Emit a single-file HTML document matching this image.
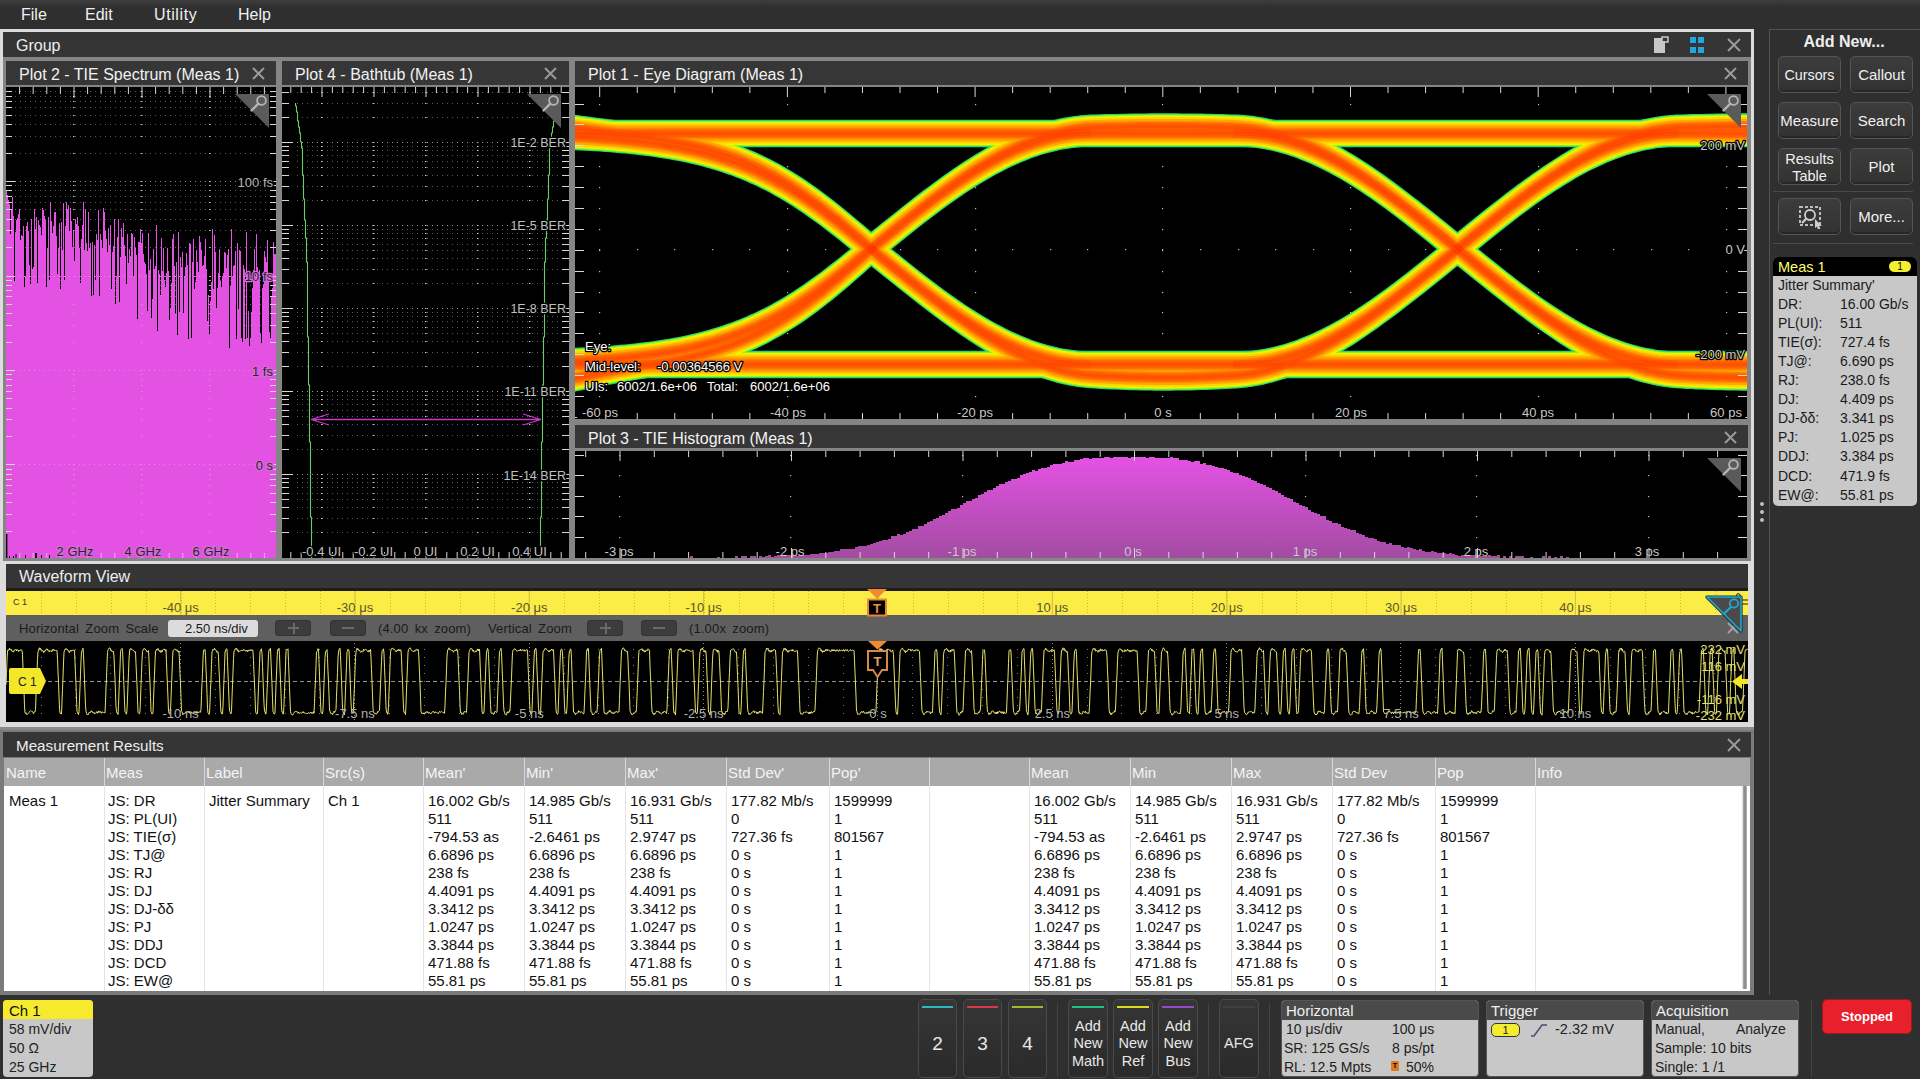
<!DOCTYPE html><html><head><meta charset="utf-8"><style>*{margin:0;padding:0}html,body{width:1920px;height:1079px;overflow:hidden;background:#2f2f2f;font-family:"Liberation Sans", sans-serif;position:relative}</style></head><body>
<div style="position:absolute;left:0px;top:0px;width:1920px;height:29px;background:linear-gradient(#3e3e3e 0px,#333 5px,#2f2f2f 8px,#2f2f2f 29px)"></div>
<div style="position:absolute;left:21px;top:7px;font-size:16px;color:#f0f0f0;font-weight:400;white-space:pre;line-height:1;">File</div>
<div style="position:absolute;left:85px;top:7px;font-size:16px;color:#f0f0f0;font-weight:400;white-space:pre;line-height:1;">Edit</div>
<div style="position:absolute;left:154px;top:7px;font-size:16px;color:#f0f0f0;font-weight:400;white-space:pre;line-height:1;letter-spacing:0.6px">Utility</div>
<div style="position:absolute;left:238px;top:7px;font-size:16px;color:#f0f0f0;font-weight:400;white-space:pre;line-height:1;">Help</div>
<div style="position:absolute;left:0px;top:29px;width:1754px;height:535px;background:#dcdcdc"></div>
<div style="position:absolute;left:3px;top:32px;width:1748px;height:25px;background:#353535"></div>
<div style="position:absolute;left:16px;top:38px;font-size:16px;color:#eeeeee;font-weight:400;white-space:pre;line-height:1;">Group</div>
<div style="position:absolute;left:3px;top:57px;width:1748px;height:504px;background:#858585"></div>
<div style="position:absolute;left:6px;top:61px;width:270px;height:24px;background:#363636"></div>
<div style="position:absolute;left:282px;top:61px;width:287px;height:24px;background:#363636"></div>
<div style="position:absolute;left:575px;top:61px;width:1173px;height:24px;background:#363636"></div>
<div style="position:absolute;left:575px;top:425px;width:1173px;height:23px;background:#363636"></div>
<div style="position:absolute;left:19px;top:66.5px;font-size:16px;color:#f2f2f2;font-weight:400;white-space:pre;line-height:1;">Plot 2 - TIE Spectrum (Meas 1)</div>
<div style="position:absolute;left:295px;top:66.5px;font-size:16px;color:#f2f2f2;font-weight:400;white-space:pre;line-height:1;">Plot 4 - Bathtub (Meas 1)</div>
<div style="position:absolute;left:588px;top:66.5px;font-size:16px;color:#f2f2f2;font-weight:400;white-space:pre;line-height:1;">Plot 1 - Eye Diagram (Meas 1)</div>
<div style="position:absolute;left:588px;top:430.5px;font-size:16px;color:#f2f2f2;font-weight:400;white-space:pre;line-height:1;">Plot 3 - TIE Histogram (Meas 1)</div>
<svg style="position:absolute;left:252px;top:67px" width="13" height="13"><path d="M1 1L12 12M12 1L1 12" stroke="#9a9a9a" stroke-width="2"/></svg>
<svg style="position:absolute;left:544px;top:67px" width="13" height="13"><path d="M1 1L12 12M12 1L1 12" stroke="#9a9a9a" stroke-width="2"/></svg>
<svg style="position:absolute;left:1724px;top:67px" width="13" height="13"><path d="M1 1L12 12M12 1L1 12" stroke="#9a9a9a" stroke-width="2"/></svg>
<svg style="position:absolute;left:1724px;top:431px" width="13" height="13"><path d="M1 1L12 12M12 1L1 12" stroke="#9a9a9a" stroke-width="2"/></svg>
<svg style="position:absolute;left:1652px;top:36px" width="18" height="20"><path d="M2 2H10V5H13V17H2Z" fill="#c8c8c8"/><rect x="10" y="1" width="6" height="5" fill="none" stroke="#c8c8c8" stroke-width="1.5"/></svg>
<svg style="position:absolute;left:1689px;top:36px" width="16" height="20"><rect x="1" y="1" width="6" height="6" fill="#1ea8dc"/><rect x="9" y="1" width="6" height="6" fill="#1ea8dc"/><rect x="1" y="11" width="6" height="6" fill="#1ea8dc"/><rect x="9" y="11" width="6" height="6" fill="#1ea8dc"/></svg>
<svg style="position:absolute;left:1727px;top:38px" width="14" height="14"><path d="M1 1L13 13M13 1L1 13" stroke="#9a9a9a" stroke-width="2"/></svg>
<div style="position:absolute;left:6px;top:87px;width:270px;height:471px;background:#000"><!--PLOT2--></div>
<div style="position:absolute;left:282px;top:87px;width:287px;height:471px;background:#000"><!--PLOT4--></div>
<div style="position:absolute;left:575px;top:87px;width:1172px;height:332px;background:#000"><!--PLOT1--></div>
<div style="position:absolute;left:575px;top:451px;width:1172px;height:107px;background:#000"><!--PLOT3--></div>
<div style="position:absolute;left:0px;top:561px;width:1754px;height:3px;background:#dcdcdc"></div>
<div style="position:absolute;left:0px;top:564px;width:1754px;height:166px;background:#dcdcdc"></div>
<div style="position:absolute;left:6px;top:564px;width:1742px;height:24px;background:#353535"></div>
<div style="position:absolute;left:19px;top:569px;font-size:16px;color:#eeeeee;font-weight:400;white-space:pre;line-height:1;">Waveform View</div>
<div style="position:absolute;left:6px;top:588px;width:1742px;height:3px;background:#1e1e1e"></div>
<div style="position:absolute;left:6px;top:591px;width:1742px;height:24px;background:#fbec46"><!--RULER--></div>
<div style="position:absolute;left:6px;top:615px;width:1742px;height:26px;background:#5f5f5f"><!--ZOOMBAR--></div>
<div style="position:absolute;left:6px;top:641px;width:1742px;height:81px;background:#000"><!--WAVE--></div>
<div style="position:absolute;left:0px;top:727px;width:1754px;height:3px;background:#8a8a8a"></div>
<div style="position:absolute;left:0px;top:730px;width:1754px;height:265px;background:#7a7a7a"></div>
<div style="position:absolute;left:3px;top:732px;width:1748px;height:25px;background:#353535"></div>
<div style="position:absolute;left:16px;top:738px;font-size:15.2px;color:#eeeeee;font-weight:400;white-space:pre;line-height:1;">Measurement Results</div>
<svg style="position:absolute;left:1727px;top:738px" width="14" height="14"><path d="M1 1L13 13M13 1L1 13" stroke="#9a9a9a" stroke-width="2"/></svg>
<div style="position:absolute;left:4px;top:758px;width:1746px;height:28px;background:#a9a9a9"><!--THEAD--></div>
<div style="position:absolute;left:4px;top:786px;width:1746px;height:205px;background:#ffffff"><!--TBODY--></div>
<div style="position:absolute;left:1769px;top:29px;width:151px;height:1px;background:#505050"></div>
<div style="position:absolute;left:1769px;top:29px;width:1px;height:966px;background:#505050"></div>
<div style="position:absolute;left:6px;top:765px;font-size:15px;color:#f4f4f4;font-weight:400;white-space:pre;line-height:1;">Name</div>
<div style="position:absolute;left:104px;top:758px;width:1px;height:233px;background:#e4e4e4"></div>
<div style="position:absolute;left:104px;top:758px;width:1px;height:28px;background:#d8d8d8"></div>
<div style="position:absolute;left:106px;top:765px;font-size:15px;color:#f4f4f4;font-weight:400;white-space:pre;line-height:1;">Meas</div>
<div style="position:absolute;left:204px;top:758px;width:1px;height:233px;background:#e4e4e4"></div>
<div style="position:absolute;left:204px;top:758px;width:1px;height:28px;background:#d8d8d8"></div>
<div style="position:absolute;left:206px;top:765px;font-size:15px;color:#f4f4f4;font-weight:400;white-space:pre;line-height:1;">Label</div>
<div style="position:absolute;left:323px;top:758px;width:1px;height:233px;background:#e4e4e4"></div>
<div style="position:absolute;left:323px;top:758px;width:1px;height:28px;background:#d8d8d8"></div>
<div style="position:absolute;left:325px;top:765px;font-size:15px;color:#f4f4f4;font-weight:400;white-space:pre;line-height:1;">Src(s)</div>
<div style="position:absolute;left:423px;top:758px;width:1px;height:233px;background:#e4e4e4"></div>
<div style="position:absolute;left:423px;top:758px;width:1px;height:28px;background:#d8d8d8"></div>
<div style="position:absolute;left:425px;top:765px;font-size:15px;color:#f4f4f4;font-weight:400;white-space:pre;line-height:1;">Mean'</div>
<div style="position:absolute;left:524px;top:758px;width:1px;height:233px;background:#e4e4e4"></div>
<div style="position:absolute;left:524px;top:758px;width:1px;height:28px;background:#d8d8d8"></div>
<div style="position:absolute;left:526px;top:765px;font-size:15px;color:#f4f4f4;font-weight:400;white-space:pre;line-height:1;">Min'</div>
<div style="position:absolute;left:625px;top:758px;width:1px;height:233px;background:#e4e4e4"></div>
<div style="position:absolute;left:625px;top:758px;width:1px;height:28px;background:#d8d8d8"></div>
<div style="position:absolute;left:627px;top:765px;font-size:15px;color:#f4f4f4;font-weight:400;white-space:pre;line-height:1;">Max'</div>
<div style="position:absolute;left:726px;top:758px;width:1px;height:233px;background:#e4e4e4"></div>
<div style="position:absolute;left:726px;top:758px;width:1px;height:28px;background:#d8d8d8"></div>
<div style="position:absolute;left:728px;top:765px;font-size:15px;color:#f4f4f4;font-weight:400;white-space:pre;line-height:1;">Std Dev'</div>
<div style="position:absolute;left:829px;top:758px;width:1px;height:233px;background:#e4e4e4"></div>
<div style="position:absolute;left:829px;top:758px;width:1px;height:28px;background:#d8d8d8"></div>
<div style="position:absolute;left:831px;top:765px;font-size:15px;color:#f4f4f4;font-weight:400;white-space:pre;line-height:1;">Pop'</div>
<div style="position:absolute;left:929px;top:758px;width:1px;height:233px;background:#e4e4e4"></div>
<div style="position:absolute;left:929px;top:758px;width:1px;height:28px;background:#d8d8d8"></div>
<div style="position:absolute;left:931px;top:765px;font-size:15px;color:#f4f4f4;font-weight:400;white-space:pre;line-height:1;"></div>
<div style="position:absolute;left:1029px;top:758px;width:1px;height:233px;background:#e4e4e4"></div>
<div style="position:absolute;left:1029px;top:758px;width:1px;height:28px;background:#d8d8d8"></div>
<div style="position:absolute;left:1031px;top:765px;font-size:15px;color:#f4f4f4;font-weight:400;white-space:pre;line-height:1;">Mean</div>
<div style="position:absolute;left:1130px;top:758px;width:1px;height:233px;background:#e4e4e4"></div>
<div style="position:absolute;left:1130px;top:758px;width:1px;height:28px;background:#d8d8d8"></div>
<div style="position:absolute;left:1132px;top:765px;font-size:15px;color:#f4f4f4;font-weight:400;white-space:pre;line-height:1;">Min</div>
<div style="position:absolute;left:1231px;top:758px;width:1px;height:233px;background:#e4e4e4"></div>
<div style="position:absolute;left:1231px;top:758px;width:1px;height:28px;background:#d8d8d8"></div>
<div style="position:absolute;left:1233px;top:765px;font-size:15px;color:#f4f4f4;font-weight:400;white-space:pre;line-height:1;">Max</div>
<div style="position:absolute;left:1332px;top:758px;width:1px;height:233px;background:#e4e4e4"></div>
<div style="position:absolute;left:1332px;top:758px;width:1px;height:28px;background:#d8d8d8"></div>
<div style="position:absolute;left:1334px;top:765px;font-size:15px;color:#f4f4f4;font-weight:400;white-space:pre;line-height:1;">Std Dev</div>
<div style="position:absolute;left:1435px;top:758px;width:1px;height:233px;background:#e4e4e4"></div>
<div style="position:absolute;left:1435px;top:758px;width:1px;height:28px;background:#d8d8d8"></div>
<div style="position:absolute;left:1437px;top:765px;font-size:15px;color:#f4f4f4;font-weight:400;white-space:pre;line-height:1;">Pop</div>
<div style="position:absolute;left:1535px;top:758px;width:1px;height:233px;background:#e4e4e4"></div>
<div style="position:absolute;left:1535px;top:758px;width:1px;height:28px;background:#d8d8d8"></div>
<div style="position:absolute;left:1537px;top:765px;font-size:15px;color:#f4f4f4;font-weight:400;white-space:pre;line-height:1;">Info</div>
<div style="position:absolute;left:9px;top:793px;font-size:15px;color:#111;font-weight:400;white-space:pre;line-height:1;">Meas 1</div>
<div style="position:absolute;left:209px;top:793px;font-size:15px;color:#111;font-weight:400;white-space:pre;line-height:1;">Jitter Summary</div>
<div style="position:absolute;left:328px;top:793px;font-size:15px;color:#111;font-weight:400;white-space:pre;line-height:1;">Ch 1</div>
<div style="position:absolute;left:108px;top:793px;font-size:15px;color:#111;font-weight:400;white-space:pre;line-height:1;">JS: DR</div>
<div style="position:absolute;left:428px;top:793px;font-size:15px;color:#111;font-weight:400;white-space:pre;line-height:1;">16.002 Gb/s</div>
<div style="position:absolute;left:529px;top:793px;font-size:15px;color:#111;font-weight:400;white-space:pre;line-height:1;">14.985 Gb/s</div>
<div style="position:absolute;left:630px;top:793px;font-size:15px;color:#111;font-weight:400;white-space:pre;line-height:1;">16.931 Gb/s</div>
<div style="position:absolute;left:731px;top:793px;font-size:15px;color:#111;font-weight:400;white-space:pre;line-height:1;">177.82 Mb/s</div>
<div style="position:absolute;left:834px;top:793px;font-size:15px;color:#111;font-weight:400;white-space:pre;line-height:1;">1599999</div>
<div style="position:absolute;left:1034px;top:793px;font-size:15px;color:#111;font-weight:400;white-space:pre;line-height:1;">16.002 Gb/s</div>
<div style="position:absolute;left:1135px;top:793px;font-size:15px;color:#111;font-weight:400;white-space:pre;line-height:1;">14.985 Gb/s</div>
<div style="position:absolute;left:1236px;top:793px;font-size:15px;color:#111;font-weight:400;white-space:pre;line-height:1;">16.931 Gb/s</div>
<div style="position:absolute;left:1337px;top:793px;font-size:15px;color:#111;font-weight:400;white-space:pre;line-height:1;">177.82 Mb/s</div>
<div style="position:absolute;left:1440px;top:793px;font-size:15px;color:#111;font-weight:400;white-space:pre;line-height:1;">1599999</div>
<div style="position:absolute;left:108px;top:811px;font-size:15px;color:#111;font-weight:400;white-space:pre;line-height:1;">JS: PL(UI)</div>
<div style="position:absolute;left:428px;top:811px;font-size:15px;color:#111;font-weight:400;white-space:pre;line-height:1;">511</div>
<div style="position:absolute;left:529px;top:811px;font-size:15px;color:#111;font-weight:400;white-space:pre;line-height:1;">511</div>
<div style="position:absolute;left:630px;top:811px;font-size:15px;color:#111;font-weight:400;white-space:pre;line-height:1;">511</div>
<div style="position:absolute;left:731px;top:811px;font-size:15px;color:#111;font-weight:400;white-space:pre;line-height:1;">0</div>
<div style="position:absolute;left:834px;top:811px;font-size:15px;color:#111;font-weight:400;white-space:pre;line-height:1;">1</div>
<div style="position:absolute;left:1034px;top:811px;font-size:15px;color:#111;font-weight:400;white-space:pre;line-height:1;">511</div>
<div style="position:absolute;left:1135px;top:811px;font-size:15px;color:#111;font-weight:400;white-space:pre;line-height:1;">511</div>
<div style="position:absolute;left:1236px;top:811px;font-size:15px;color:#111;font-weight:400;white-space:pre;line-height:1;">511</div>
<div style="position:absolute;left:1337px;top:811px;font-size:15px;color:#111;font-weight:400;white-space:pre;line-height:1;">0</div>
<div style="position:absolute;left:1440px;top:811px;font-size:15px;color:#111;font-weight:400;white-space:pre;line-height:1;">1</div>
<div style="position:absolute;left:108px;top:829px;font-size:15px;color:#111;font-weight:400;white-space:pre;line-height:1;">JS: TIE(σ)</div>
<div style="position:absolute;left:428px;top:829px;font-size:15px;color:#111;font-weight:400;white-space:pre;line-height:1;">-794.53 as</div>
<div style="position:absolute;left:529px;top:829px;font-size:15px;color:#111;font-weight:400;white-space:pre;line-height:1;">-2.6461 ps</div>
<div style="position:absolute;left:630px;top:829px;font-size:15px;color:#111;font-weight:400;white-space:pre;line-height:1;">2.9747 ps</div>
<div style="position:absolute;left:731px;top:829px;font-size:15px;color:#111;font-weight:400;white-space:pre;line-height:1;">727.36 fs</div>
<div style="position:absolute;left:834px;top:829px;font-size:15px;color:#111;font-weight:400;white-space:pre;line-height:1;">801567</div>
<div style="position:absolute;left:1034px;top:829px;font-size:15px;color:#111;font-weight:400;white-space:pre;line-height:1;">-794.53 as</div>
<div style="position:absolute;left:1135px;top:829px;font-size:15px;color:#111;font-weight:400;white-space:pre;line-height:1;">-2.6461 ps</div>
<div style="position:absolute;left:1236px;top:829px;font-size:15px;color:#111;font-weight:400;white-space:pre;line-height:1;">2.9747 ps</div>
<div style="position:absolute;left:1337px;top:829px;font-size:15px;color:#111;font-weight:400;white-space:pre;line-height:1;">727.36 fs</div>
<div style="position:absolute;left:1440px;top:829px;font-size:15px;color:#111;font-weight:400;white-space:pre;line-height:1;">801567</div>
<div style="position:absolute;left:108px;top:847px;font-size:15px;color:#111;font-weight:400;white-space:pre;line-height:1;">JS: TJ@</div>
<div style="position:absolute;left:428px;top:847px;font-size:15px;color:#111;font-weight:400;white-space:pre;line-height:1;">6.6896 ps</div>
<div style="position:absolute;left:529px;top:847px;font-size:15px;color:#111;font-weight:400;white-space:pre;line-height:1;">6.6896 ps</div>
<div style="position:absolute;left:630px;top:847px;font-size:15px;color:#111;font-weight:400;white-space:pre;line-height:1;">6.6896 ps</div>
<div style="position:absolute;left:731px;top:847px;font-size:15px;color:#111;font-weight:400;white-space:pre;line-height:1;">0 s</div>
<div style="position:absolute;left:834px;top:847px;font-size:15px;color:#111;font-weight:400;white-space:pre;line-height:1;">1</div>
<div style="position:absolute;left:1034px;top:847px;font-size:15px;color:#111;font-weight:400;white-space:pre;line-height:1;">6.6896 ps</div>
<div style="position:absolute;left:1135px;top:847px;font-size:15px;color:#111;font-weight:400;white-space:pre;line-height:1;">6.6896 ps</div>
<div style="position:absolute;left:1236px;top:847px;font-size:15px;color:#111;font-weight:400;white-space:pre;line-height:1;">6.6896 ps</div>
<div style="position:absolute;left:1337px;top:847px;font-size:15px;color:#111;font-weight:400;white-space:pre;line-height:1;">0 s</div>
<div style="position:absolute;left:1440px;top:847px;font-size:15px;color:#111;font-weight:400;white-space:pre;line-height:1;">1</div>
<div style="position:absolute;left:108px;top:865px;font-size:15px;color:#111;font-weight:400;white-space:pre;line-height:1;">JS: RJ</div>
<div style="position:absolute;left:428px;top:865px;font-size:15px;color:#111;font-weight:400;white-space:pre;line-height:1;">238 fs</div>
<div style="position:absolute;left:529px;top:865px;font-size:15px;color:#111;font-weight:400;white-space:pre;line-height:1;">238 fs</div>
<div style="position:absolute;left:630px;top:865px;font-size:15px;color:#111;font-weight:400;white-space:pre;line-height:1;">238 fs</div>
<div style="position:absolute;left:731px;top:865px;font-size:15px;color:#111;font-weight:400;white-space:pre;line-height:1;">0 s</div>
<div style="position:absolute;left:834px;top:865px;font-size:15px;color:#111;font-weight:400;white-space:pre;line-height:1;">1</div>
<div style="position:absolute;left:1034px;top:865px;font-size:15px;color:#111;font-weight:400;white-space:pre;line-height:1;">238 fs</div>
<div style="position:absolute;left:1135px;top:865px;font-size:15px;color:#111;font-weight:400;white-space:pre;line-height:1;">238 fs</div>
<div style="position:absolute;left:1236px;top:865px;font-size:15px;color:#111;font-weight:400;white-space:pre;line-height:1;">238 fs</div>
<div style="position:absolute;left:1337px;top:865px;font-size:15px;color:#111;font-weight:400;white-space:pre;line-height:1;">0 s</div>
<div style="position:absolute;left:1440px;top:865px;font-size:15px;color:#111;font-weight:400;white-space:pre;line-height:1;">1</div>
<div style="position:absolute;left:108px;top:883px;font-size:15px;color:#111;font-weight:400;white-space:pre;line-height:1;">JS: DJ</div>
<div style="position:absolute;left:428px;top:883px;font-size:15px;color:#111;font-weight:400;white-space:pre;line-height:1;">4.4091 ps</div>
<div style="position:absolute;left:529px;top:883px;font-size:15px;color:#111;font-weight:400;white-space:pre;line-height:1;">4.4091 ps</div>
<div style="position:absolute;left:630px;top:883px;font-size:15px;color:#111;font-weight:400;white-space:pre;line-height:1;">4.4091 ps</div>
<div style="position:absolute;left:731px;top:883px;font-size:15px;color:#111;font-weight:400;white-space:pre;line-height:1;">0 s</div>
<div style="position:absolute;left:834px;top:883px;font-size:15px;color:#111;font-weight:400;white-space:pre;line-height:1;">1</div>
<div style="position:absolute;left:1034px;top:883px;font-size:15px;color:#111;font-weight:400;white-space:pre;line-height:1;">4.4091 ps</div>
<div style="position:absolute;left:1135px;top:883px;font-size:15px;color:#111;font-weight:400;white-space:pre;line-height:1;">4.4091 ps</div>
<div style="position:absolute;left:1236px;top:883px;font-size:15px;color:#111;font-weight:400;white-space:pre;line-height:1;">4.4091 ps</div>
<div style="position:absolute;left:1337px;top:883px;font-size:15px;color:#111;font-weight:400;white-space:pre;line-height:1;">0 s</div>
<div style="position:absolute;left:1440px;top:883px;font-size:15px;color:#111;font-weight:400;white-space:pre;line-height:1;">1</div>
<div style="position:absolute;left:108px;top:901px;font-size:15px;color:#111;font-weight:400;white-space:pre;line-height:1;">JS: DJ-δδ</div>
<div style="position:absolute;left:428px;top:901px;font-size:15px;color:#111;font-weight:400;white-space:pre;line-height:1;">3.3412 ps</div>
<div style="position:absolute;left:529px;top:901px;font-size:15px;color:#111;font-weight:400;white-space:pre;line-height:1;">3.3412 ps</div>
<div style="position:absolute;left:630px;top:901px;font-size:15px;color:#111;font-weight:400;white-space:pre;line-height:1;">3.3412 ps</div>
<div style="position:absolute;left:731px;top:901px;font-size:15px;color:#111;font-weight:400;white-space:pre;line-height:1;">0 s</div>
<div style="position:absolute;left:834px;top:901px;font-size:15px;color:#111;font-weight:400;white-space:pre;line-height:1;">1</div>
<div style="position:absolute;left:1034px;top:901px;font-size:15px;color:#111;font-weight:400;white-space:pre;line-height:1;">3.3412 ps</div>
<div style="position:absolute;left:1135px;top:901px;font-size:15px;color:#111;font-weight:400;white-space:pre;line-height:1;">3.3412 ps</div>
<div style="position:absolute;left:1236px;top:901px;font-size:15px;color:#111;font-weight:400;white-space:pre;line-height:1;">3.3412 ps</div>
<div style="position:absolute;left:1337px;top:901px;font-size:15px;color:#111;font-weight:400;white-space:pre;line-height:1;">0 s</div>
<div style="position:absolute;left:1440px;top:901px;font-size:15px;color:#111;font-weight:400;white-space:pre;line-height:1;">1</div>
<div style="position:absolute;left:108px;top:919px;font-size:15px;color:#111;font-weight:400;white-space:pre;line-height:1;">JS: PJ</div>
<div style="position:absolute;left:428px;top:919px;font-size:15px;color:#111;font-weight:400;white-space:pre;line-height:1;">1.0247 ps</div>
<div style="position:absolute;left:529px;top:919px;font-size:15px;color:#111;font-weight:400;white-space:pre;line-height:1;">1.0247 ps</div>
<div style="position:absolute;left:630px;top:919px;font-size:15px;color:#111;font-weight:400;white-space:pre;line-height:1;">1.0247 ps</div>
<div style="position:absolute;left:731px;top:919px;font-size:15px;color:#111;font-weight:400;white-space:pre;line-height:1;">0 s</div>
<div style="position:absolute;left:834px;top:919px;font-size:15px;color:#111;font-weight:400;white-space:pre;line-height:1;">1</div>
<div style="position:absolute;left:1034px;top:919px;font-size:15px;color:#111;font-weight:400;white-space:pre;line-height:1;">1.0247 ps</div>
<div style="position:absolute;left:1135px;top:919px;font-size:15px;color:#111;font-weight:400;white-space:pre;line-height:1;">1.0247 ps</div>
<div style="position:absolute;left:1236px;top:919px;font-size:15px;color:#111;font-weight:400;white-space:pre;line-height:1;">1.0247 ps</div>
<div style="position:absolute;left:1337px;top:919px;font-size:15px;color:#111;font-weight:400;white-space:pre;line-height:1;">0 s</div>
<div style="position:absolute;left:1440px;top:919px;font-size:15px;color:#111;font-weight:400;white-space:pre;line-height:1;">1</div>
<div style="position:absolute;left:108px;top:937px;font-size:15px;color:#111;font-weight:400;white-space:pre;line-height:1;">JS: DDJ</div>
<div style="position:absolute;left:428px;top:937px;font-size:15px;color:#111;font-weight:400;white-space:pre;line-height:1;">3.3844 ps</div>
<div style="position:absolute;left:529px;top:937px;font-size:15px;color:#111;font-weight:400;white-space:pre;line-height:1;">3.3844 ps</div>
<div style="position:absolute;left:630px;top:937px;font-size:15px;color:#111;font-weight:400;white-space:pre;line-height:1;">3.3844 ps</div>
<div style="position:absolute;left:731px;top:937px;font-size:15px;color:#111;font-weight:400;white-space:pre;line-height:1;">0 s</div>
<div style="position:absolute;left:834px;top:937px;font-size:15px;color:#111;font-weight:400;white-space:pre;line-height:1;">1</div>
<div style="position:absolute;left:1034px;top:937px;font-size:15px;color:#111;font-weight:400;white-space:pre;line-height:1;">3.3844 ps</div>
<div style="position:absolute;left:1135px;top:937px;font-size:15px;color:#111;font-weight:400;white-space:pre;line-height:1;">3.3844 ps</div>
<div style="position:absolute;left:1236px;top:937px;font-size:15px;color:#111;font-weight:400;white-space:pre;line-height:1;">3.3844 ps</div>
<div style="position:absolute;left:1337px;top:937px;font-size:15px;color:#111;font-weight:400;white-space:pre;line-height:1;">0 s</div>
<div style="position:absolute;left:1440px;top:937px;font-size:15px;color:#111;font-weight:400;white-space:pre;line-height:1;">1</div>
<div style="position:absolute;left:108px;top:955px;font-size:15px;color:#111;font-weight:400;white-space:pre;line-height:1;">JS: DCD</div>
<div style="position:absolute;left:428px;top:955px;font-size:15px;color:#111;font-weight:400;white-space:pre;line-height:1;">471.88 fs</div>
<div style="position:absolute;left:529px;top:955px;font-size:15px;color:#111;font-weight:400;white-space:pre;line-height:1;">471.88 fs</div>
<div style="position:absolute;left:630px;top:955px;font-size:15px;color:#111;font-weight:400;white-space:pre;line-height:1;">471.88 fs</div>
<div style="position:absolute;left:731px;top:955px;font-size:15px;color:#111;font-weight:400;white-space:pre;line-height:1;">0 s</div>
<div style="position:absolute;left:834px;top:955px;font-size:15px;color:#111;font-weight:400;white-space:pre;line-height:1;">1</div>
<div style="position:absolute;left:1034px;top:955px;font-size:15px;color:#111;font-weight:400;white-space:pre;line-height:1;">471.88 fs</div>
<div style="position:absolute;left:1135px;top:955px;font-size:15px;color:#111;font-weight:400;white-space:pre;line-height:1;">471.88 fs</div>
<div style="position:absolute;left:1236px;top:955px;font-size:15px;color:#111;font-weight:400;white-space:pre;line-height:1;">471.88 fs</div>
<div style="position:absolute;left:1337px;top:955px;font-size:15px;color:#111;font-weight:400;white-space:pre;line-height:1;">0 s</div>
<div style="position:absolute;left:1440px;top:955px;font-size:15px;color:#111;font-weight:400;white-space:pre;line-height:1;">1</div>
<div style="position:absolute;left:108px;top:973px;font-size:15px;color:#111;font-weight:400;white-space:pre;line-height:1;">JS: EW@</div>
<div style="position:absolute;left:428px;top:973px;font-size:15px;color:#111;font-weight:400;white-space:pre;line-height:1;">55.81 ps</div>
<div style="position:absolute;left:529px;top:973px;font-size:15px;color:#111;font-weight:400;white-space:pre;line-height:1;">55.81 ps</div>
<div style="position:absolute;left:630px;top:973px;font-size:15px;color:#111;font-weight:400;white-space:pre;line-height:1;">55.81 ps</div>
<div style="position:absolute;left:731px;top:973px;font-size:15px;color:#111;font-weight:400;white-space:pre;line-height:1;">0 s</div>
<div style="position:absolute;left:834px;top:973px;font-size:15px;color:#111;font-weight:400;white-space:pre;line-height:1;">1</div>
<div style="position:absolute;left:1034px;top:973px;font-size:15px;color:#111;font-weight:400;white-space:pre;line-height:1;">55.81 ps</div>
<div style="position:absolute;left:1135px;top:973px;font-size:15px;color:#111;font-weight:400;white-space:pre;line-height:1;">55.81 ps</div>
<div style="position:absolute;left:1236px;top:973px;font-size:15px;color:#111;font-weight:400;white-space:pre;line-height:1;">55.81 ps</div>
<div style="position:absolute;left:1337px;top:973px;font-size:15px;color:#111;font-weight:400;white-space:pre;line-height:1;">0 s</div>
<div style="position:absolute;left:1440px;top:973px;font-size:15px;color:#111;font-weight:400;white-space:pre;line-height:1;">1</div>
<div style="position:absolute;left:1741px;top:786px;width:6px;height:203px;background:linear-gradient(90deg,#ffffff,#e0e0e0 30%,#8e8e8e 45%,#8e8e8e 85%,#d0d0d0)"></div>
<svg style="position:absolute;left:6px;top:87px;overflow:hidden" width="270" height="471" viewBox="6 87 270 471" ><line x1="15" y1="181.5" x2="270" y2="181.5" stroke="#8a8a8a" stroke-width="1" stroke-dasharray="1 4" stroke-dashoffset="0"/><line x1="15" y1="276.5" x2="270" y2="276.5" stroke="#8a8a8a" stroke-width="1" stroke-dasharray="1 4" stroke-dashoffset="0"/><line x1="15" y1="370.5" x2="270" y2="370.5" stroke="#8a8a8a" stroke-width="1" stroke-dasharray="1 4" stroke-dashoffset="0"/><line x1="15" y1="464.5" x2="270" y2="464.5" stroke="#8a8a8a" stroke-width="1" stroke-dasharray="1 4" stroke-dashoffset="0"/><line x1="15" y1="153.5" x2="270" y2="153.5" stroke="#5a5a5a" stroke-width="1" stroke-dasharray="1 4" stroke-dashoffset="0"/><line x1="15" y1="136.5" x2="270" y2="136.5" stroke="#5a5a5a" stroke-width="1" stroke-dasharray="1 4" stroke-dashoffset="0"/><line x1="15" y1="124.5" x2="270" y2="124.5" stroke="#5a5a5a" stroke-width="1" stroke-dasharray="1 4" stroke-dashoffset="0"/><line x1="15" y1="115.5" x2="270" y2="115.5" stroke="#5a5a5a" stroke-width="1" stroke-dasharray="1 4" stroke-dashoffset="0"/><line x1="15" y1="107.5" x2="270" y2="107.5" stroke="#5a5a5a" stroke-width="1" stroke-dasharray="1 4" stroke-dashoffset="0"/><line x1="15" y1="101.5" x2="270" y2="101.5" stroke="#5a5a5a" stroke-width="1" stroke-dasharray="1 4" stroke-dashoffset="0"/><line x1="15" y1="96.5" x2="270" y2="96.5" stroke="#5a5a5a" stroke-width="1" stroke-dasharray="1 4" stroke-dashoffset="0"/><line x1="15" y1="91.5" x2="270" y2="91.5" stroke="#5a5a5a" stroke-width="1" stroke-dasharray="1 4" stroke-dashoffset="0"/><line x1="15" y1="247.5" x2="270" y2="247.5" stroke="#5a5a5a" stroke-width="1" stroke-dasharray="1 4" stroke-dashoffset="0"/><line x1="15" y1="230.5" x2="270" y2="230.5" stroke="#5a5a5a" stroke-width="1" stroke-dasharray="1 4" stroke-dashoffset="0"/><line x1="15" y1="219.5" x2="270" y2="219.5" stroke="#5a5a5a" stroke-width="1" stroke-dasharray="1 4" stroke-dashoffset="0"/><line x1="15" y1="209.5" x2="270" y2="209.5" stroke="#5a5a5a" stroke-width="1" stroke-dasharray="1 4" stroke-dashoffset="0"/><line x1="15" y1="202.5" x2="270" y2="202.5" stroke="#5a5a5a" stroke-width="1" stroke-dasharray="1 4" stroke-dashoffset="0"/><line x1="15" y1="196.5" x2="270" y2="196.5" stroke="#5a5a5a" stroke-width="1" stroke-dasharray="1 4" stroke-dashoffset="0"/><line x1="15" y1="190.5" x2="270" y2="190.5" stroke="#5a5a5a" stroke-width="1" stroke-dasharray="1 4" stroke-dashoffset="0"/><line x1="15" y1="185.5" x2="270" y2="185.5" stroke="#5a5a5a" stroke-width="1" stroke-dasharray="1 4" stroke-dashoffset="0"/><line x1="15" y1="342.5" x2="270" y2="342.5" stroke="#5a5a5a" stroke-width="1" stroke-dasharray="1 4" stroke-dashoffset="0"/><line x1="15" y1="325.5" x2="270" y2="325.5" stroke="#5a5a5a" stroke-width="1" stroke-dasharray="1 4" stroke-dashoffset="0"/><line x1="15" y1="313.5" x2="270" y2="313.5" stroke="#5a5a5a" stroke-width="1" stroke-dasharray="1 4" stroke-dashoffset="0"/><line x1="15" y1="304.5" x2="270" y2="304.5" stroke="#5a5a5a" stroke-width="1" stroke-dasharray="1 4" stroke-dashoffset="0"/><line x1="15" y1="296.5" x2="270" y2="296.5" stroke="#5a5a5a" stroke-width="1" stroke-dasharray="1 4" stroke-dashoffset="0"/><line x1="15" y1="290.5" x2="270" y2="290.5" stroke="#5a5a5a" stroke-width="1" stroke-dasharray="1 4" stroke-dashoffset="0"/><line x1="15" y1="285.5" x2="270" y2="285.5" stroke="#5a5a5a" stroke-width="1" stroke-dasharray="1 4" stroke-dashoffset="0"/><line x1="15" y1="280.5" x2="270" y2="280.5" stroke="#5a5a5a" stroke-width="1" stroke-dasharray="1 4" stroke-dashoffset="0"/><line x1="15" y1="436.5" x2="270" y2="436.5" stroke="#5a5a5a" stroke-width="1" stroke-dasharray="1 4" stroke-dashoffset="0"/><line x1="15" y1="419.5" x2="270" y2="419.5" stroke="#5a5a5a" stroke-width="1" stroke-dasharray="1 4" stroke-dashoffset="0"/><line x1="15" y1="408.5" x2="270" y2="408.5" stroke="#5a5a5a" stroke-width="1" stroke-dasharray="1 4" stroke-dashoffset="0"/><line x1="15" y1="398.5" x2="270" y2="398.5" stroke="#5a5a5a" stroke-width="1" stroke-dasharray="1 4" stroke-dashoffset="0"/><line x1="15" y1="391.5" x2="270" y2="391.5" stroke="#5a5a5a" stroke-width="1" stroke-dasharray="1 4" stroke-dashoffset="0"/><line x1="15" y1="385.5" x2="270" y2="385.5" stroke="#5a5a5a" stroke-width="1" stroke-dasharray="1 4" stroke-dashoffset="0"/><line x1="15" y1="379.5" x2="270" y2="379.5" stroke="#5a5a5a" stroke-width="1" stroke-dasharray="1 4" stroke-dashoffset="0"/><line x1="15" y1="374.5" x2="270" y2="374.5" stroke="#5a5a5a" stroke-width="1" stroke-dasharray="1 4" stroke-dashoffset="0"/><line x1="15" y1="531.5" x2="270" y2="531.5" stroke="#5a5a5a" stroke-width="1" stroke-dasharray="1 4" stroke-dashoffset="0"/><line x1="15" y1="514.5" x2="270" y2="514.5" stroke="#5a5a5a" stroke-width="1" stroke-dasharray="1 4" stroke-dashoffset="0"/><line x1="15" y1="502.5" x2="270" y2="502.5" stroke="#5a5a5a" stroke-width="1" stroke-dasharray="1 4" stroke-dashoffset="0"/><line x1="15" y1="493.5" x2="270" y2="493.5" stroke="#5a5a5a" stroke-width="1" stroke-dasharray="1 4" stroke-dashoffset="0"/><line x1="15" y1="485.5" x2="270" y2="485.5" stroke="#5a5a5a" stroke-width="1" stroke-dasharray="1 4" stroke-dashoffset="0"/><line x1="15" y1="479.5" x2="270" y2="479.5" stroke="#5a5a5a" stroke-width="1" stroke-dasharray="1 4" stroke-dashoffset="0"/><line x1="15" y1="474.5" x2="270" y2="474.5" stroke="#5a5a5a" stroke-width="1" stroke-dasharray="1 4" stroke-dashoffset="0"/><line x1="15" y1="469.5" x2="270" y2="469.5" stroke="#5a5a5a" stroke-width="1" stroke-dasharray="1 4" stroke-dashoffset="0"/><rect x="73" y="153" width="1.5" height="1" fill="#c0c0c0"/><rect x="73" y="136" width="1.5" height="1" fill="#c0c0c0"/><rect x="73" y="124" width="1.5" height="1" fill="#c0c0c0"/><rect x="73" y="115" width="1.5" height="1" fill="#c0c0c0"/><rect x="73" y="107" width="1.5" height="1" fill="#c0c0c0"/><rect x="73" y="101" width="1.5" height="1" fill="#c0c0c0"/><rect x="73" y="96" width="1.5" height="1" fill="#c0c0c0"/><rect x="73" y="91" width="1.5" height="1" fill="#c0c0c0"/><rect x="73" y="247" width="1.5" height="1" fill="#c0c0c0"/><rect x="73" y="230" width="1.5" height="1" fill="#c0c0c0"/><rect x="73" y="219" width="1.5" height="1" fill="#c0c0c0"/><rect x="73" y="209" width="1.5" height="1" fill="#c0c0c0"/><rect x="73" y="202" width="1.5" height="1" fill="#c0c0c0"/><rect x="73" y="196" width="1.5" height="1" fill="#c0c0c0"/><rect x="73" y="190" width="1.5" height="1" fill="#c0c0c0"/><rect x="73" y="185" width="1.5" height="1" fill="#c0c0c0"/><rect x="73" y="342" width="1.5" height="1" fill="#c0c0c0"/><rect x="73" y="325" width="1.5" height="1" fill="#c0c0c0"/><rect x="73" y="313" width="1.5" height="1" fill="#c0c0c0"/><rect x="73" y="304" width="1.5" height="1" fill="#c0c0c0"/><rect x="73" y="296" width="1.5" height="1" fill="#c0c0c0"/><rect x="73" y="290" width="1.5" height="1" fill="#c0c0c0"/><rect x="73" y="285" width="1.5" height="1" fill="#c0c0c0"/><rect x="73" y="280" width="1.5" height="1" fill="#c0c0c0"/><rect x="73" y="436" width="1.5" height="1" fill="#c0c0c0"/><rect x="73" y="419" width="1.5" height="1" fill="#c0c0c0"/><rect x="73" y="408" width="1.5" height="1" fill="#c0c0c0"/><rect x="73" y="398" width="1.5" height="1" fill="#c0c0c0"/><rect x="73" y="391" width="1.5" height="1" fill="#c0c0c0"/><rect x="73" y="385" width="1.5" height="1" fill="#c0c0c0"/><rect x="73" y="379" width="1.5" height="1" fill="#c0c0c0"/><rect x="73" y="374" width="1.5" height="1" fill="#c0c0c0"/><rect x="73" y="531" width="1.5" height="1" fill="#c0c0c0"/><rect x="73" y="514" width="1.5" height="1" fill="#c0c0c0"/><rect x="73" y="502" width="1.5" height="1" fill="#c0c0c0"/><rect x="73" y="493" width="1.5" height="1" fill="#c0c0c0"/><rect x="73" y="485" width="1.5" height="1" fill="#c0c0c0"/><rect x="73" y="479" width="1.5" height="1" fill="#c0c0c0"/><rect x="73" y="474" width="1.5" height="1" fill="#c0c0c0"/><rect x="73" y="469" width="1.5" height="1" fill="#c0c0c0"/><rect x="73" y="181" width="1.5" height="1" fill="#c0c0c0"/><rect x="73" y="276" width="1.5" height="1" fill="#c0c0c0"/><rect x="73" y="370" width="1.5" height="1" fill="#c0c0c0"/><rect x="73" y="464" width="1.5" height="1" fill="#c0c0c0"/><rect x="141" y="153" width="1.5" height="1" fill="#c0c0c0"/><rect x="141" y="136" width="1.5" height="1" fill="#c0c0c0"/><rect x="141" y="124" width="1.5" height="1" fill="#c0c0c0"/><rect x="141" y="115" width="1.5" height="1" fill="#c0c0c0"/><rect x="141" y="107" width="1.5" height="1" fill="#c0c0c0"/><rect x="141" y="101" width="1.5" height="1" fill="#c0c0c0"/><rect x="141" y="96" width="1.5" height="1" fill="#c0c0c0"/><rect x="141" y="91" width="1.5" height="1" fill="#c0c0c0"/><rect x="141" y="247" width="1.5" height="1" fill="#c0c0c0"/><rect x="141" y="230" width="1.5" height="1" fill="#c0c0c0"/><rect x="141" y="219" width="1.5" height="1" fill="#c0c0c0"/><rect x="141" y="209" width="1.5" height="1" fill="#c0c0c0"/><rect x="141" y="202" width="1.5" height="1" fill="#c0c0c0"/><rect x="141" y="196" width="1.5" height="1" fill="#c0c0c0"/><rect x="141" y="190" width="1.5" height="1" fill="#c0c0c0"/><rect x="141" y="185" width="1.5" height="1" fill="#c0c0c0"/><rect x="141" y="342" width="1.5" height="1" fill="#c0c0c0"/><rect x="141" y="325" width="1.5" height="1" fill="#c0c0c0"/><rect x="141" y="313" width="1.5" height="1" fill="#c0c0c0"/><rect x="141" y="304" width="1.5" height="1" fill="#c0c0c0"/><rect x="141" y="296" width="1.5" height="1" fill="#c0c0c0"/><rect x="141" y="290" width="1.5" height="1" fill="#c0c0c0"/><rect x="141" y="285" width="1.5" height="1" fill="#c0c0c0"/><rect x="141" y="280" width="1.5" height="1" fill="#c0c0c0"/><rect x="141" y="436" width="1.5" height="1" fill="#c0c0c0"/><rect x="141" y="419" width="1.5" height="1" fill="#c0c0c0"/><rect x="141" y="408" width="1.5" height="1" fill="#c0c0c0"/><rect x="141" y="398" width="1.5" height="1" fill="#c0c0c0"/><rect x="141" y="391" width="1.5" height="1" fill="#c0c0c0"/><rect x="141" y="385" width="1.5" height="1" fill="#c0c0c0"/><rect x="141" y="379" width="1.5" height="1" fill="#c0c0c0"/><rect x="141" y="374" width="1.5" height="1" fill="#c0c0c0"/><rect x="141" y="531" width="1.5" height="1" fill="#c0c0c0"/><rect x="141" y="514" width="1.5" height="1" fill="#c0c0c0"/><rect x="141" y="502" width="1.5" height="1" fill="#c0c0c0"/><rect x="141" y="493" width="1.5" height="1" fill="#c0c0c0"/><rect x="141" y="485" width="1.5" height="1" fill="#c0c0c0"/><rect x="141" y="479" width="1.5" height="1" fill="#c0c0c0"/><rect x="141" y="474" width="1.5" height="1" fill="#c0c0c0"/><rect x="141" y="469" width="1.5" height="1" fill="#c0c0c0"/><rect x="141" y="181" width="1.5" height="1" fill="#c0c0c0"/><rect x="141" y="276" width="1.5" height="1" fill="#c0c0c0"/><rect x="141" y="370" width="1.5" height="1" fill="#c0c0c0"/><rect x="141" y="464" width="1.5" height="1" fill="#c0c0c0"/><rect x="209" y="153" width="1.5" height="1" fill="#c0c0c0"/><rect x="209" y="136" width="1.5" height="1" fill="#c0c0c0"/><rect x="209" y="124" width="1.5" height="1" fill="#c0c0c0"/><rect x="209" y="115" width="1.5" height="1" fill="#c0c0c0"/><rect x="209" y="107" width="1.5" height="1" fill="#c0c0c0"/><rect x="209" y="101" width="1.5" height="1" fill="#c0c0c0"/><rect x="209" y="96" width="1.5" height="1" fill="#c0c0c0"/><rect x="209" y="91" width="1.5" height="1" fill="#c0c0c0"/><rect x="209" y="247" width="1.5" height="1" fill="#c0c0c0"/><rect x="209" y="230" width="1.5" height="1" fill="#c0c0c0"/><rect x="209" y="219" width="1.5" height="1" fill="#c0c0c0"/><rect x="209" y="209" width="1.5" height="1" fill="#c0c0c0"/><rect x="209" y="202" width="1.5" height="1" fill="#c0c0c0"/><rect x="209" y="196" width="1.5" height="1" fill="#c0c0c0"/><rect x="209" y="190" width="1.5" height="1" fill="#c0c0c0"/><rect x="209" y="185" width="1.5" height="1" fill="#c0c0c0"/><rect x="209" y="342" width="1.5" height="1" fill="#c0c0c0"/><rect x="209" y="325" width="1.5" height="1" fill="#c0c0c0"/><rect x="209" y="313" width="1.5" height="1" fill="#c0c0c0"/><rect x="209" y="304" width="1.5" height="1" fill="#c0c0c0"/><rect x="209" y="296" width="1.5" height="1" fill="#c0c0c0"/><rect x="209" y="290" width="1.5" height="1" fill="#c0c0c0"/><rect x="209" y="285" width="1.5" height="1" fill="#c0c0c0"/><rect x="209" y="280" width="1.5" height="1" fill="#c0c0c0"/><rect x="209" y="436" width="1.5" height="1" fill="#c0c0c0"/><rect x="209" y="419" width="1.5" height="1" fill="#c0c0c0"/><rect x="209" y="408" width="1.5" height="1" fill="#c0c0c0"/><rect x="209" y="398" width="1.5" height="1" fill="#c0c0c0"/><rect x="209" y="391" width="1.5" height="1" fill="#c0c0c0"/><rect x="209" y="385" width="1.5" height="1" fill="#c0c0c0"/><rect x="209" y="379" width="1.5" height="1" fill="#c0c0c0"/><rect x="209" y="374" width="1.5" height="1" fill="#c0c0c0"/><rect x="209" y="531" width="1.5" height="1" fill="#c0c0c0"/><rect x="209" y="514" width="1.5" height="1" fill="#c0c0c0"/><rect x="209" y="502" width="1.5" height="1" fill="#c0c0c0"/><rect x="209" y="493" width="1.5" height="1" fill="#c0c0c0"/><rect x="209" y="485" width="1.5" height="1" fill="#c0c0c0"/><rect x="209" y="479" width="1.5" height="1" fill="#c0c0c0"/><rect x="209" y="474" width="1.5" height="1" fill="#c0c0c0"/><rect x="209" y="469" width="1.5" height="1" fill="#c0c0c0"/><rect x="209" y="181" width="1.5" height="1" fill="#c0c0c0"/><rect x="209" y="276" width="1.5" height="1" fill="#c0c0c0"/><rect x="209" y="370" width="1.5" height="1" fill="#c0c0c0"/><rect x="209" y="464" width="1.5" height="1" fill="#c0c0c0"/><path d="M6 558H6V190H7V195H8V200H9V204H10V234H11V210H12V197H13V216H14V281H15V232H16V220H17V218H18V214H19V209H20V240H21V235H22V236H23V226H24V287H25V276H26V226H27V222H28V231H29V265H30V284H31V219H32V269H33V267H34V209H35V229H36V217H37V283H38V220H39V225H40V227H41V235H42V208H43V210H44V216H45V220H46V287H47V248H48V217H49V280H50V202H51V221H52V233H53V226H54V212H55V212H56V236H57V274H58V248H59V223H60V289H61V222H62V250H63V203H64V280H65V226H66V202H67V209H68V205H69V231H70V208H71V221H72V247H73V231H74V261H75V219H76V224H77V217H78V226H79V248H80V283H81V239H82V225H83V202H84V250H85V209H86V243H87V251H88V212H89V248H90V243H91V296H92V242H93V295H94V245H95V280H96V234H97V240H98V210H99V296H100V234H101V240H102V248H103V208H104V212H105V231H106V239H107V252H108V228H109V245H110V225H111V289H112V252H113V246H114V219H115V304H116V276H117V237H118V219H119V302H120V257H121V228H122V237H123V223H124V245H125V256H126V284H127V234H128V263H129V249H130V256H131V233H132V234H133V276H134V237H135V248H136V255H137V319H138V242H139V242H140V229H141V243H142V233H143V254H144V262H145V264H146V274H147V311H148V233H149V270H150V259H151V318H152V299H153V249H154V269H155V266H156V225H157V331H158V270H159V274H160V295H161V238H162V271H163V248H164V280H165V287H166V273H167V248H168V271H169V320H170V308H171V283H172V239H173V234H174V266H175V314H176V262H177V335H178V232H179V312H180V257H181V267H182V252H183V313H184V277H185V267H186V253H187V265H188V339H189V243H190V244H191V338H192V262H193V239H194V289H195V282H196V250H197V262H198V272H199V236H200V242H201V250H202V266H203V265H204V256H205V239H206V269H207V321H208V295H209V334H210V301H211V282H212V229H213V289H214V235H215V252H216V308H217V288H218V273H219V249H220V281H221V287H222V276H223V273H224V252H225V253H226V268H227V255H228V249H229V348H230V286H231V229H232V276H233V266H234V265H235V251H236V339H237V243H238V309H239V250H240V251H241V338H242V342H243V265H244V269H245V339H246V232H247V338H248V311H249V346H250V338H251V312H252V288H253V270H254V249H255V276H256V234H257V267H258V276H259V270H260V333H261V343H262V288H263V284H264V251H265V257H266V262H267V240H268V278H269V332H270V338H271V296H272V288H273V242H274V254H275V254H276V265H277V558Z" fill="#e352e3"/><rect x="6" y="534" width="1.4" height="24" fill="#100010"/><rect x="9" y="556" width="1" height="2" fill="#100010"/><rect x="13" y="556" width="1" height="2" fill="#100010"/><rect x="15.5" y="554" width="1" height="4" fill="#100010"/><rect x="25" y="555" width="1" height="3" fill="#100010"/><rect x="35" y="553" width="2" height="5" fill="#100010"/><rect x="41" y="555" width="1" height="3" fill="#100010"/><rect x="49" y="555" width="1" height="3" fill="#100010"/><line x1="14" y1="276.5" x2="262" y2="276.5" stroke="#f878f8" stroke-width="1" stroke-dasharray="1 4" stroke-dashoffset="0"/><line x1="14" y1="370.5" x2="262" y2="370.5" stroke="#f878f8" stroke-width="1" stroke-dasharray="1 4" stroke-dashoffset="0"/><line x1="14" y1="464.5" x2="262" y2="464.5" stroke="#f878f8" stroke-width="1" stroke-dasharray="1 4" stroke-dashoffset="0"/><rect x="73" y="342" width="1.5" height="1" fill="#f878f8"/><rect x="73" y="325" width="1.5" height="1" fill="#f878f8"/><rect x="73" y="313" width="1.5" height="1" fill="#f878f8"/><rect x="73" y="304" width="1.5" height="1" fill="#f878f8"/><rect x="73" y="436" width="1.5" height="1" fill="#f878f8"/><rect x="73" y="419" width="1.5" height="1" fill="#f878f8"/><rect x="73" y="408" width="1.5" height="1" fill="#f878f8"/><rect x="73" y="398" width="1.5" height="1" fill="#f878f8"/><rect x="73" y="391" width="1.5" height="1" fill="#f878f8"/><rect x="73" y="385" width="1.5" height="1" fill="#f878f8"/><rect x="73" y="379" width="1.5" height="1" fill="#f878f8"/><rect x="73" y="374" width="1.5" height="1" fill="#f878f8"/><rect x="73" y="531" width="1.5" height="1" fill="#f878f8"/><rect x="73" y="514" width="1.5" height="1" fill="#f878f8"/><rect x="73" y="502" width="1.5" height="1" fill="#f878f8"/><rect x="73" y="493" width="1.5" height="1" fill="#f878f8"/><rect x="73" y="485" width="1.5" height="1" fill="#f878f8"/><rect x="73" y="479" width="1.5" height="1" fill="#f878f8"/><rect x="73" y="474" width="1.5" height="1" fill="#f878f8"/><rect x="73" y="469" width="1.5" height="1" fill="#f878f8"/><rect x="73" y="370" width="1.5" height="1" fill="#f878f8"/><rect x="73" y="464" width="1.5" height="1" fill="#f878f8"/><rect x="141" y="342" width="1.5" height="1" fill="#f878f8"/><rect x="141" y="325" width="1.5" height="1" fill="#f878f8"/><rect x="141" y="313" width="1.5" height="1" fill="#f878f8"/><rect x="141" y="304" width="1.5" height="1" fill="#f878f8"/><rect x="141" y="436" width="1.5" height="1" fill="#f878f8"/><rect x="141" y="419" width="1.5" height="1" fill="#f878f8"/><rect x="141" y="408" width="1.5" height="1" fill="#f878f8"/><rect x="141" y="398" width="1.5" height="1" fill="#f878f8"/><rect x="141" y="391" width="1.5" height="1" fill="#f878f8"/><rect x="141" y="385" width="1.5" height="1" fill="#f878f8"/><rect x="141" y="379" width="1.5" height="1" fill="#f878f8"/><rect x="141" y="374" width="1.5" height="1" fill="#f878f8"/><rect x="141" y="531" width="1.5" height="1" fill="#f878f8"/><rect x="141" y="514" width="1.5" height="1" fill="#f878f8"/><rect x="141" y="502" width="1.5" height="1" fill="#f878f8"/><rect x="141" y="493" width="1.5" height="1" fill="#f878f8"/><rect x="141" y="485" width="1.5" height="1" fill="#f878f8"/><rect x="141" y="479" width="1.5" height="1" fill="#f878f8"/><rect x="141" y="474" width="1.5" height="1" fill="#f878f8"/><rect x="141" y="469" width="1.5" height="1" fill="#f878f8"/><rect x="141" y="370" width="1.5" height="1" fill="#f878f8"/><rect x="141" y="464" width="1.5" height="1" fill="#f878f8"/><rect x="209" y="342" width="1.5" height="1" fill="#f878f8"/><rect x="209" y="325" width="1.5" height="1" fill="#f878f8"/><rect x="209" y="313" width="1.5" height="1" fill="#f878f8"/><rect x="209" y="304" width="1.5" height="1" fill="#f878f8"/><rect x="209" y="436" width="1.5" height="1" fill="#f878f8"/><rect x="209" y="419" width="1.5" height="1" fill="#f878f8"/><rect x="209" y="408" width="1.5" height="1" fill="#f878f8"/><rect x="209" y="398" width="1.5" height="1" fill="#f878f8"/><rect x="209" y="391" width="1.5" height="1" fill="#f878f8"/><rect x="209" y="385" width="1.5" height="1" fill="#f878f8"/><rect x="209" y="379" width="1.5" height="1" fill="#f878f8"/><rect x="209" y="374" width="1.5" height="1" fill="#f878f8"/><rect x="209" y="531" width="1.5" height="1" fill="#f878f8"/><rect x="209" y="514" width="1.5" height="1" fill="#f878f8"/><rect x="209" y="502" width="1.5" height="1" fill="#f878f8"/><rect x="209" y="493" width="1.5" height="1" fill="#f878f8"/><rect x="209" y="485" width="1.5" height="1" fill="#f878f8"/><rect x="209" y="479" width="1.5" height="1" fill="#f878f8"/><rect x="209" y="474" width="1.5" height="1" fill="#f878f8"/><rect x="209" y="469" width="1.5" height="1" fill="#f878f8"/><rect x="209" y="370" width="1.5" height="1" fill="#f878f8"/><rect x="209" y="464" width="1.5" height="1" fill="#f878f8"/><path d="M19.6 87V94M33.2 87V94M46.800000000000004 87V94M60.400000000000006 87V94M74.0 87V98M87.6 87V94M101.19999999999999 87V94M114.79999999999998 87V94M128.39999999999998 87V94M141.99999999999997 87V98M155.59999999999997 87V94M169.19999999999996 87V94M182.79999999999995 87V94M196.39999999999995 87V94M209.99999999999994 87V98M223.59999999999994 87V94M237.19999999999993 87V94M250.79999999999993 87V94M264.3999999999999 87V94" stroke="#d8d8d8" stroke-width="1"/><path d="M19.6 558V553M33.2 558V553M46.800000000000004 558V553M60.400000000000006 558V553M74.0 558V550M87.6 558V553M101.19999999999999 558V553M114.79999999999998 558V553M128.39999999999998 558V553M141.99999999999997 558V550M155.59999999999997 558V553M169.19999999999996 558V553M182.79999999999995 558V553M196.39999999999995 558V553M209.99999999999994 558V550M223.59999999999994 558V553M237.19999999999993 558V553M250.79999999999993 558V553M264.3999999999999 558V553" stroke="#f4b0f4" stroke-width="1"/><path d="M6 181.5H15M6 276.5H15M6 370.5H15M6 464.5H15" stroke="#d8d8d8" stroke-width="1"/><path d="M6 153.5H12M6 136.5H12M6 124.5H12M6 115.5H12M6 107.5H12M6 101.5H12M6 96.5H12M6 91.5H12M6 247.5H12M6 230.5H12M6 219.5H12M6 209.5H12M6 202.5H12M6 196.5H12M6 190.5H12M6 185.5H12M6 342.5H12M6 325.5H12M6 313.5H12M6 304.5H12M6 296.5H12M6 290.5H12M6 285.5H12M6 280.5H12M6 436.5H12M6 419.5H12M6 408.5H12M6 398.5H12M6 391.5H12M6 385.5H12M6 379.5H12M6 374.5H12M6 531.5H12M6 514.5H12M6 502.5H12M6 493.5H12M6 485.5H12M6 479.5H12M6 474.5H12M6 469.5H12" stroke="#d8d8d8" stroke-width="1"/><path d="M267 181.5H276M267 276.5H276M267 370.5H276M267 464.5H276" stroke="#d8d8d8" stroke-width="1"/><path d="M270 153.5H276M270 136.5H276M270 124.5H276M270 115.5H276M270 107.5H276M270 101.5H276M270 96.5H276M270 91.5H276M270 247.5H276M270 230.5H276M270 219.5H276M270 209.5H276M270 202.5H276M270 196.5H276M270 190.5H276M270 185.5H276M270 342.5H276M270 325.5H276M270 313.5H276M270 304.5H276M270 296.5H276M270 290.5H276M270 285.5H276M270 280.5H276M270 436.5H276M270 419.5H276M270 408.5H276M270 398.5H276M270 391.5H276M270 385.5H276M270 379.5H276M270 374.5H276M270 531.5H276M270 514.5H276M270 502.5H276M270 493.5H276M270 485.5H276M270 479.5H276M270 474.5H276M270 469.5H276" stroke="#d8d8d8" stroke-width="1"/><text x="273" y="187" font-size="13" fill="#b8b8b8" text-anchor="end" font-family="Liberation Sans, sans-serif" stroke="#000" stroke-width="2.5" paint-order="stroke" stroke-linejoin="round">100 fs</text><text x="273" y="281" font-size="13" fill="#3a1a40" text-anchor="end" font-family="Liberation Sans, sans-serif" stroke="#d070d0" stroke-width="2.5" paint-order="stroke" stroke-linejoin="round">10 fs</text><text x="273" y="376" font-size="13" fill="#3a1a40" text-anchor="end" font-family="Liberation Sans, sans-serif" stroke="#d070d0" stroke-width="2.5" paint-order="stroke" stroke-linejoin="round">1 fs</text><text x="273" y="470" font-size="13" fill="#3a1a40" text-anchor="end" font-family="Liberation Sans, sans-serif" stroke="#d070d0" stroke-width="2.5" paint-order="stroke" stroke-linejoin="round">0 s</text><text x="75" y="556" font-size="13" fill="#3a1a40" text-anchor="middle" font-family="Liberation Sans, sans-serif" stroke="#d070d0" stroke-width="2.5" paint-order="stroke" stroke-linejoin="round">2 GHz</text><text x="143" y="556" font-size="13" fill="#3a1a40" text-anchor="middle" font-family="Liberation Sans, sans-serif" stroke="#d070d0" stroke-width="2.5" paint-order="stroke" stroke-linejoin="round">4 GHz</text><text x="211" y="556" font-size="13" fill="#3a1a40" text-anchor="middle" font-family="Liberation Sans, sans-serif" stroke="#d070d0" stroke-width="2.5" paint-order="stroke" stroke-linejoin="round">6 GHz</text><path d="M235 94H269V128Z" fill="#5a5a5a"/><circle cx="261.5" cy="100.5" r="4.4" fill="none" stroke="#b4b4b4" stroke-width="1.8"/><path d="M258.3 103.7L251.5 110.5" stroke="#b4b4b4" stroke-width="2.4" stroke-linecap="round"/></svg><svg style="position:absolute;left:282px;top:87px;overflow:hidden" width="287" height="471" viewBox="282 87 287 471" ><line x1="297" y1="142.5" x2="566" y2="142.5" stroke="#9a9a9a" stroke-width="1" stroke-dasharray="1 4" stroke-dashoffset="0"/><line x1="297" y1="225.5" x2="566" y2="225.5" stroke="#9a9a9a" stroke-width="1" stroke-dasharray="1 4" stroke-dashoffset="0"/><line x1="297" y1="308.5" x2="566" y2="308.5" stroke="#9a9a9a" stroke-width="1" stroke-dasharray="1 4" stroke-dashoffset="0"/><line x1="297" y1="391.5" x2="566" y2="391.5" stroke="#9a9a9a" stroke-width="1" stroke-dasharray="1 4" stroke-dashoffset="0"/><line x1="297" y1="474.5" x2="566" y2="474.5" stroke="#9a9a9a" stroke-width="1" stroke-dasharray="1 4" stroke-dashoffset="0"/><line x1="297" y1="117.5" x2="566" y2="117.5" stroke="#5a5a5a" stroke-width="1" stroke-dasharray="1 4" stroke-dashoffset="0"/><line x1="297" y1="103.5" x2="566" y2="103.5" stroke="#5a5a5a" stroke-width="1" stroke-dasharray="1 4" stroke-dashoffset="0"/><line x1="297" y1="92.5" x2="566" y2="92.5" stroke="#5a5a5a" stroke-width="1" stroke-dasharray="1 4" stroke-dashoffset="0"/><line x1="297" y1="200.5" x2="566" y2="200.5" stroke="#5a5a5a" stroke-width="1" stroke-dasharray="1 4" stroke-dashoffset="0"/><line x1="297" y1="186.5" x2="566" y2="186.5" stroke="#5a5a5a" stroke-width="1" stroke-dasharray="1 4" stroke-dashoffset="0"/><line x1="297" y1="175.5" x2="566" y2="175.5" stroke="#5a5a5a" stroke-width="1" stroke-dasharray="1 4" stroke-dashoffset="0"/><line x1="297" y1="167.5" x2="566" y2="167.5" stroke="#5a5a5a" stroke-width="1" stroke-dasharray="1 4" stroke-dashoffset="0"/><line x1="297" y1="161.5" x2="566" y2="161.5" stroke="#5a5a5a" stroke-width="1" stroke-dasharray="1 4" stroke-dashoffset="0"/><line x1="297" y1="155.5" x2="566" y2="155.5" stroke="#5a5a5a" stroke-width="1" stroke-dasharray="1 4" stroke-dashoffset="0"/><line x1="297" y1="150.5" x2="566" y2="150.5" stroke="#5a5a5a" stroke-width="1" stroke-dasharray="1 4" stroke-dashoffset="0"/><line x1="297" y1="146.5" x2="566" y2="146.5" stroke="#5a5a5a" stroke-width="1" stroke-dasharray="1 4" stroke-dashoffset="0"/><line x1="297" y1="283.5" x2="566" y2="283.5" stroke="#5a5a5a" stroke-width="1" stroke-dasharray="1 4" stroke-dashoffset="0"/><line x1="297" y1="269.5" x2="566" y2="269.5" stroke="#5a5a5a" stroke-width="1" stroke-dasharray="1 4" stroke-dashoffset="0"/><line x1="297" y1="258.5" x2="566" y2="258.5" stroke="#5a5a5a" stroke-width="1" stroke-dasharray="1 4" stroke-dashoffset="0"/><line x1="297" y1="250.5" x2="566" y2="250.5" stroke="#5a5a5a" stroke-width="1" stroke-dasharray="1 4" stroke-dashoffset="0"/><line x1="297" y1="244.5" x2="566" y2="244.5" stroke="#5a5a5a" stroke-width="1" stroke-dasharray="1 4" stroke-dashoffset="0"/><line x1="297" y1="238.5" x2="566" y2="238.5" stroke="#5a5a5a" stroke-width="1" stroke-dasharray="1 4" stroke-dashoffset="0"/><line x1="297" y1="233.5" x2="566" y2="233.5" stroke="#5a5a5a" stroke-width="1" stroke-dasharray="1 4" stroke-dashoffset="0"/><line x1="297" y1="229.5" x2="566" y2="229.5" stroke="#5a5a5a" stroke-width="1" stroke-dasharray="1 4" stroke-dashoffset="0"/><line x1="297" y1="366.5" x2="566" y2="366.5" stroke="#5a5a5a" stroke-width="1" stroke-dasharray="1 4" stroke-dashoffset="0"/><line x1="297" y1="352.5" x2="566" y2="352.5" stroke="#5a5a5a" stroke-width="1" stroke-dasharray="1 4" stroke-dashoffset="0"/><line x1="297" y1="341.5" x2="566" y2="341.5" stroke="#5a5a5a" stroke-width="1" stroke-dasharray="1 4" stroke-dashoffset="0"/><line x1="297" y1="333.5" x2="566" y2="333.5" stroke="#5a5a5a" stroke-width="1" stroke-dasharray="1 4" stroke-dashoffset="0"/><line x1="297" y1="327.5" x2="566" y2="327.5" stroke="#5a5a5a" stroke-width="1" stroke-dasharray="1 4" stroke-dashoffset="0"/><line x1="297" y1="321.5" x2="566" y2="321.5" stroke="#5a5a5a" stroke-width="1" stroke-dasharray="1 4" stroke-dashoffset="0"/><line x1="297" y1="316.5" x2="566" y2="316.5" stroke="#5a5a5a" stroke-width="1" stroke-dasharray="1 4" stroke-dashoffset="0"/><line x1="297" y1="312.5" x2="566" y2="312.5" stroke="#5a5a5a" stroke-width="1" stroke-dasharray="1 4" stroke-dashoffset="0"/><line x1="297" y1="449.5" x2="566" y2="449.5" stroke="#5a5a5a" stroke-width="1" stroke-dasharray="1 4" stroke-dashoffset="0"/><line x1="297" y1="435.5" x2="566" y2="435.5" stroke="#5a5a5a" stroke-width="1" stroke-dasharray="1 4" stroke-dashoffset="0"/><line x1="297" y1="424.5" x2="566" y2="424.5" stroke="#5a5a5a" stroke-width="1" stroke-dasharray="1 4" stroke-dashoffset="0"/><line x1="297" y1="416.5" x2="566" y2="416.5" stroke="#5a5a5a" stroke-width="1" stroke-dasharray="1 4" stroke-dashoffset="0"/><line x1="297" y1="410.5" x2="566" y2="410.5" stroke="#5a5a5a" stroke-width="1" stroke-dasharray="1 4" stroke-dashoffset="0"/><line x1="297" y1="404.5" x2="566" y2="404.5" stroke="#5a5a5a" stroke-width="1" stroke-dasharray="1 4" stroke-dashoffset="0"/><line x1="297" y1="399.5" x2="566" y2="399.5" stroke="#5a5a5a" stroke-width="1" stroke-dasharray="1 4" stroke-dashoffset="0"/><line x1="297" y1="395.5" x2="566" y2="395.5" stroke="#5a5a5a" stroke-width="1" stroke-dasharray="1 4" stroke-dashoffset="0"/><line x1="297" y1="532.5" x2="566" y2="532.5" stroke="#5a5a5a" stroke-width="1" stroke-dasharray="1 4" stroke-dashoffset="0"/><line x1="297" y1="518.5" x2="566" y2="518.5" stroke="#5a5a5a" stroke-width="1" stroke-dasharray="1 4" stroke-dashoffset="0"/><line x1="297" y1="507.5" x2="566" y2="507.5" stroke="#5a5a5a" stroke-width="1" stroke-dasharray="1 4" stroke-dashoffset="0"/><line x1="297" y1="499.5" x2="566" y2="499.5" stroke="#5a5a5a" stroke-width="1" stroke-dasharray="1 4" stroke-dashoffset="0"/><line x1="297" y1="493.5" x2="566" y2="493.5" stroke="#5a5a5a" stroke-width="1" stroke-dasharray="1 4" stroke-dashoffset="0"/><line x1="297" y1="487.5" x2="566" y2="487.5" stroke="#5a5a5a" stroke-width="1" stroke-dasharray="1 4" stroke-dashoffset="0"/><line x1="297" y1="482.5" x2="566" y2="482.5" stroke="#5a5a5a" stroke-width="1" stroke-dasharray="1 4" stroke-dashoffset="0"/><line x1="297" y1="478.5" x2="566" y2="478.5" stroke="#5a5a5a" stroke-width="1" stroke-dasharray="1 4" stroke-dashoffset="0"/><rect x="321" y="142" width="1.5" height="1" fill="#c8c8c8"/><rect x="321" y="225" width="1.5" height="1" fill="#c8c8c8"/><rect x="321" y="308" width="1.5" height="1" fill="#c8c8c8"/><rect x="321" y="391" width="1.5" height="1" fill="#c8c8c8"/><rect x="321" y="474" width="1.5" height="1" fill="#c8c8c8"/><rect x="321" y="117" width="1.5" height="1" fill="#c8c8c8"/><rect x="321" y="103" width="1.5" height="1" fill="#c8c8c8"/><rect x="321" y="92" width="1.5" height="1" fill="#c8c8c8"/><rect x="321" y="200" width="1.5" height="1" fill="#c8c8c8"/><rect x="321" y="186" width="1.5" height="1" fill="#c8c8c8"/><rect x="321" y="175" width="1.5" height="1" fill="#c8c8c8"/><rect x="321" y="167" width="1.5" height="1" fill="#c8c8c8"/><rect x="321" y="161" width="1.5" height="1" fill="#c8c8c8"/><rect x="321" y="155" width="1.5" height="1" fill="#c8c8c8"/><rect x="321" y="150" width="1.5" height="1" fill="#c8c8c8"/><rect x="321" y="146" width="1.5" height="1" fill="#c8c8c8"/><rect x="321" y="283" width="1.5" height="1" fill="#c8c8c8"/><rect x="321" y="269" width="1.5" height="1" fill="#c8c8c8"/><rect x="321" y="258" width="1.5" height="1" fill="#c8c8c8"/><rect x="321" y="250" width="1.5" height="1" fill="#c8c8c8"/><rect x="321" y="244" width="1.5" height="1" fill="#c8c8c8"/><rect x="321" y="238" width="1.5" height="1" fill="#c8c8c8"/><rect x="321" y="233" width="1.5" height="1" fill="#c8c8c8"/><rect x="321" y="229" width="1.5" height="1" fill="#c8c8c8"/><rect x="321" y="366" width="1.5" height="1" fill="#c8c8c8"/><rect x="321" y="352" width="1.5" height="1" fill="#c8c8c8"/><rect x="321" y="341" width="1.5" height="1" fill="#c8c8c8"/><rect x="321" y="333" width="1.5" height="1" fill="#c8c8c8"/><rect x="321" y="327" width="1.5" height="1" fill="#c8c8c8"/><rect x="321" y="321" width="1.5" height="1" fill="#c8c8c8"/><rect x="321" y="316" width="1.5" height="1" fill="#c8c8c8"/><rect x="321" y="312" width="1.5" height="1" fill="#c8c8c8"/><rect x="321" y="449" width="1.5" height="1" fill="#c8c8c8"/><rect x="321" y="435" width="1.5" height="1" fill="#c8c8c8"/><rect x="321" y="424" width="1.5" height="1" fill="#c8c8c8"/><rect x="321" y="416" width="1.5" height="1" fill="#c8c8c8"/><rect x="321" y="410" width="1.5" height="1" fill="#c8c8c8"/><rect x="321" y="404" width="1.5" height="1" fill="#c8c8c8"/><rect x="321" y="399" width="1.5" height="1" fill="#c8c8c8"/><rect x="321" y="395" width="1.5" height="1" fill="#c8c8c8"/><rect x="321" y="532" width="1.5" height="1" fill="#c8c8c8"/><rect x="321" y="518" width="1.5" height="1" fill="#c8c8c8"/><rect x="321" y="507" width="1.5" height="1" fill="#c8c8c8"/><rect x="321" y="499" width="1.5" height="1" fill="#c8c8c8"/><rect x="321" y="493" width="1.5" height="1" fill="#c8c8c8"/><rect x="321" y="487" width="1.5" height="1" fill="#c8c8c8"/><rect x="321" y="482" width="1.5" height="1" fill="#c8c8c8"/><rect x="321" y="478" width="1.5" height="1" fill="#c8c8c8"/><rect x="373" y="142" width="1.5" height="1" fill="#c8c8c8"/><rect x="373" y="225" width="1.5" height="1" fill="#c8c8c8"/><rect x="373" y="308" width="1.5" height="1" fill="#c8c8c8"/><rect x="373" y="391" width="1.5" height="1" fill="#c8c8c8"/><rect x="373" y="474" width="1.5" height="1" fill="#c8c8c8"/><rect x="373" y="117" width="1.5" height="1" fill="#c8c8c8"/><rect x="373" y="103" width="1.5" height="1" fill="#c8c8c8"/><rect x="373" y="92" width="1.5" height="1" fill="#c8c8c8"/><rect x="373" y="200" width="1.5" height="1" fill="#c8c8c8"/><rect x="373" y="186" width="1.5" height="1" fill="#c8c8c8"/><rect x="373" y="175" width="1.5" height="1" fill="#c8c8c8"/><rect x="373" y="167" width="1.5" height="1" fill="#c8c8c8"/><rect x="373" y="161" width="1.5" height="1" fill="#c8c8c8"/><rect x="373" y="155" width="1.5" height="1" fill="#c8c8c8"/><rect x="373" y="150" width="1.5" height="1" fill="#c8c8c8"/><rect x="373" y="146" width="1.5" height="1" fill="#c8c8c8"/><rect x="373" y="283" width="1.5" height="1" fill="#c8c8c8"/><rect x="373" y="269" width="1.5" height="1" fill="#c8c8c8"/><rect x="373" y="258" width="1.5" height="1" fill="#c8c8c8"/><rect x="373" y="250" width="1.5" height="1" fill="#c8c8c8"/><rect x="373" y="244" width="1.5" height="1" fill="#c8c8c8"/><rect x="373" y="238" width="1.5" height="1" fill="#c8c8c8"/><rect x="373" y="233" width="1.5" height="1" fill="#c8c8c8"/><rect x="373" y="229" width="1.5" height="1" fill="#c8c8c8"/><rect x="373" y="366" width="1.5" height="1" fill="#c8c8c8"/><rect x="373" y="352" width="1.5" height="1" fill="#c8c8c8"/><rect x="373" y="341" width="1.5" height="1" fill="#c8c8c8"/><rect x="373" y="333" width="1.5" height="1" fill="#c8c8c8"/><rect x="373" y="327" width="1.5" height="1" fill="#c8c8c8"/><rect x="373" y="321" width="1.5" height="1" fill="#c8c8c8"/><rect x="373" y="316" width="1.5" height="1" fill="#c8c8c8"/><rect x="373" y="312" width="1.5" height="1" fill="#c8c8c8"/><rect x="373" y="449" width="1.5" height="1" fill="#c8c8c8"/><rect x="373" y="435" width="1.5" height="1" fill="#c8c8c8"/><rect x="373" y="424" width="1.5" height="1" fill="#c8c8c8"/><rect x="373" y="416" width="1.5" height="1" fill="#c8c8c8"/><rect x="373" y="410" width="1.5" height="1" fill="#c8c8c8"/><rect x="373" y="404" width="1.5" height="1" fill="#c8c8c8"/><rect x="373" y="399" width="1.5" height="1" fill="#c8c8c8"/><rect x="373" y="395" width="1.5" height="1" fill="#c8c8c8"/><rect x="373" y="532" width="1.5" height="1" fill="#c8c8c8"/><rect x="373" y="518" width="1.5" height="1" fill="#c8c8c8"/><rect x="373" y="507" width="1.5" height="1" fill="#c8c8c8"/><rect x="373" y="499" width="1.5" height="1" fill="#c8c8c8"/><rect x="373" y="493" width="1.5" height="1" fill="#c8c8c8"/><rect x="373" y="487" width="1.5" height="1" fill="#c8c8c8"/><rect x="373" y="482" width="1.5" height="1" fill="#c8c8c8"/><rect x="373" y="478" width="1.5" height="1" fill="#c8c8c8"/><rect x="425" y="142" width="1.5" height="1" fill="#c8c8c8"/><rect x="425" y="225" width="1.5" height="1" fill="#c8c8c8"/><rect x="425" y="308" width="1.5" height="1" fill="#c8c8c8"/><rect x="425" y="391" width="1.5" height="1" fill="#c8c8c8"/><rect x="425" y="474" width="1.5" height="1" fill="#c8c8c8"/><rect x="425" y="117" width="1.5" height="1" fill="#c8c8c8"/><rect x="425" y="103" width="1.5" height="1" fill="#c8c8c8"/><rect x="425" y="92" width="1.5" height="1" fill="#c8c8c8"/><rect x="425" y="200" width="1.5" height="1" fill="#c8c8c8"/><rect x="425" y="186" width="1.5" height="1" fill="#c8c8c8"/><rect x="425" y="175" width="1.5" height="1" fill="#c8c8c8"/><rect x="425" y="167" width="1.5" height="1" fill="#c8c8c8"/><rect x="425" y="161" width="1.5" height="1" fill="#c8c8c8"/><rect x="425" y="155" width="1.5" height="1" fill="#c8c8c8"/><rect x="425" y="150" width="1.5" height="1" fill="#c8c8c8"/><rect x="425" y="146" width="1.5" height="1" fill="#c8c8c8"/><rect x="425" y="283" width="1.5" height="1" fill="#c8c8c8"/><rect x="425" y="269" width="1.5" height="1" fill="#c8c8c8"/><rect x="425" y="258" width="1.5" height="1" fill="#c8c8c8"/><rect x="425" y="250" width="1.5" height="1" fill="#c8c8c8"/><rect x="425" y="244" width="1.5" height="1" fill="#c8c8c8"/><rect x="425" y="238" width="1.5" height="1" fill="#c8c8c8"/><rect x="425" y="233" width="1.5" height="1" fill="#c8c8c8"/><rect x="425" y="229" width="1.5" height="1" fill="#c8c8c8"/><rect x="425" y="366" width="1.5" height="1" fill="#c8c8c8"/><rect x="425" y="352" width="1.5" height="1" fill="#c8c8c8"/><rect x="425" y="341" width="1.5" height="1" fill="#c8c8c8"/><rect x="425" y="333" width="1.5" height="1" fill="#c8c8c8"/><rect x="425" y="327" width="1.5" height="1" fill="#c8c8c8"/><rect x="425" y="321" width="1.5" height="1" fill="#c8c8c8"/><rect x="425" y="316" width="1.5" height="1" fill="#c8c8c8"/><rect x="425" y="312" width="1.5" height="1" fill="#c8c8c8"/><rect x="425" y="449" width="1.5" height="1" fill="#c8c8c8"/><rect x="425" y="435" width="1.5" height="1" fill="#c8c8c8"/><rect x="425" y="424" width="1.5" height="1" fill="#c8c8c8"/><rect x="425" y="416" width="1.5" height="1" fill="#c8c8c8"/><rect x="425" y="410" width="1.5" height="1" fill="#c8c8c8"/><rect x="425" y="404" width="1.5" height="1" fill="#c8c8c8"/><rect x="425" y="399" width="1.5" height="1" fill="#c8c8c8"/><rect x="425" y="395" width="1.5" height="1" fill="#c8c8c8"/><rect x="425" y="532" width="1.5" height="1" fill="#c8c8c8"/><rect x="425" y="518" width="1.5" height="1" fill="#c8c8c8"/><rect x="425" y="507" width="1.5" height="1" fill="#c8c8c8"/><rect x="425" y="499" width="1.5" height="1" fill="#c8c8c8"/><rect x="425" y="493" width="1.5" height="1" fill="#c8c8c8"/><rect x="425" y="487" width="1.5" height="1" fill="#c8c8c8"/><rect x="425" y="482" width="1.5" height="1" fill="#c8c8c8"/><rect x="425" y="478" width="1.5" height="1" fill="#c8c8c8"/><rect x="477" y="142" width="1.5" height="1" fill="#c8c8c8"/><rect x="477" y="225" width="1.5" height="1" fill="#c8c8c8"/><rect x="477" y="308" width="1.5" height="1" fill="#c8c8c8"/><rect x="477" y="391" width="1.5" height="1" fill="#c8c8c8"/><rect x="477" y="474" width="1.5" height="1" fill="#c8c8c8"/><rect x="477" y="117" width="1.5" height="1" fill="#c8c8c8"/><rect x="477" y="103" width="1.5" height="1" fill="#c8c8c8"/><rect x="477" y="92" width="1.5" height="1" fill="#c8c8c8"/><rect x="477" y="200" width="1.5" height="1" fill="#c8c8c8"/><rect x="477" y="186" width="1.5" height="1" fill="#c8c8c8"/><rect x="477" y="175" width="1.5" height="1" fill="#c8c8c8"/><rect x="477" y="167" width="1.5" height="1" fill="#c8c8c8"/><rect x="477" y="161" width="1.5" height="1" fill="#c8c8c8"/><rect x="477" y="155" width="1.5" height="1" fill="#c8c8c8"/><rect x="477" y="150" width="1.5" height="1" fill="#c8c8c8"/><rect x="477" y="146" width="1.5" height="1" fill="#c8c8c8"/><rect x="477" y="283" width="1.5" height="1" fill="#c8c8c8"/><rect x="477" y="269" width="1.5" height="1" fill="#c8c8c8"/><rect x="477" y="258" width="1.5" height="1" fill="#c8c8c8"/><rect x="477" y="250" width="1.5" height="1" fill="#c8c8c8"/><rect x="477" y="244" width="1.5" height="1" fill="#c8c8c8"/><rect x="477" y="238" width="1.5" height="1" fill="#c8c8c8"/><rect x="477" y="233" width="1.5" height="1" fill="#c8c8c8"/><rect x="477" y="229" width="1.5" height="1" fill="#c8c8c8"/><rect x="477" y="366" width="1.5" height="1" fill="#c8c8c8"/><rect x="477" y="352" width="1.5" height="1" fill="#c8c8c8"/><rect x="477" y="341" width="1.5" height="1" fill="#c8c8c8"/><rect x="477" y="333" width="1.5" height="1" fill="#c8c8c8"/><rect x="477" y="327" width="1.5" height="1" fill="#c8c8c8"/><rect x="477" y="321" width="1.5" height="1" fill="#c8c8c8"/><rect x="477" y="316" width="1.5" height="1" fill="#c8c8c8"/><rect x="477" y="312" width="1.5" height="1" fill="#c8c8c8"/><rect x="477" y="449" width="1.5" height="1" fill="#c8c8c8"/><rect x="477" y="435" width="1.5" height="1" fill="#c8c8c8"/><rect x="477" y="424" width="1.5" height="1" fill="#c8c8c8"/><rect x="477" y="416" width="1.5" height="1" fill="#c8c8c8"/><rect x="477" y="410" width="1.5" height="1" fill="#c8c8c8"/><rect x="477" y="404" width="1.5" height="1" fill="#c8c8c8"/><rect x="477" y="399" width="1.5" height="1" fill="#c8c8c8"/><rect x="477" y="395" width="1.5" height="1" fill="#c8c8c8"/><rect x="477" y="532" width="1.5" height="1" fill="#c8c8c8"/><rect x="477" y="518" width="1.5" height="1" fill="#c8c8c8"/><rect x="477" y="507" width="1.5" height="1" fill="#c8c8c8"/><rect x="477" y="499" width="1.5" height="1" fill="#c8c8c8"/><rect x="477" y="493" width="1.5" height="1" fill="#c8c8c8"/><rect x="477" y="487" width="1.5" height="1" fill="#c8c8c8"/><rect x="477" y="482" width="1.5" height="1" fill="#c8c8c8"/><rect x="477" y="478" width="1.5" height="1" fill="#c8c8c8"/><rect x="529" y="142" width="1.5" height="1" fill="#c8c8c8"/><rect x="529" y="225" width="1.5" height="1" fill="#c8c8c8"/><rect x="529" y="308" width="1.5" height="1" fill="#c8c8c8"/><rect x="529" y="391" width="1.5" height="1" fill="#c8c8c8"/><rect x="529" y="474" width="1.5" height="1" fill="#c8c8c8"/><rect x="529" y="117" width="1.5" height="1" fill="#c8c8c8"/><rect x="529" y="103" width="1.5" height="1" fill="#c8c8c8"/><rect x="529" y="92" width="1.5" height="1" fill="#c8c8c8"/><rect x="529" y="200" width="1.5" height="1" fill="#c8c8c8"/><rect x="529" y="186" width="1.5" height="1" fill="#c8c8c8"/><rect x="529" y="175" width="1.5" height="1" fill="#c8c8c8"/><rect x="529" y="167" width="1.5" height="1" fill="#c8c8c8"/><rect x="529" y="161" width="1.5" height="1" fill="#c8c8c8"/><rect x="529" y="155" width="1.5" height="1" fill="#c8c8c8"/><rect x="529" y="150" width="1.5" height="1" fill="#c8c8c8"/><rect x="529" y="146" width="1.5" height="1" fill="#c8c8c8"/><rect x="529" y="283" width="1.5" height="1" fill="#c8c8c8"/><rect x="529" y="269" width="1.5" height="1" fill="#c8c8c8"/><rect x="529" y="258" width="1.5" height="1" fill="#c8c8c8"/><rect x="529" y="250" width="1.5" height="1" fill="#c8c8c8"/><rect x="529" y="244" width="1.5" height="1" fill="#c8c8c8"/><rect x="529" y="238" width="1.5" height="1" fill="#c8c8c8"/><rect x="529" y="233" width="1.5" height="1" fill="#c8c8c8"/><rect x="529" y="229" width="1.5" height="1" fill="#c8c8c8"/><rect x="529" y="366" width="1.5" height="1" fill="#c8c8c8"/><rect x="529" y="352" width="1.5" height="1" fill="#c8c8c8"/><rect x="529" y="341" width="1.5" height="1" fill="#c8c8c8"/><rect x="529" y="333" width="1.5" height="1" fill="#c8c8c8"/><rect x="529" y="327" width="1.5" height="1" fill="#c8c8c8"/><rect x="529" y="321" width="1.5" height="1" fill="#c8c8c8"/><rect x="529" y="316" width="1.5" height="1" fill="#c8c8c8"/><rect x="529" y="312" width="1.5" height="1" fill="#c8c8c8"/><rect x="529" y="449" width="1.5" height="1" fill="#c8c8c8"/><rect x="529" y="435" width="1.5" height="1" fill="#c8c8c8"/><rect x="529" y="424" width="1.5" height="1" fill="#c8c8c8"/><rect x="529" y="416" width="1.5" height="1" fill="#c8c8c8"/><rect x="529" y="410" width="1.5" height="1" fill="#c8c8c8"/><rect x="529" y="404" width="1.5" height="1" fill="#c8c8c8"/><rect x="529" y="399" width="1.5" height="1" fill="#c8c8c8"/><rect x="529" y="395" width="1.5" height="1" fill="#c8c8c8"/><rect x="529" y="532" width="1.5" height="1" fill="#c8c8c8"/><rect x="529" y="518" width="1.5" height="1" fill="#c8c8c8"/><rect x="529" y="507" width="1.5" height="1" fill="#c8c8c8"/><rect x="529" y="499" width="1.5" height="1" fill="#c8c8c8"/><rect x="529" y="493" width="1.5" height="1" fill="#c8c8c8"/><rect x="529" y="487" width="1.5" height="1" fill="#c8c8c8"/><rect x="529" y="482" width="1.5" height="1" fill="#c8c8c8"/><rect x="529" y="478" width="1.5" height="1" fill="#c8c8c8"/><path d="M290.79999999999995 87V93M301.19999999999993 87V93M311.5999999999999 87V93M321.9999999999999 87V97M332.39999999999986 87V93M342.79999999999984 87V93M353.1999999999998 87V93M363.5999999999998 87V93M373.9999999999998 87V97M384.39999999999975 87V93M394.7999999999997 87V93M405.1999999999997 87V93M415.5999999999997 87V93M425.99999999999966 87V97M436.39999999999964 87V93M446.7999999999996 87V93M457.1999999999996 87V93M467.59999999999957 87V93M477.99999999999955 87V97M488.3999999999995 87V93M498.7999999999995 87V93M509.1999999999995 87V93M519.5999999999995 87V93M529.9999999999994 87V97M540.3999999999994 87V93M550.7999999999994 87V93M561.1999999999994 87V93" stroke="#d8d8d8" stroke-width="1"/><path d="M290.79999999999995 558V552M301.19999999999993 558V552M311.5999999999999 558V552M321.9999999999999 558V548M332.39999999999986 558V552M342.79999999999984 558V552M353.1999999999998 558V552M363.5999999999998 558V552M373.9999999999998 558V548M384.39999999999975 558V552M394.7999999999997 558V552M405.1999999999997 558V552M415.5999999999997 558V552M425.99999999999966 558V548M436.39999999999964 558V552M446.7999999999996 558V552M457.1999999999996 558V552M467.59999999999957 558V552M477.99999999999955 558V548M488.3999999999995 558V552M498.7999999999995 558V552M509.1999999999995 558V552M519.5999999999995 558V552M529.9999999999994 558V548M540.3999999999994 558V552M550.7999999999994 558V552M561.1999999999994 558V552" stroke="#d8d8d8" stroke-width="1"/><path d="M282 142.5H293M282 225.5H293M282 308.5H293M282 391.5H293M282 474.5H293" stroke="#d8d8d8" stroke-width="1"/><path d="M282 117.5H289M282 103.5H289M282 92.5H289M282 200.5H289M282 186.5H289M282 175.5H289M282 167.5H289M282 161.5H289M282 155.5H289M282 150.5H289M282 146.5H289M282 283.5H289M282 269.5H289M282 258.5H289M282 250.5H289M282 244.5H289M282 238.5H289M282 233.5H289M282 229.5H289M282 366.5H289M282 352.5H289M282 341.5H289M282 333.5H289M282 327.5H289M282 321.5H289M282 316.5H289M282 312.5H289M282 449.5H289M282 435.5H289M282 424.5H289M282 416.5H289M282 410.5H289M282 404.5H289M282 399.5H289M282 395.5H289M282 532.5H289M282 518.5H289M282 507.5H289M282 499.5H289M282 493.5H289M282 487.5H289M282 482.5H289M282 478.5H289" stroke="#d8d8d8" stroke-width="1"/><path d="M558 142.5H569M558 225.5H569M558 308.5H569M558 391.5H569M558 474.5H569" stroke="#d8d8d8" stroke-width="1"/><path d="M562 117.5H569M562 103.5H569M562 92.5H569M562 200.5H569M562 186.5H569M562 175.5H569M562 167.5H569M562 161.5H569M562 155.5H569M562 150.5H569M562 146.5H569M562 283.5H569M562 269.5H569M562 258.5H569M562 250.5H569M562 244.5H569M562 238.5H569M562 233.5H569M562 229.5H569M562 366.5H569M562 352.5H569M562 341.5H569M562 333.5H569M562 327.5H569M562 321.5H569M562 316.5H569M562 312.5H569M562 449.5H569M562 435.5H569M562 424.5H569M562 416.5H569M562 410.5H569M562 404.5H569M562 399.5H569M562 395.5H569M562 532.5H569M562 518.5H569M562 507.5H569M562 499.5H569M562 493.5H569M562 487.5H569M562 482.5H569M562 478.5H569" stroke="#d8d8d8" stroke-width="1"/><path d="M295.5 103H295.5V106H296.5V109H296.5V112H297.5V115H297.5V118H297.5V121H298.5V124H298.5V127H299.5V130H299.5V133H300.5V136H300.5V139H300.5V142H301.5V145H301.5V148H302.5V151H302.5V154H302.5V157H302.5V160H302.5V163H302.5V166H302.5V169H302.5V172H302.5V175H303.5V178H303.5V181H303.5V184H303.5V187H303.5V190H303.5V193H303.5V196H303.5V199H304.5V202H304.5V205H304.5V208H304.5V211H304.5V214H304.5V217H304.5V220H305.5V223H305.5V226H305.5V229H305.5V232H305.5V235H305.5V238H306.5V241H306.5V244H306.5V247H306.5V250H306.5V253H306.5V256H306.5V259H306.5V262H307.5V265H307.5V268H307.5V271H307.5V274H307.5V277H307.5V280H307.5V283H307.5V286H307.5V289H307.5V292H307.5V295H307.5V298H307.5V301H307.5V304H307.5V307H307.5V310H307.5V313H307.5V316H307.5V319H307.5V322H307.5V325H307.5V328H307.5V331H307.5V334H307.5V337H308.5V340H308.5V343H308.5V346H308.5V349H308.5V352H308.5V355H308.5V358H308.5V361H308.5V364H308.5V367H308.5V370H308.5V373H308.5V376H308.5V379H308.5V382H308.5V385H309.5V388H309.5V391H309.5V394H309.5V397H309.5V400H309.5V403H309.5V406H309.5V409H309.5V412H309.5V415H309.5V418H309.5V421H309.5V424H309.5V427H309.5V430H309.5V433H309.5V436H309.5V439H309.5V442H310.5V445H310.5V448H310.5V451H310.5V454H310.5V457H310.5V460H310.5V463H310.5V466H310.5V469H310.5V472H310.5V475H310.5V478H310.5V481H310.5V484H310.5V487H310.5V490H310.5V493H310.5V496H310.5V499H310.5V502H310.5V505H310.5V508H310.5V511H310.5V514H310.5V517H311.5V520H311.5V523H311.5V526H311.5V529H311.5V532H311.5V535H311.5V538H311.5V541H311.5V544H311.5V547H311.5V550H311.5V553H311.5V556H311.5V558" fill="none" stroke="#66cc66" stroke-width="1.1"/><path d="M556.5 103H556.5V106H555.5V109H555.5V112H554.5V115H554.5V118H554.5V121H553.5V124H553.5V127H552.5V130H552.5V133H551.5V136H551.5V139H551.5V142H550.5V145H550.5V148H549.5V151H549.5V154H549.5V157H549.5V160H549.5V163H549.5V166H549.5V169H549.5V172H549.5V175H548.5V178H548.5V181H548.5V184H548.5V187H548.5V190H548.5V193H548.5V196H548.5V199H547.5V202H547.5V205H547.5V208H547.5V211H547.5V214H547.5V217H547.5V220H546.5V223H546.5V226H546.5V229H546.5V232H546.5V235H546.5V238H545.5V241H545.5V244H545.5V247H545.5V250H545.5V253H545.5V256H545.5V259H545.5V262H544.5V265H544.5V268H544.5V271H544.5V274H544.5V277H544.5V280H544.5V283H544.5V286H544.5V289H544.5V292H544.5V295H544.5V298H544.5V301H544.5V304H544.5V307H544.5V310H544.5V313H544.5V316H544.5V319H544.5V322H544.5V325H544.5V328H544.5V331H544.5V334H544.5V337H543.5V340H543.5V343H543.5V346H543.5V349H543.5V352H543.5V355H543.5V358H543.5V361H543.5V364H543.5V367H543.5V370H543.5V373H543.5V376H543.5V379H543.5V382H543.5V385H542.5V388H542.5V391H542.5V394H542.5V397H542.5V400H542.5V403H542.5V406H542.5V409H542.5V412H542.5V415H542.5V418H542.5V421H542.5V424H542.5V427H542.5V430H542.5V433H542.5V436H542.5V439H542.5V442H541.5V445H541.5V448H541.5V451H541.5V454H541.5V457H541.5V460H541.5V463H541.5V466H541.5V469H541.5V472H541.5V475H541.5V478H541.5V481H541.5V484H541.5V487H541.5V490H541.5V493H541.5V496H541.5V499H541.5V502H541.5V505H541.5V508H541.5V511H541.5V514H541.5V517H540.5V520H540.5V523H540.5V526H540.5V529H540.5V532H540.5V535H540.5V538H540.5V541H540.5V544H540.5V547H540.5V550H540.5V553H540.5V556H540.5V558" fill="none" stroke="#66cc66" stroke-width="1.1"/><path d="M311 419.5H541M311 419.5L329 414M311 419.5L329 425M541 419.5L523 414M541 419.5L523 425" stroke="#c838c8" stroke-width="1.3" fill="none"/><text x="566" y="147" font-size="12.5" fill="#c0c0c0" text-anchor="end" font-family="Liberation Sans, sans-serif" stroke="#000" stroke-width="2.5" paint-order="stroke" stroke-linejoin="round">1E-2 BER</text><text x="566" y="230" font-size="12.5" fill="#c0c0c0" text-anchor="end" font-family="Liberation Sans, sans-serif" stroke="#000" stroke-width="2.5" paint-order="stroke" stroke-linejoin="round">1E-5 BER</text><text x="566" y="313" font-size="12.5" fill="#c0c0c0" text-anchor="end" font-family="Liberation Sans, sans-serif" stroke="#000" stroke-width="2.5" paint-order="stroke" stroke-linejoin="round">1E-8 BER</text><text x="566" y="396" font-size="12.5" fill="#c0c0c0" text-anchor="end" font-family="Liberation Sans, sans-serif" stroke="#000" stroke-width="2.5" paint-order="stroke" stroke-linejoin="round">1E-11 BER</text><text x="566" y="480" font-size="12.5" fill="#c0c0c0" text-anchor="end" font-family="Liberation Sans, sans-serif" stroke="#000" stroke-width="2.5" paint-order="stroke" stroke-linejoin="round">1E-14 BER</text><text x="321.5" y="556" font-size="13" fill="#c0c0c0" text-anchor="middle" font-family="Liberation Sans, sans-serif" stroke="#000" stroke-width="2.5" paint-order="stroke" stroke-linejoin="round">-0.4 UI</text><text x="373.5" y="556" font-size="13" fill="#c0c0c0" text-anchor="middle" font-family="Liberation Sans, sans-serif" stroke="#000" stroke-width="2.5" paint-order="stroke" stroke-linejoin="round">-0.2 UI</text><text x="425.5" y="556" font-size="13" fill="#c0c0c0" text-anchor="middle" font-family="Liberation Sans, sans-serif" stroke="#000" stroke-width="2.5" paint-order="stroke" stroke-linejoin="round">0 UI</text><text x="477.5" y="556" font-size="13" fill="#c0c0c0" text-anchor="middle" font-family="Liberation Sans, sans-serif" stroke="#000" stroke-width="2.5" paint-order="stroke" stroke-linejoin="round">0.2 UI</text><text x="529.5" y="556" font-size="13" fill="#c0c0c0" text-anchor="middle" font-family="Liberation Sans, sans-serif" stroke="#000" stroke-width="2.5" paint-order="stroke" stroke-linejoin="round">0.4 UI</text><path d="M527 94H561V128Z" fill="#5a5a5a"/><circle cx="553.5" cy="100.5" r="4.4" fill="none" stroke="#b4b4b4" stroke-width="1.8"/><path d="M550.3 103.7L543.5 110.5" stroke="#b4b4b4" stroke-width="2.4" stroke-linecap="round"/></svg><svg style="position:absolute;left:575px;top:87px;overflow:hidden" width="1172" height="332" viewBox="575 87 1172 332" ><rect x="599" y="104" width="1.2" height="1.2" fill="#b8b8b8"/><rect x="599" y="124" width="1.2" height="1.2" fill="#b8b8b8"/><rect x="599" y="145" width="1.2" height="1.2" fill="#b8b8b8"/><rect x="599" y="166" width="1.2" height="1.2" fill="#b8b8b8"/><rect x="599" y="187" width="1.2" height="1.2" fill="#b8b8b8"/><rect x="599" y="208" width="1.2" height="1.2" fill="#b8b8b8"/><rect x="599" y="229" width="1.2" height="1.2" fill="#b8b8b8"/><rect x="599" y="250" width="1.2" height="1.2" fill="#b8b8b8"/><rect x="599" y="271" width="1.2" height="1.2" fill="#b8b8b8"/><rect x="599" y="292" width="1.2" height="1.2" fill="#b8b8b8"/><rect x="599" y="312" width="1.2" height="1.2" fill="#b8b8b8"/><rect x="599" y="333" width="1.2" height="1.2" fill="#b8b8b8"/><rect x="599" y="354" width="1.2" height="1.2" fill="#b8b8b8"/><rect x="599" y="375" width="1.2" height="1.2" fill="#b8b8b8"/><rect x="599" y="396" width="1.2" height="1.2" fill="#b8b8b8"/><rect x="599" y="417" width="1.2" height="1.2" fill="#b8b8b8"/><rect x="787" y="104" width="1.2" height="1.2" fill="#b8b8b8"/><rect x="787" y="124" width="1.2" height="1.2" fill="#b8b8b8"/><rect x="787" y="145" width="1.2" height="1.2" fill="#b8b8b8"/><rect x="787" y="166" width="1.2" height="1.2" fill="#b8b8b8"/><rect x="787" y="187" width="1.2" height="1.2" fill="#b8b8b8"/><rect x="787" y="208" width="1.2" height="1.2" fill="#b8b8b8"/><rect x="787" y="229" width="1.2" height="1.2" fill="#b8b8b8"/><rect x="787" y="250" width="1.2" height="1.2" fill="#b8b8b8"/><rect x="787" y="271" width="1.2" height="1.2" fill="#b8b8b8"/><rect x="787" y="292" width="1.2" height="1.2" fill="#b8b8b8"/><rect x="787" y="312" width="1.2" height="1.2" fill="#b8b8b8"/><rect x="787" y="333" width="1.2" height="1.2" fill="#b8b8b8"/><rect x="787" y="354" width="1.2" height="1.2" fill="#b8b8b8"/><rect x="787" y="375" width="1.2" height="1.2" fill="#b8b8b8"/><rect x="787" y="396" width="1.2" height="1.2" fill="#b8b8b8"/><rect x="787" y="417" width="1.2" height="1.2" fill="#b8b8b8"/><rect x="975" y="104" width="1.2" height="1.2" fill="#b8b8b8"/><rect x="975" y="124" width="1.2" height="1.2" fill="#b8b8b8"/><rect x="975" y="145" width="1.2" height="1.2" fill="#b8b8b8"/><rect x="975" y="166" width="1.2" height="1.2" fill="#b8b8b8"/><rect x="975" y="187" width="1.2" height="1.2" fill="#b8b8b8"/><rect x="975" y="208" width="1.2" height="1.2" fill="#b8b8b8"/><rect x="975" y="229" width="1.2" height="1.2" fill="#b8b8b8"/><rect x="975" y="250" width="1.2" height="1.2" fill="#b8b8b8"/><rect x="975" y="271" width="1.2" height="1.2" fill="#b8b8b8"/><rect x="975" y="292" width="1.2" height="1.2" fill="#b8b8b8"/><rect x="975" y="312" width="1.2" height="1.2" fill="#b8b8b8"/><rect x="975" y="333" width="1.2" height="1.2" fill="#b8b8b8"/><rect x="975" y="354" width="1.2" height="1.2" fill="#b8b8b8"/><rect x="975" y="375" width="1.2" height="1.2" fill="#b8b8b8"/><rect x="975" y="396" width="1.2" height="1.2" fill="#b8b8b8"/><rect x="975" y="417" width="1.2" height="1.2" fill="#b8b8b8"/><rect x="1162" y="104" width="1.2" height="1.2" fill="#b8b8b8"/><rect x="1162" y="124" width="1.2" height="1.2" fill="#b8b8b8"/><rect x="1162" y="145" width="1.2" height="1.2" fill="#b8b8b8"/><rect x="1162" y="166" width="1.2" height="1.2" fill="#b8b8b8"/><rect x="1162" y="187" width="1.2" height="1.2" fill="#b8b8b8"/><rect x="1162" y="208" width="1.2" height="1.2" fill="#b8b8b8"/><rect x="1162" y="229" width="1.2" height="1.2" fill="#b8b8b8"/><rect x="1162" y="250" width="1.2" height="1.2" fill="#b8b8b8"/><rect x="1162" y="271" width="1.2" height="1.2" fill="#b8b8b8"/><rect x="1162" y="292" width="1.2" height="1.2" fill="#b8b8b8"/><rect x="1162" y="312" width="1.2" height="1.2" fill="#b8b8b8"/><rect x="1162" y="333" width="1.2" height="1.2" fill="#b8b8b8"/><rect x="1162" y="354" width="1.2" height="1.2" fill="#b8b8b8"/><rect x="1162" y="375" width="1.2" height="1.2" fill="#b8b8b8"/><rect x="1162" y="396" width="1.2" height="1.2" fill="#b8b8b8"/><rect x="1162" y="417" width="1.2" height="1.2" fill="#b8b8b8"/><rect x="1350" y="104" width="1.2" height="1.2" fill="#b8b8b8"/><rect x="1350" y="124" width="1.2" height="1.2" fill="#b8b8b8"/><rect x="1350" y="145" width="1.2" height="1.2" fill="#b8b8b8"/><rect x="1350" y="166" width="1.2" height="1.2" fill="#b8b8b8"/><rect x="1350" y="187" width="1.2" height="1.2" fill="#b8b8b8"/><rect x="1350" y="208" width="1.2" height="1.2" fill="#b8b8b8"/><rect x="1350" y="229" width="1.2" height="1.2" fill="#b8b8b8"/><rect x="1350" y="250" width="1.2" height="1.2" fill="#b8b8b8"/><rect x="1350" y="271" width="1.2" height="1.2" fill="#b8b8b8"/><rect x="1350" y="292" width="1.2" height="1.2" fill="#b8b8b8"/><rect x="1350" y="312" width="1.2" height="1.2" fill="#b8b8b8"/><rect x="1350" y="333" width="1.2" height="1.2" fill="#b8b8b8"/><rect x="1350" y="354" width="1.2" height="1.2" fill="#b8b8b8"/><rect x="1350" y="375" width="1.2" height="1.2" fill="#b8b8b8"/><rect x="1350" y="396" width="1.2" height="1.2" fill="#b8b8b8"/><rect x="1350" y="417" width="1.2" height="1.2" fill="#b8b8b8"/><rect x="1538" y="104" width="1.2" height="1.2" fill="#b8b8b8"/><rect x="1538" y="124" width="1.2" height="1.2" fill="#b8b8b8"/><rect x="1538" y="145" width="1.2" height="1.2" fill="#b8b8b8"/><rect x="1538" y="166" width="1.2" height="1.2" fill="#b8b8b8"/><rect x="1538" y="187" width="1.2" height="1.2" fill="#b8b8b8"/><rect x="1538" y="208" width="1.2" height="1.2" fill="#b8b8b8"/><rect x="1538" y="229" width="1.2" height="1.2" fill="#b8b8b8"/><rect x="1538" y="250" width="1.2" height="1.2" fill="#b8b8b8"/><rect x="1538" y="271" width="1.2" height="1.2" fill="#b8b8b8"/><rect x="1538" y="292" width="1.2" height="1.2" fill="#b8b8b8"/><rect x="1538" y="312" width="1.2" height="1.2" fill="#b8b8b8"/><rect x="1538" y="333" width="1.2" height="1.2" fill="#b8b8b8"/><rect x="1538" y="354" width="1.2" height="1.2" fill="#b8b8b8"/><rect x="1538" y="375" width="1.2" height="1.2" fill="#b8b8b8"/><rect x="1538" y="396" width="1.2" height="1.2" fill="#b8b8b8"/><rect x="1538" y="417" width="1.2" height="1.2" fill="#b8b8b8"/><rect x="1726" y="104" width="1.2" height="1.2" fill="#b8b8b8"/><rect x="1726" y="124" width="1.2" height="1.2" fill="#b8b8b8"/><rect x="1726" y="145" width="1.2" height="1.2" fill="#b8b8b8"/><rect x="1726" y="166" width="1.2" height="1.2" fill="#b8b8b8"/><rect x="1726" y="187" width="1.2" height="1.2" fill="#b8b8b8"/><rect x="1726" y="208" width="1.2" height="1.2" fill="#b8b8b8"/><rect x="1726" y="229" width="1.2" height="1.2" fill="#b8b8b8"/><rect x="1726" y="250" width="1.2" height="1.2" fill="#b8b8b8"/><rect x="1726" y="271" width="1.2" height="1.2" fill="#b8b8b8"/><rect x="1726" y="292" width="1.2" height="1.2" fill="#b8b8b8"/><rect x="1726" y="312" width="1.2" height="1.2" fill="#b8b8b8"/><rect x="1726" y="333" width="1.2" height="1.2" fill="#b8b8b8"/><rect x="1726" y="354" width="1.2" height="1.2" fill="#b8b8b8"/><rect x="1726" y="375" width="1.2" height="1.2" fill="#b8b8b8"/><rect x="1726" y="396" width="1.2" height="1.2" fill="#b8b8b8"/><rect x="1726" y="417" width="1.2" height="1.2" fill="#b8b8b8"/><rect x="599" y="249" width="1.2" height="1.2" fill="#b8b8b8"/><rect x="637" y="249" width="1.2" height="1.2" fill="#b8b8b8"/><rect x="674" y="249" width="1.2" height="1.2" fill="#b8b8b8"/><rect x="712" y="249" width="1.2" height="1.2" fill="#b8b8b8"/><rect x="749" y="249" width="1.2" height="1.2" fill="#b8b8b8"/><rect x="787" y="249" width="1.2" height="1.2" fill="#b8b8b8"/><rect x="825" y="249" width="1.2" height="1.2" fill="#b8b8b8"/><rect x="862" y="249" width="1.2" height="1.2" fill="#b8b8b8"/><rect x="900" y="249" width="1.2" height="1.2" fill="#b8b8b8"/><rect x="937" y="249" width="1.2" height="1.2" fill="#b8b8b8"/><rect x="975" y="249" width="1.2" height="1.2" fill="#b8b8b8"/><rect x="1012" y="249" width="1.2" height="1.2" fill="#b8b8b8"/><rect x="1050" y="249" width="1.2" height="1.2" fill="#b8b8b8"/><rect x="1087" y="249" width="1.2" height="1.2" fill="#b8b8b8"/><rect x="1125" y="249" width="1.2" height="1.2" fill="#b8b8b8"/><rect x="1162" y="249" width="1.2" height="1.2" fill="#b8b8b8"/><rect x="1200" y="249" width="1.2" height="1.2" fill="#b8b8b8"/><rect x="1238" y="249" width="1.2" height="1.2" fill="#b8b8b8"/><rect x="1275" y="249" width="1.2" height="1.2" fill="#b8b8b8"/><rect x="1313" y="249" width="1.2" height="1.2" fill="#b8b8b8"/><rect x="1350" y="249" width="1.2" height="1.2" fill="#b8b8b8"/><rect x="1388" y="249" width="1.2" height="1.2" fill="#b8b8b8"/><rect x="1425" y="249" width="1.2" height="1.2" fill="#b8b8b8"/><rect x="1463" y="249" width="1.2" height="1.2" fill="#b8b8b8"/><rect x="1500" y="249" width="1.2" height="1.2" fill="#b8b8b8"/><rect x="1538" y="249" width="1.2" height="1.2" fill="#b8b8b8"/><rect x="1576" y="249" width="1.2" height="1.2" fill="#b8b8b8"/><rect x="1613" y="249" width="1.2" height="1.2" fill="#b8b8b8"/><rect x="1651" y="249" width="1.2" height="1.2" fill="#b8b8b8"/><rect x="1688" y="249" width="1.2" height="1.2" fill="#b8b8b8"/><rect x="1726" y="249" width="1.2" height="1.2" fill="#b8b8b8"/><path d="M560 133.5H1765M560 364.5H1765" fill="none" stroke="#22d878" stroke-width="27.5"/><path d="M571 136.7L576 137.0L581 137.2L586 137.5L591 137.8L596 138.1L601 138.4L606 138.8L611 139.1L616 139.5L621 140.0L626 140.4L631 140.9L636 141.5L641 142.0L646 142.6L651 143.3L656 143.9L661 144.7L666 145.5L671 146.3L676 147.2L681 148.1L686 149.1L691 150.2L696 151.3L701 152.5L706 153.8L711 155.1L716 156.6L721 158.1L726 159.7L731 161.4L736 163.2L741 165.1L746 167.0L751 169.1L756 171.3L761 173.6L766 176.0L771 178.5L776 181.1L781 183.9L786 186.7L791 189.7L796 192.8L801 195.9L806 199.2L811 202.6L816 206.1L821 209.7L826 213.3L831 217.1L836 220.9L841 224.8L846 228.7L851 232.7L856 236.8L861 240.8L866 244.9L871 249.0L876 253.1L881 257.2L886 261.2L891 265.3L896 269.3L901 273.3L906 277.3L911 281.3L916 285.2L921 289.0L926 292.8L931 296.6L936 300.3L941 303.9L946 307.5L951 310.9L956 314.4L961 317.7L966 320.9L971 324.1L976 327.1L981 330.1L986 332.9L991 335.7L996 338.3L1001 340.9L1006 343.3L1011 345.6L1016 347.8L1021 349.8L1026 351.8L1031 353.6L1036 355.2L1041 356.8L1046 358.2L1051 359.4L1056 360.6L1061 361.6L1066 362.4L1071 363.1L1076 363.7L1081 364.1L1086 364.4L1091 364.5M571 361.3L576 361.0L581 360.8L586 360.5L591 360.2L596 359.9L601 359.6L606 359.2L611 358.9L616 358.5L621 358.0L626 357.6L631 357.1L636 356.5L641 356.0L646 355.4L651 354.7L656 354.1L661 353.3L666 352.5L671 351.7L676 350.8L681 349.9L686 348.9L691 347.8L696 346.7L701 345.5L706 344.2L711 342.9L716 341.4L721 339.9L726 338.3L731 336.6L736 334.8L741 332.9L746 331.0L751 328.9L756 326.7L761 324.4L766 322.0L771 319.5L776 316.9L781 314.1L786 311.3L791 308.3L796 305.2L801 302.1L806 298.8L811 295.4L816 291.9L821 288.3L826 284.7L831 280.9L836 277.1L841 273.2L846 269.3L851 265.3L856 261.2L861 257.2L866 253.1L871 249.0L876 244.9L881 240.8L886 236.8L891 232.7L896 228.7L901 224.7L906 220.7L911 216.7L916 212.8L921 209.0L926 205.2L931 201.4L936 197.7L941 194.1L946 190.5L951 187.1L956 183.6L961 180.3L966 177.1L971 173.9L976 170.9L981 167.9L986 165.1L991 162.3L996 159.7L1001 157.1L1006 154.7L1011 152.4L1016 150.2L1021 148.2L1026 146.2L1031 144.4L1036 142.8L1041 141.2L1046 139.8L1051 138.6L1056 137.4L1061 136.4L1066 135.6L1071 134.9L1076 134.3L1081 133.9L1086 133.6L1091 133.5M1233 133.5L1238 133.5L1243 133.7L1248 134.0L1253 134.4L1258 135.0L1263 135.7L1268 136.5L1273 137.5L1278 138.7L1283 140.0L1288 141.4L1293 142.9L1298 144.6L1303 146.4L1308 148.4L1313 150.4L1318 152.6L1323 154.9L1328 157.4L1333 159.9L1338 162.6L1343 165.3L1348 168.2L1353 171.2L1358 174.2L1363 177.4L1368 180.6L1373 184.0L1378 187.4L1383 190.9L1388 194.5L1393 198.1L1398 201.8L1403 205.6L1408 209.4L1413 213.2L1418 217.1L1423 221.1L1428 225.1L1433 229.1L1438 233.1L1443 237.2L1448 241.2L1453 245.3L1458 249.4L1463 253.5L1468 257.6L1473 261.6L1478 265.7L1483 269.7L1488 273.7L1493 277.7L1498 281.6L1503 285.5L1508 289.4L1513 293.2L1518 296.9L1523 300.6L1528 304.3L1533 307.8L1538 311.3L1543 314.7L1548 318.0L1553 321.2L1558 324.4L1563 327.4L1568 330.4L1573 333.2L1578 336.0L1583 338.6L1588 341.1L1593 343.5L1598 345.8L1603 348.0L1608 350.0L1613 351.9L1618 353.7L1623 355.4L1628 356.9L1633 358.3L1638 359.6L1643 360.7L1648 361.6L1653 362.5L1658 363.2L1663 363.7L1668 364.1L1673 364.4L1678 364.5M1233 364.5L1238 364.5L1243 364.3L1248 364.0L1253 363.6L1258 363.0L1263 362.3L1268 361.5L1273 360.5L1278 359.3L1283 358.0L1288 356.6L1293 355.1L1298 353.4L1303 351.6L1308 349.6L1313 347.6L1318 345.4L1323 343.1L1328 340.6L1333 338.1L1338 335.4L1343 332.7L1348 329.8L1353 326.8L1358 323.8L1363 320.6L1368 317.4L1373 314.0L1378 310.6L1383 307.1L1388 303.5L1393 299.9L1398 296.2L1403 292.4L1408 288.6L1413 284.8L1418 280.9L1423 276.9L1428 272.9L1433 268.9L1438 264.9L1443 260.8L1448 256.8L1453 252.7L1458 248.6L1463 244.5L1468 240.4L1473 236.4L1478 232.3L1483 228.3L1488 224.3L1493 220.3L1498 216.4L1503 212.5L1508 208.6L1513 204.8L1518 201.1L1523 197.4L1528 193.7L1533 190.2L1538 186.7L1543 183.3L1548 180.0L1553 176.8L1558 173.6L1563 170.6L1568 167.6L1573 164.8L1578 162.0L1583 159.4L1588 156.9L1593 154.5L1598 152.2L1603 150.0L1608 148.0L1613 146.1L1618 144.3L1623 142.6L1628 141.1L1633 139.7L1638 138.4L1643 137.3L1648 136.4L1653 135.5L1658 134.8L1663 134.3L1668 133.9L1673 133.6L1678 133.5M1820 133.5L1825 133.5L1830 133.7L1835 134.0L1840 134.4L1845 135.0L1850 135.8L1855 136.6L1860 137.6L1865 138.8L1870 140.1L1875 141.5L1880 143.1L1885 144.8L1890 146.6L1895 148.6L1900 150.6L1905 152.9L1910 155.2L1915 157.6L1920 160.2L1925 162.8L1930 165.6L1935 168.5L1940 171.5L1945 174.5L1950 177.7L1955 181.0L1960 184.3L1965 187.7L1970 191.2L1975 194.8L1980 198.5L1985 202.2L1990 205.9L1995 209.8L2000 213.6L2005 217.5L2010 221.5L2015 225.5L2020 229.5L2025 233.5L2030 237.6L2035 241.6L2040 245.7L2045 249.8L2050 253.9L2055 258.0L2060 262.0L2065 266.1L2070 270.1L2075 274.1L2080 278.1L2085 282.0L2090 285.9L2095 289.8L2100 293.6L2105 297.3L2110 301.0L2115 304.6L2120 308.2L2125 311.6L2130 315.0L2135 318.3L2140 321.6L2145 324.7L2150 327.7L2155 330.7L2160 333.5L2165 336.2L2170 338.9L2175 341.4L2180 343.8L2185 346.0L2190 348.2L2195 350.2L2200 352.1L2205 353.9L2210 355.6L2215 357.1L2220 358.4L2225 359.7L2230 360.8L2235 361.7L2240 362.6L2245 363.2L2250 363.8L2255 364.2L2260 364.4L2265 364.5M1820 364.5L1825 364.5L1830 364.3L1835 364.0L1840 363.6L1845 363.0L1850 362.2L1855 361.4L1860 360.4L1865 359.2L1870 357.9L1875 356.5L1880 354.9L1885 353.2L1890 351.4L1895 349.4L1900 347.4L1905 345.1L1910 342.8L1915 340.4L1920 337.8L1925 335.2L1930 332.4L1935 329.5L1940 326.5L1945 323.5L1950 320.3L1955 317.0L1960 313.7L1965 310.3L1970 306.8L1975 303.2L1980 299.5L1985 295.8L1990 292.1L1995 288.2L2000 284.4L2005 280.5L2010 276.5L2015 272.5L2020 268.5L2025 264.5L2030 260.4L2035 256.4L2040 252.3L2045 248.2L2050 244.1L2055 240.0L2060 236.0L2065 231.9L2070 227.9L2075 223.9L2080 219.9L2085 216.0L2090 212.1L2095 208.2L2100 204.4L2105 200.7L2110 197.0L2115 193.4L2120 189.8L2125 186.4L2130 183.0L2135 179.7L2140 176.4L2145 173.3L2150 170.3L2155 167.3L2160 164.5L2165 161.8L2170 159.1L2175 156.6L2180 154.2L2185 152.0L2190 149.8L2195 147.8L2200 145.9L2205 144.1L2210 142.4L2215 140.9L2220 139.6L2225 138.3L2230 137.2L2235 136.3L2240 135.4L2245 134.8L2250 134.2L2255 133.8L2260 133.6L2265 133.5M555 125.5L560 126.2L565 126.8L570 127.5L575 128.1L580 128.8L585 129.4L590 130.0L595 130.7L600 131.3L605 132.0L610 132.6L615 133.3L620 133.9L625 134.6L630 135.2L635 135.9L640 136.6L645 137.3L650 138.0L655 138.7L660 139.4L665 140.2L670 141.0L675 141.8L680 142.8L685 143.7L690 144.8L695 145.9L700 147.1L705 148.4L710 149.8L715 151.3L720 152.8L725 154.5L730 156.2L735 158.0L740 160.0L745 162.0L750 164.2L755 166.5L760 168.9L765 171.4L770 174.0L775 176.7L780 179.6L785 182.6L790 185.7L795 188.9L800 192.2L805 195.7L810 199.3L815 202.9L820 206.7L825 210.5L830 214.5L835 218.5L840 222.6L845 226.8L850 231.0L855 235.2L860 239.5L865 243.9L870 248.2L875 252.5M555 382.8L560 381.6L565 380.5L570 379.3L575 378.2L580 377.2L585 376.1L590 375.1L595 374.1L600 373.1L605 372.1L610 371.2L615 370.3L620 369.4L625 368.5L630 367.6L635 366.8L640 365.9L645 365.1L650 364.3L655 363.5L660 362.7L665 361.9L670 361.1L675 360.2L680 359.3L685 358.2L690 357.1L695 356.0L700 354.7L705 353.4L710 351.9L715 350.4L720 348.8L725 347.1L730 345.3L735 343.4L740 341.4L745 339.2L750 337.0L755 334.6L760 332.2L765 329.6L770 326.8L775 324.0L780 321.0L785 317.9L790 314.7L795 311.4L800 307.9L805 304.3L810 300.6L815 296.8L820 292.9L825 288.9L830 284.8L835 280.6L840 276.4L845 272.1L850 267.7L855 263.3L860 258.8L865 254.3L870 249.8L875 245.3M871 249.0L876 244.9L881 240.8L886 236.8L891 232.7L896 228.7L901 224.7L906 220.7L911 216.7L916 212.8L921 208.9L926 205.1L931 201.2L936 197.5L941 193.8L946 190.1L951 186.5L956 183.0L961 179.5L966 176.1L971 172.8L976 169.6L981 166.5L986 163.5L991 160.5L996 157.7L1001 155.0L1006 152.4L1011 149.9L1016 147.5L1021 145.2L1026 143.1L1031 141.1L1036 139.2L1041 137.4L1046 135.8L1051 134.4L1056 133.0L1061 131.8L1066 130.8L1071 129.9L1076 129.1L1081 128.5L1086 128.1L1091 127.8L1096 127.6L1101 127.5L1106 127.3L1111 127.2L1116 127.1L1121 127.0L1126 126.9L1131 126.8L1136 126.7L1141 126.6L1146 126.6L1151 126.5L1156 126.5L1161 126.5L1166 126.5L1171 126.5L1176 126.5L1181 126.6L1186 126.6L1191 126.7L1196 126.8L1201 126.8L1206 126.9L1211 127.0L1216 127.2L1221 127.3L1226 127.4L1231 127.6L1236 127.7L1241 128.0L1246 128.4L1251 128.9L1256 129.7L1261 130.5L1266 131.5L1271 132.7L1276 133.9L1281 135.4L1286 136.9L1291 138.7L1296 140.5L1301 142.5L1306 144.6L1311 146.8L1316 149.1L1321 151.6L1326 154.2L1331 156.9L1336 159.7L1341 162.6L1346 165.6L1351 168.7L1356 171.9L1361 175.1L1366 178.5L1371 181.9L1376 185.4L1381 189.0L1386 192.7L1391 196.4L1396 200.1L1401 203.9L1406 207.8L1411 211.6L1416 215.6L1421 219.5L1426 223.5L1431 227.5L1436 231.5L1441 235.5L1446 239.6L1451 243.7L1456 247.8L1461 251.9M871 249.0L876 253.1L881 257.2L886 261.2L891 265.3L896 269.3L901 273.3L906 277.3L911 281.3L916 285.2L921 289.1L926 293.0L931 296.9L936 300.7L941 304.5L946 308.3L951 312.0L956 315.6L961 319.1L966 322.6L971 326.1L976 329.4L981 332.7L986 335.9L991 339.0L996 341.9L1001 344.8L1006 347.6L1011 350.3L1016 352.9L1021 355.3L1026 357.6L1031 359.8L1036 361.9L1041 363.8L1046 365.6L1051 367.2L1056 368.8L1061 370.1L1066 371.3L1071 372.4L1076 373.3L1081 374.1L1086 374.7L1091 375.1L1096 375.4L1101 375.7L1106 376.0L1111 376.2L1116 376.4L1121 376.6L1126 376.8L1131 377.0L1136 377.1L1141 377.2L1146 377.3L1151 377.4L1156 377.5L1161 377.5L1166 377.5L1171 377.5L1176 377.4L1181 377.4L1186 377.3L1191 377.2L1196 377.0L1201 376.9L1206 376.7L1211 376.5L1216 376.3L1221 376.0L1226 375.8L1231 375.5L1236 375.2L1241 374.8L1246 374.3L1251 373.6L1256 372.7L1261 371.7L1266 370.5L1271 369.2L1276 367.7L1281 366.1L1286 364.4L1291 362.5L1296 360.4L1301 358.3L1306 356.0L1311 353.6L1316 351.1L1321 348.4L1326 345.7L1331 342.8L1336 339.9L1341 336.8L1346 333.7L1351 330.4L1356 327.1L1361 323.7L1366 320.2L1371 316.7L1376 313.0L1381 309.4L1386 305.7L1391 301.9L1396 298.1L1401 294.2L1406 290.3L1411 286.4L1416 282.5L1421 278.5L1426 274.5L1431 270.5L1436 266.5L1441 262.5L1446 258.4L1451 254.3L1456 250.2L1461 246.1M1457 249.4L1462 245.3L1467 241.2L1472 237.2L1477 233.1L1482 229.1L1487 225.1L1492 221.1L1497 217.1L1502 213.2L1507 209.3L1512 205.4L1517 201.6L1522 197.9L1527 194.1L1532 190.5L1537 186.9L1542 183.3L1547 179.9L1552 176.5L1557 173.2L1562 170.0L1567 166.8L1572 163.8L1577 160.8L1582 158.0L1587 155.3L1592 152.6L1597 150.1L1602 147.7L1607 145.4L1612 143.3L1617 141.3L1622 139.4L1627 137.6L1632 136.0L1637 134.5L1642 133.2L1647 131.9L1652 130.9L1657 130.0L1662 129.2L1667 128.6L1672 128.1L1677 127.8L1682 127.6L1687 127.5L1692 127.3L1697 127.2L1702 127.1L1707 127.0L1712 126.9L1717 126.8L1722 126.7L1727 126.6L1732 126.6L1737 126.5L1742 126.5L1747 126.5L1752 126.5L1757 126.5L1762 126.5L1767 126.6L1772 126.6L1777 126.7L1782 126.7L1787 126.8L1792 126.9L1797 127.0L1802 127.1L1807 127.3L1812 127.4L1817 127.6L1822 127.7L1827 128.0L1832 128.3L1837 128.9L1842 129.6L1847 130.4L1852 131.4L1857 132.5L1862 133.8L1867 135.2L1872 136.8L1877 138.5L1882 140.3L1887 142.3L1892 144.4L1897 146.6L1902 148.9L1907 151.4L1912 153.9L1917 156.6L1922 159.4L1927 162.3L1932 165.3L1937 168.4L1942 171.6L1947 174.8L1952 178.2L1957 181.6L1962 185.1L1967 188.7L1972 192.3L1977 196.0L1982 199.7L1987 203.5L1992 207.4L1997 211.2L2002 215.2L2007 219.1L2012 223.1L2017 227.1L2022 231.1L2027 235.1L2032 239.2L2037 243.3L2042 247.4L2047 251.5M1457 248.6L1462 252.7L1467 256.8L1472 260.8L1477 264.9L1482 268.9L1487 272.9L1492 276.9L1497 280.9L1502 284.8L1507 288.8L1512 292.7L1517 296.5L1522 300.4L1527 304.2L1532 307.9L1537 311.6L1542 315.2L1547 318.8L1552 322.3L1557 325.7L1562 329.1L1567 332.4L1572 335.6L1577 338.7L1582 341.7L1587 344.6L1592 347.3L1597 350.0L1602 352.6L1607 355.1L1612 357.4L1617 359.6L1622 361.7L1627 363.6L1632 365.4L1637 367.1L1642 368.6L1647 370.0L1652 371.2L1657 372.3L1662 373.2L1667 374.0L1672 374.6L1677 375.1L1682 375.4L1687 375.7L1692 375.9L1697 376.2L1702 376.4L1707 376.6L1712 376.8L1717 377.0L1722 377.1L1727 377.2L1732 377.3L1737 377.4L1742 377.5L1747 377.5L1752 377.5L1757 377.5L1762 377.4L1767 377.4L1772 377.3L1777 377.2L1782 377.0L1787 376.9L1792 376.7L1797 376.5L1802 376.3L1807 376.1L1812 375.8L1817 375.5L1822 375.2L1827 374.9L1832 374.3L1837 373.6L1842 372.8L1847 371.8L1852 370.6L1857 369.3L1862 367.9L1867 366.3L1872 364.5L1877 362.7L1882 360.6L1887 358.5L1892 356.2L1897 353.8L1902 351.3L1907 348.7L1912 346.0L1917 343.1L1922 340.2L1927 337.1L1932 334.0L1937 330.7L1942 327.4L1947 324.0L1952 320.6L1957 317.0L1962 313.4L1967 309.7L1972 306.0L1977 302.3L1982 298.4L1987 294.6L1992 290.7L1997 286.8L2002 282.9L2007 278.9L2012 274.9L2017 270.9L2022 266.9L2027 262.9L2032 258.8L2037 254.7L2042 250.6L2047 246.5" fill="none" stroke="#22d878" stroke-width="26.40" stroke-linejoin="round"/><path d="M560 133.5H1765M560 364.5H1765" fill="none" stroke="#98f020" stroke-width="25.2"/><path d="M571 136.7L576 137.0L581 137.2L586 137.5L591 137.8L596 138.1L601 138.4L606 138.8L611 139.1L616 139.5L621 140.0L626 140.4L631 140.9L636 141.5L641 142.0L646 142.6L651 143.3L656 143.9L661 144.7L666 145.5L671 146.3L676 147.2L681 148.1L686 149.1L691 150.2L696 151.3L701 152.5L706 153.8L711 155.1L716 156.6L721 158.1L726 159.7L731 161.4L736 163.2L741 165.1L746 167.0L751 169.1L756 171.3L761 173.6L766 176.0L771 178.5L776 181.1L781 183.9L786 186.7L791 189.7L796 192.8L801 195.9L806 199.2L811 202.6L816 206.1L821 209.7L826 213.3L831 217.1L836 220.9L841 224.8L846 228.7L851 232.7L856 236.8L861 240.8L866 244.9L871 249.0L876 253.1L881 257.2L886 261.2L891 265.3L896 269.3L901 273.3L906 277.3L911 281.3L916 285.2L921 289.0L926 292.8L931 296.6L936 300.3L941 303.9L946 307.5L951 310.9L956 314.4L961 317.7L966 320.9L971 324.1L976 327.1L981 330.1L986 332.9L991 335.7L996 338.3L1001 340.9L1006 343.3L1011 345.6L1016 347.8L1021 349.8L1026 351.8L1031 353.6L1036 355.2L1041 356.8L1046 358.2L1051 359.4L1056 360.6L1061 361.6L1066 362.4L1071 363.1L1076 363.7L1081 364.1L1086 364.4L1091 364.5M571 361.3L576 361.0L581 360.8L586 360.5L591 360.2L596 359.9L601 359.6L606 359.2L611 358.9L616 358.5L621 358.0L626 357.6L631 357.1L636 356.5L641 356.0L646 355.4L651 354.7L656 354.1L661 353.3L666 352.5L671 351.7L676 350.8L681 349.9L686 348.9L691 347.8L696 346.7L701 345.5L706 344.2L711 342.9L716 341.4L721 339.9L726 338.3L731 336.6L736 334.8L741 332.9L746 331.0L751 328.9L756 326.7L761 324.4L766 322.0L771 319.5L776 316.9L781 314.1L786 311.3L791 308.3L796 305.2L801 302.1L806 298.8L811 295.4L816 291.9L821 288.3L826 284.7L831 280.9L836 277.1L841 273.2L846 269.3L851 265.3L856 261.2L861 257.2L866 253.1L871 249.0L876 244.9L881 240.8L886 236.8L891 232.7L896 228.7L901 224.7L906 220.7L911 216.7L916 212.8L921 209.0L926 205.2L931 201.4L936 197.7L941 194.1L946 190.5L951 187.1L956 183.6L961 180.3L966 177.1L971 173.9L976 170.9L981 167.9L986 165.1L991 162.3L996 159.7L1001 157.1L1006 154.7L1011 152.4L1016 150.2L1021 148.2L1026 146.2L1031 144.4L1036 142.8L1041 141.2L1046 139.8L1051 138.6L1056 137.4L1061 136.4L1066 135.6L1071 134.9L1076 134.3L1081 133.9L1086 133.6L1091 133.5M1233 133.5L1238 133.5L1243 133.7L1248 134.0L1253 134.4L1258 135.0L1263 135.7L1268 136.5L1273 137.5L1278 138.7L1283 140.0L1288 141.4L1293 142.9L1298 144.6L1303 146.4L1308 148.4L1313 150.4L1318 152.6L1323 154.9L1328 157.4L1333 159.9L1338 162.6L1343 165.3L1348 168.2L1353 171.2L1358 174.2L1363 177.4L1368 180.6L1373 184.0L1378 187.4L1383 190.9L1388 194.5L1393 198.1L1398 201.8L1403 205.6L1408 209.4L1413 213.2L1418 217.1L1423 221.1L1428 225.1L1433 229.1L1438 233.1L1443 237.2L1448 241.2L1453 245.3L1458 249.4L1463 253.5L1468 257.6L1473 261.6L1478 265.7L1483 269.7L1488 273.7L1493 277.7L1498 281.6L1503 285.5L1508 289.4L1513 293.2L1518 296.9L1523 300.6L1528 304.3L1533 307.8L1538 311.3L1543 314.7L1548 318.0L1553 321.2L1558 324.4L1563 327.4L1568 330.4L1573 333.2L1578 336.0L1583 338.6L1588 341.1L1593 343.5L1598 345.8L1603 348.0L1608 350.0L1613 351.9L1618 353.7L1623 355.4L1628 356.9L1633 358.3L1638 359.6L1643 360.7L1648 361.6L1653 362.5L1658 363.2L1663 363.7L1668 364.1L1673 364.4L1678 364.5M1233 364.5L1238 364.5L1243 364.3L1248 364.0L1253 363.6L1258 363.0L1263 362.3L1268 361.5L1273 360.5L1278 359.3L1283 358.0L1288 356.6L1293 355.1L1298 353.4L1303 351.6L1308 349.6L1313 347.6L1318 345.4L1323 343.1L1328 340.6L1333 338.1L1338 335.4L1343 332.7L1348 329.8L1353 326.8L1358 323.8L1363 320.6L1368 317.4L1373 314.0L1378 310.6L1383 307.1L1388 303.5L1393 299.9L1398 296.2L1403 292.4L1408 288.6L1413 284.8L1418 280.9L1423 276.9L1428 272.9L1433 268.9L1438 264.9L1443 260.8L1448 256.8L1453 252.7L1458 248.6L1463 244.5L1468 240.4L1473 236.4L1478 232.3L1483 228.3L1488 224.3L1493 220.3L1498 216.4L1503 212.5L1508 208.6L1513 204.8L1518 201.1L1523 197.4L1528 193.7L1533 190.2L1538 186.7L1543 183.3L1548 180.0L1553 176.8L1558 173.6L1563 170.6L1568 167.6L1573 164.8L1578 162.0L1583 159.4L1588 156.9L1593 154.5L1598 152.2L1603 150.0L1608 148.0L1613 146.1L1618 144.3L1623 142.6L1628 141.1L1633 139.7L1638 138.4L1643 137.3L1648 136.4L1653 135.5L1658 134.8L1663 134.3L1668 133.9L1673 133.6L1678 133.5M1820 133.5L1825 133.5L1830 133.7L1835 134.0L1840 134.4L1845 135.0L1850 135.8L1855 136.6L1860 137.6L1865 138.8L1870 140.1L1875 141.5L1880 143.1L1885 144.8L1890 146.6L1895 148.6L1900 150.6L1905 152.9L1910 155.2L1915 157.6L1920 160.2L1925 162.8L1930 165.6L1935 168.5L1940 171.5L1945 174.5L1950 177.7L1955 181.0L1960 184.3L1965 187.7L1970 191.2L1975 194.8L1980 198.5L1985 202.2L1990 205.9L1995 209.8L2000 213.6L2005 217.5L2010 221.5L2015 225.5L2020 229.5L2025 233.5L2030 237.6L2035 241.6L2040 245.7L2045 249.8L2050 253.9L2055 258.0L2060 262.0L2065 266.1L2070 270.1L2075 274.1L2080 278.1L2085 282.0L2090 285.9L2095 289.8L2100 293.6L2105 297.3L2110 301.0L2115 304.6L2120 308.2L2125 311.6L2130 315.0L2135 318.3L2140 321.6L2145 324.7L2150 327.7L2155 330.7L2160 333.5L2165 336.2L2170 338.9L2175 341.4L2180 343.8L2185 346.0L2190 348.2L2195 350.2L2200 352.1L2205 353.9L2210 355.6L2215 357.1L2220 358.4L2225 359.7L2230 360.8L2235 361.7L2240 362.6L2245 363.2L2250 363.8L2255 364.2L2260 364.4L2265 364.5M1820 364.5L1825 364.5L1830 364.3L1835 364.0L1840 363.6L1845 363.0L1850 362.2L1855 361.4L1860 360.4L1865 359.2L1870 357.9L1875 356.5L1880 354.9L1885 353.2L1890 351.4L1895 349.4L1900 347.4L1905 345.1L1910 342.8L1915 340.4L1920 337.8L1925 335.2L1930 332.4L1935 329.5L1940 326.5L1945 323.5L1950 320.3L1955 317.0L1960 313.7L1965 310.3L1970 306.8L1975 303.2L1980 299.5L1985 295.8L1990 292.1L1995 288.2L2000 284.4L2005 280.5L2010 276.5L2015 272.5L2020 268.5L2025 264.5L2030 260.4L2035 256.4L2040 252.3L2045 248.2L2050 244.1L2055 240.0L2060 236.0L2065 231.9L2070 227.9L2075 223.9L2080 219.9L2085 216.0L2090 212.1L2095 208.2L2100 204.4L2105 200.7L2110 197.0L2115 193.4L2120 189.8L2125 186.4L2130 183.0L2135 179.7L2140 176.4L2145 173.3L2150 170.3L2155 167.3L2160 164.5L2165 161.8L2170 159.1L2175 156.6L2180 154.2L2185 152.0L2190 149.8L2195 147.8L2200 145.9L2205 144.1L2210 142.4L2215 140.9L2220 139.6L2225 138.3L2230 137.2L2235 136.3L2240 135.4L2245 134.8L2250 134.2L2255 133.8L2260 133.6L2265 133.5M555 125.5L560 126.2L565 126.8L570 127.5L575 128.1L580 128.8L585 129.4L590 130.0L595 130.7L600 131.3L605 132.0L610 132.6L615 133.3L620 133.9L625 134.6L630 135.2L635 135.9L640 136.6L645 137.3L650 138.0L655 138.7L660 139.4L665 140.2L670 141.0L675 141.8L680 142.8L685 143.7L690 144.8L695 145.9L700 147.1L705 148.4L710 149.8L715 151.3L720 152.8L725 154.5L730 156.2L735 158.0L740 160.0L745 162.0L750 164.2L755 166.5L760 168.9L765 171.4L770 174.0L775 176.7L780 179.6L785 182.6L790 185.7L795 188.9L800 192.2L805 195.7L810 199.3L815 202.9L820 206.7L825 210.5L830 214.5L835 218.5L840 222.6L845 226.8L850 231.0L855 235.2L860 239.5L865 243.9L870 248.2L875 252.5M555 382.8L560 381.6L565 380.5L570 379.3L575 378.2L580 377.2L585 376.1L590 375.1L595 374.1L600 373.1L605 372.1L610 371.2L615 370.3L620 369.4L625 368.5L630 367.6L635 366.8L640 365.9L645 365.1L650 364.3L655 363.5L660 362.7L665 361.9L670 361.1L675 360.2L680 359.3L685 358.2L690 357.1L695 356.0L700 354.7L705 353.4L710 351.9L715 350.4L720 348.8L725 347.1L730 345.3L735 343.4L740 341.4L745 339.2L750 337.0L755 334.6L760 332.2L765 329.6L770 326.8L775 324.0L780 321.0L785 317.9L790 314.7L795 311.4L800 307.9L805 304.3L810 300.6L815 296.8L820 292.9L825 288.9L830 284.8L835 280.6L840 276.4L845 272.1L850 267.7L855 263.3L860 258.8L865 254.3L870 249.8L875 245.3M871 249.0L876 244.9L881 240.8L886 236.8L891 232.7L896 228.7L901 224.7L906 220.7L911 216.7L916 212.8L921 208.9L926 205.1L931 201.2L936 197.5L941 193.8L946 190.1L951 186.5L956 183.0L961 179.5L966 176.1L971 172.8L976 169.6L981 166.5L986 163.5L991 160.5L996 157.7L1001 155.0L1006 152.4L1011 149.9L1016 147.5L1021 145.2L1026 143.1L1031 141.1L1036 139.2L1041 137.4L1046 135.8L1051 134.4L1056 133.0L1061 131.8L1066 130.8L1071 129.9L1076 129.1L1081 128.5L1086 128.1L1091 127.8L1096 127.6L1101 127.5L1106 127.3L1111 127.2L1116 127.1L1121 127.0L1126 126.9L1131 126.8L1136 126.7L1141 126.6L1146 126.6L1151 126.5L1156 126.5L1161 126.5L1166 126.5L1171 126.5L1176 126.5L1181 126.6L1186 126.6L1191 126.7L1196 126.8L1201 126.8L1206 126.9L1211 127.0L1216 127.2L1221 127.3L1226 127.4L1231 127.6L1236 127.7L1241 128.0L1246 128.4L1251 128.9L1256 129.7L1261 130.5L1266 131.5L1271 132.7L1276 133.9L1281 135.4L1286 136.9L1291 138.7L1296 140.5L1301 142.5L1306 144.6L1311 146.8L1316 149.1L1321 151.6L1326 154.2L1331 156.9L1336 159.7L1341 162.6L1346 165.6L1351 168.7L1356 171.9L1361 175.1L1366 178.5L1371 181.9L1376 185.4L1381 189.0L1386 192.7L1391 196.4L1396 200.1L1401 203.9L1406 207.8L1411 211.6L1416 215.6L1421 219.5L1426 223.5L1431 227.5L1436 231.5L1441 235.5L1446 239.6L1451 243.7L1456 247.8L1461 251.9M871 249.0L876 253.1L881 257.2L886 261.2L891 265.3L896 269.3L901 273.3L906 277.3L911 281.3L916 285.2L921 289.1L926 293.0L931 296.9L936 300.7L941 304.5L946 308.3L951 312.0L956 315.6L961 319.1L966 322.6L971 326.1L976 329.4L981 332.7L986 335.9L991 339.0L996 341.9L1001 344.8L1006 347.6L1011 350.3L1016 352.9L1021 355.3L1026 357.6L1031 359.8L1036 361.9L1041 363.8L1046 365.6L1051 367.2L1056 368.8L1061 370.1L1066 371.3L1071 372.4L1076 373.3L1081 374.1L1086 374.7L1091 375.1L1096 375.4L1101 375.7L1106 376.0L1111 376.2L1116 376.4L1121 376.6L1126 376.8L1131 377.0L1136 377.1L1141 377.2L1146 377.3L1151 377.4L1156 377.5L1161 377.5L1166 377.5L1171 377.5L1176 377.4L1181 377.4L1186 377.3L1191 377.2L1196 377.0L1201 376.9L1206 376.7L1211 376.5L1216 376.3L1221 376.0L1226 375.8L1231 375.5L1236 375.2L1241 374.8L1246 374.3L1251 373.6L1256 372.7L1261 371.7L1266 370.5L1271 369.2L1276 367.7L1281 366.1L1286 364.4L1291 362.5L1296 360.4L1301 358.3L1306 356.0L1311 353.6L1316 351.1L1321 348.4L1326 345.7L1331 342.8L1336 339.9L1341 336.8L1346 333.7L1351 330.4L1356 327.1L1361 323.7L1366 320.2L1371 316.7L1376 313.0L1381 309.4L1386 305.7L1391 301.9L1396 298.1L1401 294.2L1406 290.3L1411 286.4L1416 282.5L1421 278.5L1426 274.5L1431 270.5L1436 266.5L1441 262.5L1446 258.4L1451 254.3L1456 250.2L1461 246.1M1457 249.4L1462 245.3L1467 241.2L1472 237.2L1477 233.1L1482 229.1L1487 225.1L1492 221.1L1497 217.1L1502 213.2L1507 209.3L1512 205.4L1517 201.6L1522 197.9L1527 194.1L1532 190.5L1537 186.9L1542 183.3L1547 179.9L1552 176.5L1557 173.2L1562 170.0L1567 166.8L1572 163.8L1577 160.8L1582 158.0L1587 155.3L1592 152.6L1597 150.1L1602 147.7L1607 145.4L1612 143.3L1617 141.3L1622 139.4L1627 137.6L1632 136.0L1637 134.5L1642 133.2L1647 131.9L1652 130.9L1657 130.0L1662 129.2L1667 128.6L1672 128.1L1677 127.8L1682 127.6L1687 127.5L1692 127.3L1697 127.2L1702 127.1L1707 127.0L1712 126.9L1717 126.8L1722 126.7L1727 126.6L1732 126.6L1737 126.5L1742 126.5L1747 126.5L1752 126.5L1757 126.5L1762 126.5L1767 126.6L1772 126.6L1777 126.7L1782 126.7L1787 126.8L1792 126.9L1797 127.0L1802 127.1L1807 127.3L1812 127.4L1817 127.6L1822 127.7L1827 128.0L1832 128.3L1837 128.9L1842 129.6L1847 130.4L1852 131.4L1857 132.5L1862 133.8L1867 135.2L1872 136.8L1877 138.5L1882 140.3L1887 142.3L1892 144.4L1897 146.6L1902 148.9L1907 151.4L1912 153.9L1917 156.6L1922 159.4L1927 162.3L1932 165.3L1937 168.4L1942 171.6L1947 174.8L1952 178.2L1957 181.6L1962 185.1L1967 188.7L1972 192.3L1977 196.0L1982 199.7L1987 203.5L1992 207.4L1997 211.2L2002 215.2L2007 219.1L2012 223.1L2017 227.1L2022 231.1L2027 235.1L2032 239.2L2037 243.3L2042 247.4L2047 251.5M1457 248.6L1462 252.7L1467 256.8L1472 260.8L1477 264.9L1482 268.9L1487 272.9L1492 276.9L1497 280.9L1502 284.8L1507 288.8L1512 292.7L1517 296.5L1522 300.4L1527 304.2L1532 307.9L1537 311.6L1542 315.2L1547 318.8L1552 322.3L1557 325.7L1562 329.1L1567 332.4L1572 335.6L1577 338.7L1582 341.7L1587 344.6L1592 347.3L1597 350.0L1602 352.6L1607 355.1L1612 357.4L1617 359.6L1622 361.7L1627 363.6L1632 365.4L1637 367.1L1642 368.6L1647 370.0L1652 371.2L1657 372.3L1662 373.2L1667 374.0L1672 374.6L1677 375.1L1682 375.4L1687 375.7L1692 375.9L1697 376.2L1702 376.4L1707 376.6L1712 376.8L1717 377.0L1722 377.1L1727 377.2L1732 377.3L1737 377.4L1742 377.5L1747 377.5L1752 377.5L1757 377.5L1762 377.4L1767 377.4L1772 377.3L1777 377.2L1782 377.0L1787 376.9L1792 376.7L1797 376.5L1802 376.3L1807 376.1L1812 375.8L1817 375.5L1822 375.2L1827 374.9L1832 374.3L1837 373.6L1842 372.8L1847 371.8L1852 370.6L1857 369.3L1862 367.9L1867 366.3L1872 364.5L1877 362.7L1882 360.6L1887 358.5L1892 356.2L1897 353.8L1902 351.3L1907 348.7L1912 346.0L1917 343.1L1922 340.2L1927 337.1L1932 334.0L1937 330.7L1942 327.4L1947 324.0L1952 320.6L1957 317.0L1962 313.4L1967 309.7L1972 306.0L1977 302.3L1982 298.4L1987 294.6L1992 290.7L1997 286.8L2002 282.9L2007 278.9L2012 274.9L2017 270.9L2022 266.9L2027 262.9L2032 258.8L2037 254.7L2042 250.6L2047 246.5" fill="none" stroke="#98f020" stroke-width="24.19" stroke-linejoin="round"/><path d="M560 133.5H1765M560 364.5H1765" fill="none" stroke="#e8f800" stroke-width="22.8"/><path d="M571 136.7L576 137.0L581 137.2L586 137.5L591 137.8L596 138.1L601 138.4L606 138.8L611 139.1L616 139.5L621 140.0L626 140.4L631 140.9L636 141.5L641 142.0L646 142.6L651 143.3L656 143.9L661 144.7L666 145.5L671 146.3L676 147.2L681 148.1L686 149.1L691 150.2L696 151.3L701 152.5L706 153.8L711 155.1L716 156.6L721 158.1L726 159.7L731 161.4L736 163.2L741 165.1L746 167.0L751 169.1L756 171.3L761 173.6L766 176.0L771 178.5L776 181.1L781 183.9L786 186.7L791 189.7L796 192.8L801 195.9L806 199.2L811 202.6L816 206.1L821 209.7L826 213.3L831 217.1L836 220.9L841 224.8L846 228.7L851 232.7L856 236.8L861 240.8L866 244.9L871 249.0L876 253.1L881 257.2L886 261.2L891 265.3L896 269.3L901 273.3L906 277.3L911 281.3L916 285.2L921 289.0L926 292.8L931 296.6L936 300.3L941 303.9L946 307.5L951 310.9L956 314.4L961 317.7L966 320.9L971 324.1L976 327.1L981 330.1L986 332.9L991 335.7L996 338.3L1001 340.9L1006 343.3L1011 345.6L1016 347.8L1021 349.8L1026 351.8L1031 353.6L1036 355.2L1041 356.8L1046 358.2L1051 359.4L1056 360.6L1061 361.6L1066 362.4L1071 363.1L1076 363.7L1081 364.1L1086 364.4L1091 364.5M571 361.3L576 361.0L581 360.8L586 360.5L591 360.2L596 359.9L601 359.6L606 359.2L611 358.9L616 358.5L621 358.0L626 357.6L631 357.1L636 356.5L641 356.0L646 355.4L651 354.7L656 354.1L661 353.3L666 352.5L671 351.7L676 350.8L681 349.9L686 348.9L691 347.8L696 346.7L701 345.5L706 344.2L711 342.9L716 341.4L721 339.9L726 338.3L731 336.6L736 334.8L741 332.9L746 331.0L751 328.9L756 326.7L761 324.4L766 322.0L771 319.5L776 316.9L781 314.1L786 311.3L791 308.3L796 305.2L801 302.1L806 298.8L811 295.4L816 291.9L821 288.3L826 284.7L831 280.9L836 277.1L841 273.2L846 269.3L851 265.3L856 261.2L861 257.2L866 253.1L871 249.0L876 244.9L881 240.8L886 236.8L891 232.7L896 228.7L901 224.7L906 220.7L911 216.7L916 212.8L921 209.0L926 205.2L931 201.4L936 197.7L941 194.1L946 190.5L951 187.1L956 183.6L961 180.3L966 177.1L971 173.9L976 170.9L981 167.9L986 165.1L991 162.3L996 159.7L1001 157.1L1006 154.7L1011 152.4L1016 150.2L1021 148.2L1026 146.2L1031 144.4L1036 142.8L1041 141.2L1046 139.8L1051 138.6L1056 137.4L1061 136.4L1066 135.6L1071 134.9L1076 134.3L1081 133.9L1086 133.6L1091 133.5M1233 133.5L1238 133.5L1243 133.7L1248 134.0L1253 134.4L1258 135.0L1263 135.7L1268 136.5L1273 137.5L1278 138.7L1283 140.0L1288 141.4L1293 142.9L1298 144.6L1303 146.4L1308 148.4L1313 150.4L1318 152.6L1323 154.9L1328 157.4L1333 159.9L1338 162.6L1343 165.3L1348 168.2L1353 171.2L1358 174.2L1363 177.4L1368 180.6L1373 184.0L1378 187.4L1383 190.9L1388 194.5L1393 198.1L1398 201.8L1403 205.6L1408 209.4L1413 213.2L1418 217.1L1423 221.1L1428 225.1L1433 229.1L1438 233.1L1443 237.2L1448 241.2L1453 245.3L1458 249.4L1463 253.5L1468 257.6L1473 261.6L1478 265.7L1483 269.7L1488 273.7L1493 277.7L1498 281.6L1503 285.5L1508 289.4L1513 293.2L1518 296.9L1523 300.6L1528 304.3L1533 307.8L1538 311.3L1543 314.7L1548 318.0L1553 321.2L1558 324.4L1563 327.4L1568 330.4L1573 333.2L1578 336.0L1583 338.6L1588 341.1L1593 343.5L1598 345.8L1603 348.0L1608 350.0L1613 351.9L1618 353.7L1623 355.4L1628 356.9L1633 358.3L1638 359.6L1643 360.7L1648 361.6L1653 362.5L1658 363.2L1663 363.7L1668 364.1L1673 364.4L1678 364.5M1233 364.5L1238 364.5L1243 364.3L1248 364.0L1253 363.6L1258 363.0L1263 362.3L1268 361.5L1273 360.5L1278 359.3L1283 358.0L1288 356.6L1293 355.1L1298 353.4L1303 351.6L1308 349.6L1313 347.6L1318 345.4L1323 343.1L1328 340.6L1333 338.1L1338 335.4L1343 332.7L1348 329.8L1353 326.8L1358 323.8L1363 320.6L1368 317.4L1373 314.0L1378 310.6L1383 307.1L1388 303.5L1393 299.9L1398 296.2L1403 292.4L1408 288.6L1413 284.8L1418 280.9L1423 276.9L1428 272.9L1433 268.9L1438 264.9L1443 260.8L1448 256.8L1453 252.7L1458 248.6L1463 244.5L1468 240.4L1473 236.4L1478 232.3L1483 228.3L1488 224.3L1493 220.3L1498 216.4L1503 212.5L1508 208.6L1513 204.8L1518 201.1L1523 197.4L1528 193.7L1533 190.2L1538 186.7L1543 183.3L1548 180.0L1553 176.8L1558 173.6L1563 170.6L1568 167.6L1573 164.8L1578 162.0L1583 159.4L1588 156.9L1593 154.5L1598 152.2L1603 150.0L1608 148.0L1613 146.1L1618 144.3L1623 142.6L1628 141.1L1633 139.7L1638 138.4L1643 137.3L1648 136.4L1653 135.5L1658 134.8L1663 134.3L1668 133.9L1673 133.6L1678 133.5M1820 133.5L1825 133.5L1830 133.7L1835 134.0L1840 134.4L1845 135.0L1850 135.8L1855 136.6L1860 137.6L1865 138.8L1870 140.1L1875 141.5L1880 143.1L1885 144.8L1890 146.6L1895 148.6L1900 150.6L1905 152.9L1910 155.2L1915 157.6L1920 160.2L1925 162.8L1930 165.6L1935 168.5L1940 171.5L1945 174.5L1950 177.7L1955 181.0L1960 184.3L1965 187.7L1970 191.2L1975 194.8L1980 198.5L1985 202.2L1990 205.9L1995 209.8L2000 213.6L2005 217.5L2010 221.5L2015 225.5L2020 229.5L2025 233.5L2030 237.6L2035 241.6L2040 245.7L2045 249.8L2050 253.9L2055 258.0L2060 262.0L2065 266.1L2070 270.1L2075 274.1L2080 278.1L2085 282.0L2090 285.9L2095 289.8L2100 293.6L2105 297.3L2110 301.0L2115 304.6L2120 308.2L2125 311.6L2130 315.0L2135 318.3L2140 321.6L2145 324.7L2150 327.7L2155 330.7L2160 333.5L2165 336.2L2170 338.9L2175 341.4L2180 343.8L2185 346.0L2190 348.2L2195 350.2L2200 352.1L2205 353.9L2210 355.6L2215 357.1L2220 358.4L2225 359.7L2230 360.8L2235 361.7L2240 362.6L2245 363.2L2250 363.8L2255 364.2L2260 364.4L2265 364.5M1820 364.5L1825 364.5L1830 364.3L1835 364.0L1840 363.6L1845 363.0L1850 362.2L1855 361.4L1860 360.4L1865 359.2L1870 357.9L1875 356.5L1880 354.9L1885 353.2L1890 351.4L1895 349.4L1900 347.4L1905 345.1L1910 342.8L1915 340.4L1920 337.8L1925 335.2L1930 332.4L1935 329.5L1940 326.5L1945 323.5L1950 320.3L1955 317.0L1960 313.7L1965 310.3L1970 306.8L1975 303.2L1980 299.5L1985 295.8L1990 292.1L1995 288.2L2000 284.4L2005 280.5L2010 276.5L2015 272.5L2020 268.5L2025 264.5L2030 260.4L2035 256.4L2040 252.3L2045 248.2L2050 244.1L2055 240.0L2060 236.0L2065 231.9L2070 227.9L2075 223.9L2080 219.9L2085 216.0L2090 212.1L2095 208.2L2100 204.4L2105 200.7L2110 197.0L2115 193.4L2120 189.8L2125 186.4L2130 183.0L2135 179.7L2140 176.4L2145 173.3L2150 170.3L2155 167.3L2160 164.5L2165 161.8L2170 159.1L2175 156.6L2180 154.2L2185 152.0L2190 149.8L2195 147.8L2200 145.9L2205 144.1L2210 142.4L2215 140.9L2220 139.6L2225 138.3L2230 137.2L2235 136.3L2240 135.4L2245 134.8L2250 134.2L2255 133.8L2260 133.6L2265 133.5M555 125.5L560 126.2L565 126.8L570 127.5L575 128.1L580 128.8L585 129.4L590 130.0L595 130.7L600 131.3L605 132.0L610 132.6L615 133.3L620 133.9L625 134.6L630 135.2L635 135.9L640 136.6L645 137.3L650 138.0L655 138.7L660 139.4L665 140.2L670 141.0L675 141.8L680 142.8L685 143.7L690 144.8L695 145.9L700 147.1L705 148.4L710 149.8L715 151.3L720 152.8L725 154.5L730 156.2L735 158.0L740 160.0L745 162.0L750 164.2L755 166.5L760 168.9L765 171.4L770 174.0L775 176.7L780 179.6L785 182.6L790 185.7L795 188.9L800 192.2L805 195.7L810 199.3L815 202.9L820 206.7L825 210.5L830 214.5L835 218.5L840 222.6L845 226.8L850 231.0L855 235.2L860 239.5L865 243.9L870 248.2L875 252.5M555 382.8L560 381.6L565 380.5L570 379.3L575 378.2L580 377.2L585 376.1L590 375.1L595 374.1L600 373.1L605 372.1L610 371.2L615 370.3L620 369.4L625 368.5L630 367.6L635 366.8L640 365.9L645 365.1L650 364.3L655 363.5L660 362.7L665 361.9L670 361.1L675 360.2L680 359.3L685 358.2L690 357.1L695 356.0L700 354.7L705 353.4L710 351.9L715 350.4L720 348.8L725 347.1L730 345.3L735 343.4L740 341.4L745 339.2L750 337.0L755 334.6L760 332.2L765 329.6L770 326.8L775 324.0L780 321.0L785 317.9L790 314.7L795 311.4L800 307.9L805 304.3L810 300.6L815 296.8L820 292.9L825 288.9L830 284.8L835 280.6L840 276.4L845 272.1L850 267.7L855 263.3L860 258.8L865 254.3L870 249.8L875 245.3M871 249.0L876 244.9L881 240.8L886 236.8L891 232.7L896 228.7L901 224.7L906 220.7L911 216.7L916 212.8L921 208.9L926 205.1L931 201.2L936 197.5L941 193.8L946 190.1L951 186.5L956 183.0L961 179.5L966 176.1L971 172.8L976 169.6L981 166.5L986 163.5L991 160.5L996 157.7L1001 155.0L1006 152.4L1011 149.9L1016 147.5L1021 145.2L1026 143.1L1031 141.1L1036 139.2L1041 137.4L1046 135.8L1051 134.4L1056 133.0L1061 131.8L1066 130.8L1071 129.9L1076 129.1L1081 128.5L1086 128.1L1091 127.8L1096 127.6L1101 127.5L1106 127.3L1111 127.2L1116 127.1L1121 127.0L1126 126.9L1131 126.8L1136 126.7L1141 126.6L1146 126.6L1151 126.5L1156 126.5L1161 126.5L1166 126.5L1171 126.5L1176 126.5L1181 126.6L1186 126.6L1191 126.7L1196 126.8L1201 126.8L1206 126.9L1211 127.0L1216 127.2L1221 127.3L1226 127.4L1231 127.6L1236 127.7L1241 128.0L1246 128.4L1251 128.9L1256 129.7L1261 130.5L1266 131.5L1271 132.7L1276 133.9L1281 135.4L1286 136.9L1291 138.7L1296 140.5L1301 142.5L1306 144.6L1311 146.8L1316 149.1L1321 151.6L1326 154.2L1331 156.9L1336 159.7L1341 162.6L1346 165.6L1351 168.7L1356 171.9L1361 175.1L1366 178.5L1371 181.9L1376 185.4L1381 189.0L1386 192.7L1391 196.4L1396 200.1L1401 203.9L1406 207.8L1411 211.6L1416 215.6L1421 219.5L1426 223.5L1431 227.5L1436 231.5L1441 235.5L1446 239.6L1451 243.7L1456 247.8L1461 251.9M871 249.0L876 253.1L881 257.2L886 261.2L891 265.3L896 269.3L901 273.3L906 277.3L911 281.3L916 285.2L921 289.1L926 293.0L931 296.9L936 300.7L941 304.5L946 308.3L951 312.0L956 315.6L961 319.1L966 322.6L971 326.1L976 329.4L981 332.7L986 335.9L991 339.0L996 341.9L1001 344.8L1006 347.6L1011 350.3L1016 352.9L1021 355.3L1026 357.6L1031 359.8L1036 361.9L1041 363.8L1046 365.6L1051 367.2L1056 368.8L1061 370.1L1066 371.3L1071 372.4L1076 373.3L1081 374.1L1086 374.7L1091 375.1L1096 375.4L1101 375.7L1106 376.0L1111 376.2L1116 376.4L1121 376.6L1126 376.8L1131 377.0L1136 377.1L1141 377.2L1146 377.3L1151 377.4L1156 377.5L1161 377.5L1166 377.5L1171 377.5L1176 377.4L1181 377.4L1186 377.3L1191 377.2L1196 377.0L1201 376.9L1206 376.7L1211 376.5L1216 376.3L1221 376.0L1226 375.8L1231 375.5L1236 375.2L1241 374.8L1246 374.3L1251 373.6L1256 372.7L1261 371.7L1266 370.5L1271 369.2L1276 367.7L1281 366.1L1286 364.4L1291 362.5L1296 360.4L1301 358.3L1306 356.0L1311 353.6L1316 351.1L1321 348.4L1326 345.7L1331 342.8L1336 339.9L1341 336.8L1346 333.7L1351 330.4L1356 327.1L1361 323.7L1366 320.2L1371 316.7L1376 313.0L1381 309.4L1386 305.7L1391 301.9L1396 298.1L1401 294.2L1406 290.3L1411 286.4L1416 282.5L1421 278.5L1426 274.5L1431 270.5L1436 266.5L1441 262.5L1446 258.4L1451 254.3L1456 250.2L1461 246.1M1457 249.4L1462 245.3L1467 241.2L1472 237.2L1477 233.1L1482 229.1L1487 225.1L1492 221.1L1497 217.1L1502 213.2L1507 209.3L1512 205.4L1517 201.6L1522 197.9L1527 194.1L1532 190.5L1537 186.9L1542 183.3L1547 179.9L1552 176.5L1557 173.2L1562 170.0L1567 166.8L1572 163.8L1577 160.8L1582 158.0L1587 155.3L1592 152.6L1597 150.1L1602 147.7L1607 145.4L1612 143.3L1617 141.3L1622 139.4L1627 137.6L1632 136.0L1637 134.5L1642 133.2L1647 131.9L1652 130.9L1657 130.0L1662 129.2L1667 128.6L1672 128.1L1677 127.8L1682 127.6L1687 127.5L1692 127.3L1697 127.2L1702 127.1L1707 127.0L1712 126.9L1717 126.8L1722 126.7L1727 126.6L1732 126.6L1737 126.5L1742 126.5L1747 126.5L1752 126.5L1757 126.5L1762 126.5L1767 126.6L1772 126.6L1777 126.7L1782 126.7L1787 126.8L1792 126.9L1797 127.0L1802 127.1L1807 127.3L1812 127.4L1817 127.6L1822 127.7L1827 128.0L1832 128.3L1837 128.9L1842 129.6L1847 130.4L1852 131.4L1857 132.5L1862 133.8L1867 135.2L1872 136.8L1877 138.5L1882 140.3L1887 142.3L1892 144.4L1897 146.6L1902 148.9L1907 151.4L1912 153.9L1917 156.6L1922 159.4L1927 162.3L1932 165.3L1937 168.4L1942 171.6L1947 174.8L1952 178.2L1957 181.6L1962 185.1L1967 188.7L1972 192.3L1977 196.0L1982 199.7L1987 203.5L1992 207.4L1997 211.2L2002 215.2L2007 219.1L2012 223.1L2017 227.1L2022 231.1L2027 235.1L2032 239.2L2037 243.3L2042 247.4L2047 251.5M1457 248.6L1462 252.7L1467 256.8L1472 260.8L1477 264.9L1482 268.9L1487 272.9L1492 276.9L1497 280.9L1502 284.8L1507 288.8L1512 292.7L1517 296.5L1522 300.4L1527 304.2L1532 307.9L1537 311.6L1542 315.2L1547 318.8L1552 322.3L1557 325.7L1562 329.1L1567 332.4L1572 335.6L1577 338.7L1582 341.7L1587 344.6L1592 347.3L1597 350.0L1602 352.6L1607 355.1L1612 357.4L1617 359.6L1622 361.7L1627 363.6L1632 365.4L1637 367.1L1642 368.6L1647 370.0L1652 371.2L1657 372.3L1662 373.2L1667 374.0L1672 374.6L1677 375.1L1682 375.4L1687 375.7L1692 375.9L1697 376.2L1702 376.4L1707 376.6L1712 376.8L1717 377.0L1722 377.1L1727 377.2L1732 377.3L1737 377.4L1742 377.5L1747 377.5L1752 377.5L1757 377.5L1762 377.4L1767 377.4L1772 377.3L1777 377.2L1782 377.0L1787 376.9L1792 376.7L1797 376.5L1802 376.3L1807 376.1L1812 375.8L1817 375.5L1822 375.2L1827 374.9L1832 374.3L1837 373.6L1842 372.8L1847 371.8L1852 370.6L1857 369.3L1862 367.9L1867 366.3L1872 364.5L1877 362.7L1882 360.6L1887 358.5L1892 356.2L1897 353.8L1902 351.3L1907 348.7L1912 346.0L1917 343.1L1922 340.2L1927 337.1L1932 334.0L1937 330.7L1942 327.4L1947 324.0L1952 320.6L1957 317.0L1962 313.4L1967 309.7L1972 306.0L1977 302.3L1982 298.4L1987 294.6L1992 290.7L1997 286.8L2002 282.9L2007 278.9L2012 274.9L2017 270.9L2022 266.9L2027 262.9L2032 258.8L2037 254.7L2042 250.6L2047 246.5" fill="none" stroke="#e8f800" stroke-width="21.89" stroke-linejoin="round"/><path d="M560 133.5H1765M560 364.5H1765" fill="none" stroke="#ffd400" stroke-width="19.8"/><path d="M571 136.7L576 137.0L581 137.2L586 137.5L591 137.8L596 138.1L601 138.4L606 138.8L611 139.1L616 139.5L621 140.0L626 140.4L631 140.9L636 141.5L641 142.0L646 142.6L651 143.3L656 143.9L661 144.7L666 145.5L671 146.3L676 147.2L681 148.1L686 149.1L691 150.2L696 151.3L701 152.5L706 153.8L711 155.1L716 156.6L721 158.1L726 159.7L731 161.4L736 163.2L741 165.1L746 167.0L751 169.1L756 171.3L761 173.6L766 176.0L771 178.5L776 181.1L781 183.9L786 186.7L791 189.7L796 192.8L801 195.9L806 199.2L811 202.6L816 206.1L821 209.7L826 213.3L831 217.1L836 220.9L841 224.8L846 228.7L851 232.7L856 236.8L861 240.8L866 244.9L871 249.0L876 253.1L881 257.2L886 261.2L891 265.3L896 269.3L901 273.3L906 277.3L911 281.3L916 285.2L921 289.0L926 292.8L931 296.6L936 300.3L941 303.9L946 307.5L951 310.9L956 314.4L961 317.7L966 320.9L971 324.1L976 327.1L981 330.1L986 332.9L991 335.7L996 338.3L1001 340.9L1006 343.3L1011 345.6L1016 347.8L1021 349.8L1026 351.8L1031 353.6L1036 355.2L1041 356.8L1046 358.2L1051 359.4L1056 360.6L1061 361.6L1066 362.4L1071 363.1L1076 363.7L1081 364.1L1086 364.4L1091 364.5M571 361.3L576 361.0L581 360.8L586 360.5L591 360.2L596 359.9L601 359.6L606 359.2L611 358.9L616 358.5L621 358.0L626 357.6L631 357.1L636 356.5L641 356.0L646 355.4L651 354.7L656 354.1L661 353.3L666 352.5L671 351.7L676 350.8L681 349.9L686 348.9L691 347.8L696 346.7L701 345.5L706 344.2L711 342.9L716 341.4L721 339.9L726 338.3L731 336.6L736 334.8L741 332.9L746 331.0L751 328.9L756 326.7L761 324.4L766 322.0L771 319.5L776 316.9L781 314.1L786 311.3L791 308.3L796 305.2L801 302.1L806 298.8L811 295.4L816 291.9L821 288.3L826 284.7L831 280.9L836 277.1L841 273.2L846 269.3L851 265.3L856 261.2L861 257.2L866 253.1L871 249.0L876 244.9L881 240.8L886 236.8L891 232.7L896 228.7L901 224.7L906 220.7L911 216.7L916 212.8L921 209.0L926 205.2L931 201.4L936 197.7L941 194.1L946 190.5L951 187.1L956 183.6L961 180.3L966 177.1L971 173.9L976 170.9L981 167.9L986 165.1L991 162.3L996 159.7L1001 157.1L1006 154.7L1011 152.4L1016 150.2L1021 148.2L1026 146.2L1031 144.4L1036 142.8L1041 141.2L1046 139.8L1051 138.6L1056 137.4L1061 136.4L1066 135.6L1071 134.9L1076 134.3L1081 133.9L1086 133.6L1091 133.5M1233 133.5L1238 133.5L1243 133.7L1248 134.0L1253 134.4L1258 135.0L1263 135.7L1268 136.5L1273 137.5L1278 138.7L1283 140.0L1288 141.4L1293 142.9L1298 144.6L1303 146.4L1308 148.4L1313 150.4L1318 152.6L1323 154.9L1328 157.4L1333 159.9L1338 162.6L1343 165.3L1348 168.2L1353 171.2L1358 174.2L1363 177.4L1368 180.6L1373 184.0L1378 187.4L1383 190.9L1388 194.5L1393 198.1L1398 201.8L1403 205.6L1408 209.4L1413 213.2L1418 217.1L1423 221.1L1428 225.1L1433 229.1L1438 233.1L1443 237.2L1448 241.2L1453 245.3L1458 249.4L1463 253.5L1468 257.6L1473 261.6L1478 265.7L1483 269.7L1488 273.7L1493 277.7L1498 281.6L1503 285.5L1508 289.4L1513 293.2L1518 296.9L1523 300.6L1528 304.3L1533 307.8L1538 311.3L1543 314.7L1548 318.0L1553 321.2L1558 324.4L1563 327.4L1568 330.4L1573 333.2L1578 336.0L1583 338.6L1588 341.1L1593 343.5L1598 345.8L1603 348.0L1608 350.0L1613 351.9L1618 353.7L1623 355.4L1628 356.9L1633 358.3L1638 359.6L1643 360.7L1648 361.6L1653 362.5L1658 363.2L1663 363.7L1668 364.1L1673 364.4L1678 364.5M1233 364.5L1238 364.5L1243 364.3L1248 364.0L1253 363.6L1258 363.0L1263 362.3L1268 361.5L1273 360.5L1278 359.3L1283 358.0L1288 356.6L1293 355.1L1298 353.4L1303 351.6L1308 349.6L1313 347.6L1318 345.4L1323 343.1L1328 340.6L1333 338.1L1338 335.4L1343 332.7L1348 329.8L1353 326.8L1358 323.8L1363 320.6L1368 317.4L1373 314.0L1378 310.6L1383 307.1L1388 303.5L1393 299.9L1398 296.2L1403 292.4L1408 288.6L1413 284.8L1418 280.9L1423 276.9L1428 272.9L1433 268.9L1438 264.9L1443 260.8L1448 256.8L1453 252.7L1458 248.6L1463 244.5L1468 240.4L1473 236.4L1478 232.3L1483 228.3L1488 224.3L1493 220.3L1498 216.4L1503 212.5L1508 208.6L1513 204.8L1518 201.1L1523 197.4L1528 193.7L1533 190.2L1538 186.7L1543 183.3L1548 180.0L1553 176.8L1558 173.6L1563 170.6L1568 167.6L1573 164.8L1578 162.0L1583 159.4L1588 156.9L1593 154.5L1598 152.2L1603 150.0L1608 148.0L1613 146.1L1618 144.3L1623 142.6L1628 141.1L1633 139.7L1638 138.4L1643 137.3L1648 136.4L1653 135.5L1658 134.8L1663 134.3L1668 133.9L1673 133.6L1678 133.5M1820 133.5L1825 133.5L1830 133.7L1835 134.0L1840 134.4L1845 135.0L1850 135.8L1855 136.6L1860 137.6L1865 138.8L1870 140.1L1875 141.5L1880 143.1L1885 144.8L1890 146.6L1895 148.6L1900 150.6L1905 152.9L1910 155.2L1915 157.6L1920 160.2L1925 162.8L1930 165.6L1935 168.5L1940 171.5L1945 174.5L1950 177.7L1955 181.0L1960 184.3L1965 187.7L1970 191.2L1975 194.8L1980 198.5L1985 202.2L1990 205.9L1995 209.8L2000 213.6L2005 217.5L2010 221.5L2015 225.5L2020 229.5L2025 233.5L2030 237.6L2035 241.6L2040 245.7L2045 249.8L2050 253.9L2055 258.0L2060 262.0L2065 266.1L2070 270.1L2075 274.1L2080 278.1L2085 282.0L2090 285.9L2095 289.8L2100 293.6L2105 297.3L2110 301.0L2115 304.6L2120 308.2L2125 311.6L2130 315.0L2135 318.3L2140 321.6L2145 324.7L2150 327.7L2155 330.7L2160 333.5L2165 336.2L2170 338.9L2175 341.4L2180 343.8L2185 346.0L2190 348.2L2195 350.2L2200 352.1L2205 353.9L2210 355.6L2215 357.1L2220 358.4L2225 359.7L2230 360.8L2235 361.7L2240 362.6L2245 363.2L2250 363.8L2255 364.2L2260 364.4L2265 364.5M1820 364.5L1825 364.5L1830 364.3L1835 364.0L1840 363.6L1845 363.0L1850 362.2L1855 361.4L1860 360.4L1865 359.2L1870 357.9L1875 356.5L1880 354.9L1885 353.2L1890 351.4L1895 349.4L1900 347.4L1905 345.1L1910 342.8L1915 340.4L1920 337.8L1925 335.2L1930 332.4L1935 329.5L1940 326.5L1945 323.5L1950 320.3L1955 317.0L1960 313.7L1965 310.3L1970 306.8L1975 303.2L1980 299.5L1985 295.8L1990 292.1L1995 288.2L2000 284.4L2005 280.5L2010 276.5L2015 272.5L2020 268.5L2025 264.5L2030 260.4L2035 256.4L2040 252.3L2045 248.2L2050 244.1L2055 240.0L2060 236.0L2065 231.9L2070 227.9L2075 223.9L2080 219.9L2085 216.0L2090 212.1L2095 208.2L2100 204.4L2105 200.7L2110 197.0L2115 193.4L2120 189.8L2125 186.4L2130 183.0L2135 179.7L2140 176.4L2145 173.3L2150 170.3L2155 167.3L2160 164.5L2165 161.8L2170 159.1L2175 156.6L2180 154.2L2185 152.0L2190 149.8L2195 147.8L2200 145.9L2205 144.1L2210 142.4L2215 140.9L2220 139.6L2225 138.3L2230 137.2L2235 136.3L2240 135.4L2245 134.8L2250 134.2L2255 133.8L2260 133.6L2265 133.5M555 125.5L560 126.2L565 126.8L570 127.5L575 128.1L580 128.8L585 129.4L590 130.0L595 130.7L600 131.3L605 132.0L610 132.6L615 133.3L620 133.9L625 134.6L630 135.2L635 135.9L640 136.6L645 137.3L650 138.0L655 138.7L660 139.4L665 140.2L670 141.0L675 141.8L680 142.8L685 143.7L690 144.8L695 145.9L700 147.1L705 148.4L710 149.8L715 151.3L720 152.8L725 154.5L730 156.2L735 158.0L740 160.0L745 162.0L750 164.2L755 166.5L760 168.9L765 171.4L770 174.0L775 176.7L780 179.6L785 182.6L790 185.7L795 188.9L800 192.2L805 195.7L810 199.3L815 202.9L820 206.7L825 210.5L830 214.5L835 218.5L840 222.6L845 226.8L850 231.0L855 235.2L860 239.5L865 243.9L870 248.2L875 252.5M555 382.8L560 381.6L565 380.5L570 379.3L575 378.2L580 377.2L585 376.1L590 375.1L595 374.1L600 373.1L605 372.1L610 371.2L615 370.3L620 369.4L625 368.5L630 367.6L635 366.8L640 365.9L645 365.1L650 364.3L655 363.5L660 362.7L665 361.9L670 361.1L675 360.2L680 359.3L685 358.2L690 357.1L695 356.0L700 354.7L705 353.4L710 351.9L715 350.4L720 348.8L725 347.1L730 345.3L735 343.4L740 341.4L745 339.2L750 337.0L755 334.6L760 332.2L765 329.6L770 326.8L775 324.0L780 321.0L785 317.9L790 314.7L795 311.4L800 307.9L805 304.3L810 300.6L815 296.8L820 292.9L825 288.9L830 284.8L835 280.6L840 276.4L845 272.1L850 267.7L855 263.3L860 258.8L865 254.3L870 249.8L875 245.3M871 249.0L876 244.9L881 240.8L886 236.8L891 232.7L896 228.7L901 224.7L906 220.7L911 216.7L916 212.8L921 208.9L926 205.1L931 201.2L936 197.5L941 193.8L946 190.1L951 186.5L956 183.0L961 179.5L966 176.1L971 172.8L976 169.6L981 166.5L986 163.5L991 160.5L996 157.7L1001 155.0L1006 152.4L1011 149.9L1016 147.5L1021 145.2L1026 143.1L1031 141.1L1036 139.2L1041 137.4L1046 135.8L1051 134.4L1056 133.0L1061 131.8L1066 130.8L1071 129.9L1076 129.1L1081 128.5L1086 128.1L1091 127.8L1096 127.6L1101 127.5L1106 127.3L1111 127.2L1116 127.1L1121 127.0L1126 126.9L1131 126.8L1136 126.7L1141 126.6L1146 126.6L1151 126.5L1156 126.5L1161 126.5L1166 126.5L1171 126.5L1176 126.5L1181 126.6L1186 126.6L1191 126.7L1196 126.8L1201 126.8L1206 126.9L1211 127.0L1216 127.2L1221 127.3L1226 127.4L1231 127.6L1236 127.7L1241 128.0L1246 128.4L1251 128.9L1256 129.7L1261 130.5L1266 131.5L1271 132.7L1276 133.9L1281 135.4L1286 136.9L1291 138.7L1296 140.5L1301 142.5L1306 144.6L1311 146.8L1316 149.1L1321 151.6L1326 154.2L1331 156.9L1336 159.7L1341 162.6L1346 165.6L1351 168.7L1356 171.9L1361 175.1L1366 178.5L1371 181.9L1376 185.4L1381 189.0L1386 192.7L1391 196.4L1396 200.1L1401 203.9L1406 207.8L1411 211.6L1416 215.6L1421 219.5L1426 223.5L1431 227.5L1436 231.5L1441 235.5L1446 239.6L1451 243.7L1456 247.8L1461 251.9M871 249.0L876 253.1L881 257.2L886 261.2L891 265.3L896 269.3L901 273.3L906 277.3L911 281.3L916 285.2L921 289.1L926 293.0L931 296.9L936 300.7L941 304.5L946 308.3L951 312.0L956 315.6L961 319.1L966 322.6L971 326.1L976 329.4L981 332.7L986 335.9L991 339.0L996 341.9L1001 344.8L1006 347.6L1011 350.3L1016 352.9L1021 355.3L1026 357.6L1031 359.8L1036 361.9L1041 363.8L1046 365.6L1051 367.2L1056 368.8L1061 370.1L1066 371.3L1071 372.4L1076 373.3L1081 374.1L1086 374.7L1091 375.1L1096 375.4L1101 375.7L1106 376.0L1111 376.2L1116 376.4L1121 376.6L1126 376.8L1131 377.0L1136 377.1L1141 377.2L1146 377.3L1151 377.4L1156 377.5L1161 377.5L1166 377.5L1171 377.5L1176 377.4L1181 377.4L1186 377.3L1191 377.2L1196 377.0L1201 376.9L1206 376.7L1211 376.5L1216 376.3L1221 376.0L1226 375.8L1231 375.5L1236 375.2L1241 374.8L1246 374.3L1251 373.6L1256 372.7L1261 371.7L1266 370.5L1271 369.2L1276 367.7L1281 366.1L1286 364.4L1291 362.5L1296 360.4L1301 358.3L1306 356.0L1311 353.6L1316 351.1L1321 348.4L1326 345.7L1331 342.8L1336 339.9L1341 336.8L1346 333.7L1351 330.4L1356 327.1L1361 323.7L1366 320.2L1371 316.7L1376 313.0L1381 309.4L1386 305.7L1391 301.9L1396 298.1L1401 294.2L1406 290.3L1411 286.4L1416 282.5L1421 278.5L1426 274.5L1431 270.5L1436 266.5L1441 262.5L1446 258.4L1451 254.3L1456 250.2L1461 246.1M1457 249.4L1462 245.3L1467 241.2L1472 237.2L1477 233.1L1482 229.1L1487 225.1L1492 221.1L1497 217.1L1502 213.2L1507 209.3L1512 205.4L1517 201.6L1522 197.9L1527 194.1L1532 190.5L1537 186.9L1542 183.3L1547 179.9L1552 176.5L1557 173.2L1562 170.0L1567 166.8L1572 163.8L1577 160.8L1582 158.0L1587 155.3L1592 152.6L1597 150.1L1602 147.7L1607 145.4L1612 143.3L1617 141.3L1622 139.4L1627 137.6L1632 136.0L1637 134.5L1642 133.2L1647 131.9L1652 130.9L1657 130.0L1662 129.2L1667 128.6L1672 128.1L1677 127.8L1682 127.6L1687 127.5L1692 127.3L1697 127.2L1702 127.1L1707 127.0L1712 126.9L1717 126.8L1722 126.7L1727 126.6L1732 126.6L1737 126.5L1742 126.5L1747 126.5L1752 126.5L1757 126.5L1762 126.5L1767 126.6L1772 126.6L1777 126.7L1782 126.7L1787 126.8L1792 126.9L1797 127.0L1802 127.1L1807 127.3L1812 127.4L1817 127.6L1822 127.7L1827 128.0L1832 128.3L1837 128.9L1842 129.6L1847 130.4L1852 131.4L1857 132.5L1862 133.8L1867 135.2L1872 136.8L1877 138.5L1882 140.3L1887 142.3L1892 144.4L1897 146.6L1902 148.9L1907 151.4L1912 153.9L1917 156.6L1922 159.4L1927 162.3L1932 165.3L1937 168.4L1942 171.6L1947 174.8L1952 178.2L1957 181.6L1962 185.1L1967 188.7L1972 192.3L1977 196.0L1982 199.7L1987 203.5L1992 207.4L1997 211.2L2002 215.2L2007 219.1L2012 223.1L2017 227.1L2022 231.1L2027 235.1L2032 239.2L2037 243.3L2042 247.4L2047 251.5M1457 248.6L1462 252.7L1467 256.8L1472 260.8L1477 264.9L1482 268.9L1487 272.9L1492 276.9L1497 280.9L1502 284.8L1507 288.8L1512 292.7L1517 296.5L1522 300.4L1527 304.2L1532 307.9L1537 311.6L1542 315.2L1547 318.8L1552 322.3L1557 325.7L1562 329.1L1567 332.4L1572 335.6L1577 338.7L1582 341.7L1587 344.6L1592 347.3L1597 350.0L1602 352.6L1607 355.1L1612 357.4L1617 359.6L1622 361.7L1627 363.6L1632 365.4L1637 367.1L1642 368.6L1647 370.0L1652 371.2L1657 372.3L1662 373.2L1667 374.0L1672 374.6L1677 375.1L1682 375.4L1687 375.7L1692 375.9L1697 376.2L1702 376.4L1707 376.6L1712 376.8L1717 377.0L1722 377.1L1727 377.2L1732 377.3L1737 377.4L1742 377.5L1747 377.5L1752 377.5L1757 377.5L1762 377.4L1767 377.4L1772 377.3L1777 377.2L1782 377.0L1787 376.9L1792 376.7L1797 376.5L1802 376.3L1807 376.1L1812 375.8L1817 375.5L1822 375.2L1827 374.9L1832 374.3L1837 373.6L1842 372.8L1847 371.8L1852 370.6L1857 369.3L1862 367.9L1867 366.3L1872 364.5L1877 362.7L1882 360.6L1887 358.5L1892 356.2L1897 353.8L1902 351.3L1907 348.7L1912 346.0L1917 343.1L1922 340.2L1927 337.1L1932 334.0L1937 330.7L1942 327.4L1947 324.0L1952 320.6L1957 317.0L1962 313.4L1967 309.7L1972 306.0L1977 302.3L1982 298.4L1987 294.6L1992 290.7L1997 286.8L2002 282.9L2007 278.9L2012 274.9L2017 270.9L2022 266.9L2027 262.9L2032 258.8L2037 254.7L2042 250.6L2047 246.5" fill="none" stroke="#ffd400" stroke-width="19.01" stroke-linejoin="round"/><path d="M560 133.5H1765M560 364.5H1765" fill="none" stroke="#ffa600" stroke-width="15.8"/><path d="M571 136.7L576 137.0L581 137.2L586 137.5L591 137.8L596 138.1L601 138.4L606 138.8L611 139.1L616 139.5L621 140.0L626 140.4L631 140.9L636 141.5L641 142.0L646 142.6L651 143.3L656 143.9L661 144.7L666 145.5L671 146.3L676 147.2L681 148.1L686 149.1L691 150.2L696 151.3L701 152.5L706 153.8L711 155.1L716 156.6L721 158.1L726 159.7L731 161.4L736 163.2L741 165.1L746 167.0L751 169.1L756 171.3L761 173.6L766 176.0L771 178.5L776 181.1L781 183.9L786 186.7L791 189.7L796 192.8L801 195.9L806 199.2L811 202.6L816 206.1L821 209.7L826 213.3L831 217.1L836 220.9L841 224.8L846 228.7L851 232.7L856 236.8L861 240.8L866 244.9L871 249.0L876 253.1L881 257.2L886 261.2L891 265.3L896 269.3L901 273.3L906 277.3L911 281.3L916 285.2L921 289.0L926 292.8L931 296.6L936 300.3L941 303.9L946 307.5L951 310.9L956 314.4L961 317.7L966 320.9L971 324.1L976 327.1L981 330.1L986 332.9L991 335.7L996 338.3L1001 340.9L1006 343.3L1011 345.6L1016 347.8L1021 349.8L1026 351.8L1031 353.6L1036 355.2L1041 356.8L1046 358.2L1051 359.4L1056 360.6L1061 361.6L1066 362.4L1071 363.1L1076 363.7L1081 364.1L1086 364.4L1091 364.5M571 361.3L576 361.0L581 360.8L586 360.5L591 360.2L596 359.9L601 359.6L606 359.2L611 358.9L616 358.5L621 358.0L626 357.6L631 357.1L636 356.5L641 356.0L646 355.4L651 354.7L656 354.1L661 353.3L666 352.5L671 351.7L676 350.8L681 349.9L686 348.9L691 347.8L696 346.7L701 345.5L706 344.2L711 342.9L716 341.4L721 339.9L726 338.3L731 336.6L736 334.8L741 332.9L746 331.0L751 328.9L756 326.7L761 324.4L766 322.0L771 319.5L776 316.9L781 314.1L786 311.3L791 308.3L796 305.2L801 302.1L806 298.8L811 295.4L816 291.9L821 288.3L826 284.7L831 280.9L836 277.1L841 273.2L846 269.3L851 265.3L856 261.2L861 257.2L866 253.1L871 249.0L876 244.9L881 240.8L886 236.8L891 232.7L896 228.7L901 224.7L906 220.7L911 216.7L916 212.8L921 209.0L926 205.2L931 201.4L936 197.7L941 194.1L946 190.5L951 187.1L956 183.6L961 180.3L966 177.1L971 173.9L976 170.9L981 167.9L986 165.1L991 162.3L996 159.7L1001 157.1L1006 154.7L1011 152.4L1016 150.2L1021 148.2L1026 146.2L1031 144.4L1036 142.8L1041 141.2L1046 139.8L1051 138.6L1056 137.4L1061 136.4L1066 135.6L1071 134.9L1076 134.3L1081 133.9L1086 133.6L1091 133.5M1233 133.5L1238 133.5L1243 133.7L1248 134.0L1253 134.4L1258 135.0L1263 135.7L1268 136.5L1273 137.5L1278 138.7L1283 140.0L1288 141.4L1293 142.9L1298 144.6L1303 146.4L1308 148.4L1313 150.4L1318 152.6L1323 154.9L1328 157.4L1333 159.9L1338 162.6L1343 165.3L1348 168.2L1353 171.2L1358 174.2L1363 177.4L1368 180.6L1373 184.0L1378 187.4L1383 190.9L1388 194.5L1393 198.1L1398 201.8L1403 205.6L1408 209.4L1413 213.2L1418 217.1L1423 221.1L1428 225.1L1433 229.1L1438 233.1L1443 237.2L1448 241.2L1453 245.3L1458 249.4L1463 253.5L1468 257.6L1473 261.6L1478 265.7L1483 269.7L1488 273.7L1493 277.7L1498 281.6L1503 285.5L1508 289.4L1513 293.2L1518 296.9L1523 300.6L1528 304.3L1533 307.8L1538 311.3L1543 314.7L1548 318.0L1553 321.2L1558 324.4L1563 327.4L1568 330.4L1573 333.2L1578 336.0L1583 338.6L1588 341.1L1593 343.5L1598 345.8L1603 348.0L1608 350.0L1613 351.9L1618 353.7L1623 355.4L1628 356.9L1633 358.3L1638 359.6L1643 360.7L1648 361.6L1653 362.5L1658 363.2L1663 363.7L1668 364.1L1673 364.4L1678 364.5M1233 364.5L1238 364.5L1243 364.3L1248 364.0L1253 363.6L1258 363.0L1263 362.3L1268 361.5L1273 360.5L1278 359.3L1283 358.0L1288 356.6L1293 355.1L1298 353.4L1303 351.6L1308 349.6L1313 347.6L1318 345.4L1323 343.1L1328 340.6L1333 338.1L1338 335.4L1343 332.7L1348 329.8L1353 326.8L1358 323.8L1363 320.6L1368 317.4L1373 314.0L1378 310.6L1383 307.1L1388 303.5L1393 299.9L1398 296.2L1403 292.4L1408 288.6L1413 284.8L1418 280.9L1423 276.9L1428 272.9L1433 268.9L1438 264.9L1443 260.8L1448 256.8L1453 252.7L1458 248.6L1463 244.5L1468 240.4L1473 236.4L1478 232.3L1483 228.3L1488 224.3L1493 220.3L1498 216.4L1503 212.5L1508 208.6L1513 204.8L1518 201.1L1523 197.4L1528 193.7L1533 190.2L1538 186.7L1543 183.3L1548 180.0L1553 176.8L1558 173.6L1563 170.6L1568 167.6L1573 164.8L1578 162.0L1583 159.4L1588 156.9L1593 154.5L1598 152.2L1603 150.0L1608 148.0L1613 146.1L1618 144.3L1623 142.6L1628 141.1L1633 139.7L1638 138.4L1643 137.3L1648 136.4L1653 135.5L1658 134.8L1663 134.3L1668 133.9L1673 133.6L1678 133.5M1820 133.5L1825 133.5L1830 133.7L1835 134.0L1840 134.4L1845 135.0L1850 135.8L1855 136.6L1860 137.6L1865 138.8L1870 140.1L1875 141.5L1880 143.1L1885 144.8L1890 146.6L1895 148.6L1900 150.6L1905 152.9L1910 155.2L1915 157.6L1920 160.2L1925 162.8L1930 165.6L1935 168.5L1940 171.5L1945 174.5L1950 177.7L1955 181.0L1960 184.3L1965 187.7L1970 191.2L1975 194.8L1980 198.5L1985 202.2L1990 205.9L1995 209.8L2000 213.6L2005 217.5L2010 221.5L2015 225.5L2020 229.5L2025 233.5L2030 237.6L2035 241.6L2040 245.7L2045 249.8L2050 253.9L2055 258.0L2060 262.0L2065 266.1L2070 270.1L2075 274.1L2080 278.1L2085 282.0L2090 285.9L2095 289.8L2100 293.6L2105 297.3L2110 301.0L2115 304.6L2120 308.2L2125 311.6L2130 315.0L2135 318.3L2140 321.6L2145 324.7L2150 327.7L2155 330.7L2160 333.5L2165 336.2L2170 338.9L2175 341.4L2180 343.8L2185 346.0L2190 348.2L2195 350.2L2200 352.1L2205 353.9L2210 355.6L2215 357.1L2220 358.4L2225 359.7L2230 360.8L2235 361.7L2240 362.6L2245 363.2L2250 363.8L2255 364.2L2260 364.4L2265 364.5M1820 364.5L1825 364.5L1830 364.3L1835 364.0L1840 363.6L1845 363.0L1850 362.2L1855 361.4L1860 360.4L1865 359.2L1870 357.9L1875 356.5L1880 354.9L1885 353.2L1890 351.4L1895 349.4L1900 347.4L1905 345.1L1910 342.8L1915 340.4L1920 337.8L1925 335.2L1930 332.4L1935 329.5L1940 326.5L1945 323.5L1950 320.3L1955 317.0L1960 313.7L1965 310.3L1970 306.8L1975 303.2L1980 299.5L1985 295.8L1990 292.1L1995 288.2L2000 284.4L2005 280.5L2010 276.5L2015 272.5L2020 268.5L2025 264.5L2030 260.4L2035 256.4L2040 252.3L2045 248.2L2050 244.1L2055 240.0L2060 236.0L2065 231.9L2070 227.9L2075 223.9L2080 219.9L2085 216.0L2090 212.1L2095 208.2L2100 204.4L2105 200.7L2110 197.0L2115 193.4L2120 189.8L2125 186.4L2130 183.0L2135 179.7L2140 176.4L2145 173.3L2150 170.3L2155 167.3L2160 164.5L2165 161.8L2170 159.1L2175 156.6L2180 154.2L2185 152.0L2190 149.8L2195 147.8L2200 145.9L2205 144.1L2210 142.4L2215 140.9L2220 139.6L2225 138.3L2230 137.2L2235 136.3L2240 135.4L2245 134.8L2250 134.2L2255 133.8L2260 133.6L2265 133.5M555 125.5L560 126.2L565 126.8L570 127.5L575 128.1L580 128.8L585 129.4L590 130.0L595 130.7L600 131.3L605 132.0L610 132.6L615 133.3L620 133.9L625 134.6L630 135.2L635 135.9L640 136.6L645 137.3L650 138.0L655 138.7L660 139.4L665 140.2L670 141.0L675 141.8L680 142.8L685 143.7L690 144.8L695 145.9L700 147.1L705 148.4L710 149.8L715 151.3L720 152.8L725 154.5L730 156.2L735 158.0L740 160.0L745 162.0L750 164.2L755 166.5L760 168.9L765 171.4L770 174.0L775 176.7L780 179.6L785 182.6L790 185.7L795 188.9L800 192.2L805 195.7L810 199.3L815 202.9L820 206.7L825 210.5L830 214.5L835 218.5L840 222.6L845 226.8L850 231.0L855 235.2L860 239.5L865 243.9L870 248.2L875 252.5M555 382.8L560 381.6L565 380.5L570 379.3L575 378.2L580 377.2L585 376.1L590 375.1L595 374.1L600 373.1L605 372.1L610 371.2L615 370.3L620 369.4L625 368.5L630 367.6L635 366.8L640 365.9L645 365.1L650 364.3L655 363.5L660 362.7L665 361.9L670 361.1L675 360.2L680 359.3L685 358.2L690 357.1L695 356.0L700 354.7L705 353.4L710 351.9L715 350.4L720 348.8L725 347.1L730 345.3L735 343.4L740 341.4L745 339.2L750 337.0L755 334.6L760 332.2L765 329.6L770 326.8L775 324.0L780 321.0L785 317.9L790 314.7L795 311.4L800 307.9L805 304.3L810 300.6L815 296.8L820 292.9L825 288.9L830 284.8L835 280.6L840 276.4L845 272.1L850 267.7L855 263.3L860 258.8L865 254.3L870 249.8L875 245.3M871 249.0L876 244.9L881 240.8L886 236.8L891 232.7L896 228.7L901 224.7L906 220.7L911 216.7L916 212.8L921 208.9L926 205.1L931 201.2L936 197.5L941 193.8L946 190.1L951 186.5L956 183.0L961 179.5L966 176.1L971 172.8L976 169.6L981 166.5L986 163.5L991 160.5L996 157.7L1001 155.0L1006 152.4L1011 149.9L1016 147.5L1021 145.2L1026 143.1L1031 141.1L1036 139.2L1041 137.4L1046 135.8L1051 134.4L1056 133.0L1061 131.8L1066 130.8L1071 129.9L1076 129.1L1081 128.5L1086 128.1L1091 127.8L1096 127.6L1101 127.5L1106 127.3L1111 127.2L1116 127.1L1121 127.0L1126 126.9L1131 126.8L1136 126.7L1141 126.6L1146 126.6L1151 126.5L1156 126.5L1161 126.5L1166 126.5L1171 126.5L1176 126.5L1181 126.6L1186 126.6L1191 126.7L1196 126.8L1201 126.8L1206 126.9L1211 127.0L1216 127.2L1221 127.3L1226 127.4L1231 127.6L1236 127.7L1241 128.0L1246 128.4L1251 128.9L1256 129.7L1261 130.5L1266 131.5L1271 132.7L1276 133.9L1281 135.4L1286 136.9L1291 138.7L1296 140.5L1301 142.5L1306 144.6L1311 146.8L1316 149.1L1321 151.6L1326 154.2L1331 156.9L1336 159.7L1341 162.6L1346 165.6L1351 168.7L1356 171.9L1361 175.1L1366 178.5L1371 181.9L1376 185.4L1381 189.0L1386 192.7L1391 196.4L1396 200.1L1401 203.9L1406 207.8L1411 211.6L1416 215.6L1421 219.5L1426 223.5L1431 227.5L1436 231.5L1441 235.5L1446 239.6L1451 243.7L1456 247.8L1461 251.9M871 249.0L876 253.1L881 257.2L886 261.2L891 265.3L896 269.3L901 273.3L906 277.3L911 281.3L916 285.2L921 289.1L926 293.0L931 296.9L936 300.7L941 304.5L946 308.3L951 312.0L956 315.6L961 319.1L966 322.6L971 326.1L976 329.4L981 332.7L986 335.9L991 339.0L996 341.9L1001 344.8L1006 347.6L1011 350.3L1016 352.9L1021 355.3L1026 357.6L1031 359.8L1036 361.9L1041 363.8L1046 365.6L1051 367.2L1056 368.8L1061 370.1L1066 371.3L1071 372.4L1076 373.3L1081 374.1L1086 374.7L1091 375.1L1096 375.4L1101 375.7L1106 376.0L1111 376.2L1116 376.4L1121 376.6L1126 376.8L1131 377.0L1136 377.1L1141 377.2L1146 377.3L1151 377.4L1156 377.5L1161 377.5L1166 377.5L1171 377.5L1176 377.4L1181 377.4L1186 377.3L1191 377.2L1196 377.0L1201 376.9L1206 376.7L1211 376.5L1216 376.3L1221 376.0L1226 375.8L1231 375.5L1236 375.2L1241 374.8L1246 374.3L1251 373.6L1256 372.7L1261 371.7L1266 370.5L1271 369.2L1276 367.7L1281 366.1L1286 364.4L1291 362.5L1296 360.4L1301 358.3L1306 356.0L1311 353.6L1316 351.1L1321 348.4L1326 345.7L1331 342.8L1336 339.9L1341 336.8L1346 333.7L1351 330.4L1356 327.1L1361 323.7L1366 320.2L1371 316.7L1376 313.0L1381 309.4L1386 305.7L1391 301.9L1396 298.1L1401 294.2L1406 290.3L1411 286.4L1416 282.5L1421 278.5L1426 274.5L1431 270.5L1436 266.5L1441 262.5L1446 258.4L1451 254.3L1456 250.2L1461 246.1M1457 249.4L1462 245.3L1467 241.2L1472 237.2L1477 233.1L1482 229.1L1487 225.1L1492 221.1L1497 217.1L1502 213.2L1507 209.3L1512 205.4L1517 201.6L1522 197.9L1527 194.1L1532 190.5L1537 186.9L1542 183.3L1547 179.9L1552 176.5L1557 173.2L1562 170.0L1567 166.8L1572 163.8L1577 160.8L1582 158.0L1587 155.3L1592 152.6L1597 150.1L1602 147.7L1607 145.4L1612 143.3L1617 141.3L1622 139.4L1627 137.6L1632 136.0L1637 134.5L1642 133.2L1647 131.9L1652 130.9L1657 130.0L1662 129.2L1667 128.6L1672 128.1L1677 127.8L1682 127.6L1687 127.5L1692 127.3L1697 127.2L1702 127.1L1707 127.0L1712 126.9L1717 126.8L1722 126.7L1727 126.6L1732 126.6L1737 126.5L1742 126.5L1747 126.5L1752 126.5L1757 126.5L1762 126.5L1767 126.6L1772 126.6L1777 126.7L1782 126.7L1787 126.8L1792 126.9L1797 127.0L1802 127.1L1807 127.3L1812 127.4L1817 127.6L1822 127.7L1827 128.0L1832 128.3L1837 128.9L1842 129.6L1847 130.4L1852 131.4L1857 132.5L1862 133.8L1867 135.2L1872 136.8L1877 138.5L1882 140.3L1887 142.3L1892 144.4L1897 146.6L1902 148.9L1907 151.4L1912 153.9L1917 156.6L1922 159.4L1927 162.3L1932 165.3L1937 168.4L1942 171.6L1947 174.8L1952 178.2L1957 181.6L1962 185.1L1967 188.7L1972 192.3L1977 196.0L1982 199.7L1987 203.5L1992 207.4L1997 211.2L2002 215.2L2007 219.1L2012 223.1L2017 227.1L2022 231.1L2027 235.1L2032 239.2L2037 243.3L2042 247.4L2047 251.5M1457 248.6L1462 252.7L1467 256.8L1472 260.8L1477 264.9L1482 268.9L1487 272.9L1492 276.9L1497 280.9L1502 284.8L1507 288.8L1512 292.7L1517 296.5L1522 300.4L1527 304.2L1532 307.9L1537 311.6L1542 315.2L1547 318.8L1552 322.3L1557 325.7L1562 329.1L1567 332.4L1572 335.6L1577 338.7L1582 341.7L1587 344.6L1592 347.3L1597 350.0L1602 352.6L1607 355.1L1612 357.4L1617 359.6L1622 361.7L1627 363.6L1632 365.4L1637 367.1L1642 368.6L1647 370.0L1652 371.2L1657 372.3L1662 373.2L1667 374.0L1672 374.6L1677 375.1L1682 375.4L1687 375.7L1692 375.9L1697 376.2L1702 376.4L1707 376.6L1712 376.8L1717 377.0L1722 377.1L1727 377.2L1732 377.3L1737 377.4L1742 377.5L1747 377.5L1752 377.5L1757 377.5L1762 377.4L1767 377.4L1772 377.3L1777 377.2L1782 377.0L1787 376.9L1792 376.7L1797 376.5L1802 376.3L1807 376.1L1812 375.8L1817 375.5L1822 375.2L1827 374.9L1832 374.3L1837 373.6L1842 372.8L1847 371.8L1852 370.6L1857 369.3L1862 367.9L1867 366.3L1872 364.5L1877 362.7L1882 360.6L1887 358.5L1892 356.2L1897 353.8L1902 351.3L1907 348.7L1912 346.0L1917 343.1L1922 340.2L1927 337.1L1932 334.0L1937 330.7L1942 327.4L1947 324.0L1952 320.6L1957 317.0L1962 313.4L1967 309.7L1972 306.0L1977 302.3L1982 298.4L1987 294.6L1992 290.7L1997 286.8L2002 282.9L2007 278.9L2012 274.9L2017 270.9L2022 266.9L2027 262.9L2032 258.8L2037 254.7L2042 250.6L2047 246.5" fill="none" stroke="#ffa600" stroke-width="15.17" stroke-linejoin="round"/><path d="M560 133.5H1765M560 364.5H1765" fill="none" stroke="#ff8400" stroke-width="11.5"/><path d="M571 136.7L576 137.0L581 137.2L586 137.5L591 137.8L596 138.1L601 138.4L606 138.8L611 139.1L616 139.5L621 140.0L626 140.4L631 140.9L636 141.5L641 142.0L646 142.6L651 143.3L656 143.9L661 144.7L666 145.5L671 146.3L676 147.2L681 148.1L686 149.1L691 150.2L696 151.3L701 152.5L706 153.8L711 155.1L716 156.6L721 158.1L726 159.7L731 161.4L736 163.2L741 165.1L746 167.0L751 169.1L756 171.3L761 173.6L766 176.0L771 178.5L776 181.1L781 183.9L786 186.7L791 189.7L796 192.8L801 195.9L806 199.2L811 202.6L816 206.1L821 209.7L826 213.3L831 217.1L836 220.9L841 224.8L846 228.7L851 232.7L856 236.8L861 240.8L866 244.9L871 249.0L876 253.1L881 257.2L886 261.2L891 265.3L896 269.3L901 273.3L906 277.3L911 281.3L916 285.2L921 289.0L926 292.8L931 296.6L936 300.3L941 303.9L946 307.5L951 310.9L956 314.4L961 317.7L966 320.9L971 324.1L976 327.1L981 330.1L986 332.9L991 335.7L996 338.3L1001 340.9L1006 343.3L1011 345.6L1016 347.8L1021 349.8L1026 351.8L1031 353.6L1036 355.2L1041 356.8L1046 358.2L1051 359.4L1056 360.6L1061 361.6L1066 362.4L1071 363.1L1076 363.7L1081 364.1L1086 364.4L1091 364.5M571 361.3L576 361.0L581 360.8L586 360.5L591 360.2L596 359.9L601 359.6L606 359.2L611 358.9L616 358.5L621 358.0L626 357.6L631 357.1L636 356.5L641 356.0L646 355.4L651 354.7L656 354.1L661 353.3L666 352.5L671 351.7L676 350.8L681 349.9L686 348.9L691 347.8L696 346.7L701 345.5L706 344.2L711 342.9L716 341.4L721 339.9L726 338.3L731 336.6L736 334.8L741 332.9L746 331.0L751 328.9L756 326.7L761 324.4L766 322.0L771 319.5L776 316.9L781 314.1L786 311.3L791 308.3L796 305.2L801 302.1L806 298.8L811 295.4L816 291.9L821 288.3L826 284.7L831 280.9L836 277.1L841 273.2L846 269.3L851 265.3L856 261.2L861 257.2L866 253.1L871 249.0L876 244.9L881 240.8L886 236.8L891 232.7L896 228.7L901 224.7L906 220.7L911 216.7L916 212.8L921 209.0L926 205.2L931 201.4L936 197.7L941 194.1L946 190.5L951 187.1L956 183.6L961 180.3L966 177.1L971 173.9L976 170.9L981 167.9L986 165.1L991 162.3L996 159.7L1001 157.1L1006 154.7L1011 152.4L1016 150.2L1021 148.2L1026 146.2L1031 144.4L1036 142.8L1041 141.2L1046 139.8L1051 138.6L1056 137.4L1061 136.4L1066 135.6L1071 134.9L1076 134.3L1081 133.9L1086 133.6L1091 133.5M1233 133.5L1238 133.5L1243 133.7L1248 134.0L1253 134.4L1258 135.0L1263 135.7L1268 136.5L1273 137.5L1278 138.7L1283 140.0L1288 141.4L1293 142.9L1298 144.6L1303 146.4L1308 148.4L1313 150.4L1318 152.6L1323 154.9L1328 157.4L1333 159.9L1338 162.6L1343 165.3L1348 168.2L1353 171.2L1358 174.2L1363 177.4L1368 180.6L1373 184.0L1378 187.4L1383 190.9L1388 194.5L1393 198.1L1398 201.8L1403 205.6L1408 209.4L1413 213.2L1418 217.1L1423 221.1L1428 225.1L1433 229.1L1438 233.1L1443 237.2L1448 241.2L1453 245.3L1458 249.4L1463 253.5L1468 257.6L1473 261.6L1478 265.7L1483 269.7L1488 273.7L1493 277.7L1498 281.6L1503 285.5L1508 289.4L1513 293.2L1518 296.9L1523 300.6L1528 304.3L1533 307.8L1538 311.3L1543 314.7L1548 318.0L1553 321.2L1558 324.4L1563 327.4L1568 330.4L1573 333.2L1578 336.0L1583 338.6L1588 341.1L1593 343.5L1598 345.8L1603 348.0L1608 350.0L1613 351.9L1618 353.7L1623 355.4L1628 356.9L1633 358.3L1638 359.6L1643 360.7L1648 361.6L1653 362.5L1658 363.2L1663 363.7L1668 364.1L1673 364.4L1678 364.5M1233 364.5L1238 364.5L1243 364.3L1248 364.0L1253 363.6L1258 363.0L1263 362.3L1268 361.5L1273 360.5L1278 359.3L1283 358.0L1288 356.6L1293 355.1L1298 353.4L1303 351.6L1308 349.6L1313 347.6L1318 345.4L1323 343.1L1328 340.6L1333 338.1L1338 335.4L1343 332.7L1348 329.8L1353 326.8L1358 323.8L1363 320.6L1368 317.4L1373 314.0L1378 310.6L1383 307.1L1388 303.5L1393 299.9L1398 296.2L1403 292.4L1408 288.6L1413 284.8L1418 280.9L1423 276.9L1428 272.9L1433 268.9L1438 264.9L1443 260.8L1448 256.8L1453 252.7L1458 248.6L1463 244.5L1468 240.4L1473 236.4L1478 232.3L1483 228.3L1488 224.3L1493 220.3L1498 216.4L1503 212.5L1508 208.6L1513 204.8L1518 201.1L1523 197.4L1528 193.7L1533 190.2L1538 186.7L1543 183.3L1548 180.0L1553 176.8L1558 173.6L1563 170.6L1568 167.6L1573 164.8L1578 162.0L1583 159.4L1588 156.9L1593 154.5L1598 152.2L1603 150.0L1608 148.0L1613 146.1L1618 144.3L1623 142.6L1628 141.1L1633 139.7L1638 138.4L1643 137.3L1648 136.4L1653 135.5L1658 134.8L1663 134.3L1668 133.9L1673 133.6L1678 133.5M1820 133.5L1825 133.5L1830 133.7L1835 134.0L1840 134.4L1845 135.0L1850 135.8L1855 136.6L1860 137.6L1865 138.8L1870 140.1L1875 141.5L1880 143.1L1885 144.8L1890 146.6L1895 148.6L1900 150.6L1905 152.9L1910 155.2L1915 157.6L1920 160.2L1925 162.8L1930 165.6L1935 168.5L1940 171.5L1945 174.5L1950 177.7L1955 181.0L1960 184.3L1965 187.7L1970 191.2L1975 194.8L1980 198.5L1985 202.2L1990 205.9L1995 209.8L2000 213.6L2005 217.5L2010 221.5L2015 225.5L2020 229.5L2025 233.5L2030 237.6L2035 241.6L2040 245.7L2045 249.8L2050 253.9L2055 258.0L2060 262.0L2065 266.1L2070 270.1L2075 274.1L2080 278.1L2085 282.0L2090 285.9L2095 289.8L2100 293.6L2105 297.3L2110 301.0L2115 304.6L2120 308.2L2125 311.6L2130 315.0L2135 318.3L2140 321.6L2145 324.7L2150 327.7L2155 330.7L2160 333.5L2165 336.2L2170 338.9L2175 341.4L2180 343.8L2185 346.0L2190 348.2L2195 350.2L2200 352.1L2205 353.9L2210 355.6L2215 357.1L2220 358.4L2225 359.7L2230 360.8L2235 361.7L2240 362.6L2245 363.2L2250 363.8L2255 364.2L2260 364.4L2265 364.5M1820 364.5L1825 364.5L1830 364.3L1835 364.0L1840 363.6L1845 363.0L1850 362.2L1855 361.4L1860 360.4L1865 359.2L1870 357.9L1875 356.5L1880 354.9L1885 353.2L1890 351.4L1895 349.4L1900 347.4L1905 345.1L1910 342.8L1915 340.4L1920 337.8L1925 335.2L1930 332.4L1935 329.5L1940 326.5L1945 323.5L1950 320.3L1955 317.0L1960 313.7L1965 310.3L1970 306.8L1975 303.2L1980 299.5L1985 295.8L1990 292.1L1995 288.2L2000 284.4L2005 280.5L2010 276.5L2015 272.5L2020 268.5L2025 264.5L2030 260.4L2035 256.4L2040 252.3L2045 248.2L2050 244.1L2055 240.0L2060 236.0L2065 231.9L2070 227.9L2075 223.9L2080 219.9L2085 216.0L2090 212.1L2095 208.2L2100 204.4L2105 200.7L2110 197.0L2115 193.4L2120 189.8L2125 186.4L2130 183.0L2135 179.7L2140 176.4L2145 173.3L2150 170.3L2155 167.3L2160 164.5L2165 161.8L2170 159.1L2175 156.6L2180 154.2L2185 152.0L2190 149.8L2195 147.8L2200 145.9L2205 144.1L2210 142.4L2215 140.9L2220 139.6L2225 138.3L2230 137.2L2235 136.3L2240 135.4L2245 134.8L2250 134.2L2255 133.8L2260 133.6L2265 133.5M555 125.5L560 126.2L565 126.8L570 127.5L575 128.1L580 128.8L585 129.4L590 130.0L595 130.7L600 131.3L605 132.0L610 132.6L615 133.3L620 133.9L625 134.6L630 135.2L635 135.9L640 136.6L645 137.3L650 138.0L655 138.7L660 139.4L665 140.2L670 141.0L675 141.8L680 142.8L685 143.7L690 144.8L695 145.9L700 147.1L705 148.4L710 149.8L715 151.3L720 152.8L725 154.5L730 156.2L735 158.0L740 160.0L745 162.0L750 164.2L755 166.5L760 168.9L765 171.4L770 174.0L775 176.7L780 179.6L785 182.6L790 185.7L795 188.9L800 192.2L805 195.7L810 199.3L815 202.9L820 206.7L825 210.5L830 214.5L835 218.5L840 222.6L845 226.8L850 231.0L855 235.2L860 239.5L865 243.9L870 248.2L875 252.5M555 382.8L560 381.6L565 380.5L570 379.3L575 378.2L580 377.2L585 376.1L590 375.1L595 374.1L600 373.1L605 372.1L610 371.2L615 370.3L620 369.4L625 368.5L630 367.6L635 366.8L640 365.9L645 365.1L650 364.3L655 363.5L660 362.7L665 361.9L670 361.1L675 360.2L680 359.3L685 358.2L690 357.1L695 356.0L700 354.7L705 353.4L710 351.9L715 350.4L720 348.8L725 347.1L730 345.3L735 343.4L740 341.4L745 339.2L750 337.0L755 334.6L760 332.2L765 329.6L770 326.8L775 324.0L780 321.0L785 317.9L790 314.7L795 311.4L800 307.9L805 304.3L810 300.6L815 296.8L820 292.9L825 288.9L830 284.8L835 280.6L840 276.4L845 272.1L850 267.7L855 263.3L860 258.8L865 254.3L870 249.8L875 245.3M871 249.0L876 244.9L881 240.8L886 236.8L891 232.7L896 228.7L901 224.7L906 220.7L911 216.7L916 212.8L921 208.9L926 205.1L931 201.2L936 197.5L941 193.8L946 190.1L951 186.5L956 183.0L961 179.5L966 176.1L971 172.8L976 169.6L981 166.5L986 163.5L991 160.5L996 157.7L1001 155.0L1006 152.4L1011 149.9L1016 147.5L1021 145.2L1026 143.1L1031 141.1L1036 139.2L1041 137.4L1046 135.8L1051 134.4L1056 133.0L1061 131.8L1066 130.8L1071 129.9L1076 129.1L1081 128.5L1086 128.1L1091 127.8L1096 127.6L1101 127.5L1106 127.3L1111 127.2L1116 127.1L1121 127.0L1126 126.9L1131 126.8L1136 126.7L1141 126.6L1146 126.6L1151 126.5L1156 126.5L1161 126.5L1166 126.5L1171 126.5L1176 126.5L1181 126.6L1186 126.6L1191 126.7L1196 126.8L1201 126.8L1206 126.9L1211 127.0L1216 127.2L1221 127.3L1226 127.4L1231 127.6L1236 127.7L1241 128.0L1246 128.4L1251 128.9L1256 129.7L1261 130.5L1266 131.5L1271 132.7L1276 133.9L1281 135.4L1286 136.9L1291 138.7L1296 140.5L1301 142.5L1306 144.6L1311 146.8L1316 149.1L1321 151.6L1326 154.2L1331 156.9L1336 159.7L1341 162.6L1346 165.6L1351 168.7L1356 171.9L1361 175.1L1366 178.5L1371 181.9L1376 185.4L1381 189.0L1386 192.7L1391 196.4L1396 200.1L1401 203.9L1406 207.8L1411 211.6L1416 215.6L1421 219.5L1426 223.5L1431 227.5L1436 231.5L1441 235.5L1446 239.6L1451 243.7L1456 247.8L1461 251.9M871 249.0L876 253.1L881 257.2L886 261.2L891 265.3L896 269.3L901 273.3L906 277.3L911 281.3L916 285.2L921 289.1L926 293.0L931 296.9L936 300.7L941 304.5L946 308.3L951 312.0L956 315.6L961 319.1L966 322.6L971 326.1L976 329.4L981 332.7L986 335.9L991 339.0L996 341.9L1001 344.8L1006 347.6L1011 350.3L1016 352.9L1021 355.3L1026 357.6L1031 359.8L1036 361.9L1041 363.8L1046 365.6L1051 367.2L1056 368.8L1061 370.1L1066 371.3L1071 372.4L1076 373.3L1081 374.1L1086 374.7L1091 375.1L1096 375.4L1101 375.7L1106 376.0L1111 376.2L1116 376.4L1121 376.6L1126 376.8L1131 377.0L1136 377.1L1141 377.2L1146 377.3L1151 377.4L1156 377.5L1161 377.5L1166 377.5L1171 377.5L1176 377.4L1181 377.4L1186 377.3L1191 377.2L1196 377.0L1201 376.9L1206 376.7L1211 376.5L1216 376.3L1221 376.0L1226 375.8L1231 375.5L1236 375.2L1241 374.8L1246 374.3L1251 373.6L1256 372.7L1261 371.7L1266 370.5L1271 369.2L1276 367.7L1281 366.1L1286 364.4L1291 362.5L1296 360.4L1301 358.3L1306 356.0L1311 353.6L1316 351.1L1321 348.4L1326 345.7L1331 342.8L1336 339.9L1341 336.8L1346 333.7L1351 330.4L1356 327.1L1361 323.7L1366 320.2L1371 316.7L1376 313.0L1381 309.4L1386 305.7L1391 301.9L1396 298.1L1401 294.2L1406 290.3L1411 286.4L1416 282.5L1421 278.5L1426 274.5L1431 270.5L1436 266.5L1441 262.5L1446 258.4L1451 254.3L1456 250.2L1461 246.1M1457 249.4L1462 245.3L1467 241.2L1472 237.2L1477 233.1L1482 229.1L1487 225.1L1492 221.1L1497 217.1L1502 213.2L1507 209.3L1512 205.4L1517 201.6L1522 197.9L1527 194.1L1532 190.5L1537 186.9L1542 183.3L1547 179.9L1552 176.5L1557 173.2L1562 170.0L1567 166.8L1572 163.8L1577 160.8L1582 158.0L1587 155.3L1592 152.6L1597 150.1L1602 147.7L1607 145.4L1612 143.3L1617 141.3L1622 139.4L1627 137.6L1632 136.0L1637 134.5L1642 133.2L1647 131.9L1652 130.9L1657 130.0L1662 129.2L1667 128.6L1672 128.1L1677 127.8L1682 127.6L1687 127.5L1692 127.3L1697 127.2L1702 127.1L1707 127.0L1712 126.9L1717 126.8L1722 126.7L1727 126.6L1732 126.6L1737 126.5L1742 126.5L1747 126.5L1752 126.5L1757 126.5L1762 126.5L1767 126.6L1772 126.6L1777 126.7L1782 126.7L1787 126.8L1792 126.9L1797 127.0L1802 127.1L1807 127.3L1812 127.4L1817 127.6L1822 127.7L1827 128.0L1832 128.3L1837 128.9L1842 129.6L1847 130.4L1852 131.4L1857 132.5L1862 133.8L1867 135.2L1872 136.8L1877 138.5L1882 140.3L1887 142.3L1892 144.4L1897 146.6L1902 148.9L1907 151.4L1912 153.9L1917 156.6L1922 159.4L1927 162.3L1932 165.3L1937 168.4L1942 171.6L1947 174.8L1952 178.2L1957 181.6L1962 185.1L1967 188.7L1972 192.3L1977 196.0L1982 199.7L1987 203.5L1992 207.4L1997 211.2L2002 215.2L2007 219.1L2012 223.1L2017 227.1L2022 231.1L2027 235.1L2032 239.2L2037 243.3L2042 247.4L2047 251.5M1457 248.6L1462 252.7L1467 256.8L1472 260.8L1477 264.9L1482 268.9L1487 272.9L1492 276.9L1497 280.9L1502 284.8L1507 288.8L1512 292.7L1517 296.5L1522 300.4L1527 304.2L1532 307.9L1537 311.6L1542 315.2L1547 318.8L1552 322.3L1557 325.7L1562 329.1L1567 332.4L1572 335.6L1577 338.7L1582 341.7L1587 344.6L1592 347.3L1597 350.0L1602 352.6L1607 355.1L1612 357.4L1617 359.6L1622 361.7L1627 363.6L1632 365.4L1637 367.1L1642 368.6L1647 370.0L1652 371.2L1657 372.3L1662 373.2L1667 374.0L1672 374.6L1677 375.1L1682 375.4L1687 375.7L1692 375.9L1697 376.2L1702 376.4L1707 376.6L1712 376.8L1717 377.0L1722 377.1L1727 377.2L1732 377.3L1737 377.4L1742 377.5L1747 377.5L1752 377.5L1757 377.5L1762 377.4L1767 377.4L1772 377.3L1777 377.2L1782 377.0L1787 376.9L1792 376.7L1797 376.5L1802 376.3L1807 376.1L1812 375.8L1817 375.5L1822 375.2L1827 374.9L1832 374.3L1837 373.6L1842 372.8L1847 371.8L1852 370.6L1857 369.3L1862 367.9L1867 366.3L1872 364.5L1877 362.7L1882 360.6L1887 358.5L1892 356.2L1897 353.8L1902 351.3L1907 348.7L1912 346.0L1917 343.1L1922 340.2L1927 337.1L1932 334.0L1937 330.7L1942 327.4L1947 324.0L1952 320.6L1957 317.0L1962 313.4L1967 309.7L1972 306.0L1977 302.3L1982 298.4L1987 294.6L1992 290.7L1997 286.8L2002 282.9L2007 278.9L2012 274.9L2017 270.9L2022 266.9L2027 262.9L2032 258.8L2037 254.7L2042 250.6L2047 246.5" fill="none" stroke="#ff8400" stroke-width="11.04" stroke-linejoin="round"/><path d="M560 133.5H1765M560 364.5H1765" fill="none" stroke="#ff6c00" stroke-width="7.5"/><path d="M571 136.7L576 137.0L581 137.2L586 137.5L591 137.8L596 138.1L601 138.4L606 138.8L611 139.1L616 139.5L621 140.0L626 140.4L631 140.9L636 141.5L641 142.0L646 142.6L651 143.3L656 143.9L661 144.7L666 145.5L671 146.3L676 147.2L681 148.1L686 149.1L691 150.2L696 151.3L701 152.5L706 153.8L711 155.1L716 156.6L721 158.1L726 159.7L731 161.4L736 163.2L741 165.1L746 167.0L751 169.1L756 171.3L761 173.6L766 176.0L771 178.5L776 181.1L781 183.9L786 186.7L791 189.7L796 192.8L801 195.9L806 199.2L811 202.6L816 206.1L821 209.7L826 213.3L831 217.1L836 220.9L841 224.8L846 228.7L851 232.7L856 236.8L861 240.8L866 244.9L871 249.0L876 253.1L881 257.2L886 261.2L891 265.3L896 269.3L901 273.3L906 277.3L911 281.3L916 285.2L921 289.0L926 292.8L931 296.6L936 300.3L941 303.9L946 307.5L951 310.9L956 314.4L961 317.7L966 320.9L971 324.1L976 327.1L981 330.1L986 332.9L991 335.7L996 338.3L1001 340.9L1006 343.3L1011 345.6L1016 347.8L1021 349.8L1026 351.8L1031 353.6L1036 355.2L1041 356.8L1046 358.2L1051 359.4L1056 360.6L1061 361.6L1066 362.4L1071 363.1L1076 363.7L1081 364.1L1086 364.4L1091 364.5M571 361.3L576 361.0L581 360.8L586 360.5L591 360.2L596 359.9L601 359.6L606 359.2L611 358.9L616 358.5L621 358.0L626 357.6L631 357.1L636 356.5L641 356.0L646 355.4L651 354.7L656 354.1L661 353.3L666 352.5L671 351.7L676 350.8L681 349.9L686 348.9L691 347.8L696 346.7L701 345.5L706 344.2L711 342.9L716 341.4L721 339.9L726 338.3L731 336.6L736 334.8L741 332.9L746 331.0L751 328.9L756 326.7L761 324.4L766 322.0L771 319.5L776 316.9L781 314.1L786 311.3L791 308.3L796 305.2L801 302.1L806 298.8L811 295.4L816 291.9L821 288.3L826 284.7L831 280.9L836 277.1L841 273.2L846 269.3L851 265.3L856 261.2L861 257.2L866 253.1L871 249.0L876 244.9L881 240.8L886 236.8L891 232.7L896 228.7L901 224.7L906 220.7L911 216.7L916 212.8L921 209.0L926 205.2L931 201.4L936 197.7L941 194.1L946 190.5L951 187.1L956 183.6L961 180.3L966 177.1L971 173.9L976 170.9L981 167.9L986 165.1L991 162.3L996 159.7L1001 157.1L1006 154.7L1011 152.4L1016 150.2L1021 148.2L1026 146.2L1031 144.4L1036 142.8L1041 141.2L1046 139.8L1051 138.6L1056 137.4L1061 136.4L1066 135.6L1071 134.9L1076 134.3L1081 133.9L1086 133.6L1091 133.5M1233 133.5L1238 133.5L1243 133.7L1248 134.0L1253 134.4L1258 135.0L1263 135.7L1268 136.5L1273 137.5L1278 138.7L1283 140.0L1288 141.4L1293 142.9L1298 144.6L1303 146.4L1308 148.4L1313 150.4L1318 152.6L1323 154.9L1328 157.4L1333 159.9L1338 162.6L1343 165.3L1348 168.2L1353 171.2L1358 174.2L1363 177.4L1368 180.6L1373 184.0L1378 187.4L1383 190.9L1388 194.5L1393 198.1L1398 201.8L1403 205.6L1408 209.4L1413 213.2L1418 217.1L1423 221.1L1428 225.1L1433 229.1L1438 233.1L1443 237.2L1448 241.2L1453 245.3L1458 249.4L1463 253.5L1468 257.6L1473 261.6L1478 265.7L1483 269.7L1488 273.7L1493 277.7L1498 281.6L1503 285.5L1508 289.4L1513 293.2L1518 296.9L1523 300.6L1528 304.3L1533 307.8L1538 311.3L1543 314.7L1548 318.0L1553 321.2L1558 324.4L1563 327.4L1568 330.4L1573 333.2L1578 336.0L1583 338.6L1588 341.1L1593 343.5L1598 345.8L1603 348.0L1608 350.0L1613 351.9L1618 353.7L1623 355.4L1628 356.9L1633 358.3L1638 359.6L1643 360.7L1648 361.6L1653 362.5L1658 363.2L1663 363.7L1668 364.1L1673 364.4L1678 364.5M1233 364.5L1238 364.5L1243 364.3L1248 364.0L1253 363.6L1258 363.0L1263 362.3L1268 361.5L1273 360.5L1278 359.3L1283 358.0L1288 356.6L1293 355.1L1298 353.4L1303 351.6L1308 349.6L1313 347.6L1318 345.4L1323 343.1L1328 340.6L1333 338.1L1338 335.4L1343 332.7L1348 329.8L1353 326.8L1358 323.8L1363 320.6L1368 317.4L1373 314.0L1378 310.6L1383 307.1L1388 303.5L1393 299.9L1398 296.2L1403 292.4L1408 288.6L1413 284.8L1418 280.9L1423 276.9L1428 272.9L1433 268.9L1438 264.9L1443 260.8L1448 256.8L1453 252.7L1458 248.6L1463 244.5L1468 240.4L1473 236.4L1478 232.3L1483 228.3L1488 224.3L1493 220.3L1498 216.4L1503 212.5L1508 208.6L1513 204.8L1518 201.1L1523 197.4L1528 193.7L1533 190.2L1538 186.7L1543 183.3L1548 180.0L1553 176.8L1558 173.6L1563 170.6L1568 167.6L1573 164.8L1578 162.0L1583 159.4L1588 156.9L1593 154.5L1598 152.2L1603 150.0L1608 148.0L1613 146.1L1618 144.3L1623 142.6L1628 141.1L1633 139.7L1638 138.4L1643 137.3L1648 136.4L1653 135.5L1658 134.8L1663 134.3L1668 133.9L1673 133.6L1678 133.5M1820 133.5L1825 133.5L1830 133.7L1835 134.0L1840 134.4L1845 135.0L1850 135.8L1855 136.6L1860 137.6L1865 138.8L1870 140.1L1875 141.5L1880 143.1L1885 144.8L1890 146.6L1895 148.6L1900 150.6L1905 152.9L1910 155.2L1915 157.6L1920 160.2L1925 162.8L1930 165.6L1935 168.5L1940 171.5L1945 174.5L1950 177.7L1955 181.0L1960 184.3L1965 187.7L1970 191.2L1975 194.8L1980 198.5L1985 202.2L1990 205.9L1995 209.8L2000 213.6L2005 217.5L2010 221.5L2015 225.5L2020 229.5L2025 233.5L2030 237.6L2035 241.6L2040 245.7L2045 249.8L2050 253.9L2055 258.0L2060 262.0L2065 266.1L2070 270.1L2075 274.1L2080 278.1L2085 282.0L2090 285.9L2095 289.8L2100 293.6L2105 297.3L2110 301.0L2115 304.6L2120 308.2L2125 311.6L2130 315.0L2135 318.3L2140 321.6L2145 324.7L2150 327.7L2155 330.7L2160 333.5L2165 336.2L2170 338.9L2175 341.4L2180 343.8L2185 346.0L2190 348.2L2195 350.2L2200 352.1L2205 353.9L2210 355.6L2215 357.1L2220 358.4L2225 359.7L2230 360.8L2235 361.7L2240 362.6L2245 363.2L2250 363.8L2255 364.2L2260 364.4L2265 364.5M1820 364.5L1825 364.5L1830 364.3L1835 364.0L1840 363.6L1845 363.0L1850 362.2L1855 361.4L1860 360.4L1865 359.2L1870 357.9L1875 356.5L1880 354.9L1885 353.2L1890 351.4L1895 349.4L1900 347.4L1905 345.1L1910 342.8L1915 340.4L1920 337.8L1925 335.2L1930 332.4L1935 329.5L1940 326.5L1945 323.5L1950 320.3L1955 317.0L1960 313.7L1965 310.3L1970 306.8L1975 303.2L1980 299.5L1985 295.8L1990 292.1L1995 288.2L2000 284.4L2005 280.5L2010 276.5L2015 272.5L2020 268.5L2025 264.5L2030 260.4L2035 256.4L2040 252.3L2045 248.2L2050 244.1L2055 240.0L2060 236.0L2065 231.9L2070 227.9L2075 223.9L2080 219.9L2085 216.0L2090 212.1L2095 208.2L2100 204.4L2105 200.7L2110 197.0L2115 193.4L2120 189.8L2125 186.4L2130 183.0L2135 179.7L2140 176.4L2145 173.3L2150 170.3L2155 167.3L2160 164.5L2165 161.8L2170 159.1L2175 156.6L2180 154.2L2185 152.0L2190 149.8L2195 147.8L2200 145.9L2205 144.1L2210 142.4L2215 140.9L2220 139.6L2225 138.3L2230 137.2L2235 136.3L2240 135.4L2245 134.8L2250 134.2L2255 133.8L2260 133.6L2265 133.5M555 125.5L560 126.2L565 126.8L570 127.5L575 128.1L580 128.8L585 129.4L590 130.0L595 130.7L600 131.3L605 132.0L610 132.6L615 133.3L620 133.9L625 134.6L630 135.2L635 135.9L640 136.6L645 137.3L650 138.0L655 138.7L660 139.4L665 140.2L670 141.0L675 141.8L680 142.8L685 143.7L690 144.8L695 145.9L700 147.1L705 148.4L710 149.8L715 151.3L720 152.8L725 154.5L730 156.2L735 158.0L740 160.0L745 162.0L750 164.2L755 166.5L760 168.9L765 171.4L770 174.0L775 176.7L780 179.6L785 182.6L790 185.7L795 188.9L800 192.2L805 195.7L810 199.3L815 202.9L820 206.7L825 210.5L830 214.5L835 218.5L840 222.6L845 226.8L850 231.0L855 235.2L860 239.5L865 243.9L870 248.2L875 252.5M555 382.8L560 381.6L565 380.5L570 379.3L575 378.2L580 377.2L585 376.1L590 375.1L595 374.1L600 373.1L605 372.1L610 371.2L615 370.3L620 369.4L625 368.5L630 367.6L635 366.8L640 365.9L645 365.1L650 364.3L655 363.5L660 362.7L665 361.9L670 361.1L675 360.2L680 359.3L685 358.2L690 357.1L695 356.0L700 354.7L705 353.4L710 351.9L715 350.4L720 348.8L725 347.1L730 345.3L735 343.4L740 341.4L745 339.2L750 337.0L755 334.6L760 332.2L765 329.6L770 326.8L775 324.0L780 321.0L785 317.9L790 314.7L795 311.4L800 307.9L805 304.3L810 300.6L815 296.8L820 292.9L825 288.9L830 284.8L835 280.6L840 276.4L845 272.1L850 267.7L855 263.3L860 258.8L865 254.3L870 249.8L875 245.3M871 249.0L876 244.9L881 240.8L886 236.8L891 232.7L896 228.7L901 224.7L906 220.7L911 216.7L916 212.8L921 208.9L926 205.1L931 201.2L936 197.5L941 193.8L946 190.1L951 186.5L956 183.0L961 179.5L966 176.1L971 172.8L976 169.6L981 166.5L986 163.5L991 160.5L996 157.7L1001 155.0L1006 152.4L1011 149.9L1016 147.5L1021 145.2L1026 143.1L1031 141.1L1036 139.2L1041 137.4L1046 135.8L1051 134.4L1056 133.0L1061 131.8L1066 130.8L1071 129.9L1076 129.1L1081 128.5L1086 128.1L1091 127.8L1096 127.6L1101 127.5L1106 127.3L1111 127.2L1116 127.1L1121 127.0L1126 126.9L1131 126.8L1136 126.7L1141 126.6L1146 126.6L1151 126.5L1156 126.5L1161 126.5L1166 126.5L1171 126.5L1176 126.5L1181 126.6L1186 126.6L1191 126.7L1196 126.8L1201 126.8L1206 126.9L1211 127.0L1216 127.2L1221 127.3L1226 127.4L1231 127.6L1236 127.7L1241 128.0L1246 128.4L1251 128.9L1256 129.7L1261 130.5L1266 131.5L1271 132.7L1276 133.9L1281 135.4L1286 136.9L1291 138.7L1296 140.5L1301 142.5L1306 144.6L1311 146.8L1316 149.1L1321 151.6L1326 154.2L1331 156.9L1336 159.7L1341 162.6L1346 165.6L1351 168.7L1356 171.9L1361 175.1L1366 178.5L1371 181.9L1376 185.4L1381 189.0L1386 192.7L1391 196.4L1396 200.1L1401 203.9L1406 207.8L1411 211.6L1416 215.6L1421 219.5L1426 223.5L1431 227.5L1436 231.5L1441 235.5L1446 239.6L1451 243.7L1456 247.8L1461 251.9M871 249.0L876 253.1L881 257.2L886 261.2L891 265.3L896 269.3L901 273.3L906 277.3L911 281.3L916 285.2L921 289.1L926 293.0L931 296.9L936 300.7L941 304.5L946 308.3L951 312.0L956 315.6L961 319.1L966 322.6L971 326.1L976 329.4L981 332.7L986 335.9L991 339.0L996 341.9L1001 344.8L1006 347.6L1011 350.3L1016 352.9L1021 355.3L1026 357.6L1031 359.8L1036 361.9L1041 363.8L1046 365.6L1051 367.2L1056 368.8L1061 370.1L1066 371.3L1071 372.4L1076 373.3L1081 374.1L1086 374.7L1091 375.1L1096 375.4L1101 375.7L1106 376.0L1111 376.2L1116 376.4L1121 376.6L1126 376.8L1131 377.0L1136 377.1L1141 377.2L1146 377.3L1151 377.4L1156 377.5L1161 377.5L1166 377.5L1171 377.5L1176 377.4L1181 377.4L1186 377.3L1191 377.2L1196 377.0L1201 376.9L1206 376.7L1211 376.5L1216 376.3L1221 376.0L1226 375.8L1231 375.5L1236 375.2L1241 374.8L1246 374.3L1251 373.6L1256 372.7L1261 371.7L1266 370.5L1271 369.2L1276 367.7L1281 366.1L1286 364.4L1291 362.5L1296 360.4L1301 358.3L1306 356.0L1311 353.6L1316 351.1L1321 348.4L1326 345.7L1331 342.8L1336 339.9L1341 336.8L1346 333.7L1351 330.4L1356 327.1L1361 323.7L1366 320.2L1371 316.7L1376 313.0L1381 309.4L1386 305.7L1391 301.9L1396 298.1L1401 294.2L1406 290.3L1411 286.4L1416 282.5L1421 278.5L1426 274.5L1431 270.5L1436 266.5L1441 262.5L1446 258.4L1451 254.3L1456 250.2L1461 246.1M1457 249.4L1462 245.3L1467 241.2L1472 237.2L1477 233.1L1482 229.1L1487 225.1L1492 221.1L1497 217.1L1502 213.2L1507 209.3L1512 205.4L1517 201.6L1522 197.9L1527 194.1L1532 190.5L1537 186.9L1542 183.3L1547 179.9L1552 176.5L1557 173.2L1562 170.0L1567 166.8L1572 163.8L1577 160.8L1582 158.0L1587 155.3L1592 152.6L1597 150.1L1602 147.7L1607 145.4L1612 143.3L1617 141.3L1622 139.4L1627 137.6L1632 136.0L1637 134.5L1642 133.2L1647 131.9L1652 130.9L1657 130.0L1662 129.2L1667 128.6L1672 128.1L1677 127.8L1682 127.6L1687 127.5L1692 127.3L1697 127.2L1702 127.1L1707 127.0L1712 126.9L1717 126.8L1722 126.7L1727 126.6L1732 126.6L1737 126.5L1742 126.5L1747 126.5L1752 126.5L1757 126.5L1762 126.5L1767 126.6L1772 126.6L1777 126.7L1782 126.7L1787 126.8L1792 126.9L1797 127.0L1802 127.1L1807 127.3L1812 127.4L1817 127.6L1822 127.7L1827 128.0L1832 128.3L1837 128.9L1842 129.6L1847 130.4L1852 131.4L1857 132.5L1862 133.8L1867 135.2L1872 136.8L1877 138.5L1882 140.3L1887 142.3L1892 144.4L1897 146.6L1902 148.9L1907 151.4L1912 153.9L1917 156.6L1922 159.4L1927 162.3L1932 165.3L1937 168.4L1942 171.6L1947 174.8L1952 178.2L1957 181.6L1962 185.1L1967 188.7L1972 192.3L1977 196.0L1982 199.7L1987 203.5L1992 207.4L1997 211.2L2002 215.2L2007 219.1L2012 223.1L2017 227.1L2022 231.1L2027 235.1L2032 239.2L2037 243.3L2042 247.4L2047 251.5M1457 248.6L1462 252.7L1467 256.8L1472 260.8L1477 264.9L1482 268.9L1487 272.9L1492 276.9L1497 280.9L1502 284.8L1507 288.8L1512 292.7L1517 296.5L1522 300.4L1527 304.2L1532 307.9L1537 311.6L1542 315.2L1547 318.8L1552 322.3L1557 325.7L1562 329.1L1567 332.4L1572 335.6L1577 338.7L1582 341.7L1587 344.6L1592 347.3L1597 350.0L1602 352.6L1607 355.1L1612 357.4L1617 359.6L1622 361.7L1627 363.6L1632 365.4L1637 367.1L1642 368.6L1647 370.0L1652 371.2L1657 372.3L1662 373.2L1667 374.0L1672 374.6L1677 375.1L1682 375.4L1687 375.7L1692 375.9L1697 376.2L1702 376.4L1707 376.6L1712 376.8L1717 377.0L1722 377.1L1727 377.2L1732 377.3L1737 377.4L1742 377.5L1747 377.5L1752 377.5L1757 377.5L1762 377.4L1767 377.4L1772 377.3L1777 377.2L1782 377.0L1787 376.9L1792 376.7L1797 376.5L1802 376.3L1807 376.1L1812 375.8L1817 375.5L1822 375.2L1827 374.9L1832 374.3L1837 373.6L1842 372.8L1847 371.8L1852 370.6L1857 369.3L1862 367.9L1867 366.3L1872 364.5L1877 362.7L1882 360.6L1887 358.5L1892 356.2L1897 353.8L1902 351.3L1907 348.7L1912 346.0L1917 343.1L1922 340.2L1927 337.1L1932 334.0L1937 330.7L1942 327.4L1947 324.0L1952 320.6L1957 317.0L1962 313.4L1967 309.7L1972 306.0L1977 302.3L1982 298.4L1987 294.6L1992 290.7L1997 286.8L2002 282.9L2007 278.9L2012 274.9L2017 270.9L2022 266.9L2027 262.9L2032 258.8L2037 254.7L2042 250.6L2047 246.5" fill="none" stroke="#ff6c00" stroke-width="7.20" stroke-linejoin="round"/><path d="M560 133.5H1765M560 364.5H1765" fill="none" stroke="#ff5a00" stroke-width="3.5"/><path d="M571 136.7L576 137.0L581 137.2L586 137.5L591 137.8L596 138.1L601 138.4L606 138.8L611 139.1L616 139.5L621 140.0L626 140.4L631 140.9L636 141.5L641 142.0L646 142.6L651 143.3L656 143.9L661 144.7L666 145.5L671 146.3L676 147.2L681 148.1L686 149.1L691 150.2L696 151.3L701 152.5L706 153.8L711 155.1L716 156.6L721 158.1L726 159.7L731 161.4L736 163.2L741 165.1L746 167.0L751 169.1L756 171.3L761 173.6L766 176.0L771 178.5L776 181.1L781 183.9L786 186.7L791 189.7L796 192.8L801 195.9L806 199.2L811 202.6L816 206.1L821 209.7L826 213.3L831 217.1L836 220.9L841 224.8L846 228.7L851 232.7L856 236.8L861 240.8L866 244.9L871 249.0L876 253.1L881 257.2L886 261.2L891 265.3L896 269.3L901 273.3L906 277.3L911 281.3L916 285.2L921 289.0L926 292.8L931 296.6L936 300.3L941 303.9L946 307.5L951 310.9L956 314.4L961 317.7L966 320.9L971 324.1L976 327.1L981 330.1L986 332.9L991 335.7L996 338.3L1001 340.9L1006 343.3L1011 345.6L1016 347.8L1021 349.8L1026 351.8L1031 353.6L1036 355.2L1041 356.8L1046 358.2L1051 359.4L1056 360.6L1061 361.6L1066 362.4L1071 363.1L1076 363.7L1081 364.1L1086 364.4L1091 364.5M571 361.3L576 361.0L581 360.8L586 360.5L591 360.2L596 359.9L601 359.6L606 359.2L611 358.9L616 358.5L621 358.0L626 357.6L631 357.1L636 356.5L641 356.0L646 355.4L651 354.7L656 354.1L661 353.3L666 352.5L671 351.7L676 350.8L681 349.9L686 348.9L691 347.8L696 346.7L701 345.5L706 344.2L711 342.9L716 341.4L721 339.9L726 338.3L731 336.6L736 334.8L741 332.9L746 331.0L751 328.9L756 326.7L761 324.4L766 322.0L771 319.5L776 316.9L781 314.1L786 311.3L791 308.3L796 305.2L801 302.1L806 298.8L811 295.4L816 291.9L821 288.3L826 284.7L831 280.9L836 277.1L841 273.2L846 269.3L851 265.3L856 261.2L861 257.2L866 253.1L871 249.0L876 244.9L881 240.8L886 236.8L891 232.7L896 228.7L901 224.7L906 220.7L911 216.7L916 212.8L921 209.0L926 205.2L931 201.4L936 197.7L941 194.1L946 190.5L951 187.1L956 183.6L961 180.3L966 177.1L971 173.9L976 170.9L981 167.9L986 165.1L991 162.3L996 159.7L1001 157.1L1006 154.7L1011 152.4L1016 150.2L1021 148.2L1026 146.2L1031 144.4L1036 142.8L1041 141.2L1046 139.8L1051 138.6L1056 137.4L1061 136.4L1066 135.6L1071 134.9L1076 134.3L1081 133.9L1086 133.6L1091 133.5M1233 133.5L1238 133.5L1243 133.7L1248 134.0L1253 134.4L1258 135.0L1263 135.7L1268 136.5L1273 137.5L1278 138.7L1283 140.0L1288 141.4L1293 142.9L1298 144.6L1303 146.4L1308 148.4L1313 150.4L1318 152.6L1323 154.9L1328 157.4L1333 159.9L1338 162.6L1343 165.3L1348 168.2L1353 171.2L1358 174.2L1363 177.4L1368 180.6L1373 184.0L1378 187.4L1383 190.9L1388 194.5L1393 198.1L1398 201.8L1403 205.6L1408 209.4L1413 213.2L1418 217.1L1423 221.1L1428 225.1L1433 229.1L1438 233.1L1443 237.2L1448 241.2L1453 245.3L1458 249.4L1463 253.5L1468 257.6L1473 261.6L1478 265.7L1483 269.7L1488 273.7L1493 277.7L1498 281.6L1503 285.5L1508 289.4L1513 293.2L1518 296.9L1523 300.6L1528 304.3L1533 307.8L1538 311.3L1543 314.7L1548 318.0L1553 321.2L1558 324.4L1563 327.4L1568 330.4L1573 333.2L1578 336.0L1583 338.6L1588 341.1L1593 343.5L1598 345.8L1603 348.0L1608 350.0L1613 351.9L1618 353.7L1623 355.4L1628 356.9L1633 358.3L1638 359.6L1643 360.7L1648 361.6L1653 362.5L1658 363.2L1663 363.7L1668 364.1L1673 364.4L1678 364.5M1233 364.5L1238 364.5L1243 364.3L1248 364.0L1253 363.6L1258 363.0L1263 362.3L1268 361.5L1273 360.5L1278 359.3L1283 358.0L1288 356.6L1293 355.1L1298 353.4L1303 351.6L1308 349.6L1313 347.6L1318 345.4L1323 343.1L1328 340.6L1333 338.1L1338 335.4L1343 332.7L1348 329.8L1353 326.8L1358 323.8L1363 320.6L1368 317.4L1373 314.0L1378 310.6L1383 307.1L1388 303.5L1393 299.9L1398 296.2L1403 292.4L1408 288.6L1413 284.8L1418 280.9L1423 276.9L1428 272.9L1433 268.9L1438 264.9L1443 260.8L1448 256.8L1453 252.7L1458 248.6L1463 244.5L1468 240.4L1473 236.4L1478 232.3L1483 228.3L1488 224.3L1493 220.3L1498 216.4L1503 212.5L1508 208.6L1513 204.8L1518 201.1L1523 197.4L1528 193.7L1533 190.2L1538 186.7L1543 183.3L1548 180.0L1553 176.8L1558 173.6L1563 170.6L1568 167.6L1573 164.8L1578 162.0L1583 159.4L1588 156.9L1593 154.5L1598 152.2L1603 150.0L1608 148.0L1613 146.1L1618 144.3L1623 142.6L1628 141.1L1633 139.7L1638 138.4L1643 137.3L1648 136.4L1653 135.5L1658 134.8L1663 134.3L1668 133.9L1673 133.6L1678 133.5M1820 133.5L1825 133.5L1830 133.7L1835 134.0L1840 134.4L1845 135.0L1850 135.8L1855 136.6L1860 137.6L1865 138.8L1870 140.1L1875 141.5L1880 143.1L1885 144.8L1890 146.6L1895 148.6L1900 150.6L1905 152.9L1910 155.2L1915 157.6L1920 160.2L1925 162.8L1930 165.6L1935 168.5L1940 171.5L1945 174.5L1950 177.7L1955 181.0L1960 184.3L1965 187.7L1970 191.2L1975 194.8L1980 198.5L1985 202.2L1990 205.9L1995 209.8L2000 213.6L2005 217.5L2010 221.5L2015 225.5L2020 229.5L2025 233.5L2030 237.6L2035 241.6L2040 245.7L2045 249.8L2050 253.9L2055 258.0L2060 262.0L2065 266.1L2070 270.1L2075 274.1L2080 278.1L2085 282.0L2090 285.9L2095 289.8L2100 293.6L2105 297.3L2110 301.0L2115 304.6L2120 308.2L2125 311.6L2130 315.0L2135 318.3L2140 321.6L2145 324.7L2150 327.7L2155 330.7L2160 333.5L2165 336.2L2170 338.9L2175 341.4L2180 343.8L2185 346.0L2190 348.2L2195 350.2L2200 352.1L2205 353.9L2210 355.6L2215 357.1L2220 358.4L2225 359.7L2230 360.8L2235 361.7L2240 362.6L2245 363.2L2250 363.8L2255 364.2L2260 364.4L2265 364.5M1820 364.5L1825 364.5L1830 364.3L1835 364.0L1840 363.6L1845 363.0L1850 362.2L1855 361.4L1860 360.4L1865 359.2L1870 357.9L1875 356.5L1880 354.9L1885 353.2L1890 351.4L1895 349.4L1900 347.4L1905 345.1L1910 342.8L1915 340.4L1920 337.8L1925 335.2L1930 332.4L1935 329.5L1940 326.5L1945 323.5L1950 320.3L1955 317.0L1960 313.7L1965 310.3L1970 306.8L1975 303.2L1980 299.5L1985 295.8L1990 292.1L1995 288.2L2000 284.4L2005 280.5L2010 276.5L2015 272.5L2020 268.5L2025 264.5L2030 260.4L2035 256.4L2040 252.3L2045 248.2L2050 244.1L2055 240.0L2060 236.0L2065 231.9L2070 227.9L2075 223.9L2080 219.9L2085 216.0L2090 212.1L2095 208.2L2100 204.4L2105 200.7L2110 197.0L2115 193.4L2120 189.8L2125 186.4L2130 183.0L2135 179.7L2140 176.4L2145 173.3L2150 170.3L2155 167.3L2160 164.5L2165 161.8L2170 159.1L2175 156.6L2180 154.2L2185 152.0L2190 149.8L2195 147.8L2200 145.9L2205 144.1L2210 142.4L2215 140.9L2220 139.6L2225 138.3L2230 137.2L2235 136.3L2240 135.4L2245 134.8L2250 134.2L2255 133.8L2260 133.6L2265 133.5M555 125.5L560 126.2L565 126.8L570 127.5L575 128.1L580 128.8L585 129.4L590 130.0L595 130.7L600 131.3L605 132.0L610 132.6L615 133.3L620 133.9L625 134.6L630 135.2L635 135.9L640 136.6L645 137.3L650 138.0L655 138.7L660 139.4L665 140.2L670 141.0L675 141.8L680 142.8L685 143.7L690 144.8L695 145.9L700 147.1L705 148.4L710 149.8L715 151.3L720 152.8L725 154.5L730 156.2L735 158.0L740 160.0L745 162.0L750 164.2L755 166.5L760 168.9L765 171.4L770 174.0L775 176.7L780 179.6L785 182.6L790 185.7L795 188.9L800 192.2L805 195.7L810 199.3L815 202.9L820 206.7L825 210.5L830 214.5L835 218.5L840 222.6L845 226.8L850 231.0L855 235.2L860 239.5L865 243.9L870 248.2L875 252.5M555 382.8L560 381.6L565 380.5L570 379.3L575 378.2L580 377.2L585 376.1L590 375.1L595 374.1L600 373.1L605 372.1L610 371.2L615 370.3L620 369.4L625 368.5L630 367.6L635 366.8L640 365.9L645 365.1L650 364.3L655 363.5L660 362.7L665 361.9L670 361.1L675 360.2L680 359.3L685 358.2L690 357.1L695 356.0L700 354.7L705 353.4L710 351.9L715 350.4L720 348.8L725 347.1L730 345.3L735 343.4L740 341.4L745 339.2L750 337.0L755 334.6L760 332.2L765 329.6L770 326.8L775 324.0L780 321.0L785 317.9L790 314.7L795 311.4L800 307.9L805 304.3L810 300.6L815 296.8L820 292.9L825 288.9L830 284.8L835 280.6L840 276.4L845 272.1L850 267.7L855 263.3L860 258.8L865 254.3L870 249.8L875 245.3M871 249.0L876 244.9L881 240.8L886 236.8L891 232.7L896 228.7L901 224.7L906 220.7L911 216.7L916 212.8L921 208.9L926 205.1L931 201.2L936 197.5L941 193.8L946 190.1L951 186.5L956 183.0L961 179.5L966 176.1L971 172.8L976 169.6L981 166.5L986 163.5L991 160.5L996 157.7L1001 155.0L1006 152.4L1011 149.9L1016 147.5L1021 145.2L1026 143.1L1031 141.1L1036 139.2L1041 137.4L1046 135.8L1051 134.4L1056 133.0L1061 131.8L1066 130.8L1071 129.9L1076 129.1L1081 128.5L1086 128.1L1091 127.8L1096 127.6L1101 127.5L1106 127.3L1111 127.2L1116 127.1L1121 127.0L1126 126.9L1131 126.8L1136 126.7L1141 126.6L1146 126.6L1151 126.5L1156 126.5L1161 126.5L1166 126.5L1171 126.5L1176 126.5L1181 126.6L1186 126.6L1191 126.7L1196 126.8L1201 126.8L1206 126.9L1211 127.0L1216 127.2L1221 127.3L1226 127.4L1231 127.6L1236 127.7L1241 128.0L1246 128.4L1251 128.9L1256 129.7L1261 130.5L1266 131.5L1271 132.7L1276 133.9L1281 135.4L1286 136.9L1291 138.7L1296 140.5L1301 142.5L1306 144.6L1311 146.8L1316 149.1L1321 151.6L1326 154.2L1331 156.9L1336 159.7L1341 162.6L1346 165.6L1351 168.7L1356 171.9L1361 175.1L1366 178.5L1371 181.9L1376 185.4L1381 189.0L1386 192.7L1391 196.4L1396 200.1L1401 203.9L1406 207.8L1411 211.6L1416 215.6L1421 219.5L1426 223.5L1431 227.5L1436 231.5L1441 235.5L1446 239.6L1451 243.7L1456 247.8L1461 251.9M871 249.0L876 253.1L881 257.2L886 261.2L891 265.3L896 269.3L901 273.3L906 277.3L911 281.3L916 285.2L921 289.1L926 293.0L931 296.9L936 300.7L941 304.5L946 308.3L951 312.0L956 315.6L961 319.1L966 322.6L971 326.1L976 329.4L981 332.7L986 335.9L991 339.0L996 341.9L1001 344.8L1006 347.6L1011 350.3L1016 352.9L1021 355.3L1026 357.6L1031 359.8L1036 361.9L1041 363.8L1046 365.6L1051 367.2L1056 368.8L1061 370.1L1066 371.3L1071 372.4L1076 373.3L1081 374.1L1086 374.7L1091 375.1L1096 375.4L1101 375.7L1106 376.0L1111 376.2L1116 376.4L1121 376.6L1126 376.8L1131 377.0L1136 377.1L1141 377.2L1146 377.3L1151 377.4L1156 377.5L1161 377.5L1166 377.5L1171 377.5L1176 377.4L1181 377.4L1186 377.3L1191 377.2L1196 377.0L1201 376.9L1206 376.7L1211 376.5L1216 376.3L1221 376.0L1226 375.8L1231 375.5L1236 375.2L1241 374.8L1246 374.3L1251 373.6L1256 372.7L1261 371.7L1266 370.5L1271 369.2L1276 367.7L1281 366.1L1286 364.4L1291 362.5L1296 360.4L1301 358.3L1306 356.0L1311 353.6L1316 351.1L1321 348.4L1326 345.7L1331 342.8L1336 339.9L1341 336.8L1346 333.7L1351 330.4L1356 327.1L1361 323.7L1366 320.2L1371 316.7L1376 313.0L1381 309.4L1386 305.7L1391 301.9L1396 298.1L1401 294.2L1406 290.3L1411 286.4L1416 282.5L1421 278.5L1426 274.5L1431 270.5L1436 266.5L1441 262.5L1446 258.4L1451 254.3L1456 250.2L1461 246.1M1457 249.4L1462 245.3L1467 241.2L1472 237.2L1477 233.1L1482 229.1L1487 225.1L1492 221.1L1497 217.1L1502 213.2L1507 209.3L1512 205.4L1517 201.6L1522 197.9L1527 194.1L1532 190.5L1537 186.9L1542 183.3L1547 179.9L1552 176.5L1557 173.2L1562 170.0L1567 166.8L1572 163.8L1577 160.8L1582 158.0L1587 155.3L1592 152.6L1597 150.1L1602 147.7L1607 145.4L1612 143.3L1617 141.3L1622 139.4L1627 137.6L1632 136.0L1637 134.5L1642 133.2L1647 131.9L1652 130.9L1657 130.0L1662 129.2L1667 128.6L1672 128.1L1677 127.8L1682 127.6L1687 127.5L1692 127.3L1697 127.2L1702 127.1L1707 127.0L1712 126.9L1717 126.8L1722 126.7L1727 126.6L1732 126.6L1737 126.5L1742 126.5L1747 126.5L1752 126.5L1757 126.5L1762 126.5L1767 126.6L1772 126.6L1777 126.7L1782 126.7L1787 126.8L1792 126.9L1797 127.0L1802 127.1L1807 127.3L1812 127.4L1817 127.6L1822 127.7L1827 128.0L1832 128.3L1837 128.9L1842 129.6L1847 130.4L1852 131.4L1857 132.5L1862 133.8L1867 135.2L1872 136.8L1877 138.5L1882 140.3L1887 142.3L1892 144.4L1897 146.6L1902 148.9L1907 151.4L1912 153.9L1917 156.6L1922 159.4L1927 162.3L1932 165.3L1937 168.4L1942 171.6L1947 174.8L1952 178.2L1957 181.6L1962 185.1L1967 188.7L1972 192.3L1977 196.0L1982 199.7L1987 203.5L1992 207.4L1997 211.2L2002 215.2L2007 219.1L2012 223.1L2017 227.1L2022 231.1L2027 235.1L2032 239.2L2037 243.3L2042 247.4L2047 251.5M1457 248.6L1462 252.7L1467 256.8L1472 260.8L1477 264.9L1482 268.9L1487 272.9L1492 276.9L1497 280.9L1502 284.8L1507 288.8L1512 292.7L1517 296.5L1522 300.4L1527 304.2L1532 307.9L1537 311.6L1542 315.2L1547 318.8L1552 322.3L1557 325.7L1562 329.1L1567 332.4L1572 335.6L1577 338.7L1582 341.7L1587 344.6L1592 347.3L1597 350.0L1602 352.6L1607 355.1L1612 357.4L1617 359.6L1622 361.7L1627 363.6L1632 365.4L1637 367.1L1642 368.6L1647 370.0L1652 371.2L1657 372.3L1662 373.2L1667 374.0L1672 374.6L1677 375.1L1682 375.4L1687 375.7L1692 375.9L1697 376.2L1702 376.4L1707 376.6L1712 376.8L1717 377.0L1722 377.1L1727 377.2L1732 377.3L1737 377.4L1742 377.5L1747 377.5L1752 377.5L1757 377.5L1762 377.4L1767 377.4L1772 377.3L1777 377.2L1782 377.0L1787 376.9L1792 376.7L1797 376.5L1802 376.3L1807 376.1L1812 375.8L1817 375.5L1822 375.2L1827 374.9L1832 374.3L1837 373.6L1842 372.8L1847 371.8L1852 370.6L1857 369.3L1862 367.9L1867 366.3L1872 364.5L1877 362.7L1882 360.6L1887 358.5L1892 356.2L1897 353.8L1902 351.3L1907 348.7L1912 346.0L1917 343.1L1922 340.2L1927 337.1L1932 334.0L1937 330.7L1942 327.4L1947 324.0L1952 320.6L1957 317.0L1962 313.4L1967 309.7L1972 306.0L1977 302.3L1982 298.4L1987 294.6L1992 290.7L1997 286.8L2002 282.9L2007 278.9L2012 274.9L2017 270.9L2022 266.9L2027 262.9L2032 258.8L2037 254.7L2042 250.6L2047 246.5" fill="none" stroke="#ff5a00" stroke-width="3.36" stroke-linejoin="round"/><path d="M560 133.5H1765" fill="none" stroke="#ff1800" stroke-opacity="0.12" stroke-width="9"/><path d="M560 364.5H1765" fill="none" stroke="#ff1800" stroke-opacity="0.12" stroke-width="9"/><path d="M571 136.7L576 137.0L581 137.2L586 137.5L591 137.8L596 138.1L601 138.4L606 138.8L611 139.1L616 139.5L621 140.0L626 140.4L631 140.9L636 141.5L641 142.0L646 142.6L651 143.3L656 143.9L661 144.7L666 145.5L671 146.3L676 147.2L681 148.1L686 149.1L691 150.2L696 151.3L701 152.5L706 153.8L711 155.1L716 156.6L721 158.1L726 159.7L731 161.4L736 163.2L741 165.1L746 167.0L751 169.1L756 171.3L761 173.6L766 176.0L771 178.5L776 181.1L781 183.9L786 186.7L791 189.7L796 192.8L801 195.9L806 199.2L811 202.6L816 206.1L821 209.7L826 213.3L831 217.1L836 220.9L841 224.8L846 228.7L851 232.7L856 236.8L861 240.8L866 244.9L871 249.0L876 253.1L881 257.2L886 261.2L891 265.3L896 269.3L901 273.3L906 277.3L911 281.3L916 285.2L921 289.0L926 292.8L931 296.6L936 300.3L941 303.9L946 307.5L951 310.9L956 314.4L961 317.7L966 320.9L971 324.1L976 327.1L981 330.1L986 332.9L991 335.7L996 338.3L1001 340.9L1006 343.3L1011 345.6L1016 347.8L1021 349.8L1026 351.8L1031 353.6L1036 355.2L1041 356.8L1046 358.2L1051 359.4L1056 360.6L1061 361.6L1066 362.4L1071 363.1L1076 363.7L1081 364.1L1086 364.4L1091 364.5" fill="none" stroke="#ff1800" stroke-opacity="0.12" stroke-width="9"/><path d="M571 361.3L576 361.0L581 360.8L586 360.5L591 360.2L596 359.9L601 359.6L606 359.2L611 358.9L616 358.5L621 358.0L626 357.6L631 357.1L636 356.5L641 356.0L646 355.4L651 354.7L656 354.1L661 353.3L666 352.5L671 351.7L676 350.8L681 349.9L686 348.9L691 347.8L696 346.7L701 345.5L706 344.2L711 342.9L716 341.4L721 339.9L726 338.3L731 336.6L736 334.8L741 332.9L746 331.0L751 328.9L756 326.7L761 324.4L766 322.0L771 319.5L776 316.9L781 314.1L786 311.3L791 308.3L796 305.2L801 302.1L806 298.8L811 295.4L816 291.9L821 288.3L826 284.7L831 280.9L836 277.1L841 273.2L846 269.3L851 265.3L856 261.2L861 257.2L866 253.1L871 249.0L876 244.9L881 240.8L886 236.8L891 232.7L896 228.7L901 224.7L906 220.7L911 216.7L916 212.8L921 209.0L926 205.2L931 201.4L936 197.7L941 194.1L946 190.5L951 187.1L956 183.6L961 180.3L966 177.1L971 173.9L976 170.9L981 167.9L986 165.1L991 162.3L996 159.7L1001 157.1L1006 154.7L1011 152.4L1016 150.2L1021 148.2L1026 146.2L1031 144.4L1036 142.8L1041 141.2L1046 139.8L1051 138.6L1056 137.4L1061 136.4L1066 135.6L1071 134.9L1076 134.3L1081 133.9L1086 133.6L1091 133.5" fill="none" stroke="#ff1800" stroke-opacity="0.12" stroke-width="9"/><path d="M1233 133.5L1238 133.5L1243 133.7L1248 134.0L1253 134.4L1258 135.0L1263 135.7L1268 136.5L1273 137.5L1278 138.7L1283 140.0L1288 141.4L1293 142.9L1298 144.6L1303 146.4L1308 148.4L1313 150.4L1318 152.6L1323 154.9L1328 157.4L1333 159.9L1338 162.6L1343 165.3L1348 168.2L1353 171.2L1358 174.2L1363 177.4L1368 180.6L1373 184.0L1378 187.4L1383 190.9L1388 194.5L1393 198.1L1398 201.8L1403 205.6L1408 209.4L1413 213.2L1418 217.1L1423 221.1L1428 225.1L1433 229.1L1438 233.1L1443 237.2L1448 241.2L1453 245.3L1458 249.4L1463 253.5L1468 257.6L1473 261.6L1478 265.7L1483 269.7L1488 273.7L1493 277.7L1498 281.6L1503 285.5L1508 289.4L1513 293.2L1518 296.9L1523 300.6L1528 304.3L1533 307.8L1538 311.3L1543 314.7L1548 318.0L1553 321.2L1558 324.4L1563 327.4L1568 330.4L1573 333.2L1578 336.0L1583 338.6L1588 341.1L1593 343.5L1598 345.8L1603 348.0L1608 350.0L1613 351.9L1618 353.7L1623 355.4L1628 356.9L1633 358.3L1638 359.6L1643 360.7L1648 361.6L1653 362.5L1658 363.2L1663 363.7L1668 364.1L1673 364.4L1678 364.5" fill="none" stroke="#ff1800" stroke-opacity="0.12" stroke-width="9"/><path d="M1233 364.5L1238 364.5L1243 364.3L1248 364.0L1253 363.6L1258 363.0L1263 362.3L1268 361.5L1273 360.5L1278 359.3L1283 358.0L1288 356.6L1293 355.1L1298 353.4L1303 351.6L1308 349.6L1313 347.6L1318 345.4L1323 343.1L1328 340.6L1333 338.1L1338 335.4L1343 332.7L1348 329.8L1353 326.8L1358 323.8L1363 320.6L1368 317.4L1373 314.0L1378 310.6L1383 307.1L1388 303.5L1393 299.9L1398 296.2L1403 292.4L1408 288.6L1413 284.8L1418 280.9L1423 276.9L1428 272.9L1433 268.9L1438 264.9L1443 260.8L1448 256.8L1453 252.7L1458 248.6L1463 244.5L1468 240.4L1473 236.4L1478 232.3L1483 228.3L1488 224.3L1493 220.3L1498 216.4L1503 212.5L1508 208.6L1513 204.8L1518 201.1L1523 197.4L1528 193.7L1533 190.2L1538 186.7L1543 183.3L1548 180.0L1553 176.8L1558 173.6L1563 170.6L1568 167.6L1573 164.8L1578 162.0L1583 159.4L1588 156.9L1593 154.5L1598 152.2L1603 150.0L1608 148.0L1613 146.1L1618 144.3L1623 142.6L1628 141.1L1633 139.7L1638 138.4L1643 137.3L1648 136.4L1653 135.5L1658 134.8L1663 134.3L1668 133.9L1673 133.6L1678 133.5" fill="none" stroke="#ff1800" stroke-opacity="0.12" stroke-width="9"/><path d="M1820 133.5L1825 133.5L1830 133.7L1835 134.0L1840 134.4L1845 135.0L1850 135.8L1855 136.6L1860 137.6L1865 138.8L1870 140.1L1875 141.5L1880 143.1L1885 144.8L1890 146.6L1895 148.6L1900 150.6L1905 152.9L1910 155.2L1915 157.6L1920 160.2L1925 162.8L1930 165.6L1935 168.5L1940 171.5L1945 174.5L1950 177.7L1955 181.0L1960 184.3L1965 187.7L1970 191.2L1975 194.8L1980 198.5L1985 202.2L1990 205.9L1995 209.8L2000 213.6L2005 217.5L2010 221.5L2015 225.5L2020 229.5L2025 233.5L2030 237.6L2035 241.6L2040 245.7L2045 249.8L2050 253.9L2055 258.0L2060 262.0L2065 266.1L2070 270.1L2075 274.1L2080 278.1L2085 282.0L2090 285.9L2095 289.8L2100 293.6L2105 297.3L2110 301.0L2115 304.6L2120 308.2L2125 311.6L2130 315.0L2135 318.3L2140 321.6L2145 324.7L2150 327.7L2155 330.7L2160 333.5L2165 336.2L2170 338.9L2175 341.4L2180 343.8L2185 346.0L2190 348.2L2195 350.2L2200 352.1L2205 353.9L2210 355.6L2215 357.1L2220 358.4L2225 359.7L2230 360.8L2235 361.7L2240 362.6L2245 363.2L2250 363.8L2255 364.2L2260 364.4L2265 364.5" fill="none" stroke="#ff1800" stroke-opacity="0.12" stroke-width="9"/><path d="M1820 364.5L1825 364.5L1830 364.3L1835 364.0L1840 363.6L1845 363.0L1850 362.2L1855 361.4L1860 360.4L1865 359.2L1870 357.9L1875 356.5L1880 354.9L1885 353.2L1890 351.4L1895 349.4L1900 347.4L1905 345.1L1910 342.8L1915 340.4L1920 337.8L1925 335.2L1930 332.4L1935 329.5L1940 326.5L1945 323.5L1950 320.3L1955 317.0L1960 313.7L1965 310.3L1970 306.8L1975 303.2L1980 299.5L1985 295.8L1990 292.1L1995 288.2L2000 284.4L2005 280.5L2010 276.5L2015 272.5L2020 268.5L2025 264.5L2030 260.4L2035 256.4L2040 252.3L2045 248.2L2050 244.1L2055 240.0L2060 236.0L2065 231.9L2070 227.9L2075 223.9L2080 219.9L2085 216.0L2090 212.1L2095 208.2L2100 204.4L2105 200.7L2110 197.0L2115 193.4L2120 189.8L2125 186.4L2130 183.0L2135 179.7L2140 176.4L2145 173.3L2150 170.3L2155 167.3L2160 164.5L2165 161.8L2170 159.1L2175 156.6L2180 154.2L2185 152.0L2190 149.8L2195 147.8L2200 145.9L2205 144.1L2210 142.4L2215 140.9L2220 139.6L2225 138.3L2230 137.2L2235 136.3L2240 135.4L2245 134.8L2250 134.2L2255 133.8L2260 133.6L2265 133.5" fill="none" stroke="#ff1800" stroke-opacity="0.12" stroke-width="9"/><path d="M555 125.5L560 126.2L565 126.8L570 127.5L575 128.1L580 128.8L585 129.4L590 130.0L595 130.7L600 131.3L605 132.0L610 132.6L615 133.3L620 133.9L625 134.6L630 135.2L635 135.9L640 136.6L645 137.3L650 138.0L655 138.7L660 139.4L665 140.2L670 141.0L675 141.8L680 142.8L685 143.7L690 144.8L695 145.9L700 147.1L705 148.4L710 149.8L715 151.3L720 152.8L725 154.5L730 156.2L735 158.0L740 160.0L745 162.0L750 164.2L755 166.5L760 168.9L765 171.4L770 174.0L775 176.7L780 179.6L785 182.6L790 185.7L795 188.9L800 192.2L805 195.7L810 199.3L815 202.9L820 206.7L825 210.5L830 214.5L835 218.5L840 222.6L845 226.8L850 231.0L855 235.2L860 239.5L865 243.9L870 248.2L875 252.5" fill="none" stroke="#ff1800" stroke-opacity="0.12" stroke-width="9"/><path d="M555 382.8L560 381.6L565 380.5L570 379.3L575 378.2L580 377.2L585 376.1L590 375.1L595 374.1L600 373.1L605 372.1L610 371.2L615 370.3L620 369.4L625 368.5L630 367.6L635 366.8L640 365.9L645 365.1L650 364.3L655 363.5L660 362.7L665 361.9L670 361.1L675 360.2L680 359.3L685 358.2L690 357.1L695 356.0L700 354.7L705 353.4L710 351.9L715 350.4L720 348.8L725 347.1L730 345.3L735 343.4L740 341.4L745 339.2L750 337.0L755 334.6L760 332.2L765 329.6L770 326.8L775 324.0L780 321.0L785 317.9L790 314.7L795 311.4L800 307.9L805 304.3L810 300.6L815 296.8L820 292.9L825 288.9L830 284.8L835 280.6L840 276.4L845 272.1L850 267.7L855 263.3L860 258.8L865 254.3L870 249.8L875 245.3" fill="none" stroke="#ff1800" stroke-opacity="0.12" stroke-width="9"/><path d="M871 249.0L876 244.9L881 240.8L886 236.8L891 232.7L896 228.7L901 224.7L906 220.7L911 216.7L916 212.8L921 208.9L926 205.1L931 201.2L936 197.5L941 193.8L946 190.1L951 186.5L956 183.0L961 179.5L966 176.1L971 172.8L976 169.6L981 166.5L986 163.5L991 160.5L996 157.7L1001 155.0L1006 152.4L1011 149.9L1016 147.5L1021 145.2L1026 143.1L1031 141.1L1036 139.2L1041 137.4L1046 135.8L1051 134.4L1056 133.0L1061 131.8L1066 130.8L1071 129.9L1076 129.1L1081 128.5L1086 128.1L1091 127.8L1096 127.6L1101 127.5L1106 127.3L1111 127.2L1116 127.1L1121 127.0L1126 126.9L1131 126.8L1136 126.7L1141 126.6L1146 126.6L1151 126.5L1156 126.5L1161 126.5L1166 126.5L1171 126.5L1176 126.5L1181 126.6L1186 126.6L1191 126.7L1196 126.8L1201 126.8L1206 126.9L1211 127.0L1216 127.2L1221 127.3L1226 127.4L1231 127.6L1236 127.7L1241 128.0L1246 128.4L1251 128.9L1256 129.7L1261 130.5L1266 131.5L1271 132.7L1276 133.9L1281 135.4L1286 136.9L1291 138.7L1296 140.5L1301 142.5L1306 144.6L1311 146.8L1316 149.1L1321 151.6L1326 154.2L1331 156.9L1336 159.7L1341 162.6L1346 165.6L1351 168.7L1356 171.9L1361 175.1L1366 178.5L1371 181.9L1376 185.4L1381 189.0L1386 192.7L1391 196.4L1396 200.1L1401 203.9L1406 207.8L1411 211.6L1416 215.6L1421 219.5L1426 223.5L1431 227.5L1436 231.5L1441 235.5L1446 239.6L1451 243.7L1456 247.8L1461 251.9" fill="none" stroke="#ff1800" stroke-opacity="0.12" stroke-width="9"/><path d="M871 249.0L876 253.1L881 257.2L886 261.2L891 265.3L896 269.3L901 273.3L906 277.3L911 281.3L916 285.2L921 289.1L926 293.0L931 296.9L936 300.7L941 304.5L946 308.3L951 312.0L956 315.6L961 319.1L966 322.6L971 326.1L976 329.4L981 332.7L986 335.9L991 339.0L996 341.9L1001 344.8L1006 347.6L1011 350.3L1016 352.9L1021 355.3L1026 357.6L1031 359.8L1036 361.9L1041 363.8L1046 365.6L1051 367.2L1056 368.8L1061 370.1L1066 371.3L1071 372.4L1076 373.3L1081 374.1L1086 374.7L1091 375.1L1096 375.4L1101 375.7L1106 376.0L1111 376.2L1116 376.4L1121 376.6L1126 376.8L1131 377.0L1136 377.1L1141 377.2L1146 377.3L1151 377.4L1156 377.5L1161 377.5L1166 377.5L1171 377.5L1176 377.4L1181 377.4L1186 377.3L1191 377.2L1196 377.0L1201 376.9L1206 376.7L1211 376.5L1216 376.3L1221 376.0L1226 375.8L1231 375.5L1236 375.2L1241 374.8L1246 374.3L1251 373.6L1256 372.7L1261 371.7L1266 370.5L1271 369.2L1276 367.7L1281 366.1L1286 364.4L1291 362.5L1296 360.4L1301 358.3L1306 356.0L1311 353.6L1316 351.1L1321 348.4L1326 345.7L1331 342.8L1336 339.9L1341 336.8L1346 333.7L1351 330.4L1356 327.1L1361 323.7L1366 320.2L1371 316.7L1376 313.0L1381 309.4L1386 305.7L1391 301.9L1396 298.1L1401 294.2L1406 290.3L1411 286.4L1416 282.5L1421 278.5L1426 274.5L1431 270.5L1436 266.5L1441 262.5L1446 258.4L1451 254.3L1456 250.2L1461 246.1" fill="none" stroke="#ff1800" stroke-opacity="0.12" stroke-width="9"/><path d="M1457 249.4L1462 245.3L1467 241.2L1472 237.2L1477 233.1L1482 229.1L1487 225.1L1492 221.1L1497 217.1L1502 213.2L1507 209.3L1512 205.4L1517 201.6L1522 197.9L1527 194.1L1532 190.5L1537 186.9L1542 183.3L1547 179.9L1552 176.5L1557 173.2L1562 170.0L1567 166.8L1572 163.8L1577 160.8L1582 158.0L1587 155.3L1592 152.6L1597 150.1L1602 147.7L1607 145.4L1612 143.3L1617 141.3L1622 139.4L1627 137.6L1632 136.0L1637 134.5L1642 133.2L1647 131.9L1652 130.9L1657 130.0L1662 129.2L1667 128.6L1672 128.1L1677 127.8L1682 127.6L1687 127.5L1692 127.3L1697 127.2L1702 127.1L1707 127.0L1712 126.9L1717 126.8L1722 126.7L1727 126.6L1732 126.6L1737 126.5L1742 126.5L1747 126.5L1752 126.5L1757 126.5L1762 126.5L1767 126.6L1772 126.6L1777 126.7L1782 126.7L1787 126.8L1792 126.9L1797 127.0L1802 127.1L1807 127.3L1812 127.4L1817 127.6L1822 127.7L1827 128.0L1832 128.3L1837 128.9L1842 129.6L1847 130.4L1852 131.4L1857 132.5L1862 133.8L1867 135.2L1872 136.8L1877 138.5L1882 140.3L1887 142.3L1892 144.4L1897 146.6L1902 148.9L1907 151.4L1912 153.9L1917 156.6L1922 159.4L1927 162.3L1932 165.3L1937 168.4L1942 171.6L1947 174.8L1952 178.2L1957 181.6L1962 185.1L1967 188.7L1972 192.3L1977 196.0L1982 199.7L1987 203.5L1992 207.4L1997 211.2L2002 215.2L2007 219.1L2012 223.1L2017 227.1L2022 231.1L2027 235.1L2032 239.2L2037 243.3L2042 247.4L2047 251.5" fill="none" stroke="#ff1800" stroke-opacity="0.12" stroke-width="9"/><path d="M1457 248.6L1462 252.7L1467 256.8L1472 260.8L1477 264.9L1482 268.9L1487 272.9L1492 276.9L1497 280.9L1502 284.8L1507 288.8L1512 292.7L1517 296.5L1522 300.4L1527 304.2L1532 307.9L1537 311.6L1542 315.2L1547 318.8L1552 322.3L1557 325.7L1562 329.1L1567 332.4L1572 335.6L1577 338.7L1582 341.7L1587 344.6L1592 347.3L1597 350.0L1602 352.6L1607 355.1L1612 357.4L1617 359.6L1622 361.7L1627 363.6L1632 365.4L1637 367.1L1642 368.6L1647 370.0L1652 371.2L1657 372.3L1662 373.2L1667 374.0L1672 374.6L1677 375.1L1682 375.4L1687 375.7L1692 375.9L1697 376.2L1702 376.4L1707 376.6L1712 376.8L1717 377.0L1722 377.1L1727 377.2L1732 377.3L1737 377.4L1742 377.5L1747 377.5L1752 377.5L1757 377.5L1762 377.4L1767 377.4L1772 377.3L1777 377.2L1782 377.0L1787 376.9L1792 376.7L1797 376.5L1802 376.3L1807 376.1L1812 375.8L1817 375.5L1822 375.2L1827 374.9L1832 374.3L1837 373.6L1842 372.8L1847 371.8L1852 370.6L1857 369.3L1862 367.9L1867 366.3L1872 364.5L1877 362.7L1882 360.6L1887 358.5L1892 356.2L1897 353.8L1902 351.3L1907 348.7L1912 346.0L1917 343.1L1922 340.2L1927 337.1L1932 334.0L1937 330.7L1942 327.4L1947 324.0L1952 320.6L1957 317.0L1962 313.4L1967 309.7L1972 306.0L1977 302.3L1982 298.4L1987 294.6L1992 290.7L1997 286.8L2002 282.9L2007 278.9L2012 274.9L2017 270.9L2022 266.9L2027 262.9L2032 258.8L2037 254.7L2042 250.6L2047 246.5" fill="none" stroke="#ff1800" stroke-opacity="0.12" stroke-width="9"/><path d="M599.7 87V97M637.24 87V93M674.78 87V93M712.3199999999999 87V93M749.8599999999999 87V93M787.3999999999999 87V97M824.9399999999998 87V93M862.4799999999998 87V93M900.0199999999998 87V93M937.5599999999997 87V93M975.0999999999997 87V97M1012.6399999999996 87V93M1050.1799999999996 87V93M1087.7199999999996 87V93M1125.2599999999995 87V93M1162.7999999999995 87V97M1200.3399999999995 87V93M1237.8799999999994 87V93M1275.4199999999994 87V93M1312.9599999999994 87V93M1350.4999999999993 87V97M1388.0399999999993 87V93M1425.5799999999992 87V93M1463.1199999999992 87V93M1500.6599999999992 87V93M1538.1999999999991 87V97M1575.739999999999 87V93M1613.279999999999 87V93M1650.819999999999 87V93M1688.359999999999 87V93M1725.899999999999 87V97" stroke="#d8d8d8" stroke-width="1"/><path d="M599.7 419V409M637.24 419V413M674.78 419V413M712.3199999999999 419V413M749.8599999999999 419V413M787.3999999999999 419V409M824.9399999999998 419V413M862.4799999999998 419V413M900.0199999999998 419V413M937.5599999999997 419V413M975.0999999999997 419V409M1012.6399999999996 419V413M1050.1799999999996 419V413M1087.7199999999996 419V413M1125.2599999999995 419V413M1162.7999999999995 419V409M1200.3399999999995 419V413M1237.8799999999994 419V413M1275.4199999999994 419V413M1312.9599999999994 419V413M1350.4999999999993 419V409M1388.0399999999993 419V413M1425.5799999999992 419V413M1463.1199999999992 419V413M1500.6599999999992 419V413M1538.1999999999991 419V409M1575.739999999999 419V413M1613.279999999999 419V413M1650.819999999999 419V413M1688.359999999999 419V413M1725.899999999999 419V409" stroke="#d8d8d8" stroke-width="1"/><path d="M575 83.5H584M575 104.5H584M575 124.5H584M575 145.5H584M575 166.5H584M575 187.5H584M575 208.5H584M575 229.5H584M575 250.5H584M575 271.5H584M575 292.5H584M575 312.5H584M575 333.5H584M575 354.5H584M575 375.5H584M575 396.5H584M575 417.5H584" stroke="#d8d8d8" stroke-width="1"/><path d="M1738 83.5H1747M1738 104.5H1747M1738 124.5H1747M1738 145.5H1747M1738 166.5H1747M1738 187.5H1747M1738 208.5H1747M1738 229.5H1747M1738 250.5H1747M1738 271.5H1747M1738 292.5H1747M1738 312.5H1747M1738 333.5H1747M1738 354.5H1747M1738 375.5H1747M1738 396.5H1747M1738 417.5H1747" stroke="#d8d8d8" stroke-width="1"/><rect x="577.2" y="406.1" width="45.7" height="12.3" fill="#000"/><text x="600" y="416.5" font-size="13" fill="#c8c8c8" text-anchor="middle" font-family="Liberation Sans, sans-serif">-60 ps</text><rect x="765.2" y="406.1" width="45.7" height="12.3" fill="#000"/><text x="788" y="416.5" font-size="13" fill="#c8c8c8" text-anchor="middle" font-family="Liberation Sans, sans-serif">-40 ps</text><rect x="952.2" y="406.1" width="45.7" height="12.3" fill="#000"/><text x="975" y="416.5" font-size="13" fill="#c8c8c8" text-anchor="middle" font-family="Liberation Sans, sans-serif">-20 ps</text><rect x="1151.1" y="406.1" width="23.8" height="12.3" fill="#000"/><text x="1163" y="416.5" font-size="13" fill="#c8c8c8" text-anchor="middle" font-family="Liberation Sans, sans-serif">0 s</text><rect x="1331.8" y="406.1" width="38.4" height="12.3" fill="#000"/><text x="1351" y="416.5" font-size="13" fill="#c8c8c8" text-anchor="middle" font-family="Liberation Sans, sans-serif">20 ps</text><rect x="1518.8" y="406.1" width="38.4" height="12.3" fill="#000"/><text x="1538" y="416.5" font-size="13" fill="#c8c8c8" text-anchor="middle" font-family="Liberation Sans, sans-serif">40 ps</text><rect x="1706.8" y="406.1" width="38.4" height="12.3" fill="#000"/><text x="1726" y="416.5" font-size="13" fill="#c8c8c8" text-anchor="middle" font-family="Liberation Sans, sans-serif">60 ps</text><text x="1745" y="150" font-size="13" fill="#c8c8c8" text-anchor="end" font-family="Liberation Sans, sans-serif" stroke="#000" stroke-width="2.5" paint-order="stroke" stroke-linejoin="round">200 mV</text><text x="1745" y="254" font-size="13" fill="#c8c8c8" text-anchor="end" font-family="Liberation Sans, sans-serif" stroke="#000" stroke-width="2.5" paint-order="stroke" stroke-linejoin="round">0 V</text><text x="1745" y="359" font-size="13" fill="#c8c8c8" text-anchor="end" font-family="Liberation Sans, sans-serif" stroke="#000" stroke-width="2.5" paint-order="stroke" stroke-linejoin="round">-200 mV</text><text x="585" y="351" font-size="13" fill="#ffffff" text-anchor="start" font-family="Liberation Sans, sans-serif" stroke="#000" stroke-width="2.5" paint-order="stroke" stroke-linejoin="round">Eye:</text><text x="585" y="371" font-size="13" fill="#ffffff" text-anchor="start" font-family="Liberation Sans, sans-serif" stroke="#000" stroke-width="2.5" paint-order="stroke" stroke-linejoin="round">Mid-level:</text><text x="657" y="371" font-size="13" fill="#ffffff" text-anchor="start" font-family="Liberation Sans, sans-serif" stroke="#000" stroke-width="2.5" paint-order="stroke" stroke-linejoin="round">-0.00364566 V</text><text x="585" y="391" font-size="13" fill="#ffffff" text-anchor="start" font-family="Liberation Sans, sans-serif" stroke="#000" stroke-width="2.5" paint-order="stroke" stroke-linejoin="round">UIs:</text><text x="617" y="391" font-size="13" fill="#ffffff" text-anchor="start" font-family="Liberation Sans, sans-serif" stroke="#000" stroke-width="2.5" paint-order="stroke" stroke-linejoin="round">6002/1.6e+06</text><text x="707" y="391" font-size="13" fill="#ffffff" text-anchor="start" font-family="Liberation Sans, sans-serif" stroke="#000" stroke-width="2.5" paint-order="stroke" stroke-linejoin="round">Total:</text><text x="750" y="391" font-size="13" fill="#ffffff" text-anchor="start" font-family="Liberation Sans, sans-serif" stroke="#000" stroke-width="2.5" paint-order="stroke" stroke-linejoin="round">6002/1.6e+06</text><path d="M1707 94H1741V128Z" fill="#5a5a5a"/><circle cx="1733.5" cy="100.5" r="4.4" fill="none" stroke="#b4b4b4" stroke-width="1.8"/><path d="M1730.3 103.7L1723.5 110.5" stroke="#b4b4b4" stroke-width="2.4" stroke-linecap="round"/></svg><svg style="position:absolute;left:575px;top:451px;overflow:hidden" width="1172" height="107" viewBox="575 451 1172 107" ><defs><linearGradient id="hg" x1="0" y1="0" x2="0" y2="1"><stop offset="0" stop-color="#e452e4"/><stop offset="1" stop-color="#a24ca2"/></linearGradient></defs><rect x="619" y="455" width="1.2" height="1.2" fill="#b8b8b8"/><rect x="619" y="475" width="1.2" height="1.2" fill="#b8b8b8"/><rect x="619" y="496" width="1.2" height="1.2" fill="#b8b8b8"/><rect x="619" y="516" width="1.2" height="1.2" fill="#b8b8b8"/><rect x="619" y="537" width="1.2" height="1.2" fill="#b8b8b8"/><rect x="790" y="455" width="1.2" height="1.2" fill="#b8b8b8"/><rect x="790" y="475" width="1.2" height="1.2" fill="#b8b8b8"/><rect x="790" y="496" width="1.2" height="1.2" fill="#b8b8b8"/><rect x="790" y="516" width="1.2" height="1.2" fill="#b8b8b8"/><rect x="790" y="537" width="1.2" height="1.2" fill="#b8b8b8"/><rect x="962" y="455" width="1.2" height="1.2" fill="#b8b8b8"/><rect x="962" y="475" width="1.2" height="1.2" fill="#b8b8b8"/><rect x="962" y="496" width="1.2" height="1.2" fill="#b8b8b8"/><rect x="962" y="516" width="1.2" height="1.2" fill="#b8b8b8"/><rect x="962" y="537" width="1.2" height="1.2" fill="#b8b8b8"/><rect x="1134" y="455" width="1.2" height="1.2" fill="#b8b8b8"/><rect x="1134" y="475" width="1.2" height="1.2" fill="#b8b8b8"/><rect x="1134" y="496" width="1.2" height="1.2" fill="#b8b8b8"/><rect x="1134" y="516" width="1.2" height="1.2" fill="#b8b8b8"/><rect x="1134" y="537" width="1.2" height="1.2" fill="#b8b8b8"/><rect x="1305" y="455" width="1.2" height="1.2" fill="#b8b8b8"/><rect x="1305" y="475" width="1.2" height="1.2" fill="#b8b8b8"/><rect x="1305" y="496" width="1.2" height="1.2" fill="#b8b8b8"/><rect x="1305" y="516" width="1.2" height="1.2" fill="#b8b8b8"/><rect x="1305" y="537" width="1.2" height="1.2" fill="#b8b8b8"/><rect x="1476" y="455" width="1.2" height="1.2" fill="#b8b8b8"/><rect x="1476" y="475" width="1.2" height="1.2" fill="#b8b8b8"/><rect x="1476" y="496" width="1.2" height="1.2" fill="#b8b8b8"/><rect x="1476" y="516" width="1.2" height="1.2" fill="#b8b8b8"/><rect x="1476" y="537" width="1.2" height="1.2" fill="#b8b8b8"/><rect x="1648" y="455" width="1.2" height="1.2" fill="#b8b8b8"/><rect x="1648" y="475" width="1.2" height="1.2" fill="#b8b8b8"/><rect x="1648" y="496" width="1.2" height="1.2" fill="#b8b8b8"/><rect x="1648" y="516" width="1.2" height="1.2" fill="#b8b8b8"/><rect x="1648" y="537" width="1.2" height="1.2" fill="#b8b8b8"/><path d="M700 558H690V556H693V558H696V558H699V558H702V558H705V558H708V558H711V558H714V558H717V557H720V558H723V558H726V558H729V558H732V558H735V556H738V558H741V556H744V556H747V558H750V556H753V556H756V558H759V556H762V557H765V556H768V555H771V557H774V556H777V555H780V555H783V556H786V555H789V555H792V555H795V556H798V555H801V555H804V555H807V555H810V554H813V554H816V554H819V553H822V553H825V553H828V552H831V552H834V551H837V551H840V549H843V549H846V549H849V549H852V549H855V547H858V546H861V546H864V546H867V545H870V544H873V543H876V542H879V541H882V540H885V540H888V539H891V536H894V536H897V534H900V535H903V534H906V532H909V531H912V529H915V529H918V526H921V526H924V524H927V522H930V521H933V519H936V518H939V516H942V515H945V513H948V511H951V509H954V509H957V508H960V505H963V503H966V501H969V501H972V499H975V498H978V495H981V494H984V492H987V490H990V490H993V488H996V486H999V484H1002V484H1005V482H1008V481H1011V479H1014V479H1017V478H1020V475H1023V474H1026V473H1029V472H1032V470H1035V471H1038V469H1041V468H1044V468H1047V467H1050V465H1053V464H1056V464H1059V464H1062V463H1065V461H1068V462H1071V462H1074V460H1077V460H1080V459H1083V458H1086V458H1089V459H1092V458H1095V458H1098V458H1101V458H1104V457H1107V457H1110V458H1113V457H1116V457H1119V457H1122V457H1125V457H1128V458H1131V457H1134V457H1137V457H1140V457H1143V457H1146V458H1149V457H1152V457H1155V458H1158V458H1161V458H1164V458H1167V458H1170V457H1173V458H1176V458H1179V460H1182V460H1185V460H1188V461H1191V462H1194V461H1197V461H1200V464H1203V463H1206V465H1209V465H1212V466H1215V467H1218V468H1221V468H1224V469H1227V470H1230V472H1233V473H1236V473H1239V475H1242V476H1245V477H1248V478H1251V480H1254V481H1257V483H1260V484H1263V485H1266V487H1269V488H1272V490H1275V491H1278V493H1281V495H1284V497H1287V498H1290V499H1293V502H1296V503H1299V505H1302V506H1305V507H1308V510H1311V512H1314V513H1317V514H1320V516H1323V516H1326V520H1329V521H1332V523H1335V523H1338V524H1341V527H1344V528H1347V529H1350V530H1353V530H1356V533H1359V534H1362V535H1365V537H1368V538H1371V538H1374V539H1377V541H1380V542H1383V542H1386V544H1389V543H1392V545H1395V545H1398V545H1401V547H1404V548H1407V547H1410V548H1413V549H1416V550H1419V549H1422V551H1425V552H1428V552H1431V551H1434V552H1437V553H1440V553H1443V553H1446V554H1449V553H1452V554H1455V555H1458V556H1461V555H1464V555H1467V555H1470V555H1473V555H1476V556H1479V556H1482V556H1485V556H1488V555H1491V556H1494V556H1497V555H1500V558H1503V556H1506V558H1509V556H1512V558H1515V556H1518V556H1521V556H1524V558H1527V558H1530V557H1533V558H1536V558H1539V558H1542V556H1545V558H1548V556H1551V558H1554V557H1557V558H1560V556H1563V558H1566V557H1569V558H1560V558Z" fill="url(#hg)"/><path d="M585.6999999999999 451V457M619.9999999999999 451V461M654.2999999999998 451V457M688.5999999999998 451V457M722.8999999999997 451V457M757.1999999999997 451V457M791.4999999999997 451V461M825.7999999999996 451V457M860.0999999999996 451V457M894.3999999999995 451V457M928.6999999999995 451V457M962.9999999999994 451V461M997.2999999999994 451V457M1031.5999999999995 451V457M1065.8999999999994 451V457M1100.1999999999994 451V457M1134.4999999999993 451V461M1168.7999999999993 451V457M1203.0999999999992 451V457M1237.3999999999992 451V457M1271.6999999999991 451V457M1305.999999999999 451V461M1340.299999999999 451V457M1374.599999999999 451V457M1408.899999999999 451V457M1443.199999999999 451V457M1477.4999999999989 451V461M1511.7999999999988 451V457M1546.0999999999988 451V457M1580.3999999999987 451V457M1614.6999999999987 451V457M1648.9999999999986 451V461M1683.2999999999986 451V457M1717.5999999999985 451V457" stroke="#d8d8d8" stroke-width="1"/><path d="M585.6999999999999 558V552M619.9999999999999 558V548M654.2999999999998 558V552M688.5999999999998 558V552M722.8999999999997 558V552M757.1999999999997 558V552M791.4999999999997 558V548M825.7999999999996 558V552M860.0999999999996 558V552M894.3999999999995 558V552M928.6999999999995 558V552M962.9999999999994 558V548M997.2999999999994 558V552M1031.5999999999995 558V552M1065.8999999999994 558V552M1100.1999999999994 558V552M1134.4999999999993 558V548M1168.7999999999993 558V552M1203.0999999999992 558V552M1237.3999999999992 558V552M1271.6999999999991 558V552M1305.999999999999 558V548M1340.299999999999 558V552M1374.599999999999 558V552M1408.899999999999 558V552M1443.199999999999 558V552M1477.4999999999989 558V548M1511.7999999999988 558V552M1546.0999999999988 558V552M1580.3999999999987 558V552M1614.6999999999987 558V552M1648.9999999999986 558V548M1683.2999999999986 558V552M1717.5999999999985 558V552" stroke="#d8d8d8" stroke-width="1"/><path d="M575 455.5H584M575 475.5H584M575 496.5H584M575 516.5H584M575 537.5H584" stroke="#d8d8d8" stroke-width="1"/><path d="M1738 455.5H1747M1738 475.5H1747M1738 496.5H1747M1738 516.5H1747M1738 537.5H1747" stroke="#d8d8d8" stroke-width="1"/><text x="619" y="556" font-size="13" fill="#c8c8c8" text-anchor="middle" font-family="Liberation Sans, sans-serif">-3 ps</text><text x="790" y="556" font-size="13" fill="#c8c8c8" text-anchor="middle" font-family="Liberation Sans, sans-serif">-2 ps</text><text x="962" y="556" font-size="13" fill="#c8c8c8" text-anchor="middle" font-family="Liberation Sans, sans-serif">-1 ps</text><text x="1133" y="556" font-size="13" fill="#c8c8c8" text-anchor="middle" font-family="Liberation Sans, sans-serif">0 s</text><text x="1305" y="556" font-size="13" fill="#c8c8c8" text-anchor="middle" font-family="Liberation Sans, sans-serif">1 ps</text><text x="1476" y="556" font-size="13" fill="#c8c8c8" text-anchor="middle" font-family="Liberation Sans, sans-serif">2 ps</text><text x="1647" y="556" font-size="13" fill="#c8c8c8" text-anchor="middle" font-family="Liberation Sans, sans-serif">3 ps</text><path d="M1707 458H1741V492Z" fill="#5a5a5a"/><circle cx="1733.5" cy="464.5" r="4.4" fill="none" stroke="#b4b4b4" stroke-width="1.8"/><path d="M1730.3 467.7L1723.5 474.5" stroke="#b4b4b4" stroke-width="2.4" stroke-linecap="round"/></svg><svg style="position:absolute;left:6px;top:591px;overflow:hidden" width="1742" height="24" viewBox="6 591 1742 24" ><line x1="41.5" y1="591" x2="41.5" y2="615" stroke="#c8b830" stroke-width="1" stroke-dasharray="1 2" stroke-dashoffset="0"/><line x1="76.5" y1="591" x2="76.5" y2="615" stroke="#c8b830" stroke-width="1" stroke-dasharray="1 2" stroke-dashoffset="0"/><line x1="111.5" y1="591" x2="111.5" y2="615" stroke="#c8b830" stroke-width="1" stroke-dasharray="1 2" stroke-dashoffset="0"/><line x1="146.5" y1="591" x2="146.5" y2="615" stroke="#c8b830" stroke-width="1" stroke-dasharray="1 2" stroke-dashoffset="0"/><line x1="181.5" y1="591" x2="181.5" y2="615" stroke="#c8b830" stroke-width="1" stroke-dasharray="1 2" stroke-dashoffset="0"/><line x1="215.5" y1="591" x2="215.5" y2="615" stroke="#c8b830" stroke-width="1" stroke-dasharray="1 2" stroke-dashoffset="0"/><line x1="250.5" y1="591" x2="250.5" y2="615" stroke="#c8b830" stroke-width="1" stroke-dasharray="1 2" stroke-dashoffset="0"/><line x1="285.5" y1="591" x2="285.5" y2="615" stroke="#c8b830" stroke-width="1" stroke-dasharray="1 2" stroke-dashoffset="0"/><line x1="320.5" y1="591" x2="320.5" y2="615" stroke="#c8b830" stroke-width="1" stroke-dasharray="1 2" stroke-dashoffset="0"/><line x1="355.5" y1="591" x2="355.5" y2="615" stroke="#c8b830" stroke-width="1" stroke-dasharray="1 2" stroke-dashoffset="0"/><line x1="390.5" y1="591" x2="390.5" y2="615" stroke="#c8b830" stroke-width="1" stroke-dasharray="1 2" stroke-dashoffset="0"/><line x1="425.5" y1="591" x2="425.5" y2="615" stroke="#c8b830" stroke-width="1" stroke-dasharray="1 2" stroke-dashoffset="0"/><line x1="460.5" y1="591" x2="460.5" y2="615" stroke="#c8b830" stroke-width="1" stroke-dasharray="1 2" stroke-dashoffset="0"/><line x1="494.5" y1="591" x2="494.5" y2="615" stroke="#c8b830" stroke-width="1" stroke-dasharray="1 2" stroke-dashoffset="0"/><line x1="529.5" y1="591" x2="529.5" y2="615" stroke="#c8b830" stroke-width="1" stroke-dasharray="1 2" stroke-dashoffset="0"/><line x1="564.5" y1="591" x2="564.5" y2="615" stroke="#c8b830" stroke-width="1" stroke-dasharray="1 2" stroke-dashoffset="0"/><line x1="599.5" y1="591" x2="599.5" y2="615" stroke="#c8b830" stroke-width="1" stroke-dasharray="1 2" stroke-dashoffset="0"/><line x1="634.5" y1="591" x2="634.5" y2="615" stroke="#c8b830" stroke-width="1" stroke-dasharray="1 2" stroke-dashoffset="0"/><line x1="669.5" y1="591" x2="669.5" y2="615" stroke="#c8b830" stroke-width="1" stroke-dasharray="1 2" stroke-dashoffset="0"/><line x1="704.5" y1="591" x2="704.5" y2="615" stroke="#c8b830" stroke-width="1" stroke-dasharray="1 2" stroke-dashoffset="0"/><line x1="739.5" y1="591" x2="739.5" y2="615" stroke="#c8b830" stroke-width="1" stroke-dasharray="1 2" stroke-dashoffset="0"/><line x1="773.5" y1="591" x2="773.5" y2="615" stroke="#c8b830" stroke-width="1" stroke-dasharray="1 2" stroke-dashoffset="0"/><line x1="808.5" y1="591" x2="808.5" y2="615" stroke="#c8b830" stroke-width="1" stroke-dasharray="1 2" stroke-dashoffset="0"/><line x1="843.5" y1="591" x2="843.5" y2="615" stroke="#c8b830" stroke-width="1" stroke-dasharray="1 2" stroke-dashoffset="0"/><line x1="878.5" y1="591" x2="878.5" y2="615" stroke="#c8b830" stroke-width="1" stroke-dasharray="1 2" stroke-dashoffset="0"/><line x1="913.5" y1="591" x2="913.5" y2="615" stroke="#c8b830" stroke-width="1" stroke-dasharray="1 2" stroke-dashoffset="0"/><line x1="948.5" y1="591" x2="948.5" y2="615" stroke="#c8b830" stroke-width="1" stroke-dasharray="1 2" stroke-dashoffset="0"/><line x1="983.5" y1="591" x2="983.5" y2="615" stroke="#c8b830" stroke-width="1" stroke-dasharray="1 2" stroke-dashoffset="0"/><line x1="1017.5" y1="591" x2="1017.5" y2="615" stroke="#c8b830" stroke-width="1" stroke-dasharray="1 2" stroke-dashoffset="0"/><line x1="1052.5" y1="591" x2="1052.5" y2="615" stroke="#c8b830" stroke-width="1" stroke-dasharray="1 2" stroke-dashoffset="0"/><line x1="1087.5" y1="591" x2="1087.5" y2="615" stroke="#c8b830" stroke-width="1" stroke-dasharray="1 2" stroke-dashoffset="0"/><line x1="1122.5" y1="591" x2="1122.5" y2="615" stroke="#c8b830" stroke-width="1" stroke-dasharray="1 2" stroke-dashoffset="0"/><line x1="1157.5" y1="591" x2="1157.5" y2="615" stroke="#c8b830" stroke-width="1" stroke-dasharray="1 2" stroke-dashoffset="0"/><line x1="1192.5" y1="591" x2="1192.5" y2="615" stroke="#c8b830" stroke-width="1" stroke-dasharray="1 2" stroke-dashoffset="0"/><line x1="1227.5" y1="591" x2="1227.5" y2="615" stroke="#c8b830" stroke-width="1" stroke-dasharray="1 2" stroke-dashoffset="0"/><line x1="1262.5" y1="591" x2="1262.5" y2="615" stroke="#c8b830" stroke-width="1" stroke-dasharray="1 2" stroke-dashoffset="0"/><line x1="1296.5" y1="591" x2="1296.5" y2="615" stroke="#c8b830" stroke-width="1" stroke-dasharray="1 2" stroke-dashoffset="0"/><line x1="1331.5" y1="591" x2="1331.5" y2="615" stroke="#c8b830" stroke-width="1" stroke-dasharray="1 2" stroke-dashoffset="0"/><line x1="1366.5" y1="591" x2="1366.5" y2="615" stroke="#c8b830" stroke-width="1" stroke-dasharray="1 2" stroke-dashoffset="0"/><line x1="1401.5" y1="591" x2="1401.5" y2="615" stroke="#c8b830" stroke-width="1" stroke-dasharray="1 2" stroke-dashoffset="0"/><line x1="1436.5" y1="591" x2="1436.5" y2="615" stroke="#c8b830" stroke-width="1" stroke-dasharray="1 2" stroke-dashoffset="0"/><line x1="1471.5" y1="591" x2="1471.5" y2="615" stroke="#c8b830" stroke-width="1" stroke-dasharray="1 2" stroke-dashoffset="0"/><line x1="1506.5" y1="591" x2="1506.5" y2="615" stroke="#c8b830" stroke-width="1" stroke-dasharray="1 2" stroke-dashoffset="0"/><line x1="1541.5" y1="591" x2="1541.5" y2="615" stroke="#c8b830" stroke-width="1" stroke-dasharray="1 2" stroke-dashoffset="0"/><line x1="1575.5" y1="591" x2="1575.5" y2="615" stroke="#c8b830" stroke-width="1" stroke-dasharray="1 2" stroke-dashoffset="0"/><line x1="1610.5" y1="591" x2="1610.5" y2="615" stroke="#c8b830" stroke-width="1" stroke-dasharray="1 2" stroke-dashoffset="0"/><line x1="1645.5" y1="591" x2="1645.5" y2="615" stroke="#c8b830" stroke-width="1" stroke-dasharray="1 2" stroke-dashoffset="0"/><line x1="1680.5" y1="591" x2="1680.5" y2="615" stroke="#c8b830" stroke-width="1" stroke-dasharray="1 2" stroke-dashoffset="0"/><line x1="1715.5" y1="591" x2="1715.5" y2="615" stroke="#c8b830" stroke-width="1" stroke-dasharray="1 2" stroke-dashoffset="0"/><line x1="180.6" y1="591" x2="180.6" y2="615" stroke="#d0c040" stroke-width="1"/><line x1="355.0" y1="591" x2="355.0" y2="615" stroke="#d0c040" stroke-width="1"/><line x1="529.3" y1="591" x2="529.3" y2="615" stroke="#d0c040" stroke-width="1"/><line x1="703.6" y1="591" x2="703.6" y2="615" stroke="#d0c040" stroke-width="1"/><line x1="878.0" y1="591" x2="878.0" y2="615" stroke="#d0c040" stroke-width="1"/><line x1="1052.3" y1="591" x2="1052.3" y2="615" stroke="#d0c040" stroke-width="1"/><line x1="1226.7" y1="591" x2="1226.7" y2="615" stroke="#d0c040" stroke-width="1"/><line x1="1401.0" y1="591" x2="1401.0" y2="615" stroke="#d0c040" stroke-width="1"/><line x1="1575.4" y1="591" x2="1575.4" y2="615" stroke="#d0c040" stroke-width="1"/><text x="180.60000000000002" y="611.5" font-size="13" fill="#5a5530" text-anchor="middle" font-family="Liberation Sans, sans-serif">-40 μs</text><text x="354.95000000000005" y="611.5" font-size="13" fill="#5a5530" text-anchor="middle" font-family="Liberation Sans, sans-serif">-30 μs</text><text x="529.3" y="611.5" font-size="13" fill="#5a5530" text-anchor="middle" font-family="Liberation Sans, sans-serif">-20 μs</text><text x="703.65" y="611.5" font-size="13" fill="#5a5530" text-anchor="middle" font-family="Liberation Sans, sans-serif">-10 μs</text><text x="1052.35" y="611.5" font-size="13" fill="#5a5530" text-anchor="middle" font-family="Liberation Sans, sans-serif">10 μs</text><text x="1226.7" y="611.5" font-size="13" fill="#5a5530" text-anchor="middle" font-family="Liberation Sans, sans-serif">20 μs</text><text x="1401.05" y="611.5" font-size="13" fill="#5a5530" text-anchor="middle" font-family="Liberation Sans, sans-serif">30 μs</text><text x="1575.4" y="611.5" font-size="13" fill="#5a5530" text-anchor="middle" font-family="Liberation Sans, sans-serif">40 μs</text><text x="13" y="605" font-size="9" fill="#333" text-anchor="start" font-family="Liberation Sans, sans-serif">C 1</text></svg><svg style="position:absolute;left:860px;top:586px" width="36" height="32" viewBox="860 586 36 32"><path d="M867 589H887L877 598.5Z" fill="#f08a30"/><rect x="868" y="599.5" width="18" height="16" fill="#000" stroke="#e8873a" stroke-width="2"/><text x="877" y="613" font-size="13" font-weight="700" fill="#e8903a" text-anchor="middle" font-family="Liberation Sans">T</text></svg><svg style="position:absolute;left:6px;top:641px;overflow:hidden" width="1742" height="81" viewBox="6 641 1742 81" ><line x1="41.5" y1="649" x2="41.5" y2="720" stroke="#7a7a7a" stroke-width="1" stroke-dasharray="1 7" stroke-dashoffset="0"/><line x1="75.5" y1="649" x2="75.5" y2="720" stroke="#7a7a7a" stroke-width="1" stroke-dasharray="1 7" stroke-dashoffset="0"/><line x1="110.5" y1="649" x2="110.5" y2="720" stroke="#7a7a7a" stroke-width="1" stroke-dasharray="1 7" stroke-dashoffset="0"/><line x1="145.5" y1="649" x2="145.5" y2="720" stroke="#7a7a7a" stroke-width="1" stroke-dasharray="1 7" stroke-dashoffset="0"/><line x1="180.5" y1="643" x2="180.5" y2="720" stroke="#8a8a8a" stroke-width="1" stroke-dasharray="1 3" stroke-dashoffset="0"/><line x1="215.5" y1="649" x2="215.5" y2="720" stroke="#7a7a7a" stroke-width="1" stroke-dasharray="1 7" stroke-dashoffset="0"/><line x1="250.5" y1="649" x2="250.5" y2="720" stroke="#7a7a7a" stroke-width="1" stroke-dasharray="1 7" stroke-dashoffset="0"/><line x1="285.5" y1="649" x2="285.5" y2="720" stroke="#7a7a7a" stroke-width="1" stroke-dasharray="1 7" stroke-dashoffset="0"/><line x1="319.5" y1="649" x2="319.5" y2="720" stroke="#7a7a7a" stroke-width="1" stroke-dasharray="1 7" stroke-dashoffset="0"/><line x1="354.5" y1="643" x2="354.5" y2="720" stroke="#8a8a8a" stroke-width="1" stroke-dasharray="1 3" stroke-dashoffset="0"/><line x1="389.5" y1="649" x2="389.5" y2="720" stroke="#7a7a7a" stroke-width="1" stroke-dasharray="1 7" stroke-dashoffset="0"/><line x1="424.5" y1="649" x2="424.5" y2="720" stroke="#7a7a7a" stroke-width="1" stroke-dasharray="1 7" stroke-dashoffset="0"/><line x1="459.5" y1="649" x2="459.5" y2="720" stroke="#7a7a7a" stroke-width="1" stroke-dasharray="1 7" stroke-dashoffset="0"/><line x1="494.5" y1="649" x2="494.5" y2="720" stroke="#7a7a7a" stroke-width="1" stroke-dasharray="1 7" stroke-dashoffset="0"/><line x1="529.5" y1="643" x2="529.5" y2="720" stroke="#8a8a8a" stroke-width="1" stroke-dasharray="1 3" stroke-dashoffset="0"/><line x1="564.5" y1="649" x2="564.5" y2="720" stroke="#7a7a7a" stroke-width="1" stroke-dasharray="1 7" stroke-dashoffset="0"/><line x1="598.5" y1="649" x2="598.5" y2="720" stroke="#7a7a7a" stroke-width="1" stroke-dasharray="1 7" stroke-dashoffset="0"/><line x1="633.5" y1="649" x2="633.5" y2="720" stroke="#7a7a7a" stroke-width="1" stroke-dasharray="1 7" stroke-dashoffset="0"/><line x1="668.5" y1="649" x2="668.5" y2="720" stroke="#7a7a7a" stroke-width="1" stroke-dasharray="1 7" stroke-dashoffset="0"/><line x1="703.5" y1="643" x2="703.5" y2="720" stroke="#8a8a8a" stroke-width="1" stroke-dasharray="1 3" stroke-dashoffset="0"/><line x1="738.5" y1="649" x2="738.5" y2="720" stroke="#7a7a7a" stroke-width="1" stroke-dasharray="1 7" stroke-dashoffset="0"/><line x1="773.5" y1="649" x2="773.5" y2="720" stroke="#7a7a7a" stroke-width="1" stroke-dasharray="1 7" stroke-dashoffset="0"/><line x1="808.5" y1="649" x2="808.5" y2="720" stroke="#7a7a7a" stroke-width="1" stroke-dasharray="1 7" stroke-dashoffset="0"/><line x1="843.5" y1="649" x2="843.5" y2="720" stroke="#7a7a7a" stroke-width="1" stroke-dasharray="1 7" stroke-dashoffset="0"/><line x1="877.5" y1="643" x2="877.5" y2="720" stroke="#8a8a8a" stroke-width="1" stroke-dasharray="1 3" stroke-dashoffset="0"/><line x1="912.5" y1="649" x2="912.5" y2="720" stroke="#7a7a7a" stroke-width="1" stroke-dasharray="1 7" stroke-dashoffset="0"/><line x1="947.5" y1="649" x2="947.5" y2="720" stroke="#7a7a7a" stroke-width="1" stroke-dasharray="1 7" stroke-dashoffset="0"/><line x1="982.5" y1="649" x2="982.5" y2="720" stroke="#7a7a7a" stroke-width="1" stroke-dasharray="1 7" stroke-dashoffset="0"/><line x1="1017.5" y1="649" x2="1017.5" y2="720" stroke="#7a7a7a" stroke-width="1" stroke-dasharray="1 7" stroke-dashoffset="0"/><line x1="1052.5" y1="643" x2="1052.5" y2="720" stroke="#8a8a8a" stroke-width="1" stroke-dasharray="1 3" stroke-dashoffset="0"/><line x1="1087.5" y1="649" x2="1087.5" y2="720" stroke="#7a7a7a" stroke-width="1" stroke-dasharray="1 7" stroke-dashoffset="0"/><line x1="1121.5" y1="649" x2="1121.5" y2="720" stroke="#7a7a7a" stroke-width="1" stroke-dasharray="1 7" stroke-dashoffset="0"/><line x1="1156.5" y1="649" x2="1156.5" y2="720" stroke="#7a7a7a" stroke-width="1" stroke-dasharray="1 7" stroke-dashoffset="0"/><line x1="1191.5" y1="649" x2="1191.5" y2="720" stroke="#7a7a7a" stroke-width="1" stroke-dasharray="1 7" stroke-dashoffset="0"/><line x1="1226.5" y1="643" x2="1226.5" y2="720" stroke="#8a8a8a" stroke-width="1" stroke-dasharray="1 3" stroke-dashoffset="0"/><line x1="1261.5" y1="649" x2="1261.5" y2="720" stroke="#7a7a7a" stroke-width="1" stroke-dasharray="1 7" stroke-dashoffset="0"/><line x1="1296.5" y1="649" x2="1296.5" y2="720" stroke="#7a7a7a" stroke-width="1" stroke-dasharray="1 7" stroke-dashoffset="0"/><line x1="1331.5" y1="649" x2="1331.5" y2="720" stroke="#7a7a7a" stroke-width="1" stroke-dasharray="1 7" stroke-dashoffset="0"/><line x1="1366.5" y1="649" x2="1366.5" y2="720" stroke="#7a7a7a" stroke-width="1" stroke-dasharray="1 7" stroke-dashoffset="0"/><line x1="1400.5" y1="643" x2="1400.5" y2="720" stroke="#8a8a8a" stroke-width="1" stroke-dasharray="1 3" stroke-dashoffset="0"/><line x1="1435.5" y1="649" x2="1435.5" y2="720" stroke="#7a7a7a" stroke-width="1" stroke-dasharray="1 7" stroke-dashoffset="0"/><line x1="1470.5" y1="649" x2="1470.5" y2="720" stroke="#7a7a7a" stroke-width="1" stroke-dasharray="1 7" stroke-dashoffset="0"/><line x1="1505.5" y1="649" x2="1505.5" y2="720" stroke="#7a7a7a" stroke-width="1" stroke-dasharray="1 7" stroke-dashoffset="0"/><line x1="1540.5" y1="649" x2="1540.5" y2="720" stroke="#7a7a7a" stroke-width="1" stroke-dasharray="1 7" stroke-dashoffset="0"/><line x1="1575.5" y1="643" x2="1575.5" y2="720" stroke="#8a8a8a" stroke-width="1" stroke-dasharray="1 3" stroke-dashoffset="0"/><line x1="1610.5" y1="649" x2="1610.5" y2="720" stroke="#7a7a7a" stroke-width="1" stroke-dasharray="1 7" stroke-dashoffset="0"/><line x1="1645.5" y1="649" x2="1645.5" y2="720" stroke="#7a7a7a" stroke-width="1" stroke-dasharray="1 7" stroke-dashoffset="0"/><line x1="1679.5" y1="649" x2="1679.5" y2="720" stroke="#7a7a7a" stroke-width="1" stroke-dasharray="1 7" stroke-dashoffset="0"/><line x1="1714.5" y1="649" x2="1714.5" y2="720" stroke="#7a7a7a" stroke-width="1" stroke-dasharray="1 7" stroke-dashoffset="0"/><line x1="6" y1="681.5" x2="1748" y2="681.5" stroke="#909090" stroke-width="1" stroke-dasharray="4 3"/><path d="M6.0 684.6L6.5 673.5L7.0 660.2L7.5 651.0L8.0 649.9L8.5 650.3L9.0 650.0L9.5 648.1L10.0 649.5L10.5 650.1L11.0 649.0L11.5 650.8L12.0 650.4L12.5 651.5L13.0 651.2L13.5 652.2L14.0 650.8L14.5 649.9L15.0 650.3L15.5 649.6L16.0 649.5L16.5 650.8L17.0 649.4L17.5 649.9L18.0 650.8L18.5 651.6L19.0 650.0L19.5 650.9L20.0 650.4L20.5 650.0L21.0 650.3L21.5 649.7L22.0 650.7L22.5 654.3L23.0 668.0L23.5 679.8L24.0 690.7L24.5 706.1L25.0 712.8L25.5 713.6L26.0 712.7L26.5 714.3L27.0 713.9L27.5 714.4L28.0 713.4L28.5 713.1L29.0 712.5L29.5 711.6L30.0 711.3L30.5 710.6L31.0 711.2L31.5 711.0L32.0 711.5L32.5 711.6L33.0 712.6L33.5 713.8L34.0 712.3L34.5 712.0L35.0 712.0L35.5 709.5L36.0 696.0L36.5 684.0L37.0 672.5L37.5 659.4L38.0 651.6L38.5 651.1L39.0 648.6L39.5 647.8L40.0 649.7L40.5 648.4L41.0 649.7L41.5 650.9L42.0 651.2L42.5 650.6L43.0 650.7L43.5 652.5L44.0 651.1L44.5 652.1L45.0 650.3L45.5 650.7L46.0 649.3L46.5 648.9L47.0 649.9L47.5 648.9L48.0 650.6L48.5 651.3L49.0 650.4L49.5 651.8L50.0 651.5L50.5 651.1L51.0 650.6L51.5 651.5L52.0 651.6L52.5 649.6L53.0 650.7L53.5 649.3L54.0 649.4L54.5 650.6L55.0 650.5L55.5 650.4L56.0 650.2L56.5 650.4L57.0 650.5L57.5 659.2L58.0 671.4L58.5 682.4L59.0 696.0L59.5 709.2L60.0 712.9L60.5 713.6L61.0 712.8L61.5 714.1L62.0 701.5L62.5 689.4L63.0 676.9L63.5 662.9L64.0 652.5L64.5 650.2L65.0 649.3L65.5 649.9L66.0 648.5L66.5 649.0L67.0 649.0L67.5 650.3L68.0 650.1L68.5 650.6L69.0 652.5L69.5 652.5L70.0 651.1L70.5 650.2L71.0 651.4L71.5 650.6L72.0 649.9L72.5 650.3L73.0 650.2L73.5 650.3L74.0 650.4L74.5 650.1L75.0 661.8L75.5 674.8L76.0 683.9L76.5 699.1L77.0 711.3L77.5 711.9L78.0 713.8L78.5 714.6L79.0 711.9L79.5 700.1L80.0 686.9L80.5 674.7L81.0 660.5L81.5 652.1L82.0 650.7L82.5 649.8L83.0 648.2L83.5 654.3L84.0 666.6L84.5 679.7L85.0 692.7L85.5 705.8L86.0 711.2L86.5 713.1L87.0 714.3L87.5 715.0L88.0 714.1L88.5 714.6L89.0 712.7L89.5 712.0L90.0 712.9L90.5 712.2L91.0 710.8L91.5 711.2L92.0 711.0L92.5 712.3L93.0 713.1L93.5 713.1L94.0 712.3L94.5 713.6L95.0 713.5L95.5 713.2L96.0 713.0L96.5 712.8L97.0 711.5L97.5 713.0L98.0 713.2L98.5 711.2L99.0 711.4L99.5 711.3L100.0 712.6L100.5 711.6L101.0 711.7L101.5 713.3L102.0 712.2L102.5 712.0L103.0 712.3L103.5 712.5L104.0 712.9L104.5 712.7L105.0 713.0L105.5 702.1L106.0 688.0L106.5 678.5L107.0 663.8L107.5 652.5L108.0 649.6L108.5 649.2L109.0 648.1L109.5 647.9L110.0 648.0L110.5 649.1L111.0 650.9L111.5 650.0L112.0 651.7L112.5 651.8L113.0 651.2L113.5 651.4L114.0 657.2L114.5 668.6L115.0 679.1L115.5 693.1L116.0 707.1L116.5 711.3L117.0 713.1L117.5 713.1L118.0 714.5L118.5 705.3L119.0 691.3L119.5 679.1L120.0 667.0L120.5 651.8L121.0 649.7L121.5 649.1L122.0 648.4L122.5 650.3L123.0 661.9L123.5 674.7L124.0 688.1L124.5 701.2L125.0 712.1L125.5 712.6L126.0 713.7L126.5 714.1L127.0 709.5L127.5 698.1L128.0 684.6L128.5 672.8L129.0 659.1L129.5 652.0L130.0 649.1L130.5 648.6L131.0 649.8L131.5 648.8L132.0 649.5L132.5 650.0L133.0 650.5L133.5 650.4L134.0 651.0L134.5 651.8L135.0 652.2L135.5 651.7L136.0 663.5L136.5 675.1L137.0 684.9L137.5 699.2L138.0 712.4L138.5 713.2L139.0 713.7L139.5 713.8L140.0 711.1L140.5 699.0L141.0 684.7L141.5 673.5L142.0 660.2L142.5 651.5L143.0 650.2L143.5 649.0L144.0 649.1L144.5 648.4L145.0 649.1L145.5 650.0L146.0 650.0L146.5 650.3L147.0 652.1L147.5 651.6L148.0 651.7L148.5 650.6L149.0 660.1L149.5 673.9L150.0 682.7L150.5 696.5L151.0 711.5L151.5 712.5L152.0 714.1L152.5 713.2L153.0 713.1L153.5 699.6L154.0 686.5L154.5 675.2L155.0 661.4L155.5 651.2L156.0 651.2L156.5 649.3L157.0 650.0L157.5 649.6L158.0 648.4L158.5 650.4L159.0 650.9L159.5 651.5L160.0 650.3L160.5 652.1L161.0 652.6L161.5 650.7L162.0 652.0L162.5 650.1L163.0 650.1L163.5 649.4L164.0 648.9L164.5 649.7L165.0 649.3L165.5 651.1L166.0 649.7L166.5 662.5L167.0 675.2L167.5 686.6L168.0 698.8L168.5 710.6L169.0 713.5L169.5 713.8L170.0 713.9L170.5 710.7L171.0 698.9L171.5 685.7L172.0 673.9L172.5 659.4L173.0 650.6L173.5 650.4L174.0 649.7L174.5 649.1L175.0 649.1L175.5 649.2L176.0 650.4L176.5 650.1L177.0 649.7L177.5 651.4L178.0 650.9L178.5 652.3L179.0 651.0L179.5 660.9L180.0 673.6L180.5 684.0L181.0 697.6L181.5 711.1L182.0 711.5L182.5 714.1L183.0 714.8L183.5 713.7L184.0 713.2L184.5 713.7L185.0 713.3L185.5 712.1L186.0 712.7L186.5 712.1L187.0 712.1L187.5 711.3L188.0 712.2L188.5 712.7L189.0 712.1L189.5 711.8L190.0 713.5L190.5 712.7L191.0 713.3L191.5 712.2L192.0 712.6L192.5 713.0L193.0 712.9L193.5 713.2L194.0 712.2L194.5 712.4L195.0 712.9L195.5 712.7L196.0 712.9L196.5 712.0L197.0 713.5L197.5 711.7L198.0 712.8L198.5 712.4L199.0 712.7L199.5 711.8L200.0 711.7L200.5 712.3L201.0 709.2L201.5 695.7L202.0 682.6L202.5 673.2L203.0 658.7L203.5 650.1L204.0 650.2L204.5 650.0L205.0 649.5L205.5 655.3L206.0 668.5L206.5 679.6L207.0 693.2L207.5 708.3L208.0 712.8L208.5 713.6L209.0 714.5L209.5 713.7L210.0 702.7L210.5 689.3L211.0 679.1L211.5 664.3L212.0 652.0L212.5 650.7L213.0 649.2L213.5 649.9L214.0 649.7L214.5 648.2L215.0 649.7L215.5 650.2L216.0 650.3L216.5 650.6L217.0 652.5L217.5 651.9L218.0 651.6L218.5 656.6L219.0 669.7L219.5 678.7L220.0 691.2L220.5 706.2L221.0 711.9L221.5 713.8L222.0 714.2L222.5 713.8L223.0 706.0L223.5 691.1L224.0 679.4L224.5 667.7L225.0 652.0L225.5 651.0L226.0 649.2L226.5 648.6L227.0 649.2L227.5 661.3L228.0 674.6L228.5 685.9L229.0 700.7L229.5 711.0L230.0 711.6L230.5 713.1L231.0 713.9L231.5 711.4L232.0 697.5L232.5 684.5L233.0 672.1L233.5 658.4L234.0 651.0L234.5 650.8L235.0 649.0L235.5 648.6L236.0 649.5L236.5 648.2L237.0 649.2L237.5 651.0L238.0 649.8L238.5 652.0L239.0 651.8L239.5 651.1L240.0 651.2L240.5 651.0L241.0 650.4L241.5 650.4L242.0 650.5L242.5 650.6L243.0 650.8L243.5 649.5L244.0 649.6L244.5 650.3L245.0 650.1L245.5 651.1L246.0 651.4L246.5 651.1L247.0 650.0L247.5 651.7L248.0 650.6L248.5 651.0L249.0 649.8L249.5 650.6L250.0 650.6L250.5 650.5L251.0 650.3L251.5 649.9L252.0 650.9L252.5 649.8L253.0 651.5L253.5 660.6L254.0 673.8L254.5 683.9L255.0 696.0L255.5 709.9L256.0 713.0L256.5 713.9L257.0 714.1L257.5 713.4L258.0 700.3L258.5 687.1L259.0 675.9L259.5 663.2L260.0 651.6L260.5 651.0L261.0 649.5L261.5 648.8L262.0 653.4L262.5 666.4L263.0 678.6L263.5 691.9L264.0 703.9L264.5 711.1L265.0 711.9L265.5 713.9L266.0 714.0L266.5 706.3L267.0 693.0L267.5 680.6L268.0 667.8L268.5 654.8L269.0 650.0L269.5 649.9L270.0 648.9L270.5 648.3L271.0 661.4L271.5 673.0L272.0 684.8L272.5 698.8L273.0 711.4L273.5 712.6L274.0 714.0L274.5 713.9L275.0 712.9L275.5 698.8L276.0 685.2L276.5 674.0L277.0 660.1L277.5 650.2L278.0 649.4L278.5 650.2L279.0 648.3L279.5 654.6L280.0 669.0L280.5 679.9L281.0 693.6L281.5 707.7L282.0 712.0L282.5 712.1L283.0 714.2L283.5 713.4L284.0 703.9L284.5 691.9L285.0 678.8L285.5 665.8L286.0 651.2L286.5 650.2L287.0 649.2L287.5 649.4L288.0 648.8L288.5 661.5L289.0 674.9L289.5 687.5L290.0 700.4L290.5 711.7L291.0 713.5L291.5 714.5L292.0 715.0L292.5 714.9L293.0 714.8L293.5 713.6L294.0 712.6L294.5 712.3L295.0 712.1L295.5 711.2L296.0 711.9L296.5 711.6L297.0 711.3L297.5 712.4L298.0 713.3L298.5 712.0L299.0 712.6L299.5 713.4L300.0 713.3L300.5 712.8L301.0 712.5L301.5 713.1L302.0 713.3L302.5 712.8L303.0 711.5L303.5 712.9L304.0 712.3L304.5 713.1L305.0 713.2L305.5 713.4L306.0 712.9L306.5 713.5L307.0 713.7L307.5 713.5L308.0 713.3L308.5 712.5L309.0 713.4L309.5 713.4L310.0 712.5L310.5 712.6L311.0 712.0L311.5 713.4L312.0 712.7L312.5 712.8L313.0 713.6L313.5 711.6L314.0 713.2L314.5 703.2L315.0 689.4L315.5 679.9L316.0 665.3L316.5 652.1L317.0 651.4L317.5 650.7L318.0 648.6L318.5 650.3L319.0 662.2L319.5 676.2L320.0 686.8L320.5 701.8L321.0 712.2L321.5 713.2L322.0 712.8L322.5 713.8L323.0 709.8L323.5 697.2L324.0 682.6L324.5 670.3L325.0 657.4L325.5 652.1L326.0 651.1L326.5 650.2L327.0 649.6L327.5 658.3L328.0 671.5L328.5 681.8L329.0 694.8L329.5 710.1L330.0 711.2L330.5 713.2L331.0 713.2L331.5 713.3L332.0 713.2L332.5 714.8L333.0 713.7L333.5 712.4L334.0 711.1L334.5 712.6L335.0 711.9L335.5 710.7L336.0 709.5L336.5 696.3L337.0 683.9L337.5 672.7L338.0 658.5L338.5 651.9L339.0 649.6L339.5 648.9L340.0 648.2L340.5 655.5L341.0 667.9L341.5 680.7L342.0 694.0L342.5 708.2L343.0 711.5L343.5 713.1L344.0 714.3L344.5 714.9L345.0 703.1L345.5 690.1L346.0 678.3L346.5 665.4L347.0 651.6L347.5 651.3L348.0 649.2L348.5 650.1L349.0 650.3L349.5 662.7L350.0 676.1L350.5 689.0L351.0 702.4L351.5 711.0L352.0 712.4L352.5 712.7L353.0 713.3L353.5 709.2L354.0 695.1L354.5 683.8L355.0 671.3L355.5 657.5L356.0 651.9L356.5 650.2L357.0 648.3L357.5 649.7L358.0 648.7L358.5 649.9L359.0 650.5L359.5 649.9L360.0 651.4L360.5 652.2L361.0 652.3L361.5 651.2L362.0 651.2L362.5 652.1L363.0 651.3L363.5 649.3L364.0 650.6L364.5 649.8L365.0 650.1L365.5 649.4L366.0 649.9L366.5 649.8L367.0 650.5L367.5 651.5L368.0 651.6L368.5 651.8L369.0 650.1L369.5 651.5L370.0 651.6L370.5 649.4L371.0 658.2L371.5 669.6L372.0 681.7L372.5 694.3L373.0 708.7L373.5 711.5L374.0 712.9L374.5 713.5L375.0 713.6L375.5 713.4L376.0 714.2L376.5 713.1L377.0 712.8L377.5 713.0L378.0 711.0L378.5 711.3L379.0 710.8L379.5 710.5L380.0 697.2L380.5 684.8L381.0 673.9L381.5 661.7L382.0 651.6L382.5 650.3L383.0 650.4L383.5 648.8L384.0 653.8L384.5 667.6L385.0 678.8L385.5 692.3L386.0 706.9L386.5 712.4L387.0 711.9L387.5 714.1L388.0 714.3L388.5 705.8L389.0 692.3L389.5 680.8L390.0 665.6L390.5 652.2L391.0 649.9L391.5 648.7L392.0 648.9L392.5 647.9L393.0 648.8L393.5 649.4L394.0 648.8L394.5 649.5L395.0 650.0L395.5 651.4L396.0 650.9L396.5 651.7L397.0 650.2L397.5 650.0L398.0 651.0L398.5 649.3L399.0 650.7L399.5 650.7L400.0 649.4L400.5 650.5L401.0 650.2L401.5 657.8L402.0 672.2L402.5 680.7L403.0 695.2L403.5 708.6L404.0 712.5L404.5 712.6L405.0 713.3L405.5 714.6L406.0 703.7L406.5 690.0L407.0 678.1L407.5 665.3L408.0 652.3L408.5 649.9L409.0 649.2L409.5 648.0L410.0 647.7L410.5 648.1L411.0 649.6L411.5 650.6L412.0 650.9L412.5 651.1L413.0 651.3L413.5 651.4L414.0 651.8L414.5 650.5L415.0 651.3L415.5 650.6L416.0 649.3L416.5 649.3L417.0 650.3L417.5 650.5L418.0 649.4L418.5 651.3L419.0 661.0L419.5 673.2L420.0 683.3L420.5 697.6L421.0 711.7L421.5 713.0L422.0 712.7L422.5 714.0L423.0 713.2L423.5 713.5L424.0 712.7L424.5 714.2L425.0 713.3L425.5 713.1L426.0 711.8L426.5 711.8L427.0 712.5L427.5 711.6L428.0 713.0L428.5 712.9L429.0 713.3L429.5 712.4L430.0 713.3L430.5 713.6L431.0 713.9L431.5 712.9L432.0 712.2L432.5 711.9L433.0 711.3L433.5 711.4L434.0 712.7L434.5 713.0L435.0 711.8L435.5 711.9L436.0 712.6L436.5 712.0L437.0 712.6L437.5 713.2L438.0 713.4L438.5 713.6L439.0 712.2L439.5 711.6L440.0 711.5L440.5 712.4L441.0 712.0L441.5 711.5L442.0 711.8L442.5 712.3L443.0 712.7L443.5 712.5L444.0 713.3L444.5 713.3L445.0 705.8L445.5 692.2L446.0 683.0L446.5 669.9L447.0 656.2L447.5 651.0L448.0 649.3L448.5 649.3L449.0 647.8L449.5 649.6L450.0 649.5L450.5 649.6L451.0 650.5L451.5 650.1L452.0 650.6L452.5 650.6L453.0 651.3L453.5 652.3L454.0 650.8L454.5 650.5L455.0 650.3L455.5 650.5L456.0 649.4L456.5 649.0L457.0 650.9L457.5 649.8L458.0 655.4L458.5 668.2L459.0 680.4L459.5 690.5L460.0 705.0L460.5 712.6L461.0 712.0L461.5 714.4L462.0 714.4L462.5 713.5L463.0 714.3L463.5 713.9L464.0 711.8L464.5 711.3L465.0 712.2L465.5 711.7L466.0 711.9L466.5 712.4L467.0 700.3L467.5 686.2L468.0 678.0L468.5 664.1L469.0 652.1L469.5 651.4L470.0 649.5L470.5 648.5L471.0 648.1L471.5 648.6L472.0 648.7L472.5 651.0L473.0 651.0L473.5 650.1L474.0 652.3L474.5 652.0L475.0 651.5L475.5 651.7L476.0 650.7L476.5 651.5L477.0 650.7L477.5 648.9L478.0 650.6L478.5 649.0L479.0 650.8L479.5 649.2L480.0 660.6L480.5 673.8L481.0 684.9L481.5 698.6L482.0 710.8L482.5 713.1L483.0 714.0L483.5 713.2L484.0 712.1L484.5 700.9L485.0 685.6L485.5 674.9L486.0 661.6L486.5 652.2L487.0 650.5L487.5 648.4L488.0 649.4L488.5 654.6L489.0 667.7L489.5 681.1L490.0 692.3L490.5 704.8L491.0 712.9L491.5 713.6L492.0 712.8L492.5 713.1L493.0 713.2L493.5 714.5L494.0 713.7L494.5 711.8L495.0 712.2L495.5 711.3L496.0 711.9L496.5 712.5L497.0 712.0L497.5 698.9L498.0 686.3L498.5 676.6L499.0 663.2L499.5 651.4L500.0 650.5L500.5 649.5L501.0 648.3L501.5 652.8L502.0 665.0L502.5 677.6L503.0 689.4L503.5 704.6L504.0 710.9L504.5 712.1L505.0 714.4L505.5 714.6L506.0 714.9L506.5 714.9L507.0 712.4L507.5 713.1L508.0 711.5L508.5 712.6L509.0 712.6L509.5 710.7L510.0 711.0L510.5 700.0L511.0 688.1L511.5 678.4L512.0 664.3L512.5 652.5L513.0 650.5L513.5 649.8L514.0 649.8L514.5 648.6L515.0 649.3L515.5 649.3L516.0 650.1L516.5 650.9L517.0 651.3L517.5 651.2L518.0 650.5L518.5 650.5L519.0 650.4L519.5 650.2L520.0 651.0L520.5 649.1L521.0 650.5L521.5 650.7L522.0 649.9L522.5 649.6L523.0 650.6L523.5 650.2L524.0 651.2L524.5 649.8L525.0 651.0L525.5 650.9L526.0 650.7L526.5 649.8L527.0 649.4L527.5 650.3L528.0 663.3L528.5 675.8L529.0 687.6L529.5 700.5L530.0 710.8L530.5 712.0L531.0 714.4L531.5 713.3L532.0 710.7L532.5 696.4L533.0 684.3L533.5 673.0L534.0 658.6L534.5 650.3L535.0 650.3L535.5 648.5L536.0 648.4L536.5 656.6L537.0 669.9L537.5 681.1L538.0 694.7L538.5 708.6L539.0 711.9L539.5 712.3L540.0 713.6L540.5 714.9L541.0 703.5L541.5 690.0L542.0 677.8L542.5 665.3L543.0 652.4L543.5 650.9L544.0 650.1L544.5 650.1L545.0 648.7L545.5 648.0L546.0 649.2L546.5 649.4L547.0 649.8L547.5 650.3L548.0 650.5L548.5 651.7L549.0 651.1L549.5 652.0L550.0 650.0L550.5 650.8L551.0 650.2L551.5 649.1L552.0 650.3L552.5 650.6L553.0 649.4L553.5 650.1L554.0 661.0L554.5 674.2L555.0 683.5L555.5 697.8L556.0 709.8L556.5 713.0L557.0 713.8L557.5 714.2L558.0 713.8L558.5 701.0L559.0 687.3L559.5 675.6L560.0 662.4L560.5 652.2L561.0 649.3L561.5 649.1L562.0 649.9L562.5 653.0L563.0 665.5L563.5 678.3L564.0 691.9L564.5 705.8L565.0 712.0L565.5 713.1L566.0 712.8L566.5 713.4L567.0 706.7L567.5 693.3L568.0 681.3L568.5 667.2L569.0 654.9L569.5 651.0L570.0 650.7L570.5 648.8L571.0 649.8L571.5 659.5L572.0 673.7L572.5 685.2L573.0 699.8L573.5 712.1L574.0 712.6L574.5 712.6L575.0 713.9L575.5 714.7L576.0 713.0L576.5 713.3L577.0 713.0L577.5 713.1L578.0 712.4L578.5 710.7L579.0 712.3L579.5 711.5L580.0 711.5L580.5 712.5L581.0 711.9L581.5 711.9L582.0 712.3L582.5 712.6L583.0 713.7L583.5 713.9L584.0 712.9L584.5 702.9L585.0 690.1L585.5 678.6L586.0 666.5L586.5 651.3L587.0 649.7L587.5 650.5L588.0 648.2L588.5 649.8L589.0 663.2L589.5 676.5L590.0 688.5L590.5 701.1L591.0 711.9L591.5 711.9L592.0 712.8L592.5 715.0L593.0 714.4L593.5 714.3L594.0 714.3L594.5 713.5L595.0 712.9L595.5 711.5L596.0 711.9L596.5 712.3L597.0 712.2L597.5 703.7L598.0 690.9L598.5 681.7L599.0 667.2L599.5 654.5L600.0 650.4L600.5 649.6L601.0 649.8L601.5 648.3L602.0 661.1L602.5 674.0L603.0 685.5L603.5 699.1L604.0 711.6L604.5 713.5L605.0 712.8L605.5 713.2L606.0 714.2L606.5 713.9L607.0 714.2L607.5 712.2L608.0 712.1L608.5 712.5L609.0 710.9L609.5 710.4L610.0 711.9L610.5 710.7L611.0 712.2L611.5 713.2L612.0 712.4L612.5 713.4L613.0 712.6L613.5 712.9L614.0 713.8L614.5 712.6L615.0 711.7L615.5 712.3L616.0 712.1L616.5 711.3L617.0 712.3L617.5 712.3L618.0 712.2L618.5 711.8L619.0 712.1L619.5 699.5L620.0 685.2L620.5 675.0L621.0 661.9L621.5 650.5L622.0 649.5L622.5 649.4L623.0 647.9L623.5 648.1L624.0 648.4L624.5 649.9L625.0 651.1L625.5 650.2L626.0 650.6L626.5 651.8L627.0 651.6L627.5 651.3L628.0 660.3L628.5 671.9L629.0 682.1L629.5 696.0L630.0 710.4L630.5 712.2L631.0 713.6L631.5 713.4L632.0 714.9L632.5 714.4L633.0 714.5L633.5 713.4L634.0 712.5L634.5 712.9L635.0 712.6L635.5 711.5L636.0 712.2L636.5 708.5L637.0 696.6L637.5 684.2L638.0 672.9L638.5 658.3L639.0 650.3L639.5 650.1L640.0 649.6L640.5 649.8L641.0 649.3L641.5 649.4L642.0 648.6L642.5 650.9L643.0 649.7L643.5 651.2L644.0 651.6L644.5 652.1L645.0 650.4L645.5 651.8L646.0 650.6L646.5 650.3L647.0 650.7L647.5 650.5L648.0 648.8L648.5 649.3L649.0 649.6L649.5 651.0L650.0 665.9L650.5 677.7L651.0 687.7L651.5 702.5L652.0 711.8L652.5 711.7L653.0 713.9L653.5 713.5L654.0 714.9L654.5 713.7L655.0 714.1L655.5 712.9L656.0 712.6L656.5 711.1L657.0 711.0L657.5 711.5L658.0 711.2L658.5 712.0L659.0 711.6L659.5 713.1L660.0 712.8L660.5 712.9L661.0 713.4L661.5 714.0L662.0 713.6L662.5 712.4L663.0 713.1L663.5 711.7L664.0 712.1L664.5 711.1L665.0 711.4L665.5 711.8L666.0 712.7L666.5 713.5L667.0 708.9L667.5 695.6L668.0 682.4L668.5 673.2L669.0 659.6L669.5 650.1L670.0 649.6L670.5 649.4L671.0 648.4L671.5 656.9L672.0 669.2L672.5 680.6L673.0 694.2L673.5 708.9L674.0 713.0L674.5 712.9L675.0 713.0L675.5 715.0L676.0 704.1L676.5 690.7L677.0 677.6L677.5 664.9L678.0 651.6L678.5 649.5L679.0 649.4L679.5 649.6L680.0 648.4L680.5 650.0L681.0 649.8L681.5 649.4L682.0 651.2L682.5 652.0L683.0 651.4L683.5 651.9L684.0 650.4L684.5 652.1L685.0 650.2L685.5 650.7L686.0 649.5L686.5 650.1L687.0 649.5L687.5 650.3L688.0 650.7L688.5 650.4L689.0 649.9L689.5 651.0L690.0 651.4L690.5 651.1L691.0 651.7L691.5 651.2L692.0 650.5L692.5 650.4L693.0 650.4L693.5 663.9L694.0 677.4L694.5 688.0L695.0 700.9L695.5 712.3L696.0 712.5L696.5 714.0L697.0 713.5L697.5 710.0L698.0 696.8L698.5 683.3L699.0 672.1L699.5 658.6L700.0 651.5L700.5 651.1L701.0 648.7L701.5 648.9L702.0 649.7L702.5 648.1L703.0 649.4L703.5 649.9L704.0 650.9L704.5 652.0L705.0 650.4L705.5 652.3L706.0 651.7L706.5 661.5L707.0 675.9L707.5 685.2L708.0 698.8L708.5 712.0L709.0 711.6L709.5 713.6L710.0 715.0L710.5 711.9L711.0 699.9L711.5 685.1L712.0 673.1L712.5 659.3L713.0 652.2L713.5 649.8L714.0 649.8L714.5 649.0L715.0 649.2L715.5 649.4L716.0 650.3L716.5 649.8L717.0 651.6L717.5 650.2L718.0 652.5L718.5 650.5L719.0 652.1L719.5 661.8L720.0 673.0L720.5 683.4L721.0 696.4L721.5 710.8L722.0 712.1L722.5 714.2L723.0 713.5L723.5 714.2L724.0 713.1L724.5 714.8L725.0 714.1L725.5 712.2L726.0 711.1L726.5 711.8L727.0 711.0L727.5 711.4L728.0 707.6L728.5 694.9L729.0 682.0L729.5 672.8L730.0 658.4L730.5 650.5L731.0 650.6L731.5 649.4L732.0 649.4L732.5 649.1L733.0 648.7L733.5 649.0L734.0 649.2L734.5 650.8L735.0 651.9L735.5 651.8L736.0 652.5L736.5 651.9L737.0 662.8L737.5 675.2L738.0 686.2L738.5 699.9L739.0 712.4L739.5 713.2L740.0 713.4L740.5 714.5L741.0 710.7L741.5 698.3L742.0 685.5L742.5 673.6L743.0 660.8L743.5 650.7L744.0 649.7L744.5 649.7L745.0 648.4L745.5 655.7L746.0 669.0L746.5 680.6L747.0 694.1L747.5 707.0L748.0 711.8L748.5 712.6L749.0 714.6L749.5 713.6L750.0 714.2L750.5 714.1L751.0 713.3L751.5 712.9L752.0 712.8L752.5 711.9L753.0 711.2L753.5 711.0L754.0 710.8L754.5 712.7L755.0 711.5L755.5 712.1L756.0 712.5L756.5 712.1L757.0 713.9L757.5 712.4L758.0 711.9L758.5 713.4L759.0 712.2L759.5 711.2L760.0 712.6L760.5 711.4L761.0 711.3L761.5 712.5L762.0 713.2L762.5 713.2L763.0 703.4L763.5 691.5L764.0 681.3L764.5 667.5L765.0 652.6L765.5 651.3L766.0 650.8L766.5 648.2L767.0 649.2L767.5 649.1L768.0 648.2L768.5 650.2L769.0 651.3L769.5 650.1L770.0 651.9L770.5 652.1L771.0 650.5L771.5 651.9L772.0 650.1L772.5 650.9L773.0 650.7L773.5 650.6L774.0 649.8L774.5 649.8L775.0 650.2L775.5 650.2L776.0 657.7L776.5 669.7L777.0 679.5L777.5 693.3L778.0 706.9L778.5 713.1L779.0 713.6L779.5 714.4L780.0 714.9L780.5 702.6L781.0 689.5L781.5 677.8L782.0 665.1L782.5 652.4L783.0 650.7L783.5 650.6L784.0 648.2L784.5 649.3L785.0 649.3L785.5 648.3L786.0 650.5L786.5 649.6L787.0 651.4L787.5 651.0L788.0 652.4L788.5 650.6L789.0 651.5L789.5 651.2L790.0 650.2L790.5 650.0L791.0 650.5L791.5 650.7L792.0 649.7L792.5 651.1L793.0 649.5L793.5 650.8L794.0 651.4L794.5 651.2L795.0 651.7L795.5 651.3L796.0 650.7L796.5 650.8L797.0 650.9L797.5 650.8L798.0 663.0L798.5 675.2L799.0 686.5L799.5 699.4L800.0 711.6L800.5 713.4L801.0 714.2L801.5 713.3L802.0 714.3L802.5 714.3L803.0 713.6L803.5 712.3L804.0 712.7L804.5 712.2L805.0 711.9L805.5 712.5L806.0 711.5L806.5 711.9L807.0 712.2L807.5 712.7L808.0 712.9L808.5 712.6L809.0 713.8L809.5 712.0L810.0 713.7L810.5 711.9L811.0 713.2L811.5 711.6L812.0 712.7L812.5 713.0L813.0 712.1L813.5 711.5L814.0 711.6L814.5 711.7L815.0 709.8L815.5 699.0L816.0 685.4L816.5 675.3L817.0 660.2L817.5 651.4L818.0 649.7L818.5 648.8L819.0 647.8L819.5 648.4L820.0 648.2L820.5 649.3L821.0 651.0L821.5 649.8L822.0 652.0L822.5 652.4L823.0 650.8L823.5 651.9L824.0 650.8L824.5 651.8L825.0 651.0L825.5 649.6L826.0 650.9L826.5 649.8L827.0 649.0L827.5 650.7L828.0 649.9L828.5 650.0L829.0 650.5L829.5 650.3L830.0 650.5L830.5 651.9L831.0 651.4L831.5 650.5L832.0 649.4L832.5 651.0L833.0 650.1L833.5 651.1L834.0 649.5L834.5 650.5L835.0 650.4L835.5 650.2L836.0 651.4L836.5 650.1L837.0 650.0L837.5 649.8L838.0 651.1L838.5 651.1L839.0 651.2L839.5 649.6L840.0 650.6L840.5 650.7L841.0 650.4L841.5 650.1L842.0 650.9L842.5 650.9L843.0 649.9L843.5 649.9L844.0 650.9L844.5 651.4L845.0 649.6L845.5 650.0L846.0 650.3L846.5 650.7L847.0 649.5L847.5 650.7L848.0 651.1L848.5 651.4L849.0 650.8L849.5 650.3L850.0 650.8L850.5 649.5L851.0 650.2L851.5 650.6L852.0 650.2L852.5 650.3L853.0 650.2L853.5 650.5L854.0 650.5L854.5 660.2L855.0 672.4L855.5 684.0L856.0 696.2L856.5 711.1L857.0 711.6L857.5 714.2L858.0 713.9L858.5 714.3L859.0 713.7L859.5 714.4L860.0 713.7L860.5 713.4L861.0 711.9L861.5 711.5L862.0 712.5L862.5 712.2L863.0 712.4L863.5 711.1L864.0 712.6L864.5 712.7L865.0 713.5L865.5 712.8L866.0 712.4L866.5 712.6L867.0 713.8L867.5 712.6L868.0 712.3L868.5 713.2L869.0 711.5L869.5 712.5L870.0 712.7L870.5 712.1L871.0 712.3L871.5 712.6L872.0 711.9L872.5 712.7L873.0 713.1L873.5 713.6L874.0 712.5L874.5 712.8L875.0 712.4L875.5 712.7L876.0 710.8L876.5 697.9L877.0 684.7L877.5 674.5L878.0 659.2L878.5 651.0L879.0 650.8L879.5 648.9L880.0 648.6L880.5 649.7L881.0 648.5L881.5 650.1L882.0 649.0L882.5 651.5L883.0 651.6L883.5 652.0L884.0 650.8L884.5 650.7L885.0 650.9L885.5 651.5L886.0 650.5L886.5 649.6L887.0 650.9L887.5 649.0L888.0 649.2L888.5 649.2L889.0 649.9L889.5 650.3L890.0 649.7L890.5 651.4L891.0 651.3L891.5 651.6L892.0 651.4L892.5 649.9L893.0 651.3L893.5 654.5L894.0 668.1L894.5 679.9L895.0 691.0L895.5 704.9L896.0 711.2L896.5 713.9L897.0 714.2L897.5 714.4L898.0 706.0L898.5 692.2L899.0 680.2L899.5 667.0L900.0 652.8L900.5 650.3L901.0 650.1L901.5 649.1L902.0 648.3L902.5 648.2L903.0 649.5L903.5 650.1L904.0 650.1L904.5 651.5L905.0 650.5L905.5 652.6L906.0 651.2L906.5 651.3L907.0 651.6L907.5 650.4L908.0 650.3L908.5 649.0L909.0 649.0L909.5 649.7L910.0 649.2L910.5 649.4L911.0 651.2L911.5 650.0L912.0 650.1L912.5 649.8L913.0 650.3L913.5 651.0L914.0 651.3L914.5 650.2L915.0 651.0L915.5 649.8L916.0 650.1L916.5 649.6L917.0 650.6L917.5 650.8L918.0 649.6L918.5 650.2L919.0 650.9L919.5 651.8L920.0 665.0L920.5 677.4L921.0 688.0L921.5 702.1L922.0 710.7L922.5 711.9L923.0 713.0L923.5 714.5L924.0 714.9L924.5 713.5L925.0 712.9L925.5 712.6L926.0 713.0L926.5 711.4L927.0 711.5L927.5 711.7L928.0 711.4L928.5 712.0L929.0 711.9L929.5 712.0L930.0 711.8L930.5 713.9L931.0 713.0L931.5 712.1L932.0 712.5L932.5 712.5L933.0 699.1L933.5 687.8L934.0 676.1L934.5 662.9L935.0 651.3L935.5 650.8L936.0 649.3L936.5 649.8L937.0 652.1L937.5 665.7L938.0 677.6L938.5 689.5L939.0 703.9L939.5 711.3L940.0 713.1L940.5 713.6L941.0 714.8L941.5 706.3L942.0 693.4L942.5 681.8L943.0 669.8L943.5 654.4L944.0 651.9L944.5 649.8L945.0 649.2L945.5 649.8L946.0 649.0L946.5 648.3L947.0 649.4L947.5 650.7L948.0 650.2L948.5 651.6L949.0 650.7L949.5 651.7L950.0 652.2L950.5 650.0L951.0 651.5L951.5 650.8L952.0 649.4L952.5 650.7L953.0 649.8L953.5 649.2L954.0 650.0L954.5 656.2L955.0 668.4L955.5 678.3L956.0 692.2L956.5 705.8L957.0 712.4L957.5 713.2L958.0 712.7L958.5 713.1L959.0 715.3L959.5 714.6L960.0 714.0L960.5 712.1L961.0 712.8L961.5 712.5L962.0 710.9L962.5 712.2L963.0 710.6L963.5 699.1L964.0 685.6L964.5 675.6L965.0 663.3L965.5 650.8L966.0 650.6L966.5 650.1L967.0 650.0L967.5 648.3L968.0 648.8L968.5 649.8L969.0 649.2L969.5 651.2L970.0 651.2L970.5 652.3L971.0 651.9L971.5 650.6L972.0 658.7L972.5 672.0L973.0 681.7L973.5 694.2L974.0 708.8L974.5 711.4L975.0 714.1L975.5 713.0L976.0 713.9L976.5 713.5L977.0 714.2L977.5 714.2L978.0 713.4L978.5 711.8L979.0 712.7L979.5 712.3L980.0 710.9L980.5 708.8L981.0 696.3L981.5 683.8L982.0 674.1L982.5 659.7L983.0 650.8L983.5 650.1L984.0 649.6L984.5 650.0L985.0 655.5L985.5 668.3L986.0 679.5L986.5 693.6L987.0 705.5L987.5 711.9L988.0 712.5L988.5 712.9L989.0 714.7L989.5 713.3L990.0 712.9L990.5 713.9L991.0 713.6L991.5 711.5L992.0 710.9L992.5 710.8L993.0 711.7L993.5 711.4L994.0 712.8L994.5 712.9L995.0 712.9L995.5 712.4L996.0 714.0L996.5 712.2L997.0 714.0L997.5 711.8L998.0 713.2L998.5 711.7L999.0 711.5L999.5 711.1L1000.0 712.2L1000.5 711.8L1001.0 712.8L1001.5 711.7L1002.0 713.4L1002.5 711.8L1003.0 712.5L1003.5 713.7L1004.0 711.7L1004.5 713.0L1005.0 713.5L1005.5 713.0L1006.0 713.4L1006.5 712.8L1007.0 700.3L1007.5 686.8L1008.0 677.4L1008.5 663.3L1009.0 650.8L1009.5 650.0L1010.0 649.9L1010.5 649.6L1011.0 652.0L1011.5 664.2L1012.0 678.3L1012.5 688.7L1013.0 703.3L1013.5 711.6L1014.0 712.7L1014.5 713.3L1015.0 714.8L1015.5 714.7L1016.0 713.6L1016.5 714.1L1017.0 712.5L1017.5 711.3L1018.0 712.1L1018.5 710.5L1019.0 711.2L1019.5 710.6L1020.0 701.9L1020.5 688.8L1021.0 679.0L1021.5 666.5L1022.0 652.0L1022.5 650.4L1023.0 649.8L1023.5 648.7L1024.0 648.7L1024.5 661.9L1025.0 675.2L1025.5 688.3L1026.0 700.7L1026.5 711.4L1027.0 711.7L1027.5 714.6L1028.0 714.8L1028.5 708.7L1029.0 696.9L1029.5 682.8L1030.0 671.4L1030.5 658.1L1031.0 651.2L1031.5 649.9L1032.0 648.3L1032.5 648.8L1033.0 656.4L1033.5 670.7L1034.0 681.4L1034.5 695.1L1035.0 708.6L1035.5 711.4L1036.0 714.1L1036.5 712.8L1037.0 713.9L1037.5 714.7L1038.0 713.9L1038.5 714.1L1039.0 713.2L1039.5 711.3L1040.0 711.2L1040.5 710.7L1041.0 712.2L1041.5 709.7L1042.0 696.5L1042.5 683.8L1043.0 672.9L1043.5 660.1L1044.0 650.7L1044.5 650.0L1045.0 649.8L1045.5 648.3L1046.0 649.7L1046.5 648.8L1047.0 650.2L1047.5 651.1L1048.0 650.7L1048.5 651.1L1049.0 651.2L1049.5 651.8L1050.0 650.5L1050.5 650.5L1051.0 651.5L1051.5 651.4L1052.0 649.1L1052.5 650.1L1053.0 650.7L1053.5 650.7L1054.0 649.7L1054.5 652.2L1055.0 664.9L1055.5 677.4L1056.0 688.2L1056.5 701.2L1057.0 710.7L1057.5 712.1L1058.0 713.2L1058.5 713.8L1059.0 709.7L1059.5 695.9L1060.0 682.5L1060.5 671.0L1061.0 657.5L1061.5 650.5L1062.0 650.7L1062.5 648.8L1063.0 647.8L1063.5 649.8L1064.0 649.6L1064.5 648.5L1065.0 651.1L1065.5 650.1L1066.0 651.1L1066.5 652.4L1067.0 651.2L1067.5 652.4L1068.0 662.7L1068.5 676.4L1069.0 685.2L1069.5 698.9L1070.0 712.3L1070.5 712.8L1071.0 714.2L1071.5 713.4L1072.0 711.9L1072.5 698.9L1073.0 685.4L1073.5 672.2L1074.0 659.8L1074.5 651.5L1075.0 650.3L1075.5 649.3L1076.0 649.1L1076.5 654.8L1077.0 669.3L1077.5 680.6L1078.0 693.2L1078.5 708.3L1079.0 712.9L1079.5 712.4L1080.0 714.2L1080.5 713.3L1081.0 713.5L1081.5 714.1L1082.0 713.7L1082.5 713.6L1083.0 711.3L1083.5 711.8L1084.0 711.8L1084.5 712.2L1085.0 712.3L1085.5 711.2L1086.0 713.2L1086.5 712.6L1087.0 712.7L1087.5 713.1L1088.0 713.1L1088.5 713.2L1089.0 713.5L1089.5 706.6L1090.0 693.3L1090.5 684.0L1091.0 671.3L1091.5 656.1L1092.0 651.6L1092.5 650.7L1093.0 649.0L1093.5 648.1L1094.0 648.7L1094.5 649.9L1095.0 648.6L1095.5 651.0L1096.0 651.1L1096.5 650.2L1097.0 650.9L1097.5 651.0L1098.0 652.3L1098.5 650.3L1099.0 650.9L1099.5 651.4L1100.0 649.4L1100.5 649.0L1101.0 650.9L1101.5 650.1L1102.0 649.3L1102.5 650.8L1103.0 651.0L1103.5 650.2L1104.0 651.0L1104.5 649.8L1105.0 650.0L1105.5 649.9L1106.0 650.1L1106.5 651.1L1107.0 657.3L1107.5 670.4L1108.0 681.0L1108.5 694.2L1109.0 708.6L1109.5 712.8L1110.0 712.2L1110.5 714.1L1111.0 715.0L1111.5 713.1L1112.0 713.8L1112.5 712.9L1113.0 713.0L1113.5 712.9L1114.0 712.1L1114.5 710.8L1115.0 712.0L1115.5 708.9L1116.0 697.6L1116.5 683.8L1117.0 675.0L1117.5 660.8L1118.0 652.1L1118.5 651.0L1119.0 649.4L1119.5 649.2L1120.0 648.7L1120.5 649.6L1121.0 649.9L1121.5 650.4L1122.0 649.8L1122.5 652.1L1123.0 651.6L1123.5 650.8L1124.0 651.3L1124.5 651.7L1125.0 649.7L1125.5 651.2L1126.0 650.9L1126.5 651.0L1127.0 650.0L1127.5 649.2L1128.0 650.6L1128.5 650.8L1129.0 649.9L1129.5 651.7L1130.0 651.9L1130.5 650.5L1131.0 651.7L1131.5 650.7L1132.0 651.4L1132.5 650.2L1133.0 649.6L1133.5 650.4L1134.0 650.8L1134.5 650.0L1135.0 649.9L1135.5 651.4L1136.0 651.1L1136.5 650.9L1137.0 650.6L1137.5 658.9L1138.0 670.9L1138.5 681.9L1139.0 693.9L1139.5 708.9L1140.0 712.8L1140.5 714.1L1141.0 714.6L1141.5 714.8L1142.0 713.3L1142.5 714.0L1143.0 713.4L1143.5 711.7L1144.0 711.1L1144.5 711.1L1145.0 712.0L1145.5 711.9L1146.0 709.4L1146.5 697.3L1147.0 684.6L1147.5 674.5L1148.0 660.8L1148.5 650.7L1149.0 650.0L1149.5 649.5L1150.0 649.0L1150.5 648.5L1151.0 648.6L1151.5 650.5L1152.0 649.3L1152.5 650.8L1153.0 651.5L1153.5 650.5L1154.0 651.0L1154.5 651.7L1155.0 662.0L1155.5 673.6L1156.0 683.6L1156.5 697.3L1157.0 711.7L1157.5 712.2L1158.0 713.8L1158.5 713.3L1159.0 713.5L1159.5 701.0L1160.0 686.6L1160.5 675.8L1161.0 662.9L1161.5 651.8L1162.0 651.3L1162.5 649.7L1163.0 648.1L1163.5 647.8L1164.0 648.6L1164.5 650.2L1165.0 650.6L1165.5 651.2L1166.0 651.4L1166.5 651.1L1167.0 652.6L1167.5 651.5L1168.0 659.5L1168.5 671.5L1169.0 681.0L1169.5 695.4L1170.0 708.8L1170.5 712.7L1171.0 713.3L1171.5 713.6L1172.0 715.2L1172.5 714.1L1173.0 713.8L1173.5 714.0L1174.0 713.2L1174.5 711.4L1175.0 712.0L1175.5 712.1L1176.0 712.0L1176.5 711.7L1177.0 712.3L1177.5 712.7L1178.0 713.1L1178.5 713.6L1179.0 713.1L1179.5 712.9L1180.0 713.9L1180.5 712.6L1181.0 706.5L1181.5 691.9L1182.0 682.0L1182.5 670.4L1183.0 655.4L1183.5 651.2L1184.0 650.8L1184.5 648.4L1185.0 647.9L1185.5 658.4L1186.0 672.0L1186.5 682.8L1187.0 697.3L1187.5 710.9L1188.0 712.1L1188.5 712.5L1189.0 713.2L1189.5 713.6L1190.0 700.8L1190.5 686.8L1191.0 675.1L1191.5 661.9L1192.0 650.5L1192.5 649.6L1193.0 649.1L1193.5 648.9L1194.0 653.1L1194.5 667.3L1195.0 679.4L1195.5 692.5L1196.0 704.5L1196.5 711.7L1197.0 713.4L1197.5 714.4L1198.0 713.9L1198.5 705.7L1199.0 692.1L1199.5 681.7L1200.0 666.6L1200.5 653.7L1201.0 650.9L1201.5 649.3L1202.0 648.9L1202.5 648.9L1203.0 661.6L1203.5 674.5L1204.0 687.0L1204.5 700.1L1205.0 710.8L1205.5 713.4L1206.0 714.3L1206.5 713.2L1207.0 714.5L1207.5 714.0L1208.0 713.5L1208.5 712.6L1209.0 712.8L1209.5 711.3L1210.0 712.7L1210.5 710.7L1211.0 712.0L1211.5 704.7L1212.0 692.8L1212.5 682.0L1213.0 669.4L1213.5 655.1L1214.0 651.2L1214.5 649.2L1215.0 648.6L1215.5 649.5L1216.0 658.9L1216.5 671.7L1217.0 684.8L1217.5 698.5L1218.0 710.5L1218.5 711.4L1219.0 714.1L1219.5 713.3L1220.0 713.3L1220.5 714.6L1221.0 713.1L1221.5 713.6L1222.0 711.9L1222.5 712.0L1223.0 711.7L1223.5 712.3L1224.0 711.2L1224.5 711.3L1225.0 712.6L1225.5 713.5L1226.0 713.7L1226.5 713.6L1227.0 712.1L1227.5 712.6L1228.0 712.1L1228.5 712.2L1229.0 704.4L1229.5 690.7L1230.0 679.5L1230.5 666.2L1231.0 652.1L1231.5 650.0L1232.0 649.3L1232.5 648.5L1233.0 647.9L1233.5 649.0L1234.0 650.2L1234.5 650.2L1235.0 651.4L1235.5 651.4L1236.0 651.2L1236.5 652.0L1237.0 652.0L1237.5 652.2L1238.0 651.2L1238.5 650.5L1239.0 650.0L1239.5 649.0L1240.0 650.8L1240.5 650.4L1241.0 651.0L1241.5 649.3L1242.0 657.4L1242.5 670.5L1243.0 680.1L1243.5 695.3L1244.0 707.2L1244.5 712.5L1245.0 712.8L1245.5 714.0L1246.0 713.6L1246.5 714.6L1247.0 714.3L1247.5 713.9L1248.0 712.2L1248.5 712.2L1249.0 712.4L1249.5 711.8L1250.0 711.3L1250.5 712.0L1251.0 711.8L1251.5 711.6L1252.0 712.4L1252.5 712.3L1253.0 713.5L1253.5 712.3L1254.0 712.0L1254.5 712.7L1255.0 708.0L1255.5 694.8L1256.0 683.3L1256.5 669.7L1257.0 656.3L1257.5 650.9L1258.0 649.9L1258.5 650.1L1259.0 648.6L1259.5 647.7L1260.0 649.7L1260.5 649.4L1261.0 649.5L1261.5 650.5L1262.0 651.6L1262.5 652.1L1263.0 651.0L1263.5 650.5L1264.0 663.3L1264.5 676.8L1265.0 686.3L1265.5 699.8L1266.0 711.9L1266.5 712.1L1267.0 713.7L1267.5 714.7L1268.0 711.4L1268.5 696.8L1269.0 683.4L1269.5 673.3L1270.0 659.5L1270.5 651.5L1271.0 650.7L1271.5 648.8L1272.0 649.6L1272.5 648.6L1273.0 648.9L1273.5 649.9L1274.0 649.4L1274.5 650.9L1275.0 651.2L1275.5 651.1L1276.0 651.7L1276.5 652.1L1277.0 661.5L1277.5 674.4L1278.0 685.0L1278.5 698.7L1279.0 711.2L1279.5 712.9L1280.0 714.3L1280.5 713.9L1281.0 711.1L1281.5 699.9L1282.0 684.6L1282.5 674.3L1283.0 659.3L1283.5 650.6L1284.0 650.7L1284.5 650.0L1285.0 648.1L1285.5 653.7L1286.0 667.2L1286.5 679.3L1287.0 692.8L1287.5 706.1L1288.0 711.4L1288.5 712.3L1289.0 714.2L1289.5 713.4L1290.0 703.5L1290.5 691.1L1291.0 680.7L1291.5 666.8L1292.0 652.0L1292.5 650.8L1293.0 648.8L1293.5 648.8L1294.0 648.9L1294.5 663.1L1295.0 675.5L1295.5 686.8L1296.0 699.9L1296.5 710.8L1297.0 713.2L1297.5 713.5L1298.0 713.0L1298.5 710.8L1299.0 697.8L1299.5 684.2L1300.0 671.4L1300.5 658.5L1301.0 650.6L1301.5 649.4L1302.0 648.6L1302.5 649.9L1303.0 648.4L1303.5 648.4L1304.0 649.1L1304.5 649.4L1305.0 650.1L1305.5 651.0L1306.0 650.7L1306.5 651.4L1307.0 652.2L1307.5 651.5L1308.0 649.8L1308.5 650.7L1309.0 650.1L1309.5 649.1L1310.0 649.5L1310.5 649.3L1311.0 650.2L1311.5 653.0L1312.0 667.0L1312.5 679.8L1313.0 690.1L1313.5 703.0L1314.0 711.7L1314.5 713.7L1315.0 713.3L1315.5 715.0L1316.0 714.5L1316.5 715.0L1317.0 713.6L1317.5 713.7L1318.0 711.4L1318.5 712.1L1319.0 710.8L1319.5 711.6L1320.0 712.0L1320.5 711.2L1321.0 712.7L1321.5 712.6L1322.0 712.6L1322.5 712.0L1323.0 712.7L1323.5 714.0L1324.0 713.0L1324.5 710.8L1325.0 697.8L1325.5 685.8L1326.0 676.2L1326.5 662.2L1327.0 650.8L1327.5 651.0L1328.0 648.6L1328.5 649.5L1329.0 653.0L1329.5 666.1L1330.0 680.5L1330.5 691.5L1331.0 705.0L1331.5 712.5L1332.0 712.9L1332.5 713.4L1333.0 713.1L1333.5 714.7L1334.0 714.6L1334.5 713.4L1335.0 712.6L1335.5 712.3L1336.0 710.9L1336.5 712.2L1337.0 711.5L1337.5 711.7L1338.0 700.5L1338.5 687.4L1339.0 677.2L1339.5 663.8L1340.0 650.9L1340.5 649.4L1341.0 648.6L1341.5 649.6L1342.0 649.1L1342.5 647.9L1343.0 650.2L1343.5 650.8L1344.0 651.5L1344.5 650.1L1345.0 651.4L1345.5 651.7L1346.0 652.3L1346.5 657.1L1347.0 669.4L1347.5 679.9L1348.0 692.8L1348.5 707.3L1349.0 712.5L1349.5 713.8L1350.0 714.2L1350.5 714.9L1351.0 714.5L1351.5 714.8L1352.0 714.3L1352.5 711.9L1353.0 711.4L1353.5 711.0L1354.0 711.8L1354.5 711.6L1355.0 711.6L1355.5 711.4L1356.0 712.8L1356.5 712.7L1357.0 712.9L1357.5 712.4L1358.0 713.4L1358.5 714.1L1359.0 713.0L1359.5 706.7L1360.0 695.1L1360.5 681.1L1361.0 671.9L1361.5 657.8L1362.0 650.7L1362.5 650.9L1363.0 649.4L1363.5 648.7L1364.0 657.8L1364.5 670.2L1365.0 681.7L1365.5 696.4L1366.0 709.2L1366.5 711.7L1367.0 713.0L1367.5 713.7L1368.0 714.0L1368.5 713.6L1369.0 713.4L1369.5 713.7L1370.0 712.3L1370.5 711.6L1371.0 711.7L1371.5 710.6L1372.0 711.9L1372.5 711.6L1373.0 711.9L1373.5 712.2L1374.0 713.5L1374.5 712.7L1375.0 714.0L1375.5 713.0L1376.0 713.1L1376.5 712.3L1377.0 704.7L1377.5 691.3L1378.0 682.9L1378.5 668.0L1379.0 655.1L1379.5 650.8L1380.0 650.9L1380.5 648.4L1381.0 649.4L1381.5 660.2L1382.0 673.3L1382.5 685.1L1383.0 698.6L1383.5 711.9L1384.0 712.4L1384.5 713.6L1385.0 713.4L1385.5 713.3L1386.0 713.2L1386.5 714.0L1387.0 712.7L1387.5 712.0L1388.0 711.5L1388.5 711.8L1389.0 712.1L1389.5 711.0L1390.0 711.4L1390.5 712.4L1391.0 712.1L1391.5 713.8L1392.0 712.4L1392.5 712.3L1393.0 712.1L1393.5 713.8L1394.0 712.3L1394.5 711.9L1395.0 713.1L1395.5 711.9L1396.0 712.8L1396.5 712.8L1397.0 713.3L1397.5 712.8L1398.0 711.7L1398.5 712.4L1399.0 712.1L1399.5 711.7L1400.0 713.5L1400.5 711.9L1401.0 711.7L1401.5 712.2L1402.0 712.8L1402.5 713.1L1403.0 712.5L1403.5 712.6L1404.0 712.9L1404.5 712.1L1405.0 712.2L1405.5 713.1L1406.0 713.3L1406.5 712.6L1407.0 712.1L1407.5 712.1L1408.0 712.2L1408.5 711.6L1409.0 711.9L1409.5 712.6L1410.0 712.0L1410.5 712.1L1411.0 712.8L1411.5 713.2L1412.0 712.8L1412.5 712.0L1413.0 712.0L1413.5 712.9L1414.0 712.4L1414.5 713.4L1415.0 712.3L1415.5 712.6L1416.0 709.9L1416.5 696.7L1417.0 685.6L1417.5 673.2L1418.0 661.2L1418.5 650.2L1419.0 649.2L1419.5 650.0L1420.0 649.4L1420.5 655.4L1421.0 666.8L1421.5 678.8L1422.0 691.7L1422.5 705.9L1423.0 712.4L1423.5 712.4L1424.0 714.1L1424.5 714.5L1425.0 714.3L1425.5 713.5L1426.0 713.8L1426.5 712.6L1427.0 712.0L1427.5 711.1L1428.0 711.6L1428.5 711.7L1429.0 711.5L1429.5 712.1L1430.0 711.8L1430.5 713.6L1431.0 713.7L1431.5 714.1L1432.0 713.3L1432.5 712.3L1433.0 712.6L1433.5 712.3L1434.0 711.4L1434.5 711.5L1435.0 712.6L1435.5 712.7L1436.0 712.1L1436.5 712.9L1437.0 712.2L1437.5 713.5L1438.0 705.0L1438.5 691.4L1439.0 682.1L1439.5 668.8L1440.0 653.7L1440.5 651.4L1441.0 649.0L1441.5 648.9L1442.0 648.0L1442.5 660.4L1443.0 673.7L1443.5 685.9L1444.0 699.9L1444.5 710.5L1445.0 713.1L1445.5 714.3L1446.0 713.0L1446.5 714.1L1447.0 713.9L1447.5 712.8L1448.0 712.6L1448.5 713.0L1449.0 712.4L1449.5 711.3L1450.0 711.1L1450.5 712.1L1451.0 712.3L1451.5 712.1L1452.0 713.5L1452.5 712.2L1453.0 712.7L1453.5 713.9L1454.0 712.9L1454.5 712.7L1455.0 713.6L1455.5 702.7L1456.0 688.8L1456.5 679.5L1457.0 665.4L1457.5 652.6L1458.0 649.5L1458.5 649.3L1459.0 649.0L1459.5 649.9L1460.0 649.2L1460.5 650.3L1461.0 650.0L1461.5 651.1L1462.0 651.5L1462.5 651.8L1463.0 652.3L1463.5 652.0L1464.0 655.8L1464.5 669.1L1465.0 680.8L1465.5 690.4L1466.0 704.7L1466.5 711.0L1467.0 713.8L1467.5 713.3L1468.0 714.7L1468.5 713.3L1469.0 713.9L1469.5 712.9L1470.0 712.2L1470.5 713.0L1471.0 712.6L1471.5 710.8L1472.0 710.8L1472.5 711.8L1473.0 713.0L1473.5 713.3L1474.0 712.0L1474.5 712.5L1475.0 713.4L1475.5 712.7L1476.0 712.4L1476.5 713.9L1477.0 712.1L1477.5 711.4L1478.0 711.4L1478.5 711.3L1479.0 712.3L1479.5 712.0L1480.0 713.1L1480.5 711.8L1481.0 712.2L1481.5 706.3L1482.0 694.2L1482.5 683.5L1483.0 669.6L1483.5 654.7L1484.0 650.9L1484.5 649.1L1485.0 649.9L1485.5 649.4L1486.0 659.7L1486.5 672.8L1487.0 683.4L1487.5 697.8L1488.0 711.8L1488.5 712.0L1489.0 713.4L1489.5 713.1L1490.0 713.8L1490.5 713.4L1491.0 713.9L1491.5 713.4L1492.0 712.6L1492.5 710.9L1493.0 710.7L1493.5 711.3L1494.0 711.5L1494.5 707.8L1495.0 693.5L1495.5 681.5L1496.0 671.4L1496.5 658.2L1497.0 651.1L1497.5 649.6L1498.0 649.8L1498.5 649.4L1499.0 648.8L1499.5 649.1L1500.0 650.7L1500.5 651.1L1501.0 651.1L1501.5 650.8L1502.0 651.8L1502.5 652.6L1503.0 651.9L1503.5 651.7L1504.0 650.1L1504.5 650.9L1505.0 649.0L1505.5 650.4L1506.0 650.6L1506.5 651.0L1507.0 650.2L1507.5 653.6L1508.0 666.1L1508.5 679.5L1509.0 690.0L1509.5 704.7L1510.0 710.9L1510.5 713.4L1511.0 714.2L1511.5 714.8L1512.0 714.0L1512.5 713.6L1513.0 713.9L1513.5 713.4L1514.0 713.3L1514.5 711.6L1515.0 711.1L1515.5 712.3L1516.0 712.2L1516.5 700.6L1517.0 688.2L1517.5 679.4L1518.0 664.0L1518.5 651.1L1519.0 650.1L1519.5 650.1L1520.0 648.0L1520.5 650.5L1521.0 663.1L1521.5 675.6L1522.0 687.6L1522.5 702.7L1523.0 712.5L1523.5 713.4L1524.0 714.4L1524.5 713.2L1525.0 708.8L1525.5 695.9L1526.0 684.4L1526.5 670.8L1527.0 657.2L1527.5 650.5L1528.0 650.2L1528.5 648.5L1529.0 648.1L1529.5 657.1L1530.0 670.5L1530.5 683.4L1531.0 696.3L1531.5 709.3L1532.0 712.6L1532.5 713.1L1533.0 714.5L1533.5 713.5L1534.0 701.7L1534.5 688.4L1535.0 675.8L1535.5 663.7L1536.0 652.5L1536.5 650.6L1537.0 649.7L1537.5 649.8L1538.0 652.6L1538.5 664.9L1539.0 678.0L1539.5 689.5L1540.0 703.5L1540.5 712.8L1541.0 713.2L1541.5 713.8L1542.0 715.1L1542.5 706.2L1543.0 694.2L1543.5 681.4L1544.0 668.2L1544.5 655.3L1545.0 651.2L1545.5 650.0L1546.0 649.8L1546.5 649.9L1547.0 649.0L1547.5 649.8L1548.0 650.2L1548.5 649.7L1549.0 650.4L1549.5 651.5L1550.0 652.6L1550.5 650.9L1551.0 653.8L1551.5 666.7L1552.0 677.8L1552.5 687.8L1553.0 702.9L1553.5 711.7L1554.0 711.9L1554.5 713.5L1555.0 714.4L1555.5 715.0L1556.0 715.0L1556.5 712.7L1557.0 712.3L1557.5 713.0L1558.0 711.5L1558.5 712.2L1559.0 710.9L1559.5 711.9L1560.0 711.4L1560.5 712.2L1561.0 713.5L1561.5 712.8L1562.0 712.8L1562.5 714.1L1563.0 714.1L1563.5 713.4L1564.0 712.2L1564.5 711.4L1565.0 712.4L1565.5 711.4L1566.0 711.7L1566.5 712.7L1567.0 712.4L1567.5 711.7L1568.0 712.6L1568.5 708.6L1569.0 695.3L1569.5 683.7L1570.0 672.2L1570.5 658.4L1571.0 650.9L1571.5 649.7L1572.0 649.8L1572.5 648.9L1573.0 648.9L1573.5 649.9L1574.0 648.9L1574.5 649.2L1575.0 650.6L1575.5 651.4L1576.0 651.8L1576.5 651.6L1577.0 651.7L1577.5 663.1L1578.0 674.1L1578.5 685.5L1579.0 699.4L1579.5 711.1L1580.0 713.6L1580.5 713.7L1581.0 713.8L1581.5 711.2L1582.0 699.3L1582.5 686.5L1583.0 672.9L1583.5 661.3L1584.0 651.4L1584.5 650.2L1585.0 648.4L1585.5 649.2L1586.0 649.3L1586.5 649.5L1587.0 649.7L1587.5 650.8L1588.0 649.8L1588.5 651.1L1589.0 651.0L1589.5 652.0L1590.0 651.0L1590.5 650.2L1591.0 651.3L1591.5 649.4L1592.0 650.6L1592.5 649.4L1593.0 648.9L1593.5 650.0L1594.0 649.2L1594.5 650.6L1595.0 650.7L1595.5 649.8L1596.0 650.6L1596.5 651.9L1597.0 651.6L1597.5 650.6L1598.0 650.9L1598.5 651.4L1599.0 654.1L1599.5 668.0L1600.0 679.6L1600.5 691.6L1601.0 705.7L1601.5 712.1L1602.0 712.2L1602.5 712.8L1603.0 714.0L1603.5 706.6L1604.0 692.8L1604.5 681.8L1605.0 668.1L1605.5 655.0L1606.0 651.8L1606.5 648.9L1607.0 648.6L1607.5 649.4L1608.0 660.5L1608.5 675.0L1609.0 684.9L1609.5 698.9L1610.0 711.0L1610.5 712.7L1611.0 713.5L1611.5 713.3L1612.0 714.6L1612.5 715.0L1613.0 714.5L1613.5 712.2L1614.0 713.0L1614.5 712.9L1615.0 711.4L1615.5 712.3L1616.0 711.7L1616.5 704.7L1617.0 693.4L1617.5 683.1L1618.0 668.6L1618.5 655.0L1619.0 650.1L1619.5 650.9L1620.0 648.2L1620.5 648.7L1621.0 649.6L1621.5 648.1L1622.0 650.5L1622.5 649.2L1623.0 651.9L1623.5 652.2L1624.0 651.6L1624.5 651.3L1625.0 652.2L1625.5 664.3L1626.0 678.3L1626.5 687.3L1627.0 701.8L1627.5 710.7L1628.0 712.4L1628.5 713.1L1629.0 714.8L1629.5 708.5L1630.0 696.8L1630.5 683.6L1631.0 671.5L1631.5 657.0L1632.0 651.4L1632.5 650.1L1633.0 649.1L1633.5 649.4L1634.0 649.6L1634.5 649.3L1635.0 649.1L1635.5 649.8L1636.0 651.4L1636.5 650.9L1637.0 650.8L1637.5 651.1L1638.0 652.0L1638.5 652.0L1639.0 649.6L1639.5 649.9L1640.0 650.5L1640.5 649.4L1641.0 649.7L1641.5 649.7L1642.0 650.5L1642.5 653.1L1643.0 666.9L1643.5 680.0L1644.0 690.3L1644.5 703.1L1645.0 711.1L1645.5 713.3L1646.0 714.5L1646.5 714.6L1647.0 713.7L1647.5 714.3L1648.0 714.6L1648.5 712.1L1649.0 712.4L1649.5 712.7L1650.0 711.0L1650.5 711.4L1651.0 710.9L1651.5 700.6L1652.0 688.1L1652.5 677.9L1653.0 665.4L1653.5 650.9L1654.0 650.6L1654.5 649.3L1655.0 649.7L1655.5 649.9L1656.0 664.2L1656.5 675.8L1657.0 688.9L1657.5 701.7L1658.0 711.0L1658.5 712.0L1659.0 712.8L1659.5 714.2L1660.0 715.1L1660.5 713.0L1661.0 714.0L1661.5 712.2L1662.0 712.6L1662.5 712.0L1663.0 711.5L1663.5 711.4L1664.0 711.0L1664.5 711.7L1665.0 712.9L1665.5 712.5L1666.0 713.8L1666.5 712.3L1667.0 713.8L1667.5 713.4L1668.0 712.7L1668.5 713.0L1669.0 698.9L1669.5 686.0L1670.0 677.0L1670.5 663.1L1671.0 650.9L1671.5 650.4L1672.0 649.3L1672.5 649.3L1673.0 652.1L1673.5 665.1L1674.0 677.8L1674.5 690.6L1675.0 703.4L1675.5 712.5L1676.0 713.3L1676.5 714.2L1677.0 713.2L1677.5 707.9L1678.0 694.3L1678.5 682.3L1679.0 668.3L1679.5 654.6L1680.0 651.7L1680.5 650.1L1681.0 648.7L1681.5 649.6L1682.0 660.6L1682.5 672.3L1683.0 685.8L1683.5 699.1L1684.0 712.1L1684.5 711.7L1685.0 713.7L1685.5 714.1L1686.0 714.1L1686.5 713.3L1687.0 714.7L1687.5 713.8L1688.0 712.7L1688.5 711.7L1689.0 712.4L1689.5 711.6L1690.0 711.4L1690.5 712.7L1691.0 712.5L1691.5 713.5L1692.0 711.9L1692.5 714.1L1693.0 713.9L1693.5 712.8L1694.0 713.5L1694.5 712.6L1695.0 712.8L1695.5 711.2L1696.0 712.0L1696.5 712.4L1697.0 712.8L1697.5 712.3L1698.0 711.8L1698.5 712.0L1699.0 712.0L1699.5 699.6L1700.0 685.8L1700.5 676.4L1701.0 662.5L1701.5 650.4L1702.0 649.8L1702.5 649.6L1703.0 648.3L1703.5 652.1L1704.0 666.2L1704.5 679.3L1705.0 690.2L1705.5 704.7L1706.0 712.2L1706.5 712.8L1707.0 714.6L1707.5 714.6L1708.0 705.5L1708.5 694.0L1709.0 681.1L1709.5 669.4L1710.0 654.9L1710.5 650.8L1711.0 650.3L1711.5 648.2L1712.0 647.8L1712.5 660.6L1713.0 674.2L1713.5 684.2L1714.0 698.0L1714.5 711.4L1715.0 713.4L1715.5 714.4L1716.0 713.6L1716.5 711.6L1717.0 699.1L1717.5 686.0L1718.0 674.5L1718.5 660.6L1719.0 651.4L1719.5 650.0L1720.0 649.6L1720.5 649.3L1721.0 649.4L1721.5 648.6L1722.0 648.5L1722.5 650.8L1723.0 650.1L1723.5 650.8L1724.0 652.0L1724.5 652.3L1725.0 650.7L1725.5 661.6L1726.0 674.2L1726.5 684.2L1727.0 696.2L1727.5 711.0L1728.0 713.4L1728.5 713.7L1729.0 713.9L1729.5 713.7L1730.0 701.5L1730.5 686.6L1731.0 675.4L1731.5 662.6L1732.0 651.8L1732.5 650.9L1733.0 650.5L1733.5 648.7L1734.0 653.5L1734.5 665.8L1735.0 678.8L1735.5 691.5L1736.0 705.3L1736.5 712.2L1737.0 713.0L1737.5 714.7L1738.0 714.4L1738.5 714.6L1739.0 714.8L1739.5 712.7L1740.0 712.4L1740.5 712.3L1741.0 712.7L1741.5 711.0L1742.0 711.7L1742.5 710.8L1743.0 699.9L1743.5 688.2L1744.0 677.0L1744.5 663.7L1745.0 651.8L1745.5 649.8L1746.0 650.0L1746.5 649.8L1747.0 649.8L1747.5 648.7" fill="none" stroke="#f2ee70" stroke-width="0.95"/><text x="180.60000000000002" y="718" font-size="13" fill="#b0b0b0" text-anchor="middle" font-family="Liberation Sans, sans-serif">-10 ns</text><text x="354.95000000000005" y="718" font-size="13" fill="#b0b0b0" text-anchor="middle" font-family="Liberation Sans, sans-serif">-7.5 ns</text><text x="529.3" y="718" font-size="13" fill="#b0b0b0" text-anchor="middle" font-family="Liberation Sans, sans-serif">-5 ns</text><text x="703.65" y="718" font-size="13" fill="#b0b0b0" text-anchor="middle" font-family="Liberation Sans, sans-serif">-2.5 ns</text><text x="878.0" y="718" font-size="13" fill="#b0b0b0" text-anchor="middle" font-family="Liberation Sans, sans-serif">0 s</text><text x="1052.35" y="718" font-size="13" fill="#b0b0b0" text-anchor="middle" font-family="Liberation Sans, sans-serif">2.5 ns</text><text x="1226.7" y="718" font-size="13" fill="#b0b0b0" text-anchor="middle" font-family="Liberation Sans, sans-serif">5 ns</text><text x="1401.05" y="718" font-size="13" fill="#b0b0b0" text-anchor="middle" font-family="Liberation Sans, sans-serif">7.5 ns</text><text x="1575.4" y="718" font-size="13" fill="#b0b0b0" text-anchor="middle" font-family="Liberation Sans, sans-serif">10 ns</text><text x="1745" y="654" font-size="13" fill="#e8e070" text-anchor="end" font-family="Liberation Sans, sans-serif">232 mV</text><text x="1745" y="671" font-size="13" fill="#e8e070" text-anchor="end" font-family="Liberation Sans, sans-serif">116 mV</text><text x="1745" y="704" font-size="13" fill="#e8e070" text-anchor="end" font-family="Liberation Sans, sans-serif">-116 mV</text><text x="1745" y="720" font-size="13" fill="#e8e070" text-anchor="end" font-family="Liberation Sans, sans-serif">-232 mV</text><path d="M11 668H40L46 681L40 694H11Q9 694 9 692V670Q9 668 11 668Z" fill="#f4e628"/><text x="18" y="686" font-size="12" fill="#222" font-family="Liberation Sans">C 1</text><path d="M868 641H887L877.5 649.5Z" fill="#f08a30"/><path d="M868 651H887V670H882L877.5 677L873 670H868Z" fill="#000" stroke="#d88848" stroke-width="2"/><text x="877.5" y="666" font-size="13" font-weight="700" fill="#e0a060" text-anchor="middle" font-family="Liberation Sans">T</text><path d="M1732 681.5L1742 674V689Z" fill="#f4e628"/><rect x="1740" y="679" width="8" height="5" fill="#f4e628"/></svg>
<div style="position:absolute;left:19px;top:622px;font-size:13px;color:#1a1a1a;font-weight:400;white-space:pre;line-height:1;letter-spacing:0.15px;word-spacing:2.5px">Horizontal Zoom Scale</div><div style="position:absolute;left:168px;top:620px;width:90px;height:17px;background:#dcdcdc;border-radius:3px"></div><div style="position:absolute;left:185px;top:622px;font-size:13px;color:#1a1a1a;font-weight:400;white-space:pre;line-height:1;">2.50 ns/div</div><div style="position:absolute;left:275px;top:620px;width:36px;height:16px;background:#3c3c3c;border-radius:3px;border:1px solid #333;box-sizing:border-box"></div><div style="position:absolute;left:330px;top:620px;width:36px;height:16px;background:#3c3c3c;border-radius:3px;border:1px solid #333;box-sizing:border-box"></div><div style="position:absolute;left:587px;top:620px;width:36px;height:16px;background:#3c3c3c;border-radius:3px;border:1px solid #333;box-sizing:border-box"></div><div style="position:absolute;left:641px;top:620px;width:36px;height:16px;background:#3c3c3c;border-radius:3px;border:1px solid #333;box-sizing:border-box"></div><div style="position:absolute;left:288px;top:627px;width:11px;height:2px;background:#6a6a6a"></div><div style="position:absolute;left:292.5px;top:622.5px;width:2px;height:11px;background:#6a6a6a"></div><div style="position:absolute;left:600px;top:627px;width:11px;height:2px;background:#6a6a6a"></div><div style="position:absolute;left:604.5px;top:622.5px;width:2px;height:11px;background:#6a6a6a"></div><div style="position:absolute;left:342px;top:627px;width:12px;height:2px;background:#6a6a6a"></div><div style="position:absolute;left:653px;top:627px;width:12px;height:2px;background:#6a6a6a"></div><div style="position:absolute;left:378px;top:622px;font-size:13px;color:#1a1a1a;font-weight:400;white-space:pre;line-height:1;letter-spacing:0.15px;word-spacing:2.5px">(4.00 kx zoom)</div><div style="position:absolute;left:488px;top:622px;font-size:13px;color:#1a1a1a;font-weight:400;white-space:pre;line-height:1;letter-spacing:0.15px;word-spacing:2.5px">Vertical Zoom</div><div style="position:absolute;left:689px;top:622px;font-size:13px;color:#1a1a1a;font-weight:400;white-space:pre;line-height:1;letter-spacing:0.15px;word-spacing:2.5px">(1.00x zoom)</div><svg style="position:absolute;left:1727px;top:622px" width="12" height="12"><path d="M1 1L11 11M11 1L1 11" stroke="#a0a0a0" stroke-width="2"/></svg>
<svg style="position:absolute;left:1700px;top:588px" width="50" height="48" viewBox="1700 588 50 48"><path d="M1736 597Q1738 590 1741 597" fill="none" stroke="#333" stroke-width="1.2"/><path d="M1741 600H1748M1741 604H1748" stroke="#6a6020" stroke-width="1.5"/><path d="M1707 597H1741V631Z" fill="#4a4a4a" stroke="#0a3040" stroke-width="3.2" stroke-linejoin="round"/><path d="M1707 597H1741V631Z" fill="#4a4a4a" stroke="#22a8d0" stroke-width="1.6" stroke-linejoin="round"/><circle cx="1734" cy="603.5" r="4.2" fill="none" stroke="#22a8d0" stroke-width="1.8"/><path d="M1731 607L1723.5 614" stroke="#22a8d0" stroke-width="2.2"/></svg>
<div style="position:absolute;left:1744.0px;top:33.5px;width:200px;font-size:16px;color:#eeeeee;font-weight:700;white-space:pre;line-height:1;text-align:center;">Add New...</div>
<div style="position:absolute;left:1778px;top:56px;width:63px;height:37px;background:linear-gradient(#3c3c3c,#323232);border:1px solid #555;border-radius:5px;box-sizing:border-box;box-shadow:inset 0 -2px 0 #262626"></div>
<div style="position:absolute;left:1709.5px;top:68px;width:200px;font-size:14.3px;color:#f0f0f0;font-weight:400;white-space:pre;line-height:1;text-align:center;">Cursors</div>
<div style="position:absolute;left:1850px;top:56px;width:63px;height:37px;background:linear-gradient(#3c3c3c,#323232);border:1px solid #555;border-radius:5px;box-sizing:border-box;box-shadow:inset 0 -2px 0 #262626"></div>
<div style="position:absolute;left:1781.5px;top:67px;width:200px;font-size:15px;color:#f0f0f0;font-weight:400;white-space:pre;line-height:1;text-align:center;">Callout</div>
<div style="position:absolute;left:1778px;top:102px;width:63px;height:37px;background:linear-gradient(#3c3c3c,#323232);border:1px solid #555;border-radius:5px;box-sizing:border-box;box-shadow:inset 0 -2px 0 #262626"></div>
<div style="position:absolute;left:1709.5px;top:113px;width:200px;font-size:15px;color:#f0f0f0;font-weight:400;white-space:pre;line-height:1;text-align:center;">Measure</div>
<div style="position:absolute;left:1850px;top:102px;width:63px;height:37px;background:linear-gradient(#3c3c3c,#323232);border:1px solid #555;border-radius:5px;box-sizing:border-box;box-shadow:inset 0 -2px 0 #262626"></div>
<div style="position:absolute;left:1781.5px;top:113px;width:200px;font-size:15px;color:#f0f0f0;font-weight:400;white-space:pre;line-height:1;text-align:center;">Search</div>
<div style="position:absolute;left:1778px;top:148px;width:63px;height:37px;background:linear-gradient(#3c3c3c,#323232);border:1px solid #555;border-radius:5px;box-sizing:border-box;box-shadow:inset 0 -2px 0 #262626"></div>
<div style="position:absolute;left:1709.5px;top:152px;width:200px;font-size:14.5px;color:#f0f0f0;font-weight:400;white-space:pre;line-height:1;text-align:center;">Results</div>
<div style="position:absolute;left:1709.5px;top:169px;width:200px;font-size:14.5px;color:#f0f0f0;font-weight:400;white-space:pre;line-height:1;text-align:center;">Table</div>
<div style="position:absolute;left:1850px;top:148px;width:63px;height:37px;background:linear-gradient(#3c3c3c,#323232);border:1px solid #555;border-radius:5px;box-sizing:border-box;box-shadow:inset 0 -2px 0 #262626"></div>
<div style="position:absolute;left:1781.5px;top:159px;width:200px;font-size:15px;color:#f0f0f0;font-weight:400;white-space:pre;line-height:1;text-align:center;">Plot</div>
<div style="position:absolute;left:1778px;top:198px;width:63px;height:37px;background:linear-gradient(#3c3c3c,#323232);border:1px solid #555;border-radius:5px;box-sizing:border-box;box-shadow:inset 0 -2px 0 #262626"></div>
<svg style="position:absolute;left:1798px;top:205px" width="26" height="24"><rect x="2" y="2" width="20" height="18" fill="none" stroke="#bdbdbd" stroke-width="2" stroke-dasharray="3 2"/><circle cx="12" cy="10" r="5" fill="#303030" stroke="#d0d0d0" stroke-width="1.8"/><path d="M8.5 13.5L4 18" stroke="#d0d0d0" stroke-width="2.2"/><path d="M17 14L24 21L21 21L22.5 24L20 24.5L19 21.5L17 23Z" fill="#d0d0d0"/></svg>
<div style="position:absolute;left:1850px;top:198px;width:63px;height:37px;background:linear-gradient(#3c3c3c,#323232);border:1px solid #555;border-radius:5px;box-sizing:border-box;box-shadow:inset 0 -2px 0 #262626"></div>
<div style="position:absolute;left:1781.5px;top:209px;width:200px;font-size:15px;color:#f0f0f0;font-weight:400;white-space:pre;line-height:1;text-align:center;">More...</div>
<div style="position:absolute;left:1773px;top:191px;width:140px;height:1px;background:#4a4a4a"></div>
<div style="position:absolute;left:1773px;top:243px;width:140px;height:1px;background:#4a4a4a"></div>
<div style="position:absolute;left:1773px;top:257px;width:144px;height:249px;background:#c8c8c8;border-radius:5px"></div>
<div style="position:absolute;left:1773px;top:257px;width:144px;height:19px;background:#000;border-radius:5px 5px 0 0"></div>
<div style="position:absolute;left:1778px;top:260px;font-size:14.5px;color:#ffff70;font-weight:400;white-space:pre;line-height:1;">Meas 1</div>
<div style="position:absolute;left:1889px;top:261px;width:22px;height:11px;background:#f4f030;border-radius:6px"><div style="font-size:10px;line-height:11px;text-align:center;color:#000">1</div></div>
<div style="position:absolute;left:1778px;top:278.0px;font-size:14px;color:#1a1a1a;font-weight:400;white-space:pre;line-height:1;">Jitter Summary'</div>
<div style="position:absolute;left:1778px;top:297.05px;font-size:14px;color:#1a1a1a;font-weight:400;white-space:pre;line-height:1;">DR:</div>
<div style="position:absolute;left:1840px;top:297.05px;font-size:14px;color:#1a1a1a;font-weight:400;white-space:pre;line-height:1;">16.00 Gb/s</div>
<div style="position:absolute;left:1778px;top:316.1px;font-size:14px;color:#1a1a1a;font-weight:400;white-space:pre;line-height:1;">PL(UI):</div>
<div style="position:absolute;left:1840px;top:316.1px;font-size:14px;color:#1a1a1a;font-weight:400;white-space:pre;line-height:1;">511</div>
<div style="position:absolute;left:1778px;top:335.15px;font-size:14px;color:#1a1a1a;font-weight:400;white-space:pre;line-height:1;">TIE(σ):</div>
<div style="position:absolute;left:1840px;top:335.15px;font-size:14px;color:#1a1a1a;font-weight:400;white-space:pre;line-height:1;">727.4 fs</div>
<div style="position:absolute;left:1778px;top:354.2px;font-size:14px;color:#1a1a1a;font-weight:400;white-space:pre;line-height:1;">TJ@:</div>
<div style="position:absolute;left:1840px;top:354.2px;font-size:14px;color:#1a1a1a;font-weight:400;white-space:pre;line-height:1;">6.690 ps</div>
<div style="position:absolute;left:1778px;top:373.25px;font-size:14px;color:#1a1a1a;font-weight:400;white-space:pre;line-height:1;">RJ:</div>
<div style="position:absolute;left:1840px;top:373.25px;font-size:14px;color:#1a1a1a;font-weight:400;white-space:pre;line-height:1;">238.0 fs</div>
<div style="position:absolute;left:1778px;top:392.3px;font-size:14px;color:#1a1a1a;font-weight:400;white-space:pre;line-height:1;">DJ:</div>
<div style="position:absolute;left:1840px;top:392.3px;font-size:14px;color:#1a1a1a;font-weight:400;white-space:pre;line-height:1;">4.409 ps</div>
<div style="position:absolute;left:1778px;top:411.35px;font-size:14px;color:#1a1a1a;font-weight:400;white-space:pre;line-height:1;">DJ-δδ:</div>
<div style="position:absolute;left:1840px;top:411.35px;font-size:14px;color:#1a1a1a;font-weight:400;white-space:pre;line-height:1;">3.341 ps</div>
<div style="position:absolute;left:1778px;top:430.4px;font-size:14px;color:#1a1a1a;font-weight:400;white-space:pre;line-height:1;">PJ:</div>
<div style="position:absolute;left:1840px;top:430.4px;font-size:14px;color:#1a1a1a;font-weight:400;white-space:pre;line-height:1;">1.025 ps</div>
<div style="position:absolute;left:1778px;top:449.45000000000005px;font-size:14px;color:#1a1a1a;font-weight:400;white-space:pre;line-height:1;">DDJ:</div>
<div style="position:absolute;left:1840px;top:449.45000000000005px;font-size:14px;color:#1a1a1a;font-weight:400;white-space:pre;line-height:1;">3.384 ps</div>
<div style="position:absolute;left:1778px;top:468.5px;font-size:14px;color:#1a1a1a;font-weight:400;white-space:pre;line-height:1;">DCD:</div>
<div style="position:absolute;left:1840px;top:468.5px;font-size:14px;color:#1a1a1a;font-weight:400;white-space:pre;line-height:1;">471.9 fs</div>
<div style="position:absolute;left:1778px;top:487.55px;font-size:14px;color:#1a1a1a;font-weight:400;white-space:pre;line-height:1;">EW@:</div>
<div style="position:absolute;left:1840px;top:487.55px;font-size:14px;color:#1a1a1a;font-weight:400;white-space:pre;line-height:1;">55.81 ps</div>
<div style="position:absolute;left:1760px;top:502px;width:4px;height:4px;background:#bdbdbd;border-radius:2px"></div>
<div style="position:absolute;left:1760px;top:510px;width:4px;height:4px;background:#bdbdbd;border-radius:2px"></div>
<div style="position:absolute;left:1760px;top:518px;width:4px;height:4px;background:#bdbdbd;border-radius:2px"></div>
<div style="position:absolute;left:3px;top:1000px;width:90px;height:77px;background:#c8c8c8;border-radius:4px;overflow:hidden"><div style="position:absolute;left:0px;top:0px;width:90px;height:19px;background:#f6e92e"></div></div>
<div style="position:absolute;left:9px;top:1003px;font-size:15px;color:#111;font-weight:400;white-space:pre;line-height:1;">Ch 1</div>
<div style="position:absolute;left:9px;top:1022px;font-size:14px;color:#222;font-weight:400;white-space:pre;line-height:1;">58 mV/div</div>
<div style="position:absolute;left:9px;top:1041px;font-size:14px;color:#222;font-weight:400;white-space:pre;line-height:1;">50 Ω</div>
<div style="position:absolute;left:9px;top:1060px;font-size:14px;color:#222;font-weight:400;white-space:pre;line-height:1;">25 GHz</div>
<div style="position:absolute;left:918px;top:999px;width:39px;height:79px;background:linear-gradient(#363636,#2a2a2a);border:1px solid #4a4a4a;border-radius:5px;box-sizing:border-box"></div><div style="position:absolute;left:922px;top:1006px;width:31px;height:2px;background:#2ab8c8"></div>
<div style="position:absolute;left:837.5px;top:1034px;width:200px;font-size:19px;color:#e8e8e8;font-weight:400;white-space:pre;line-height:1;text-align:center;">2</div>
<div style="position:absolute;left:963px;top:999px;width:39px;height:79px;background:linear-gradient(#363636,#2a2a2a);border:1px solid #4a4a4a;border-radius:5px;box-sizing:border-box"></div><div style="position:absolute;left:967px;top:1006px;width:31px;height:2px;background:#d8384c"></div>
<div style="position:absolute;left:882.5px;top:1034px;width:200px;font-size:19px;color:#e8e8e8;font-weight:400;white-space:pre;line-height:1;text-align:center;">3</div>
<div style="position:absolute;left:1008px;top:999px;width:39px;height:79px;background:linear-gradient(#363636,#2a2a2a);border:1px solid #4a4a4a;border-radius:5px;box-sizing:border-box"></div><div style="position:absolute;left:1012px;top:1006px;width:31px;height:2px;background:#9fba2a"></div>
<div style="position:absolute;left:927.5px;top:1034px;width:200px;font-size:19px;color:#e8e8e8;font-weight:400;white-space:pre;line-height:1;text-align:center;">4</div>
<div style="position:absolute;left:1057px;top:1003px;width:1px;height:74px;background:#444"></div>
<div style="position:absolute;left:1068px;top:999px;width:40px;height:79px;background:linear-gradient(#363636,#2a2a2a);border:1px solid #4a4a4a;border-radius:5px;box-sizing:border-box"></div><div style="position:absolute;left:1072px;top:1006px;width:32px;height:2px;background:#20c080"></div>
<div style="position:absolute;left:988.0px;top:1019px;width:200px;font-size:14.5px;color:#e8e8e8;font-weight:400;white-space:pre;line-height:1;text-align:center;">Add</div>
<div style="position:absolute;left:988.0px;top:1036px;width:200px;font-size:14.5px;color:#e8e8e8;font-weight:400;white-space:pre;line-height:1;text-align:center;">New</div>
<div style="position:absolute;left:988.0px;top:1054px;width:200px;font-size:14.5px;color:#e8e8e8;font-weight:400;white-space:pre;line-height:1;text-align:center;">Math</div>
<div style="position:absolute;left:1113px;top:999px;width:40px;height:79px;background:linear-gradient(#363636,#2a2a2a);border:1px solid #4a4a4a;border-radius:5px;box-sizing:border-box"></div><div style="position:absolute;left:1117px;top:1006px;width:32px;height:2px;background:#e0d820"></div>
<div style="position:absolute;left:1033.0px;top:1019px;width:200px;font-size:14.5px;color:#e8e8e8;font-weight:400;white-space:pre;line-height:1;text-align:center;">Add</div>
<div style="position:absolute;left:1033.0px;top:1036px;width:200px;font-size:14.5px;color:#e8e8e8;font-weight:400;white-space:pre;line-height:1;text-align:center;">New</div>
<div style="position:absolute;left:1033.0px;top:1054px;width:200px;font-size:14.5px;color:#e8e8e8;font-weight:400;white-space:pre;line-height:1;text-align:center;">Ref</div>
<div style="position:absolute;left:1158px;top:999px;width:40px;height:79px;background:linear-gradient(#363636,#2a2a2a);border:1px solid #4a4a4a;border-radius:5px;box-sizing:border-box"></div><div style="position:absolute;left:1162px;top:1006px;width:32px;height:2px;background:#9848c8"></div>
<div style="position:absolute;left:1078.0px;top:1019px;width:200px;font-size:14.5px;color:#e8e8e8;font-weight:400;white-space:pre;line-height:1;text-align:center;">Add</div>
<div style="position:absolute;left:1078.0px;top:1036px;width:200px;font-size:14.5px;color:#e8e8e8;font-weight:400;white-space:pre;line-height:1;text-align:center;">New</div>
<div style="position:absolute;left:1078.0px;top:1054px;width:200px;font-size:14.5px;color:#e8e8e8;font-weight:400;white-space:pre;line-height:1;text-align:center;">Bus</div>
<div style="position:absolute;left:1208px;top:1003px;width:1px;height:74px;background:#444"></div>
<div style="position:absolute;left:1219px;top:999px;width:40px;height:79px;background:linear-gradient(#363636,#2a2a2a);border:1px solid #4a4a4a;border-radius:5px;box-sizing:border-box"></div><div style="position:absolute;left:1223px;top:1006px;width:32px;height:2px;background:#404040"></div>
<div style="position:absolute;left:1139.0px;top:1036px;width:200px;font-size:14.5px;color:#e8e8e8;font-weight:400;white-space:pre;line-height:1;text-align:center;">AFG</div>
<div style="position:absolute;left:1269px;top:1003px;width:1px;height:74px;background:#444"></div>
<div style="position:absolute;left:1281px;top:1000px;width:198px;height:77px;background:#c8c8c8;border-radius:4px;overflow:hidden;border:1px solid #555;box-sizing:border-box"><div style="position:absolute;left:0px;top:0px;width:198px;height:19px;background:#4a4a4a"></div></div><div style="position:absolute;left:1286px;top:1003px;font-size:15px;color:#f0f0f0;font-weight:400;white-space:pre;line-height:1;">Horizontal</div>
<div style="position:absolute;left:1286px;top:1022px;font-size:14px;color:#222;font-weight:400;white-space:pre;line-height:1;">10 μs/div</div>
<div style="position:absolute;left:1392px;top:1022px;font-size:14px;color:#222;font-weight:400;white-space:pre;line-height:1;">100 μs</div>
<div style="position:absolute;left:1284px;top:1041px;font-size:14px;color:#222;font-weight:400;white-space:pre;line-height:1;">SR: 125 GS/s</div>
<div style="position:absolute;left:1392px;top:1041px;font-size:14px;color:#222;font-weight:400;white-space:pre;line-height:1;">8 ps/pt</div>
<div style="position:absolute;left:1284px;top:1060px;font-size:14px;color:#222;font-weight:400;white-space:pre;line-height:1;">RL: 12.5 Mpts</div>
<div style="position:absolute;left:1391px;top:1061px;width:8px;height:10px;background:#e07a20;border-radius:1px"><div style="font-size:7px;line-height:10px;text-align:center;color:#000;font-weight:700">T</div></div>
<div style="position:absolute;left:1406px;top:1060px;font-size:14px;color:#222;font-weight:400;white-space:pre;line-height:1;">50%</div>
<div style="position:absolute;left:1486px;top:1000px;width:158px;height:77px;background:#c8c8c8;border-radius:4px;overflow:hidden;border:1px solid #555;box-sizing:border-box"><div style="position:absolute;left:0px;top:0px;width:158px;height:19px;background:#4a4a4a"></div></div><div style="position:absolute;left:1491px;top:1003px;font-size:15px;color:#f0f0f0;font-weight:400;white-space:pre;line-height:1;">Trigger</div>
<div style="position:absolute;left:1491px;top:1023px;width:29px;height:14px;background:#f4ec30;border:1px solid #333;border-radius:5px;box-sizing:border-box"><div style="font-size:11px;line-height:12px;text-align:center;color:#222">1</div></div>
<svg style="position:absolute;left:1530px;top:1023px" width="18" height="14"><path d="M1 13H4L12 2H17" fill="none" stroke="#4a4a7a" stroke-width="1.5"/></svg>
<div style="position:absolute;left:1555px;top:1022px;font-size:14.5px;color:#222;font-weight:400;white-space:pre;line-height:1;">-2.32 mV</div>
<div style="position:absolute;left:1651px;top:1000px;width:148px;height:77px;background:#c8c8c8;border-radius:4px;overflow:hidden;border:1px solid #555;box-sizing:border-box"><div style="position:absolute;left:0px;top:0px;width:148px;height:19px;background:#4a4a4a"></div></div><div style="position:absolute;left:1656px;top:1003px;font-size:15px;color:#f0f0f0;font-weight:400;white-space:pre;line-height:1;">Acquisition</div>
<div style="position:absolute;left:1655px;top:1022px;font-size:14px;color:#222;font-weight:400;white-space:pre;line-height:1;">Manual,</div>
<div style="position:absolute;left:1736px;top:1022px;font-size:14px;color:#222;font-weight:400;white-space:pre;line-height:1;">Analyze</div>
<div style="position:absolute;left:1655px;top:1041px;font-size:14px;color:#222;font-weight:400;white-space:pre;line-height:1;">Sample: 10 bits</div>
<div style="position:absolute;left:1655px;top:1060px;font-size:14px;color:#222;font-weight:400;white-space:pre;line-height:1;">Single: 1 /1</div>
<div style="position:absolute;left:1811px;top:1000px;width:1px;height:77px;background:#444"></div>
<div style="position:absolute;left:1822px;top:999px;width:90px;height:35px;background:#e8202c;border-radius:5px;border:1px solid #a01820;box-sizing:border-box"></div>
<div style="position:absolute;left:1767.0px;top:1010px;width:200px;font-size:13px;color:#ffffff;font-weight:700;white-space:pre;line-height:1;text-align:center;">Stopped</div>
</body></html>
